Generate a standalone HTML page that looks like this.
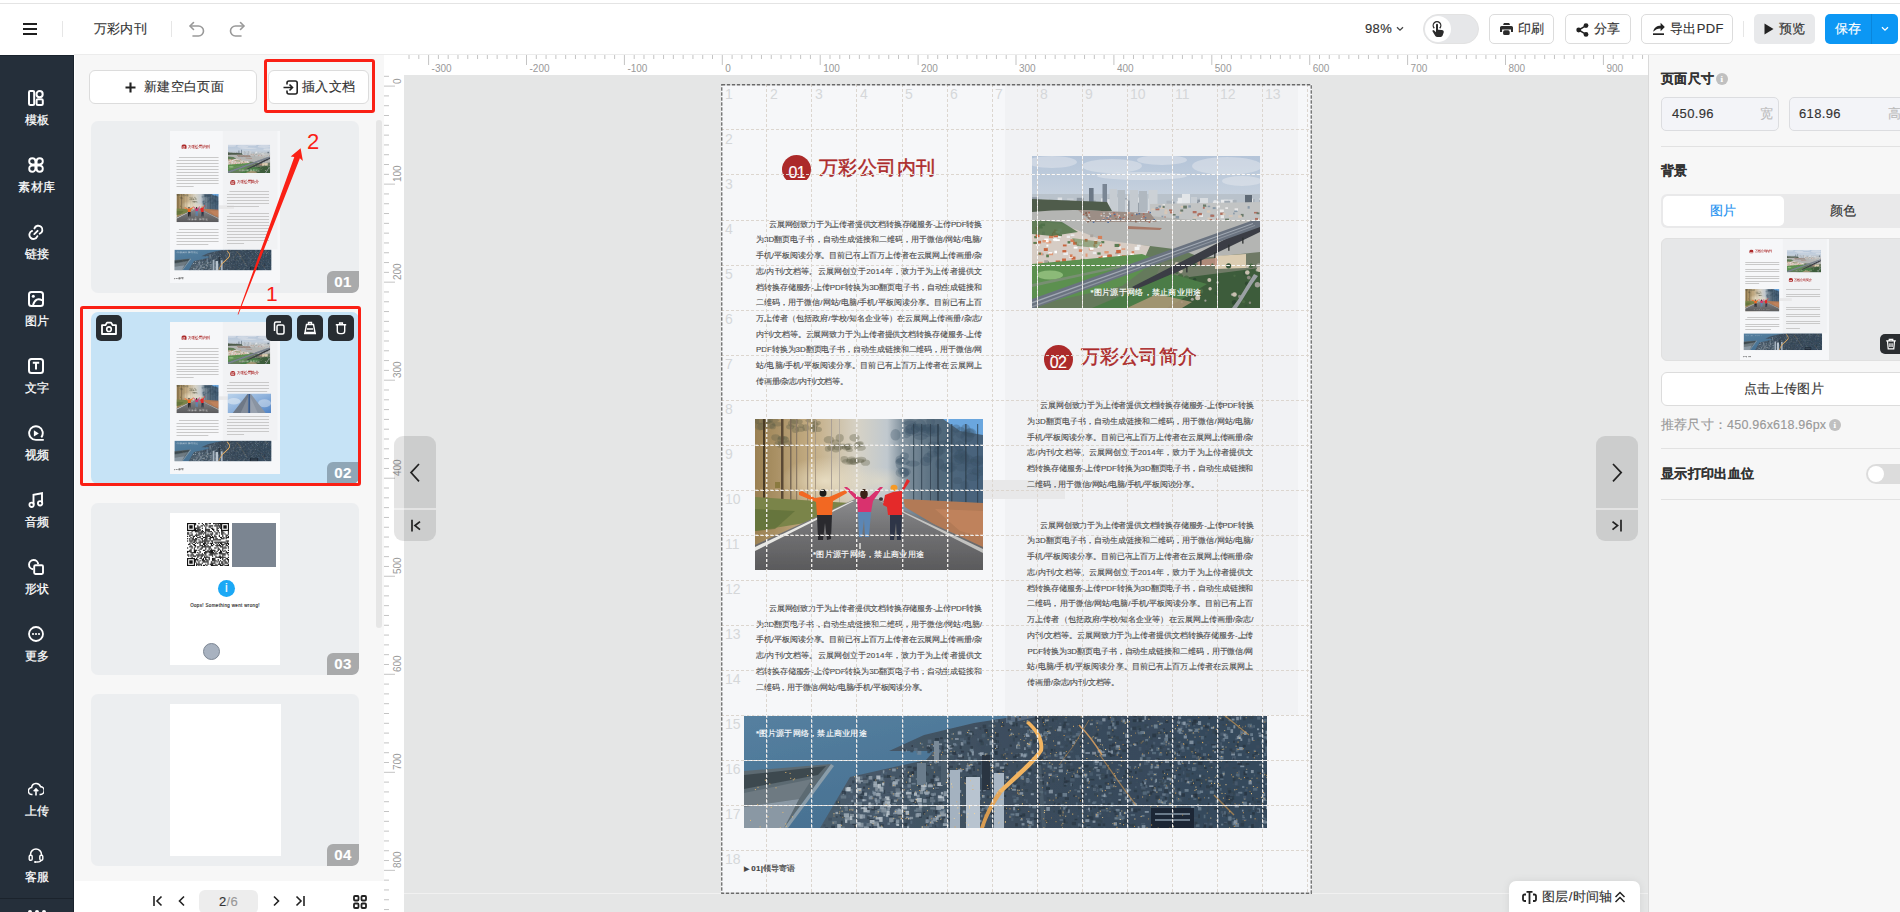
<!DOCTYPE html>
<html><head><meta charset="utf-8">
<style>
*{box-sizing:border-box;margin:0;padding:0}
html,body{width:1900px;height:912px;overflow:hidden;background:#fff;font-family:"Liberation Sans",sans-serif;color:#333;-webkit-text-stroke:0.15px currentColor;letter-spacing:0.35px}
.a{position:absolute}
/* header */
#topline{left:0;top:3px;width:1900px;height:1px;background:#e4e4e4}
.sep{width:1px;background:#e6e6e6}
.hbtn{height:30px;top:14px;border:1px solid #dcdcdc;border-radius:5px;background:#fff;font-size:13px;color:#333;line-height:28px;white-space:nowrap}
/* sidebar */
#side{left:0;top:55px;width:74px;height:857px;background:#252f3a}
.si{left:0;width:74px;text-align:center;color:#fff;font-size:12px}
.si svg{position:absolute;left:28px;top:0}
.si span{position:absolute;left:0;width:74px;top:23px;line-height:14px;-webkit-text-stroke:0.25px #fff}
/* left panel */
#lp{left:74px;top:55px;width:310px;height:826px;background:#f7f7f7;border-left:1px solid #fff}
.card{left:91px;width:268px;height:172px;background:#eceef0;border-radius:7px;overflow:hidden}
.badge{right:0;bottom:0;width:32px;height:22px;background:#a8a9aa;color:#fff;font-size:15px;font-weight:bold;text-align:center;line-height:22px;border-radius:6px 0 6px 0}
.thumb{left:79px;top:10px;width:110px;height:152px;background:#f4f5f7}
/* rulers */
.rul{background:#fff}
.rnum{font-size:10px;color:#999;position:absolute;white-space:nowrap;letter-spacing:0;-webkit-text-stroke:0}
#canvas{left:404px;top:75px;width:1244px;height:837px;background:#e5e6e6;overflow:hidden}
/* right panel */
#rp{left:1648px;top:55px;width:252px;height:857px;background:#f7f7f7;border-left:1px solid #dadada}

.tl{position:absolute;font-size:8px;line-height:12px;color:#4a4a4a;white-space:nowrap;-webkit-text-stroke:0.12px #4a4a4a}
.cap{position:absolute;font-size:8px;letter-spacing:0.28px;line-height:12px;color:#fff;white-space:nowrap}
.gn{position:absolute;font-size:14px;line-height:14px;color:#d5d7d9;-webkit-text-stroke:0}
.pg{position:absolute;width:591px;height:810px;background:#f6f7f9;letter-spacing:0}
.thumbp .tl{color:transparent;-webkit-text-stroke:0;background:linear-gradient(180deg,transparent 30%,#c9c9c9 30%,#c9c9c9 72%,transparent 72%)}
.thumbp .cap{color:rgba(255,255,255,.55);-webkit-text-stroke:0}
</style></head><body>
<!-- HEADER -->
<div class="a" id="topline"></div>
<div class="a" style="left:23px;top:23px;width:14px;height:2px;background:#1f1f1f"></div>
<div class="a" style="left:23px;top:28px;width:14px;height:2px;background:#1f1f1f"></div>
<div class="a" style="left:23px;top:33px;width:14px;height:2px;background:#1f1f1f"></div>
<div class="a sep" style="left:62px;top:21px;height:16px"></div>
<div class="a" style="left:93.5px;top:20px;font-size:13px;line-height:18px;color:#333">万彩内刊</div>
<div class="a sep" style="left:171px;top:21px;height:16px"></div>

<div class="a" style="left:1365px;top:20px;font-size:13px;line-height:18px;color:#333">98%</div>
<svg class="a" style="left:1395px;top:26px" width="10" height="6" viewBox="0 0 10 6"><path d="M2 1.2 L5 4.2 L8 1.2" fill="none" stroke="#444" stroke-width="1.3"/></svg>
<div class="a" style="left:1423px;top:14px;width:56px;height:30px;border-radius:15px;background:#e6e7e9;border:1px solid #e2e2e2"></div>
<div class="a" style="left:1425px;top:16px;width:26px;height:26px;border-radius:13px;background:#fff"></div>
<svg class="a" style="left:1428px;top:18px" width="20" height="22"><g transform="translate(-1428,-18)"><path d="M1434.3 28.2 A3.8 3.8 0 1 1 1439.7 28.2" fill="none" stroke="#2b2b2b" stroke-width="1.3"/><rect x="1436" y="23.8" width="2" height="8" rx="1" fill="#2b2b2b"/><path d="M1432.2 30.8 L1433.7 30.1 L1436 32.2 L1436 29.4 L1441.6 29.9 C1443.4 30.2 1444 31 1443.7 32.5 L1442.6 35.6 C1442.3 36.5 1441.6 37 1440.6 37 L1437.4 37 C1436.5 37 1435.8 36.6 1435.3 35.9z" fill="#2b2b2b"/></g></svg>
<div class="a hbtn" style="left:1489px;width:65px"></div>
<svg class="a" style="left:1499px;top:22px" width="15" height="14"><g transform="translate(-1499,-22)" fill="#2b2b2b"><path d="M1503.1 25 L1503.6 23.4 Q1503.8 23 1504.3 23 L1508.8 23 Q1509.3 23 1509.5 23.4 L1510 25z"/><path d="M1500 31.9 L1500 27.5 Q1500 25.9 1501.6 25.9 L1511.4 25.9 Q1513 25.9 1513 27.5 L1513 31.9 L1511 31.9 L1511 29.4 L1502.1 29.4 L1502.1 31.9z"/><rect x="1503.1" y="30.3" width="6.6" height="4.7" rx="1.6"/></g></svg>
<div class="a" style="left:1518px;top:20px;font-size:13px;line-height:18px">印刷</div>
<div class="a hbtn" style="left:1565px;width:66px"></div>
<svg class="a" style="left:1576px;top:22.5px" width="13" height="14" viewBox="0 0 13 14"><circle cx="10" cy="2.6" r="2.4" fill="#222"/><circle cx="2.7" cy="7" r="2.4" fill="#222"/><circle cx="10" cy="11.4" r="2.4" fill="#222"/><path d="M10 2.6 L2.7 7 L10 11.4" fill="none" stroke="#222" stroke-width="1.5"/></svg>
<div class="a" style="left:1594px;top:20px;font-size:13px;line-height:18px">分享</div>
<div class="a hbtn" style="left:1641px;width:92px"></div>
<svg class="a" style="left:1652px;top:21px" width="14" height="14" viewBox="0 0 14 14"><path d="M1 13.2 H12" stroke="#222" stroke-width="1.8"/><path d="M1.2 10.8 C2 6.5 4.8 4.8 8.6 4.8 V1.8 L12.8 6 L8.6 10.2 V7.4 C5.6 7.4 3.4 8.6 1.2 10.8z" fill="#222"/></svg>
<div class="a" style="left:1670px;top:20px;font-size:13px;line-height:18px">导出PDF</div>
<div class="a sep" style="left:1743px;top:21px;height:16px"></div>
<div class="a" style="left:1754px;top:14px;width:61px;height:30px;border-radius:5px;background:#e8e9eb"></div>
<svg class="a" style="left:1764px;top:23px" width="10" height="12" viewBox="0 0 10 12"><path d="M0.5 0.5 L9.5 6 L0.5 11.5z" fill="#222"/></svg>
<div class="a" style="left:1779px;top:20px;font-size:13px;line-height:18px">预览</div>
<div class="a" style="left:1825px;top:14px;width:73px;height:30px;border-radius:5px;background:#0c97f4"></div>
<div class="a" style="left:1871px;top:14px;width:1px;height:30px;background:#0a86dc"></div>
<div class="a" style="left:1835px;top:20px;font-size:13px;line-height:18px;color:#fff">保存</div>
<svg class="a" style="left:1880px;top:26px" width="10" height="6" viewBox="0 0 10 6"><path d="M2 1.2 L5 4.2 L8 1.2" fill="none" stroke="#fff" stroke-width="1.3"/></svg>
<svg class="a" style="left:188px;top:20px" width="18" height="18" viewBox="0 0 18 18"><path d="M5.5 2.5 L2 6 L5.5 9.5" fill="none" stroke="#999" stroke-width="1.6" stroke-linecap="round" stroke-linejoin="round"/><path d="M2.3 6 H10.5 a5 5 0 0 1 0 10 H5" fill="none" stroke="#999" stroke-width="1.6" stroke-linecap="round"/></svg>
<svg class="a" style="left:228px;top:20px" width="18" height="18" viewBox="0 0 18 18"><path d="M12.5 2.5 L16 6 L12.5 9.5" fill="none" stroke="#999" stroke-width="1.6" stroke-linecap="round" stroke-linejoin="round"/><path d="M15.7 6 H7.5 a5 5 0 0 0 0 10 H13" fill="none" stroke="#999" stroke-width="1.6" stroke-linecap="round"/></svg>

<!-- SIDEBAR -->
<div class="a" id="side"></div>
<div class="a" style="left:73px;top:55px;width:1px;height:857px;background:#1a232d"></div>
<div class="a" style="left:0;top:55px;width:74px;height:1px;background:#1a232d"></div>
<div class="a si" style="top:89.5px"><svg width="16" height="16" viewBox="0 0 16 16"><rect x="1" y="1" width="5.2" height="14" rx="1.3" fill="none" stroke="#fff" stroke-width="2"/><circle cx="11.6" cy="4.2" r="3.1" fill="none" stroke="#fff" stroke-width="2"/><rect x="8.6" y="9.2" width="6.2" height="5.8" rx="1.3" fill="none" stroke="#fff" stroke-width="2"/></svg><span>模板</span></div>
<div class="a si" style="top:156.5px"><svg width="16" height="16" viewBox="0 0 16 16"><path d="M4.3 1.2a3.1 3.1 0 0 1 3.1 3.1v3.1H4.3a3.1 3.1 0 0 1 0-6.2z" fill="none" stroke="#fff" stroke-width="1.9"/><path d="M11.7 1.2a3.1 3.1 0 0 1 0 6.2H8.6V4.3a3.1 3.1 0 0 1 3.1-3.1z" fill="none" stroke="#fff" stroke-width="1.9"/><path d="M4.3 14.8a3.1 3.1 0 0 1 0-6.2h3.1v3.1a3.1 3.1 0 0 1-3.1 3.1z" fill="none" stroke="#fff" stroke-width="1.9"/><path d="M11.7 14.8a3.1 3.1 0 0 1-3.1-3.1V8.6h3.1a3.1 3.1 0 0 1 0 6.2z" fill="none" stroke="#fff" stroke-width="1.9"/></svg><span>素材库</span></div>
<div class="a si" style="top:223.5px"><svg width="16" height="16" viewBox="0 0 16 16"><g fill="none" stroke="#fff" stroke-width="1.9" stroke-linecap="round"><path d="M6.45 4.4 A4.1 4.1 0 1 1 11.7 9.65"/><path d="M4.1 6.95 A4.1 4.1 0 1 0 9.35 12.2"/><path d="M6.3 10.1 L9.6 6.8"/></g></svg><span>链接</span></div>
<div class="a si" style="top:290.5px"><svg width="16" height="16" viewBox="0 0 16 16"><rect x="1" y="1" width="14" height="14" rx="2.5" fill="none" stroke="#fff" stroke-width="2"/><circle cx="5.3" cy="5.3" r="1.5" fill="#fff"/><path d="M5 14 C7 8 10 7 14.5 9.5" fill="none" stroke="#fff" stroke-width="1.9"/></svg><span>图片</span></div>
<div class="a si" style="top:357.5px"><svg width="16" height="16" viewBox="0 0 16 16"><rect x="1" y="1" width="14" height="14" rx="2.5" fill="none" stroke="#fff" stroke-width="2"/><path d="M4.8 4.8 H11.2 M8 4.8 V11.5" stroke="#fff" stroke-width="2"/></svg><span>文字</span></div>
<div class="a si" style="top:424.5px"><svg width="16" height="16" viewBox="0 0 16 16"><path d="M15.8 14.9 H7.9 A6.8 6.8 0 1 1 13.3 12.3" fill="none" stroke="#fff" stroke-width="1.9"/><path d="M5.9 5.3 L10.8 8.4 L5.9 11.5z" fill="#fff"/></svg><span>视频</span></div>
<div class="a si" style="top:491.5px"><svg width="16" height="16" viewBox="0 0 16 16"><path d="M5.5 12.5 V2.8 L14 1.2 V11" fill="none" stroke="#fff" stroke-width="1.9"/><circle cx="3.6" cy="12.8" r="2.2" fill="none" stroke="#fff" stroke-width="1.8"/><circle cx="12.1" cy="11.3" r="2.2" fill="none" stroke="#fff" stroke-width="1.8"/></svg><span>音频</span></div>
<div class="a si" style="top:558.5px"><svg width="16" height="16" viewBox="0 0 16 16"><path d="M5.2 10.2 A4.6 4.6 0 1 1 10.2 5.2" fill="none" stroke="#fff" stroke-width="1.9"/><rect x="6.2" y="6.2" width="8.8" height="8.8" rx="1.2" fill="none" stroke="#fff" stroke-width="1.9"/></svg><span>形状</span></div>
<div class="a si" style="top:625.5px"><svg width="16" height="16" viewBox="0 0 16 16"><circle cx="8" cy="8" r="7" fill="none" stroke="#fff" stroke-width="1.8"/><circle cx="5" cy="8" r="1.1" fill="#fff"/><circle cx="8" cy="8" r="1.1" fill="#fff"/><circle cx="11" cy="8" r="1.1" fill="#fff"/></svg><span>更多</span></div>
<div class="a si" style="top:780.5px"><svg width="16" height="16" viewBox="0 0 16 16"><path d="M4.5 13.5 H4 A3.5 3.5 0 0 1 3.6 6.5 A4.6 4.6 0 0 1 12.5 5.6 A3.9 3.9 0 0 1 12 13.5 H11.5" fill="none" stroke="#fff" stroke-width="1.6"/><path d="M8 14.5 V8.2 M5.7 10.2 L8 7.9 L10.3 10.2" fill="none" stroke="#fff" stroke-width="1.6"/></svg><span>上传</span></div>
<div class="a si" style="top:847px"><svg width="16" height="16" viewBox="0 0 16 16"><path d="M2.5 9 V7.5 a5.5 5.5 0 0 1 11 0 V9" fill="none" stroke="#fff" stroke-width="1.5"/><rect x="1.2" y="8.3" width="3" height="5" rx="1.3" fill="none" stroke="#fff" stroke-width="1.4"/><rect x="11.8" y="8.3" width="3" height="5" rx="1.3" fill="none" stroke="#fff" stroke-width="1.4"/><path d="M13.3 13 C13 14.8 11 15 9 15" fill="none" stroke="#fff" stroke-width="1.4"/><ellipse cx="7.5" cy="15" rx="1.6" ry="0.9" fill="#fff"/></svg><span>客服</span></div>
<div class="a" style="left:0;top:898px;width:74px;height:1px;background:#1b232c"></div>
<div class="a" style="left:28px;top:910px;width:4px;height:4px;border-radius:2px;background:#fff"></div><div class="a" style="left:35px;top:910px;width:4px;height:4px;border-radius:2px;background:#fff"></div><div class="a" style="left:42px;top:910px;width:4px;height:4px;border-radius:2px;background:#fff"></div>
<svg width="0" height="0" style="position:absolute;left:0;top:0"><defs><symbol id="ph1"><defs><linearGradient id="p1sky" x1="0" y1="0" x2="0" y2="1"><stop offset="0" stop-color="#b4c4d8"/><stop offset="0.35" stop-color="#cdd6e0"/><stop offset="1" stop-color="#d3d9e0"/></linearGradient></defs><rect width="228" height="152" fill="url(#p1sky)"/><filter id="p1b" x="0" y="0" width="1" height="1"><feGaussianBlur stdDeviation="0.6"/></filter><g filter="url(#p1b)"><ellipse cx="20" cy="6" rx="25" ry="6" fill="#e8ecf0" opacity=".45"/><ellipse cx="80" cy="10" rx="30" ry="7" fill="#e8ecf0" opacity=".45"/><ellipse cx="130" cy="4" rx="25" ry="5" fill="#e8ecf0" opacity=".45"/><ellipse cx="195" cy="10" rx="35" ry="9" fill="#e8ecf0" opacity=".45"/><ellipse cx="110" cy="20" rx="45" ry="4" fill="#e8ecf0" opacity=".45"/><ellipse cx="210" cy="25" rx="20" ry="5" fill="#e8ecf0" opacity=".45"/><rect x="0" y="38" width="228" height="16" fill="#b9c2cb"/><rect x="103.1" y="41.5" width="4.8" height="14.5" fill="#dde0e4"/><rect x="103.0" y="46.7" width="6.3" height="9.3" fill="#8d96a0"/><rect x="108.5" y="46.7" width="5.1" height="9.3" fill="#dde0e4"/><rect x="69.2" y="42.3" width="2.5" height="13.7" fill="#e8eaec"/><rect x="144.7" y="45.2" width="5.0" height="10.8" fill="#dde0e4"/><rect x="149.1" y="46.9" width="5.1" height="9.1" fill="#9ea8b2"/><rect x="189.6" y="47.8" width="2.3" height="8.2" fill="#c8ced4"/><rect x="136.7" y="45.7" width="5.9" height="10.3" fill="#8d96a0"/><rect x="192.1" y="43.5" width="4.6" height="12.5" fill="#dde0e4"/><rect x="1.0" y="43.4" width="2.4" height="12.6" fill="#dde0e4"/><rect x="227.5" y="42.1" width="7.0" height="13.9" fill="#e8eaec"/><rect x="57.9" y="44.4" width="5.8" height="11.6" fill="#9ea8b2"/><rect x="16.0" y="45.2" width="5.8" height="10.8" fill="#aab2ba"/><rect x="88.1" y="42.1" width="6.8" height="13.9" fill="#9ea8b2"/><rect x="48.7" y="47.6" width="6.6" height="8.4" fill="#dde0e4"/><rect x="223.5" y="47.5" width="4.0" height="8.5" fill="#e8eaec"/><rect x="45.3" y="45.6" width="5.4" height="10.4" fill="#aab2ba"/><rect x="75.8" y="42.7" width="6.8" height="13.3" fill="#9ea8b2"/><rect x="30.7" y="47.9" width="5.5" height="8.1" fill="#dde0e4"/><rect x="181.7" y="44.1" width="2.9" height="11.9" fill="#dde0e4"/><rect x="116.0" y="42.6" width="6.9" height="13.4" fill="#dde0e4"/><rect x="146.8" y="45.1" width="2.6" height="10.9" fill="#c8ced4"/><rect x="0.1" y="41.2" width="6.3" height="14.8" fill="#8d96a0"/><rect x="69.3" y="46.5" width="6.4" height="9.5" fill="#dde0e4"/><rect x="227.1" y="44.0" width="5.0" height="12.0" fill="#9ea8b2"/><rect x="225.6" y="46.2" width="3.1" height="9.8" fill="#8d96a0"/><rect x="75.0" y="47.5" width="3.5" height="8.5" fill="#9ea8b2"/><rect x="47.6" y="47.9" width="5.2" height="8.1" fill="#aab2ba"/><rect x="84.7" y="41.3" width="4.3" height="14.7" fill="#dde0e4"/><rect x="189.8" y="45.3" width="2.7" height="10.7" fill="#e8eaec"/><rect x="35.1" y="42.3" width="6.5" height="13.7" fill="#c8ced4"/><rect x="165.4" y="43.6" width="2.8" height="12.4" fill="#8d96a0"/><rect x="44.8" y="41.8" width="6.8" height="14.2" fill="#8d96a0"/><rect x="17.9" y="47.2" width="2.2" height="8.8" fill="#8d96a0"/><rect x="219.5" y="43.1" width="3.2" height="12.9" fill="#aab2ba"/><rect x="95.9" y="44.6" width="6.5" height="11.4" fill="#8d96a0"/><rect x="40.0" y="47.5" width="5.6" height="8.5" fill="#c8ced4"/><rect x="109.3" y="43.7" width="5.3" height="12.3" fill="#9ea8b2"/><rect x="63.9" y="46.6" width="6.6" height="9.4" fill="#9ea8b2"/><rect x="15.8" y="46.3" width="4.1" height="9.7" fill="#9ea8b2"/><rect x="40.2" y="44.0" width="3.8" height="12.0" fill="#c8ced4"/><rect x="21.0" y="44.8" width="2.7" height="11.2" fill="#aab2ba"/><rect x="149.8" y="43.9" width="5.5" height="12.1" fill="#c8ced4"/><rect x="134.5" y="44.7" width="6.6" height="11.3" fill="#aab2ba"/><rect x="159.8" y="47.9" width="6.8" height="8.1" fill="#e8eaec"/><rect x="17.1" y="45.8" width="2.3" height="10.2" fill="#c8ced4"/><rect x="227.9" y="44.2" width="2.4" height="11.8" fill="#e8eaec"/><rect x="10.1" y="42.8" width="6.7" height="13.2" fill="#c8ced4"/><rect x="180.9" y="45.5" width="6.6" height="10.5" fill="#e8eaec"/><rect x="107.9" y="42.0" width="2.4" height="14.0" fill="#9ea8b2"/><rect x="196.9" y="43.6" width="4.9" height="12.4" fill="#dde0e4"/><rect x="86.5" y="47.5" width="2.1" height="8.5" fill="#9ea8b2"/><rect x="145.8" y="41.8" width="7.0" height="14.2" fill="#e8eaec"/><rect x="75.3" y="43.1" width="6.7" height="12.9" fill="#dde0e4"/><rect x="100.4" y="47.4" width="6.2" height="8.6" fill="#8d96a0"/><rect x="6.8" y="44.6" width="5.0" height="11.4" fill="#c8ced4"/><rect x="218.3" y="42.5" width="2.6" height="13.5" fill="#e8eaec"/><rect x="209.9" y="47.9" width="3.3" height="8.1" fill="#aab2ba"/><rect x="32.7" y="44.4" width="5.1" height="11.6" fill="#aab2ba"/><rect x="150.5" y="41.8" width="4.2" height="14.2" fill="#aab2ba"/><rect x="92.3" y="43.6" width="3.3" height="12.4" fill="#c8ced4"/><rect x="200.7" y="43.9" width="3.9" height="12.1" fill="#aab2ba"/><rect x="47.9" y="45.5" width="2.7" height="10.5" fill="#9ea8b2"/><rect x="162.2" y="46.1" width="6.8" height="9.9" fill="#c8ced4"/><rect x="25.7" y="41.5" width="4.4" height="14.5" fill="#dde0e4"/><rect x="87.2" y="43.3" width="4.6" height="12.7" fill="#e8eaec"/><rect x="191.3" y="44.8" width="6.9" height="11.2" fill="#9ea8b2"/><rect x="188.9" y="43.7" width="3.4" height="12.3" fill="#e8eaec"/><rect x="161.6" y="45.8" width="4.9" height="10.2" fill="#8d96a0"/><rect x="4.4" y="44.8" width="2.7" height="11.2" fill="#9ea8b2"/><rect x="57" y="32" width="4.6" height="24" fill="#6c7886"/><rect x="70.5" y="28" width="4.5" height="28" fill="#7a8694"/><rect x="77.5" y="33" width="7.5" height="23" fill="#c6ccd2"/><rect x="85.5" y="34" width="7.5" height="22" fill="#b4bcc4"/><rect x="97.7" y="34" width="8.5" height="22" fill="#c4cad0"/><rect x="107" y="35" width="8" height="21" fill="#b0b8c0"/><rect x="116.5" y="34" width="9" height="22" fill="#ccd1d6"/><rect x="150" y="38" width="8" height="18" fill="#e2e5e8"/><rect x="159" y="41" width="6" height="15" fill="#c8ced4"/><rect x="168" y="42" width="8" height="14" fill="#d8dce0"/><rect x="213" y="39" width="7" height="17" fill="#5e6a76"/><rect x="0" y="88" width="228" height="64" fill="#657a5c"/><polygon points="0,43 75,46 80,55 50,58 0,60" fill="#4f5c4c"/><polygon points="118,48 228,46 228,64 160,66 118,62" fill="#c2c4c4"/><rect x="202.6" y="52.3" width="3.4" height="2.7" fill="#e8e8e8"/><rect x="167.1" y="58.1" width="3.1" height="2.7" fill="#e8e8e8"/><rect x="193.3" y="51.2" width="2.7" height="1.8" fill="#e8e8e8"/><rect x="201.1" y="56.6" width="1.6" height="1.8" fill="#8a9aa8"/><rect x="177.4" y="63.1" width="2.8" height="3.0" fill="#b07060"/><rect x="161.3" y="60.7" width="3.8" height="1.6" fill="#d8c8b8"/><rect x="132.3" y="55.3" width="3.1" height="2.9" fill="#d8c8b8"/><rect x="178.5" y="58.4" width="2.8" height="2.7" fill="#8a9aa8"/><rect x="169.0" y="58.4" width="2.0" height="2.6" fill="#e8e8e8"/><rect x="141.5" y="62.4" width="4.0" height="3.0" fill="#6a7a6a"/><rect x="225.4" y="62.9" width="2.2" height="2.6" fill="#e8e8e8"/><rect x="156.3" y="49.3" width="2.6" height="2.3" fill="#8a9aa8"/><rect x="171.6" y="48.5" width="3.5" height="1.6" fill="#e8e8e8"/><rect x="137.0" y="53.4" width="3.5" height="1.7" fill="#b07060"/><rect x="228.0" y="62.4" width="2.8" height="2.5" fill="#d8c8b8"/><rect x="222.0" y="55.9" width="3.9" height="1.6" fill="#b07060"/><rect x="166.3" y="56.9" width="3.6" height="2.3" fill="#b07060"/><rect x="175.5" y="61.5" width="2.9" height="2.0" fill="#d8c8b8"/><rect x="223.0" y="61.9" width="3.0" height="2.0" fill="#b07060"/><rect x="224.5" y="56.4" width="2.9" height="1.8" fill="#6a7a6a"/><rect x="130.6" y="48.1" width="2.4" height="2.3" fill="#e8e8e8"/><rect x="174.8" y="54.4" width="3.5" height="2.3" fill="#d8c8b8"/><rect x="128.3" y="50.7" width="3.8" height="2.2" fill="#d8c8b8"/><rect x="147.6" y="55.6" width="1.8" height="2.2" fill="#d8c8b8"/><rect x="175.7" y="49.7" width="2.5" height="1.5" fill="#8a9aa8"/><rect x="132.2" y="60.5" width="1.6" height="1.8" fill="#b07060"/><rect x="119.3" y="52.5" width="3.3" height="1.9" fill="#d8c8b8"/><rect x="129.5" y="59.7" width="1.8" height="2.3" fill="#8a9aa8"/><rect x="196.9" y="59.2" width="3.7" height="1.5" fill="#d8c8b8"/><rect x="208.8" y="57.9" width="2.8" height="2.8" fill="#6a7a6a"/><rect x="188.2" y="56.5" width="3.6" height="2.4" fill="#b07060"/><rect x="143.6" y="59.9" width="3.5" height="2.9" fill="#8a9aa8"/><rect x="184.3" y="62.3" width="2.0" height="2.7" fill="#b07060"/><rect x="215.6" y="50.1" width="2.1" height="2.6" fill="#8a9aa8"/><rect x="160.7" y="55.0" width="3.9" height="2.3" fill="#b07060"/><rect x="140.1" y="58.0" width="3.5" height="1.6" fill="#6a7a6a"/><rect x="193.1" y="62.6" width="3.9" height="1.7" fill="#6a7a6a"/><rect x="187.8" y="53.5" width="4.0" height="2.7" fill="#e8e8e8"/><rect x="171.0" y="48.4" width="3.4" height="2.4" fill="#6a7a6a"/><rect x="170.9" y="51.0" width="1.8" height="1.8" fill="#b07060"/><rect x="226.9" y="62.8" width="1.7" height="1.6" fill="#d8c8b8"/><rect x="126.5" y="49.5" width="2.5" height="2.1" fill="#8a9aa8"/><rect x="165.3" y="57.6" width="1.5" height="2.6" fill="#b07060"/><rect x="137.9" y="55.3" width="3.3" height="2.1" fill="#b07060"/><rect x="184.5" y="49.5" width="3.5" height="2.0" fill="#e8e8e8"/><rect x="206.2" y="59.3" width="3.7" height="2.4" fill="#d8c8b8"/><rect x="180.7" y="51.1" width="3.0" height="2.0" fill="#8a9aa8"/><rect x="148.7" y="49.9" width="3.4" height="1.7" fill="#d8c8b8"/><rect x="132.7" y="53.3" width="2.8" height="2.1" fill="#d8c8b8"/><rect x="202.2" y="54.5" width="3.3" height="1.6" fill="#8a9aa8"/><rect x="151.2" y="49.6" width="3.7" height="3.0" fill="#6a7a6a"/><rect x="123.5" y="52.4" width="3.9" height="1.9" fill="#b07060"/><rect x="190.6" y="57.1" width="2.8" height="2.1" fill="#d8c8b8"/><rect x="188.6" y="59.2" width="3.4" height="3.0" fill="#e8e8e8"/><rect x="130.6" y="49.7" width="2.1" height="2.2" fill="#6a7a6a"/><rect x="123.6" y="51.1" width="2.4" height="1.6" fill="#8a9aa8"/><rect x="148.3" y="53.5" width="2.9" height="2.1" fill="#6a7a6a"/><rect x="180.5" y="63.9" width="3.1" height="2.7" fill="#e8e8e8"/><rect x="178.4" y="58.7" width="3.9" height="2.1" fill="#b07060"/><rect x="160.4" y="63.5" width="3.6" height="2.3" fill="#6a7a6a"/><path d="M0 56 C20 54 45 53 70 55 L118 60 L160 64 L228 64 L228 102 L175 104 L150 94 L118 90 L70 86 L35 80 L0 72z" fill="#b4b5b3"/><polygon points="46,54 118,57 125,66 60,66" fill="#9c8e86"/><rect x="54.4" y="65.4" width="1.6" height="1.3" fill="#806050"/><rect x="71.3" y="59.4" width="1.6" height="1.3" fill="#d0d0d0"/><rect x="77.4" y="58.1" width="1.6" height="1.3" fill="#d0d0d0"/><rect x="92.0" y="58.1" width="1.6" height="1.3" fill="#d0d0d0"/><rect x="52.0" y="63.5" width="1.6" height="1.3" fill="#d0a090"/><rect x="53.2" y="56.7" width="1.6" height="1.3" fill="#806050"/><rect x="54.0" y="58.5" width="1.6" height="1.3" fill="#806050"/><rect x="53.8" y="65.9" width="1.6" height="1.3" fill="#d0d0d0"/><rect x="55.5" y="65.0" width="1.6" height="1.3" fill="#806050"/><rect x="103.9" y="57.8" width="1.6" height="1.3" fill="#5070a0"/><rect x="53.4" y="56.1" width="1.6" height="1.3" fill="#806050"/><rect x="60.8" y="65.6" width="1.6" height="1.3" fill="#5070a0"/><rect x="95.3" y="56.3" width="1.6" height="1.3" fill="#d0a090"/><rect x="81.3" y="56.3" width="1.6" height="1.3" fill="#b06050"/><rect x="76.8" y="56.7" width="1.6" height="1.3" fill="#d0d0d0"/><rect x="83.2" y="62.3" width="1.6" height="1.3" fill="#806050"/><rect x="95.1" y="62.0" width="1.6" height="1.3" fill="#806050"/><rect x="77.3" y="63.2" width="1.6" height="1.3" fill="#5070a0"/><rect x="121.4" y="63.1" width="1.6" height="1.3" fill="#5070a0"/><rect x="86.1" y="60.5" width="1.6" height="1.3" fill="#d0d0d0"/><rect x="108.8" y="61.9" width="1.6" height="1.3" fill="#d0d0d0"/><rect x="70.6" y="61.7" width="1.6" height="1.3" fill="#d0a090"/><rect x="102.4" y="57.1" width="1.6" height="1.3" fill="#d0d0d0"/><rect x="106.5" y="57.1" width="1.6" height="1.3" fill="#5070a0"/><rect x="87.7" y="62.2" width="1.6" height="1.3" fill="#5070a0"/><rect x="115.9" y="55.4" width="1.6" height="1.3" fill="#b06050"/><rect x="50.7" y="57.9" width="1.6" height="1.3" fill="#b06050"/><rect x="96.8" y="56.1" width="1.6" height="1.3" fill="#d0a090"/><rect x="70.9" y="63.3" width="1.6" height="1.3" fill="#5070a0"/><rect x="91.3" y="61.9" width="1.6" height="1.3" fill="#d0d0d0"/><rect x="86.3" y="58.9" width="1.6" height="1.3" fill="#d0d0d0"/><rect x="75.8" y="63.2" width="1.6" height="1.3" fill="#b06050"/><rect x="110.2" y="59.9" width="1.6" height="1.3" fill="#d0a090"/><rect x="112.8" y="63.5" width="1.6" height="1.3" fill="#806050"/><rect x="81.8" y="57.8" width="1.6" height="1.3" fill="#5070a0"/><rect x="77.7" y="62.2" width="1.6" height="1.3" fill="#d0a090"/><rect x="74.4" y="61.0" width="1.6" height="1.3" fill="#5070a0"/><rect x="82.1" y="59.1" width="1.6" height="1.3" fill="#b06050"/><rect x="84.7" y="58.6" width="1.6" height="1.3" fill="#d0a090"/><rect x="56.2" y="61.2" width="1.6" height="1.3" fill="#806050"/><rect x="111.1" y="60.1" width="1.6" height="1.3" fill="#b06050"/><rect x="55.7" y="57.3" width="1.6" height="1.3" fill="#d0a090"/><rect x="56.1" y="58.3" width="1.6" height="1.3" fill="#d0d0d0"/><rect x="71.2" y="56.6" width="1.6" height="1.3" fill="#d0d0d0"/><rect x="99.3" y="58.6" width="1.6" height="1.3" fill="#b06050"/><rect x="74.2" y="59.9" width="1.6" height="1.3" fill="#d0a090"/><rect x="118.9" y="65.3" width="1.6" height="1.3" fill="#d0d0d0"/><rect x="82.8" y="63.8" width="1.6" height="1.3" fill="#d0d0d0"/><rect x="84.4" y="57.4" width="1.6" height="1.3" fill="#d0a090"/><rect x="68.6" y="59.0" width="1.6" height="1.3" fill="#d0d0d0"/><rect x="51.8" y="62.4" width="1.6" height="1.3" fill="#d0a090"/><rect x="79.1" y="57.1" width="1.6" height="1.3" fill="#d0a090"/><rect x="77.6" y="59.3" width="1.6" height="1.3" fill="#5070a0"/><rect x="112.7" y="61.2" width="1.6" height="1.3" fill="#5070a0"/><rect x="56.7" y="60.0" width="1.6" height="1.3" fill="#d0d0d0"/><rect x="110.9" y="57.4" width="1.6" height="1.3" fill="#b06050"/><rect x="90.8" y="61.2" width="1.6" height="1.3" fill="#b06050"/><rect x="98.8" y="63.8" width="1.6" height="1.3" fill="#b06050"/><rect x="93.6" y="58.4" width="1.6" height="1.3" fill="#d0a090"/><rect x="56.3" y="55.9" width="1.6" height="1.3" fill="#b06050"/><rect x="117.4" y="55.9" width="1.6" height="1.3" fill="#5070a0"/><rect x="57.3" y="64.0" width="1.6" height="1.3" fill="#806050"/><rect x="68.4" y="57.4" width="1.6" height="1.3" fill="#d0a090"/><rect x="75.4" y="60.0" width="1.6" height="1.3" fill="#d0d0d0"/><rect x="75.3" y="65.7" width="1.6" height="1.3" fill="#5070a0"/><rect x="87.0" y="60.9" width="1.6" height="1.3" fill="#b06050"/><rect x="103.1" y="65.1" width="1.6" height="1.3" fill="#806050"/><rect x="106.8" y="65.8" width="1.6" height="1.3" fill="#d0d0d0"/><rect x="114.0" y="63.9" width="1.6" height="1.3" fill="#b06050"/><rect x="116.6" y="65.5" width="1.6" height="1.3" fill="#b06050"/><polygon points="95,70 130,72 128,74 96,73" fill="#a06048" opacity=".7"/><path d="M0 65 L30 68 L70 84 L118 90 L110 108 L0 110z" fill="#d6ccc4"/><rect x="60.8" y="95.8" width="3.3" height="2.3" fill="#ececec"/><rect x="17.0" y="97.1" width="4.1" height="2.1" fill="#e09a78"/><rect x="45.2" y="88.2" width="4.9" height="1.6" fill="#aaa49e"/><rect x="75.2" y="98.6" width="4.7" height="3.0" fill="#c8663f"/><rect x="2.0" y="86.2" width="2.9" height="1.9" fill="#d4805a"/><rect x="41.7" y="90.7" width="3.8" height="1.9" fill="#ffffff"/><rect x="21.5" y="77.8" width="4.7" height="3.4" fill="#c8663f"/><rect x="72.7" y="105.6" width="4.6" height="2.5" fill="#ffffff"/><rect x="46.7" y="106.1" width="3.4" height="1.9" fill="#ececec"/><rect x="5.8" y="105.8" width="4.9" height="3.1" fill="#e09a78"/><rect x="89.8" y="99.1" width="4.0" height="2.0" fill="#d4805a"/><rect x="1.3" y="85.9" width="3.4" height="2.0" fill="#5c7c52"/><rect x="48.9" y="102.7" width="2.5" height="2.1" fill="#e09a78"/><rect x="30.1" y="102.5" width="3.9" height="3.5" fill="#c8663f"/><rect x="30.9" y="88.5" width="3.7" height="1.9" fill="#c8663f"/><rect x="23.7" y="104.5" width="4.5" height="1.7" fill="#c8663f"/><rect x="31.3" y="96.1" width="4.7" height="2.9" fill="#ececec"/><rect x="9.6" y="97.4" width="2.1" height="1.9" fill="#aaa49e"/><rect x="22.4" y="94.7" width="2.6" height="2.6" fill="#ffffff"/><rect x="35.5" y="85.6" width="3.1" height="2.9" fill="#ececec"/><rect x="12.3" y="82.6" width="4.2" height="3.1" fill="#ffffff"/><rect x="14.1" y="84.7" width="4.1" height="2.5" fill="#e09a78"/><rect x="89.5" y="102.0" width="4.7" height="1.8" fill="#f4f4f4"/><rect x="72.8" y="105.4" width="4.9" height="3.0" fill="#aaa49e"/><rect x="21.9" y="81.8" width="3.0" height="3.4" fill="#ececec"/><rect x="65.3" y="96.4" width="3.3" height="2.3" fill="#5c7c52"/><rect x="11.8" y="92.1" width="4.0" height="2.9" fill="#c8663f"/><rect x="20.9" y="82.9" width="3.8" height="1.7" fill="#ffffff"/><rect x="26.3" y="72.6" width="3.3" height="3.0" fill="#ececec"/><rect x="39.6" y="100.6" width="3.9" height="3.0" fill="#c8663f"/><rect x="38.4" y="83.3" width="4.2" height="2.7" fill="#d4805a"/><rect x="36.9" y="99.1" width="4.0" height="2.7" fill="#f4f4f4"/><rect x="2.2" y="79.9" width="2.9" height="2.4" fill="#5c7c52"/><rect x="38.6" y="78.3" width="3.8" height="1.8" fill="#ececec"/><rect x="88.9" y="103.9" width="3.1" height="2.5" fill="#f4f4f4"/><rect x="16.4" y="96.0" width="3.7" height="1.6" fill="#f4f4f4"/><rect x="76.5" y="98.6" width="2.7" height="2.7" fill="#c8663f"/><rect x="104.9" y="88.8" width="3.7" height="2.0" fill="#ececec"/><rect x="105.5" y="107.7" width="3.8" height="1.7" fill="#5c7c52"/><rect x="66.5" y="100.9" width="3.8" height="3.1" fill="#c8663f"/><rect x="52.7" y="82.9" width="2.9" height="2.8" fill="#c8663f"/><rect x="68.7" y="99.8" width="2.5" height="2.3" fill="#d4805a"/><rect x="3.8" y="88.2" width="3.7" height="1.8" fill="#ececec"/><rect x="65.9" y="79.9" width="4.2" height="3.1" fill="#d4805a"/><rect x="46.8" y="86.9" width="3.4" height="2.3" fill="#ececec"/><rect x="72.4" y="95.0" width="4.3" height="2.5" fill="#e09a78"/><rect x="115.4" y="101.2" width="4.5" height="1.7" fill="#e09a78"/><rect x="13.3" y="105.4" width="3.6" height="2.4" fill="#5c7c52"/><rect x="6.3" y="96.5" width="4.2" height="2.7" fill="#e09a78"/><rect x="14.4" y="84.8" width="4.9" height="2.5" fill="#e09a78"/><rect x="12.2" y="104.2" width="4.0" height="3.4" fill="#aaa49e"/><rect x="102.1" y="108.0" width="4.6" height="2.3" fill="#5c7c52"/><rect x="86.6" y="89.8" width="2.3" height="3.1" fill="#ececec"/><rect x="14.4" y="88.6" width="2.0" height="2.0" fill="#ffffff"/><rect x="34.7" y="79.6" width="3.3" height="2.4" fill="#ececec"/><rect x="35.5" y="85.1" width="2.9" height="2.5" fill="#5c7c52"/><rect x="108.3" y="107.0" width="4.6" height="1.9" fill="#ffffff"/><rect x="99.6" y="95.1" width="2.6" height="3.2" fill="#d4805a"/><rect x="41.1" y="85.8" width="3.9" height="2.9" fill="#c8663f"/><rect x="64.9" y="88.4" width="2.6" height="3.3" fill="#f4f4f4"/><rect x="5.8" y="70.5" width="4.9" height="2.0" fill="#5c7c52"/><rect x="48.8" y="102.9" width="4.1" height="3.4" fill="#5c7c52"/><rect x="25.9" y="78.9" width="2.8" height="2.9" fill="#f4f4f4"/><rect x="58.2" y="78.4" width="3.1" height="2.8" fill="#aaa49e"/><rect x="102.6" y="90.8" width="4.9" height="3.3" fill="#f4f4f4"/><rect x="20.9" y="75.5" width="3.9" height="1.7" fill="#c8663f"/><rect x="61.3" y="88.3" width="2.0" height="2.7" fill="#d4805a"/><rect x="62.3" y="83.8" width="2.5" height="3.5" fill="#ececec"/><rect x="22.0" y="73.5" width="2.6" height="3.3" fill="#d4805a"/><rect x="53.5" y="97.5" width="2.0" height="3.3" fill="#e09a78"/><rect x="7.0" y="68.7" width="3.0" height="2.5" fill="#5c7c52"/><rect x="3.7" y="78.2" width="3.8" height="3.0" fill="#c8663f"/><rect x="13.0" y="84.3" width="3.6" height="2.0" fill="#ffffff"/><rect x="83.1" y="96.3" width="3.5" height="1.9" fill="#aaa49e"/><rect x="67.3" y="87.0" width="2.6" height="3.4" fill="#d4805a"/><rect x="6.1" y="84.8" width="3.0" height="2.7" fill="#c8663f"/><rect x="70.6" y="99.9" width="4.2" height="3.2" fill="#ffffff"/><rect x="3.6" y="70.8" width="3.7" height="2.6" fill="#c8663f"/><rect x="17.0" y="79.1" width="4.1" height="3.1" fill="#d4805a"/><rect x="85.7" y="98.8" width="2.3" height="3.1" fill="#ffffff"/><rect x="19.9" y="76.7" width="3.5" height="2.8" fill="#c8663f"/><rect x="69.1" y="85.1" width="3.2" height="2.2" fill="#5c7c52"/><rect x="25.1" y="106.8" width="2.4" height="3.0" fill="#d4805a"/><rect x="86.4" y="87.9" width="2.0" height="2.3" fill="#d4805a"/><rect x="64.5" y="85.8" width="4.9" height="2.9" fill="#ececec"/><rect x="83.2" y="107.0" width="2.9" height="1.7" fill="#f4f4f4"/><rect x="10.0" y="75.5" width="3.0" height="3.5" fill="#aaa49e"/><rect x="46.8" y="93.3" width="4.2" height="2.6" fill="#d4805a"/><rect x="105.8" y="103.1" width="3.4" height="2.3" fill="#c8663f"/><rect x="23.6" y="75.0" width="4.3" height="2.4" fill="#ffffff"/><rect x="56.9" y="92.3" width="4.6" height="1.9" fill="#c8663f"/><rect x="21.1" y="77.0" width="3.7" height="2.8" fill="#e09a78"/><rect x="6.6" y="96.6" width="2.4" height="2.0" fill="#5c7c52"/><rect x="115.8" y="101.2" width="2.2" height="3.3" fill="#ffffff"/><rect x="37.7" y="98.4" width="2.9" height="2.7" fill="#d4805a"/><rect x="24.2" y="83.2" width="3.6" height="1.8" fill="#ffffff"/><rect x="84.2" y="94.0" width="4.6" height="3.2" fill="#c8663f"/><rect x="62.1" y="84.9" width="3.2" height="3.2" fill="#c8663f"/><rect x="26.2" y="78.3" width="3.8" height="1.8" fill="#5c7c52"/><rect x="98.4" y="97.4" width="3.7" height="3.1" fill="#ffffff"/><rect x="77.8" y="104.6" width="3.7" height="2.2" fill="#f4f4f4"/><rect x="14.2" y="98.5" width="2.7" height="2.8" fill="#5c7c52"/><rect x="10.4" y="84.0" width="3.5" height="2.5" fill="#e09a78"/><rect x="82.6" y="87.9" width="4.7" height="3.1" fill="#5c7c52"/><rect x="106.1" y="103.9" width="3.1" height="1.6" fill="#ececec"/><rect x="57.5" y="90.6" width="4.2" height="3.3" fill="#ffffff"/><rect x="8.4" y="67.5" width="4.7" height="2.6" fill="#5c7c52"/><rect x="30.4" y="94.1" width="3.9" height="2.3" fill="#c8663f"/><rect x="39.6" y="103.7" width="3.7" height="3.4" fill="#d4805a"/><rect x="89.5" y="92.3" width="3.8" height="1.6" fill="#e09a78"/><polygon points="0,64 30,66 46,76 20,80 0,78" fill="#4e7046" opacity=".85"/><polygon points="40,82 70,86 65,92 45,90" fill="#6a8a58" opacity=".6"/><polygon points="0,108 110,98 125,104 90,130 0,150" fill="#5c9050"/><ellipse cx="18" cy="119" rx="13" ry="4.5" fill="#8cba78"/><polygon points="0,128 95,108 96,110 0,131" fill="#8a9088" opacity=".6"/><polygon points="130,106 228,96 228,152 110,152" fill="#6f7a66"/><polygon points="183,100 214,98 214,112 183,113" fill="#dccdb2"/><polygon points="165,104 185,102 185,110 166,110" fill="#c09080" opacity=".8"/><polygon points="150,122 228,112 228,152 135,152" fill="#3c5c3a"/><circle cx="136.7" cy="128.4" r="1.7" fill="#8a8a80"/><circle cx="219.1" cy="109.7" r="2.2" fill="#4a6a44"/><circle cx="156.7" cy="129.8" r="2.8" fill="#8a8a80"/><circle cx="144.7" cy="116.5" r="1.5" fill="#4a6a44"/><circle cx="151.6" cy="130.9" r="2.8" fill="#37553a"/><circle cx="130.3" cy="132.1" r="2.4" fill="#a0a098"/><circle cx="137.7" cy="144.2" r="2.7" fill="#a0a098"/><circle cx="162.7" cy="123.3" r="1.6" fill="#2e4a30"/><circle cx="200.2" cy="138.6" r="1.3" fill="#a0a098"/><circle cx="148.8" cy="115.1" r="2.1" fill="#c8c0b0"/><circle cx="178.1" cy="132.8" r="1.7" fill="#c8c0b0"/><circle cx="166.0" cy="137.4" r="1.4" fill="#8a8a80"/><circle cx="154.4" cy="122.3" r="2.7" fill="#4a6a44"/><circle cx="202.3" cy="146.6" r="2.5" fill="#2e4a30"/><circle cx="216.8" cy="121.6" r="1.9" fill="#8a8a80"/><circle cx="196.6" cy="109.8" r="2.6" fill="#37553a"/><circle cx="215.2" cy="110.4" r="1.7" fill="#c8c0b0"/><circle cx="202.5" cy="138.5" r="2.3" fill="#c8c0b0"/><circle cx="154.7" cy="139.5" r="1.3" fill="#c8c0b0"/><circle cx="213.9" cy="117.0" r="2.5" fill="#37553a"/><circle cx="185.6" cy="126.5" r="1.2" fill="#a0a098"/><circle cx="202.5" cy="119.8" r="1.2" fill="#4a6a44"/><circle cx="166.9" cy="137.5" r="2.2" fill="#4a6a44"/><circle cx="225.4" cy="128.8" r="2.7" fill="#a0a098"/><circle cx="225.1" cy="113.9" r="1.5" fill="#a0a098"/><circle cx="154.7" cy="137.3" r="2.7" fill="#8a8a80"/><circle cx="226.9" cy="110.1" r="2.8" fill="#a0a098"/><circle cx="215.3" cy="116.5" r="2.3" fill="#c8c0b0"/><circle cx="227.4" cy="113.3" r="2.6" fill="#c8c0b0"/><circle cx="211.6" cy="145.6" r="1.7" fill="#4a6a44"/><circle cx="160.3" cy="143.2" r="1.5" fill="#a0a098"/><circle cx="168.4" cy="135.2" r="2.8" fill="#4a6a44"/><circle cx="168.2" cy="138.5" r="1.5" fill="#37553a"/><circle cx="214.9" cy="127.5" r="2.0" fill="#2e4a30"/><circle cx="217.9" cy="146.7" r="1.2" fill="#8a8a80"/><circle cx="161.7" cy="108.8" r="2.0" fill="#37553a"/><circle cx="156.8" cy="125.6" r="1.4" fill="#c8c0b0"/><circle cx="177.3" cy="124.1" r="2.0" fill="#c8c0b0"/><circle cx="144.9" cy="108.3" r="2.2" fill="#c8c0b0"/><circle cx="130.4" cy="122.8" r="2.8" fill="#4a6a44"/><circle cx="149.8" cy="146.2" r="1.1" fill="#8a8a80"/><circle cx="164.4" cy="132.6" r="1.1" fill="#37553a"/><circle cx="184.0" cy="136.9" r="1.5" fill="#37553a"/><circle cx="148.5" cy="120.8" r="2.8" fill="#4a6a44"/><circle cx="173.4" cy="144.7" r="1.1" fill="#a0a098"/><circle cx="214.0" cy="149.6" r="1.2" fill="#37553a"/><circle cx="137.3" cy="123.8" r="1.6" fill="#37553a"/><circle cx="180.4" cy="108.5" r="1.1" fill="#4a6a44"/><circle cx="165.7" cy="141.7" r="2.5" fill="#c8c0b0"/><circle cx="207.6" cy="140.4" r="1.6" fill="#8a8a80"/><path d="M222 118 C214 130 208 142 200 152 L205 152 C212 142 218 130 226 120z" fill="#9aa0a4"/><polygon points="100,131 219,70 228,70 228,76 106,135" fill="#3a3e44"/><rect x="112" y="132.0" width="1.6" height="6" fill="#2a2d30" opacity=".8"/><rect x="126" y="124.8" width="1.6" height="6" fill="#2a2d30" opacity=".8"/><rect x="140" y="117.6" width="1.6" height="6" fill="#2a2d30" opacity=".8"/><rect x="154" y="110.4" width="1.6" height="6" fill="#2a2d30" opacity=".8"/><rect x="168" y="103.2" width="1.6" height="6" fill="#2a2d30" opacity=".8"/><rect x="182" y="96.0" width="1.6" height="6" fill="#2a2d30" opacity=".8"/><rect x="196" y="88.8" width="1.6" height="6" fill="#2a2d30" opacity=".8"/><rect x="210" y="81.6" width="1.6" height="6" fill="#2a2d30" opacity=".8"/><polygon points="0,143 219,65 228,65 228,71 0,153" fill="#6b7380"/><polygon points="0,146 221,67 221,68 0,147.5" fill="#a2aab4"/><polygon points="0,150 223,69 223,70 0,151.5" fill="#8e96a0"/><polygon points="60,152 140,118 175,128 135,152" fill="#4c7c46"/><polygon points="95,152 125,138 160,146 150,152" fill="#b49a7c" opacity=".8"/></g></symbol><symbol id="ph2"><defs><linearGradient id="p2a" x1="0" y1="0" x2="1" y2="0"><stop offset="0" stop-color="#9a8052"/><stop offset="0.25" stop-color="#c4ad84"/><stop offset="0.45" stop-color="#d6d2c6"/><stop offset="0.58" stop-color="#c0c8ce"/><stop offset="0.64" stop-color="#8696a2"/><stop offset="0.8" stop-color="#52687a"/><stop offset="1" stop-color="#46627c"/></linearGradient><linearGradient id="p2r" x1="0" y1="0" x2="0" y2="1"><stop offset="0" stop-color="#8c8c8e"/><stop offset="0.4" stop-color="#747476"/><stop offset="1" stop-color="#5a5a5c"/></linearGradient><radialGradient id="p2f" cx="0.5" cy="0.5" r="0.5"><stop offset="0" stop-color="#ece2c8" stop-opacity=".85"/><stop offset="1" stop-color="#ece2c8" stop-opacity="0"/></radialGradient></defs><filter id="p2b" x="0" y="0" width="1" height="1"><feGaussianBlur stdDeviation="0.4"/></filter><g filter="url(#p2b)"><rect width="228" height="151" fill="url(#p2a)"/><path d="M188 0 L228 0 L228 16 L205 12z" fill="#6aa6de"/><ellipse cx="14.9" cy="5.9" rx="5.4" ry="3.9" fill="#5e5e48" opacity=".35"/><ellipse cx="17.8" cy="7.4" rx="3.1" ry="2.9" fill="#5e5e48" opacity=".35"/><ellipse cx="22.6" cy="5.2" rx="5.7" ry="2.2" fill="#5e5e48" opacity=".35"/><ellipse cx="11.3" cy="2.0" rx="4.6" ry="3.1" fill="#5e5e48" opacity=".35"/><ellipse cx="0.3" cy="1.7" rx="3.8" ry="3.8" fill="#5e5e48" opacity=".35"/><ellipse cx="18.4" cy="1.3" rx="5.4" ry="2.3" fill="#5e5e48" opacity=".35"/><ellipse cx="14.8" cy="1.0" rx="3.0" ry="3.7" fill="#5e5e48" opacity=".35"/><ellipse cx="5.0" cy="1.7" rx="5.9" ry="3.7" fill="#5e5e48" opacity=".35"/><ellipse cx="6.9" cy="7.7" rx="4.6" ry="3.4" fill="#5e5e48" opacity=".35"/><ellipse cx="4.9" cy="7.5" rx="5.1" ry="3.9" fill="#5e5e48" opacity=".35"/><ellipse cx="61.8" cy="4.0" rx="4.1" ry="2.3" fill="#5e5e48" opacity=".35"/><ellipse cx="39.4" cy="1.7" rx="3.9" ry="3.2" fill="#5e5e48" opacity=".35"/><ellipse cx="35.1" cy="7.8" rx="4.0" ry="2.6" fill="#5e5e48" opacity=".35"/><ellipse cx="59.6" cy="5.8" rx="3.9" ry="3.0" fill="#5e5e48" opacity=".35"/><ellipse cx="56.1" cy="1.6" rx="5.9" ry="2.0" fill="#5e5e48" opacity=".35"/><ellipse cx="57.5" cy="9.4" rx="3.1" ry="3.6" fill="#5e5e48" opacity=".35"/><ellipse cx="46.0" cy="6.8" rx="3.0" ry="2.1" fill="#5e5e48" opacity=".35"/><ellipse cx="40.4" cy="10.6" rx="3.6" ry="3.5" fill="#5e5e48" opacity=".35"/><ellipse cx="62.9" cy="10.4" rx="4.0" ry="2.7" fill="#5e5e48" opacity=".35"/><ellipse cx="50.7" cy="8.8" rx="3.3" ry="3.5" fill="#5e5e48" opacity=".35"/><ellipse cx="58.9" cy="9.6" rx="3.1" ry="3.9" fill="#5e5e48" opacity=".35"/><ellipse cx="37.7" cy="4.4" rx="4.8" ry="3.8" fill="#5e5e48" opacity=".35"/><ellipse cx="45.2" cy="10.2" rx="4.6" ry="2.6" fill="#5e5e48" opacity=".35"/><ellipse cx="44.5" cy="2.8" rx="3.2" ry="2.3" fill="#5e5e48" opacity=".35"/><ellipse cx="94.4" cy="31.0" rx="3.5" ry="2.1" fill="#5e5e48" opacity=".35"/><ellipse cx="104.5" cy="24.5" rx="4.2" ry="2.5" fill="#5e5e48" opacity=".35"/><ellipse cx="91.2" cy="28.6" rx="4.4" ry="2.8" fill="#5e5e48" opacity=".35"/><ellipse cx="72.9" cy="29.8" rx="3.1" ry="3.0" fill="#5e5e48" opacity=".35"/><ellipse cx="99.5" cy="18.8" rx="5.2" ry="3.9" fill="#5e5e48" opacity=".35"/><ellipse cx="92.4" cy="28.0" rx="3.3" ry="2.9" fill="#5e5e48" opacity=".35"/><ellipse cx="76.1" cy="28.8" rx="3.9" ry="2.9" fill="#5e5e48" opacity=".35"/><ellipse cx="105.0" cy="28.9" rx="5.9" ry="2.9" fill="#5e5e48" opacity=".35"/><ellipse cx="87.6" cy="27.2" rx="4.4" ry="2.6" fill="#5e5e48" opacity=".35"/><ellipse cx="84.7" cy="19.1" rx="4.1" ry="4.0" fill="#5e5e48" opacity=".35"/><ellipse cx="103.6" cy="25.8" rx="4.5" ry="2.7" fill="#5e5e48" opacity=".35"/><ellipse cx="74.0" cy="20.8" rx="5.3" ry="3.7" fill="#5e5e48" opacity=".35"/><ellipse cx="83.3" cy="28.0" rx="5.3" ry="3.4" fill="#5e5e48" opacity=".35"/><ellipse cx="93.6" cy="27.6" rx="4.1" ry="3.4" fill="#5e5e48" opacity=".35"/><ellipse cx="80.5" cy="23.8" rx="5.3" ry="3.4" fill="#5e5e48" opacity=".35"/><ellipse cx="81.0" cy="30.2" rx="4.9" ry="3.2" fill="#5e5e48" opacity=".35"/><ellipse cx="89.3" cy="40.4" rx="3.8" ry="3.3" fill="#5e5e48" opacity=".35"/><ellipse cx="99.2" cy="42.5" rx="4.9" ry="3.6" fill="#5e5e48" opacity=".35"/><ellipse cx="96.7" cy="41.2" rx="5.2" ry="3.7" fill="#5e5e48" opacity=".35"/><ellipse cx="96.7" cy="42.7" rx="5.6" ry="3.4" fill="#5e5e48" opacity=".35"/><ellipse cx="110.5" cy="43.7" rx="4.6" ry="3.1" fill="#5e5e48" opacity=".35"/><ellipse cx="92.7" cy="42.7" rx="5.8" ry="3.0" fill="#5e5e48" opacity=".35"/><ellipse cx="104.2" cy="41.8" rx="5.2" ry="2.3" fill="#5e5e48" opacity=".35"/><ellipse cx="106.2" cy="40.6" rx="5.0" ry="2.8" fill="#5e5e48" opacity=".35"/><ellipse cx="32.5" cy="24.7" rx="4.9" ry="3.4" fill="#5e5e48" opacity=".35"/><ellipse cx="20.6" cy="18.6" rx="4.3" ry="3.3" fill="#5e5e48" opacity=".35"/><ellipse cx="24.4" cy="23.9" rx="4.9" ry="2.1" fill="#5e5e48" opacity=".35"/><ellipse cx="29.4" cy="19.3" rx="3.2" ry="2.3" fill="#5e5e48" opacity=".35"/><ellipse cx="26.3" cy="18.8" rx="3.6" ry="2.1" fill="#5e5e48" opacity=".35"/><ellipse cx="29.3" cy="20.8" rx="4.8" ry="3.2" fill="#5e5e48" opacity=".35"/><ellipse cx="24.8" cy="26.0" rx="3.0" ry="2.8" fill="#5e5e48" opacity=".35"/><ellipse cx="25.6" cy="21.1" rx="3.3" ry="3.7" fill="#5e5e48" opacity=".35"/><ellipse cx="155.0" cy="3.4" rx="6.5" ry="3.3" fill="#384e62" opacity=".3"/><ellipse cx="161.8" cy="11.0" rx="6.3" ry="5.9" fill="#384e62" opacity=".3"/><ellipse cx="172.7" cy="13.0" rx="7.3" ry="4.9" fill="#384e62" opacity=".3"/><ellipse cx="154.8" cy="6.1" rx="6.4" ry="4.7" fill="#384e62" opacity=".3"/><ellipse cx="178.3" cy="26.7" rx="6.4" ry="4.1" fill="#384e62" opacity=".3"/><ellipse cx="175.7" cy="2.5" rx="4.4" ry="4.7" fill="#384e62" opacity=".3"/><ellipse cx="164.6" cy="6.0" rx="6.5" ry="5.7" fill="#384e62" opacity=".3"/><ellipse cx="155.0" cy="13.3" rx="4.9" ry="3.9" fill="#384e62" opacity=".3"/><ellipse cx="178.9" cy="12.0" rx="7.8" ry="5.7" fill="#384e62" opacity=".3"/><ellipse cx="163.8" cy="9.0" rx="7.9" ry="4.5" fill="#384e62" opacity=".3"/><ellipse cx="156.6" cy="10.5" rx="7.9" ry="4.5" fill="#384e62" opacity=".3"/><ellipse cx="151.5" cy="14.4" rx="4.5" ry="4.9" fill="#384e62" opacity=".3"/><ellipse cx="157.7" cy="9.8" rx="7.1" ry="5.5" fill="#384e62" opacity=".3"/><ellipse cx="140.5" cy="15.8" rx="5.1" ry="5.8" fill="#384e62" opacity=".3"/><ellipse cx="171.3" cy="8.6" rx="5.1" ry="3.5" fill="#384e62" opacity=".3"/><ellipse cx="179.6" cy="9.8" rx="6.4" ry="4.4" fill="#384e62" opacity=".3"/><ellipse cx="165.8" cy="17.6" rx="7.0" ry="3.4" fill="#384e62" opacity=".3"/><ellipse cx="170.4" cy="10.0" rx="6.1" ry="4.0" fill="#384e62" opacity=".3"/><ellipse cx="184.8" cy="31.3" rx="5.9" ry="4.1" fill="#384e62" opacity=".3"/><ellipse cx="207.3" cy="34.1" rx="4.1" ry="3.8" fill="#384e62" opacity=".3"/><ellipse cx="192.8" cy="48.7" rx="7.6" ry="4.6" fill="#384e62" opacity=".3"/><ellipse cx="170.7" cy="42.5" rx="5.7" ry="4.7" fill="#384e62" opacity=".3"/><ellipse cx="205.4" cy="36.0" rx="5.9" ry="5.7" fill="#384e62" opacity=".3"/><ellipse cx="189.3" cy="25.1" rx="7.4" ry="3.6" fill="#384e62" opacity=".3"/><ellipse cx="184.8" cy="44.9" rx="4.3" ry="5.5" fill="#384e62" opacity=".3"/><ellipse cx="204.7" cy="27.0" rx="5.1" ry="5.3" fill="#384e62" opacity=".3"/><ellipse cx="215.5" cy="13.9" rx="5.9" ry="4.6" fill="#384e62" opacity=".3"/><ellipse cx="194.9" cy="22.4" rx="4.6" ry="4.8" fill="#384e62" opacity=".3"/><ellipse cx="210.6" cy="10.6" rx="4.9" ry="5.5" fill="#384e62" opacity=".3"/><ellipse cx="209.6" cy="37.4" rx="4.1" ry="5.2" fill="#384e62" opacity=".3"/><ellipse cx="218.9" cy="52.4" rx="6.8" ry="3.1" fill="#384e62" opacity=".3"/><ellipse cx="212.1" cy="17.4" rx="6.6" ry="5.9" fill="#384e62" opacity=".3"/><ellipse cx="205.6" cy="13.6" rx="5.2" ry="5.8" fill="#384e62" opacity=".3"/><ellipse cx="177.5" cy="35.0" rx="5.7" ry="3.5" fill="#384e62" opacity=".3"/><ellipse cx="201.1" cy="9.5" rx="4.4" ry="4.1" fill="#384e62" opacity=".3"/><ellipse cx="173.6" cy="10.1" rx="6.3" ry="5.2" fill="#384e62" opacity=".3"/><ellipse cx="213.9" cy="13.5" rx="5.7" ry="3.9" fill="#384e62" opacity=".3"/><ellipse cx="200.0" cy="29.5" rx="7.8" ry="4.1" fill="#384e62" opacity=".3"/><ellipse cx="172.8" cy="38.9" rx="4.6" ry="4.9" fill="#384e62" opacity=".3"/><ellipse cx="195.3" cy="48.5" rx="6.2" ry="4.9" fill="#384e62" opacity=".3"/><ellipse cx="183.2" cy="32.3" rx="5.0" ry="5.3" fill="#384e62" opacity=".3"/><ellipse cx="195.8" cy="13.5" rx="4.9" ry="4.1" fill="#384e62" opacity=".3"/><ellipse cx="222.1" cy="42.2" rx="6.9" ry="5.0" fill="#384e62" opacity=".3"/><ellipse cx="202.6" cy="61.7" rx="4.4" ry="3.4" fill="#384e62" opacity=".3"/><ellipse cx="217.8" cy="44.5" rx="7.5" ry="4.4" fill="#384e62" opacity=".3"/><ellipse cx="209.7" cy="66.9" rx="4.1" ry="5.2" fill="#384e62" opacity=".3"/><ellipse cx="201.6" cy="41.0" rx="7.8" ry="5.0" fill="#384e62" opacity=".3"/><ellipse cx="206.7" cy="39.6" rx="7.9" ry="5.0" fill="#384e62" opacity=".3"/><ellipse cx="224.6" cy="40.6" rx="6.5" ry="4.1" fill="#384e62" opacity=".3"/><ellipse cx="207.1" cy="48.3" rx="6.5" ry="4.0" fill="#384e62" opacity=".3"/><ellipse cx="211.6" cy="40.5" rx="7.3" ry="4.9" fill="#384e62" opacity=".3"/><ellipse cx="224.1" cy="52.3" rx="7.4" ry="4.6" fill="#384e62" opacity=".3"/><ellipse cx="217.8" cy="57.9" rx="7.0" ry="4.2" fill="#384e62" opacity=".3"/><ellipse cx="202.9" cy="36.3" rx="4.8" ry="3.1" fill="#384e62" opacity=".3"/><ellipse cx="157.8" cy="44.6" rx="7.0" ry="3.0" fill="#384e62" opacity=".3"/><ellipse cx="149.4" cy="52.8" rx="6.5" ry="4.3" fill="#384e62" opacity=".3"/><ellipse cx="149.3" cy="37.0" rx="4.6" ry="3.5" fill="#384e62" opacity=".3"/><ellipse cx="147.5" cy="42.7" rx="7.5" ry="3.5" fill="#384e62" opacity=".3"/><ellipse cx="145.1" cy="40.5" rx="4.6" ry="3.9" fill="#384e62" opacity=".3"/><ellipse cx="144.7" cy="44.6" rx="4.1" ry="5.8" fill="#384e62" opacity=".3"/><ellipse cx="147.4" cy="53.8" rx="6.8" ry="5.0" fill="#384e62" opacity=".3"/><ellipse cx="149.4" cy="53.9" rx="4.5" ry="5.0" fill="#384e62" opacity=".3"/><ellipse cx="70" cy="62" rx="45" ry="24" fill="url(#p2f)"/><ellipse cx="125" cy="62" rx="30" ry="14" fill="url(#p2f)" opacity=".6"/><rect x="8" y="0" width="2" height="84" fill="#4a3a26"/><rect x="26" y="0" width="2.5" height="84" fill="#5a4a36"/><rect x="35" y="0" width="1.5" height="84" fill="#7a6a56"/><rect x="41" y="0" width="1.2" height="84" fill="#8a7a66"/><rect x="52" y="0" width="1.2" height="84" fill="#9a8a76"/><rect x="60" y="0" width="1" height="84" fill="#a89a86"/><rect x="76" y="0" width="1" height="84" fill="#aaa096"/><rect x="84" y="0" width="0.8" height="84" fill="#b0a89e"/><rect x="20" y="63" width="5" height="6" fill="#8a7a40"/><rect x="158" y="5" width="1.2" height="80" fill="#2c3c4a" opacity=".7"/><rect x="166" y="5" width="1.2" height="80" fill="#2c3c4a" opacity=".7"/><rect x="182" y="5" width="2" height="80" fill="#2c3c4a" opacity=".7"/><rect x="196" y="5" width="1.4" height="80" fill="#2c3c4a" opacity=".7"/><rect x="210" y="5" width="1.6" height="80" fill="#2c3c4a" opacity=".7"/><rect x="222" y="5" width="1.2" height="80" fill="#2c3c4a" opacity=".7"/><rect x="175" y="5" width="1" height="80" fill="#2c3c4a" opacity=".7"/><path d="M0 78 L30 80 L95 84 L50 104 L0 112z" fill="#7a8448"/><path d="M0 90 L40 92 L20 110 L0 112z" fill="#5e6e38" opacity=".7"/><path d="M148 80 L228 84 L228 130 L200 118 L150 88z" fill="#b27a56"/><path d="M180 90 L228 92 L228 118 L205 112z" fill="#c48660" opacity=".7"/><path d="M100 80 L125 80 L228 128 L228 151 L0 151 L0 126z" fill="url(#p2r)"/><path d="M0 128 L97 82 L99 82 L0 132z" fill="#e8e8e4"/><path d="M126 82 L228 130 L228 134 L125 82z" fill="#d8d8d4" opacity=".8"/><rect x="104" y="124" width="2" height="6" fill="#d8d8d4" opacity=".8"/><path d="M44 73 L47 72 L60 79 L66 78 L74 78 L88 72 L91 71 L92 74 L78 82 L77 96 L62 96 L61 83 L44 76z" fill="#f26722"/><path d="M62 96 L77 96 L76 120 L72 121 L70 104 L68 121 L63 121z" fill="#2a2a2e"/><ellipse cx="68" cy="74" rx="3.5" ry="3.8" fill="#1a1a1a"/><path d="M89 68 L92 68 L104 78 L114 78 L125 68 L128 68 L118 82 L116 93 L103 93 L102 82z" fill="#d9306e"/><path d="M103 93 L116 93 L114 118 L110 118 L109 100 L107 118 L104 118z" fill="#5b86b4"/><ellipse cx="109" cy="75" rx="3.8" ry="5" fill="#3a2218"/><path d="M152 60 L155 62 L147 74 L147 96 L133 96 L132 88 L128 86 L130 76 L138 73 L146 72z" fill="#e42a2a"/><path d="M135 96 L147 96 L146 121 L142 121 L141 104 L139 121 L135 121z" fill="#2e3646"/><ellipse cx="139" cy="69" rx="3.5" ry="3.2" fill="#f59a28"/><ellipse cx="126" cy="80" rx="2" ry="1.8" fill="#3a3030"/></g></symbol><symbol id="ph3"><defs><linearGradient id="p3w" x1="0" y1="0" x2="1" y2="1"><stop offset="0" stop-color="#5580a0"/><stop offset="0.5" stop-color="#4a7394"/><stop offset="1" stop-color="#3d6686"/></linearGradient><linearGradient id="p3c" x1="0" y1="0" x2="1" y2="0"><stop offset="0" stop-color="#4a5c6c"/><stop offset="0.5" stop-color="#3a4b5b"/><stop offset="1" stop-color="#34495c"/></linearGradient></defs><filter id="p3b" x="0" y="0" width="1" height="1"><feGaussianBlur stdDeviation="0.3"/></filter><g filter="url(#p3b)"><rect width="523" height="113" fill="url(#p3w)"/><polygon points="76,113 106,62 150,52 182,45 190,36 145,36 180,20 230,8 262,3 290,0 523,0 523,113" fill="url(#p3c)"/><path d="M262 0 L300 0 L275 6 L262 8z" fill="#6a8098" opacity=".6"/><polygon points="0,56 87,49 40,113 0,113" fill="#5c6a72"/><polygon points="0,60 82,51 74,60 0,74" fill="#3e4a50"/><polygon points="0,78 68,64 55,84 0,92" fill="#6e7a82"/><polygon points="0,92 55,84 40,113 0,113" fill="#8a98a4"/><polygon points="87,49 40,113 44,113 90,51" fill="#9aa6ae" opacity=".8"/><rect x="216.7" y="17.0" width="3.5" height="1.7" fill="#3c4d5d" opacity=".75"/><rect x="299.9" y="4.2" width="2.8" height="1.7" fill="#3c4d5d" opacity=".75"/><rect x="319.6" y="6.7" width="3.2" height="3.9" fill="#2c3a47" opacity=".75"/><rect x="331.4" y="44.8" width="4.4" height="1.6" fill="#4c5f71" opacity=".75"/><rect x="439.7" y="20.4" width="3.2" height="3.1" fill="#95a4b2" opacity=".75"/><rect x="114.1" y="80.5" width="3.2" height="3.0" fill="#34434f" opacity=".75"/><rect x="378.2" y="48.3" width="2.4" height="3.0" fill="#34434f" opacity=".75"/><rect x="233.8" y="28.1" width="2.0" height="3.4" fill="#3c4d5d" opacity=".75"/><rect x="330.2" y="59.3" width="4.1" height="3.3" fill="#77899a" opacity=".75"/><rect x="345.9" y="8.3" width="3.0" height="1.9" fill="#95a4b2" opacity=".75"/><rect x="138.8" y="55.3" width="1.6" height="3.2" fill="#95a4b2" opacity=".75"/><rect x="224.1" y="39.6" width="3.0" height="3.5" fill="#3c4d5d" opacity=".75"/><rect x="450.5" y="106.7" width="2.9" height="3.2" fill="#2c3a47" opacity=".75"/><rect x="401.2" y="35.0" width="3.2" height="3.2" fill="#34434f" opacity=".75"/><rect x="198.9" y="43.6" width="3.5" height="1.6" fill="#34434f" opacity=".75"/><rect x="231.0" y="69.0" width="3.0" height="2.0" fill="#77899a" opacity=".75"/><rect x="247.1" y="98.5" width="1.7" height="2.6" fill="#77899a" opacity=".75"/><rect x="470.2" y="92.6" width="4.1" height="2.2" fill="#283440" opacity=".75"/><rect x="516.9" y="77.1" width="2.6" height="2.1" fill="#3c4d5d" opacity=".75"/><rect x="175.7" y="54.8" width="3.3" height="2.2" fill="#2c3a47" opacity=".75"/><rect x="136.0" y="60.4" width="3.3" height="2.3" fill="#4c5f71" opacity=".75"/><rect x="382.8" y="58.3" width="3.4" height="3.2" fill="#2c3a47" opacity=".75"/><rect x="276.9" y="98.4" width="4.4" height="3.2" fill="#283440" opacity=".75"/><rect x="250.3" y="44.5" width="2.9" height="2.5" fill="#5e7183" opacity=".75"/><rect x="466.1" y="69.4" width="1.9" height="2.1" fill="#95a4b2" opacity=".75"/><rect x="342.8" y="53.6" width="1.8" height="2.7" fill="#34434f" opacity=".75"/><rect x="287.6" y="35.2" width="1.9" height="3.4" fill="#77899a" opacity=".75"/><rect x="286.8" y="78.2" width="3.0" height="2.0" fill="#95a4b2" opacity=".75"/><rect x="136.4" y="61.4" width="1.6" height="2.8" fill="#3c4d5d" opacity=".75"/><rect x="385.4" y="29.5" width="2.6" height="1.9" fill="#5e7183" opacity=".75"/><rect x="311.3" y="88.0" width="2.5" height="2.1" fill="#5e7183" opacity=".75"/><rect x="435.2" y="92.5" width="3.7" height="2.1" fill="#34434f" opacity=".75"/><rect x="187.4" y="78.3" width="4.4" height="2.6" fill="#95a4b2" opacity=".75"/><rect x="502.6" y="41.2" width="2.2" height="2.1" fill="#5e7183" opacity=".75"/><rect x="223.0" y="54.5" width="4.5" height="3.0" fill="#2c3a47" opacity=".75"/><rect x="287.2" y="73.8" width="3.9" height="1.7" fill="#3c4d5d" opacity=".75"/><rect x="482.1" y="88.4" width="3.8" height="2.7" fill="#4c5f71" opacity=".75"/><rect x="266.6" y="71.9" width="1.8" height="3.9" fill="#283440" opacity=".75"/><rect x="279.8" y="84.0" width="1.8" height="1.9" fill="#4c5f71" opacity=".75"/><rect x="280.8" y="74.1" width="3.3" height="3.0" fill="#34434f" opacity=".75"/><rect x="367.7" y="39.6" width="3.1" height="1.8" fill="#2c3a47" opacity=".75"/><rect x="432.1" y="82.1" width="1.8" height="3.4" fill="#4c5f71" opacity=".75"/><rect x="266.5" y="98.5" width="4.0" height="2.0" fill="#77899a" opacity=".75"/><rect x="166.4" y="56.6" width="3.8" height="2.3" fill="#283440" opacity=".75"/><rect x="447.9" y="6.9" width="3.7" height="3.7" fill="#283440" opacity=".75"/><rect x="444.7" y="99.2" width="1.9" height="1.9" fill="#2c3a47" opacity=".75"/><rect x="465.4" y="87.7" width="3.3" height="3.4" fill="#4c5f71" opacity=".75"/><rect x="148.1" y="53.5" width="3.7" height="2.9" fill="#95a4b2" opacity=".75"/><rect x="379.1" y="60.0" width="2.9" height="3.4" fill="#2c3a47" opacity=".75"/><rect x="182.6" y="31.3" width="3.8" height="2.8" fill="#2c3a47" opacity=".75"/><rect x="414.3" y="103.1" width="2.8" height="3.0" fill="#5e7183" opacity=".75"/><rect x="383.8" y="51.1" width="3.1" height="2.7" fill="#5e7183" opacity=".75"/><rect x="386.7" y="99.0" width="4.3" height="2.1" fill="#5e7183" opacity=".75"/><rect x="450.5" y="15.5" width="1.9" height="2.6" fill="#3c4d5d" opacity=".75"/><rect x="374.0" y="48.4" width="2.1" height="2.3" fill="#3c4d5d" opacity=".75"/><rect x="476.4" y="17.5" width="3.6" height="3.2" fill="#4c5f71" opacity=".75"/><rect x="281.9" y="84.4" width="1.8" height="3.7" fill="#4c5f71" opacity=".75"/><rect x="518.4" y="94.1" width="2.0" height="2.6" fill="#283440" opacity=".75"/><rect x="223.6" y="22.1" width="2.5" height="3.3" fill="#2c3a47" opacity=".75"/><rect x="223.1" y="51.8" width="3.6" height="2.5" fill="#77899a" opacity=".75"/><rect x="302.1" y="7.3" width="4.5" height="3.5" fill="#3c4d5d" opacity=".75"/><rect x="480.4" y="20.5" width="3.8" height="3.5" fill="#77899a" opacity=".75"/><rect x="253.9" y="60.6" width="3.0" height="2.7" fill="#95a4b2" opacity=".75"/><rect x="381.8" y="48.1" width="1.7" height="3.8" fill="#3c4d5d" opacity=".75"/><rect x="433.1" y="9.5" width="4.1" height="1.7" fill="#3c4d5d" opacity=".75"/><rect x="275.6" y="38.3" width="3.2" height="3.8" fill="#77899a" opacity=".75"/><rect x="351.6" y="4.9" width="3.6" height="3.8" fill="#4c5f71" opacity=".75"/><rect x="492.3" y="71.0" width="3.1" height="2.0" fill="#34434f" opacity=".75"/><rect x="296.5" y="20.1" width="2.5" height="1.5" fill="#77899a" opacity=".75"/><rect x="299.1" y="110.5" width="3.0" height="2.1" fill="#34434f" opacity=".75"/><rect x="118.1" y="92.5" width="2.8" height="2.7" fill="#283440" opacity=".75"/><rect x="509.6" y="34.8" width="2.1" height="2.1" fill="#5e7183" opacity=".75"/><rect x="447.0" y="79.9" width="3.4" height="2.5" fill="#95a4b2" opacity=".75"/><rect x="514.8" y="94.6" width="1.5" height="3.1" fill="#77899a" opacity=".75"/><rect x="265.1" y="6.3" width="3.5" height="2.5" fill="#77899a" opacity=".75"/><rect x="341.2" y="78.3" width="1.6" height="2.0" fill="#77899a" opacity=".75"/><rect x="272.0" y="29.7" width="4.4" height="3.9" fill="#95a4b2" opacity=".75"/><rect x="180.7" y="109.1" width="2.4" height="2.4" fill="#2c3a47" opacity=".75"/><rect x="196.4" y="74.1" width="2.2" height="3.4" fill="#3c4d5d" opacity=".75"/><rect x="251.0" y="4.7" width="1.6" height="2.3" fill="#5e7183" opacity=".75"/><rect x="108.3" y="108.2" width="4.1" height="1.9" fill="#283440" opacity=".75"/><rect x="416.2" y="81.4" width="3.0" height="2.2" fill="#4c5f71" opacity=".75"/><rect x="89.8" y="94.4" width="4.2" height="3.1" fill="#4c5f71" opacity=".75"/><rect x="482.2" y="85.1" width="3.2" height="3.5" fill="#2c3a47" opacity=".75"/><rect x="444.4" y="66.0" width="4.2" height="3.2" fill="#5e7183" opacity=".75"/><rect x="358.6" y="108.4" width="2.6" height="2.6" fill="#2c3a47" opacity=".75"/><rect x="354.4" y="70.8" width="3.5" height="2.7" fill="#2c3a47" opacity=".75"/><rect x="277.0" y="7.9" width="4.3" height="3.7" fill="#3c4d5d" opacity=".75"/><rect x="368.7" y="7.5" width="3.7" height="2.1" fill="#3c4d5d" opacity=".75"/><rect x="453.3" y="26.5" width="3.8" height="2.1" fill="#34434f" opacity=".75"/><rect x="293.8" y="43.2" width="2.9" height="3.2" fill="#2c3a47" opacity=".75"/><rect x="349.5" y="72.6" width="1.7" height="1.9" fill="#77899a" opacity=".75"/><rect x="365.1" y="78.3" width="3.4" height="1.8" fill="#34434f" opacity=".75"/><rect x="374.4" y="78.2" width="3.5" height="2.2" fill="#77899a" opacity=".75"/><rect x="280.5" y="52.7" width="1.9" height="3.7" fill="#5e7183" opacity=".75"/><rect x="284.2" y="32.7" width="1.7" height="2.8" fill="#34434f" opacity=".75"/><rect x="520.3" y="43.7" width="4.2" height="3.8" fill="#3c4d5d" opacity=".75"/><rect x="333.4" y="16.0" width="3.1" height="3.9" fill="#4c5f71" opacity=".75"/><rect x="343.3" y="71.4" width="2.3" height="1.8" fill="#95a4b2" opacity=".75"/><rect x="174.8" y="101.4" width="3.0" height="1.6" fill="#2c3a47" opacity=".75"/><rect x="500.3" y="77.0" width="2.7" height="3.3" fill="#283440" opacity=".75"/><rect x="225.8" y="35.7" width="4.0" height="1.5" fill="#95a4b2" opacity=".75"/><rect x="450.1" y="13.6" width="4.3" height="3.3" fill="#77899a" opacity=".75"/><rect x="246.7" y="98.3" width="1.7" height="3.8" fill="#77899a" opacity=".75"/><rect x="457.0" y="31.7" width="1.7" height="3.2" fill="#4c5f71" opacity=".75"/><rect x="182.9" y="30.0" width="3.0" height="2.0" fill="#95a4b2" opacity=".75"/><rect x="425.7" y="48.3" width="1.6" height="3.4" fill="#283440" opacity=".75"/><rect x="483.8" y="106.3" width="3.1" height="3.3" fill="#2c3a47" opacity=".75"/><rect x="492.9" y="46.4" width="3.3" height="1.8" fill="#77899a" opacity=".75"/><rect x="290.0" y="103.0" width="3.2" height="1.9" fill="#283440" opacity=".75"/><rect x="225.7" y="33.6" width="3.7" height="3.9" fill="#77899a" opacity=".75"/><rect x="254.0" y="27.0" width="2.9" height="3.2" fill="#3c4d5d" opacity=".75"/><rect x="164.2" y="102.4" width="3.0" height="2.1" fill="#95a4b2" opacity=".75"/><rect x="521.4" y="50.8" width="1.9" height="2.0" fill="#3c4d5d" opacity=".75"/><rect x="149.1" y="62.8" width="2.5" height="2.4" fill="#5e7183" opacity=".75"/><rect x="471.9" y="84.7" width="2.7" height="2.5" fill="#5e7183" opacity=".75"/><rect x="240.7" y="38.2" width="1.7" height="2.2" fill="#95a4b2" opacity=".75"/><rect x="355.2" y="97.5" width="2.1" height="2.2" fill="#5e7183" opacity=".75"/><rect x="244.2" y="73.0" width="2.8" height="2.3" fill="#2c3a47" opacity=".75"/><rect x="416.0" y="90.9" width="4.4" height="2.7" fill="#3c4d5d" opacity=".75"/><rect x="247.4" y="104.7" width="4.0" height="3.6" fill="#34434f" opacity=".75"/><rect x="139.9" y="59.0" width="3.5" height="3.9" fill="#34434f" opacity=".75"/><rect x="108.5" y="87.8" width="1.5" height="1.8" fill="#2c3a47" opacity=".75"/><rect x="362.4" y="34.3" width="1.9" height="2.1" fill="#283440" opacity=".75"/><rect x="386.5" y="12.7" width="1.7" height="2.8" fill="#5e7183" opacity=".75"/><rect x="245.8" y="25.3" width="3.3" height="1.5" fill="#77899a" opacity=".75"/><rect x="521.4" y="31.5" width="2.4" height="3.6" fill="#5e7183" opacity=".75"/><rect x="285.3" y="26.5" width="2.2" height="3.9" fill="#77899a" opacity=".75"/><rect x="470.8" y="73.1" width="1.7" height="2.1" fill="#283440" opacity=".75"/><rect x="489.1" y="25.6" width="1.6" height="2.3" fill="#283440" opacity=".75"/><rect x="234.1" y="44.8" width="1.5" height="2.2" fill="#3c4d5d" opacity=".75"/><rect x="163.0" y="109.6" width="2.4" height="3.6" fill="#5e7183" opacity=".75"/><rect x="280.7" y="29.9" width="4.2" height="1.8" fill="#34434f" opacity=".75"/><rect x="346.4" y="101.3" width="3.0" height="3.8" fill="#2c3a47" opacity=".75"/><rect x="499.8" y="16.5" width="2.7" height="2.0" fill="#4c5f71" opacity=".75"/><rect x="258.2" y="80.2" width="2.1" height="2.6" fill="#95a4b2" opacity=".75"/><rect x="401.9" y="112.7" width="4.3" height="2.3" fill="#4c5f71" opacity=".75"/><rect x="365.6" y="59.3" width="2.9" height="2.3" fill="#283440" opacity=".75"/><rect x="450.1" y="111.3" width="2.8" height="1.8" fill="#3c4d5d" opacity=".75"/><rect x="196.8" y="39.7" width="4.4" height="1.8" fill="#5e7183" opacity=".75"/><rect x="242.2" y="86.9" width="2.4" height="3.5" fill="#3c4d5d" opacity=".75"/><rect x="238.8" y="103.9" width="2.1" height="2.4" fill="#34434f" opacity=".75"/><rect x="437.8" y="86.6" width="1.6" height="1.6" fill="#3c4d5d" opacity=".75"/><rect x="433.9" y="7.0" width="2.1" height="1.7" fill="#95a4b2" opacity=".75"/><rect x="234.4" y="37.9" width="4.4" height="1.6" fill="#95a4b2" opacity=".75"/><rect x="488.7" y="33.6" width="3.7" height="3.0" fill="#3c4d5d" opacity=".75"/><rect x="285.3" y="108.1" width="4.4" height="2.5" fill="#77899a" opacity=".75"/><rect x="483.8" y="92.1" width="1.9" height="2.7" fill="#2c3a47" opacity=".75"/><rect x="433.6" y="83.4" width="4.0" height="3.4" fill="#5e7183" opacity=".75"/><rect x="218.5" y="36.1" width="2.6" height="3.5" fill="#3c4d5d" opacity=".75"/><rect x="301.9" y="44.3" width="2.0" height="2.5" fill="#2c3a47" opacity=".75"/><rect x="288.2" y="61.5" width="2.0" height="2.6" fill="#3c4d5d" opacity=".75"/><rect x="517.5" y="29.9" width="1.8" height="1.7" fill="#34434f" opacity=".75"/><rect x="517.8" y="109.8" width="2.0" height="1.8" fill="#34434f" opacity=".75"/><rect x="351.0" y="76.2" width="3.7" height="3.6" fill="#3c4d5d" opacity=".75"/><rect x="423.2" y="33.2" width="2.3" height="2.2" fill="#77899a" opacity=".75"/><rect x="404.3" y="22.5" width="2.2" height="2.1" fill="#4c5f71" opacity=".75"/><rect x="197.5" y="102.6" width="2.1" height="1.7" fill="#77899a" opacity=".75"/><rect x="519.6" y="57.3" width="2.2" height="3.5" fill="#34434f" opacity=".75"/><rect x="518.9" y="11.6" width="2.9" height="3.5" fill="#34434f" opacity=".75"/><rect x="484.2" y="4.6" width="2.4" height="1.8" fill="#5e7183" opacity=".75"/><rect x="342.0" y="93.6" width="2.1" height="1.7" fill="#4c5f71" opacity=".75"/><rect x="273.4" y="29.4" width="3.8" height="3.9" fill="#3c4d5d" opacity=".75"/><rect x="358.8" y="80.2" width="2.5" height="1.6" fill="#95a4b2" opacity=".75"/><rect x="185.5" y="67.7" width="3.5" height="2.0" fill="#2c3a47" opacity=".75"/><rect x="440.9" y="46.2" width="2.6" height="3.1" fill="#3c4d5d" opacity=".75"/><rect x="162.1" y="89.9" width="3.1" height="1.7" fill="#3c4d5d" opacity=".75"/><rect x="430.5" y="75.0" width="2.0" height="2.8" fill="#4c5f71" opacity=".75"/><rect x="250.2" y="30.6" width="4.5" height="3.2" fill="#283440" opacity=".75"/><rect x="501.8" y="35.3" width="3.2" height="2.4" fill="#283440" opacity=".75"/><rect x="433.4" y="72.8" width="2.7" height="2.5" fill="#2c3a47" opacity=".75"/><rect x="266.7" y="17.7" width="1.8" height="1.7" fill="#95a4b2" opacity=".75"/><rect x="278.8" y="18.4" width="1.5" height="2.9" fill="#283440" opacity=".75"/><rect x="110.3" y="70.3" width="2.6" height="2.8" fill="#4c5f71" opacity=".75"/><rect x="227.6" y="18.3" width="2.0" height="1.7" fill="#283440" opacity=".75"/><rect x="292.2" y="90.9" width="4.4" height="2.0" fill="#4c5f71" opacity=".75"/><rect x="449.3" y="4.9" width="4.2" height="2.3" fill="#283440" opacity=".75"/><rect x="109.1" y="80.5" width="3.6" height="3.7" fill="#5e7183" opacity=".75"/><rect x="351.3" y="69.5" width="2.1" height="2.7" fill="#5e7183" opacity=".75"/><rect x="88.9" y="106.1" width="2.0" height="2.4" fill="#4c5f71" opacity=".75"/><rect x="181.9" y="81.9" width="4.2" height="1.6" fill="#2c3a47" opacity=".75"/><rect x="372.6" y="36.6" width="2.7" height="2.6" fill="#77899a" opacity=".75"/><rect x="364.0" y="34.8" width="2.2" height="2.5" fill="#95a4b2" opacity=".75"/><rect x="272.4" y="49.5" width="1.6" height="3.0" fill="#34434f" opacity=".75"/><rect x="280.8" y="50.5" width="3.4" height="3.5" fill="#4c5f71" opacity=".75"/><rect x="437.2" y="45.2" width="1.7" height="2.4" fill="#95a4b2" opacity=".75"/><rect x="301.1" y="4.6" width="3.4" height="1.7" fill="#95a4b2" opacity=".75"/><rect x="422.3" y="57.8" width="1.7" height="2.8" fill="#283440" opacity=".75"/><rect x="365.7" y="88.6" width="1.6" height="1.7" fill="#3c4d5d" opacity=".75"/><rect x="157.7" y="110.9" width="3.0" height="3.9" fill="#4c5f71" opacity=".75"/><rect x="380.8" y="81.5" width="2.2" height="3.6" fill="#77899a" opacity=".75"/><rect x="141.9" y="101.3" width="2.3" height="3.5" fill="#4c5f71" opacity=".75"/><rect x="185.1" y="109.0" width="2.9" height="3.0" fill="#5e7183" opacity=".75"/><rect x="494.2" y="76.8" width="4.2" height="1.9" fill="#77899a" opacity=".75"/><rect x="122.1" y="60.0" width="3.4" height="2.4" fill="#34434f" opacity=".75"/><rect x="321.5" y="65.5" width="4.1" height="1.8" fill="#283440" opacity=".75"/><rect x="404.3" y="42.0" width="2.6" height="2.4" fill="#4c5f71" opacity=".75"/><rect x="233.2" y="86.4" width="2.8" height="1.9" fill="#2c3a47" opacity=".75"/><rect x="204.3" y="58.3" width="2.4" height="3.9" fill="#95a4b2" opacity=".75"/><rect x="402.1" y="84.4" width="2.2" height="2.2" fill="#283440" opacity=".75"/><rect x="259.2" y="41.1" width="1.6" height="2.7" fill="#2c3a47" opacity=".75"/><rect x="230.8" y="12.0" width="2.6" height="2.1" fill="#77899a" opacity=".75"/><rect x="336.9" y="23.1" width="3.4" height="2.7" fill="#4c5f71" opacity=".75"/><rect x="390.5" y="50.9" width="1.7" height="1.9" fill="#77899a" opacity=".75"/><rect x="252.1" y="29.9" width="1.5" height="3.1" fill="#95a4b2" opacity=".75"/><rect x="339.4" y="65.4" width="3.3" height="2.8" fill="#34434f" opacity=".75"/><rect x="182.6" y="102.1" width="1.6" height="2.8" fill="#283440" opacity=".75"/><rect x="483.0" y="11.9" width="3.3" height="3.1" fill="#5e7183" opacity=".75"/><rect x="345.5" y="57.3" width="3.4" height="3.5" fill="#4c5f71" opacity=".75"/><rect x="300.4" y="7.2" width="3.4" height="4.0" fill="#34434f" opacity=".75"/><rect x="394.1" y="0.7" width="4.0" height="3.4" fill="#34434f" opacity=".75"/><rect x="106.5" y="74.1" width="2.0" height="4.0" fill="#77899a" opacity=".75"/><rect x="222.0" y="84.7" width="3.6" height="3.6" fill="#2c3a47" opacity=".75"/><rect x="190.5" y="62.6" width="2.8" height="3.5" fill="#77899a" opacity=".75"/><rect x="203.9" y="104.9" width="4.2" height="1.7" fill="#2c3a47" opacity=".75"/><rect x="146.9" y="102.2" width="4.0" height="2.0" fill="#4c5f71" opacity=".75"/><rect x="408.0" y="36.9" width="4.1" height="2.3" fill="#5e7183" opacity=".75"/><rect x="241.9" y="96.3" width="4.3" height="4.0" fill="#34434f" opacity=".75"/><rect x="283.9" y="60.0" width="1.5" height="1.6" fill="#5e7183" opacity=".75"/><rect x="328.4" y="34.8" width="2.1" height="3.1" fill="#3c4d5d" opacity=".75"/><rect x="326.0" y="19.4" width="1.6" height="1.8" fill="#4c5f71" opacity=".75"/><rect x="226.2" y="16.0" width="1.6" height="1.6" fill="#2c3a47" opacity=".75"/><rect x="385.7" y="83.3" width="1.7" height="3.0" fill="#95a4b2" opacity=".75"/><rect x="160.3" y="107.9" width="3.1" height="3.2" fill="#283440" opacity=".75"/><rect x="454.0" y="91.8" width="3.4" height="3.6" fill="#77899a" opacity=".75"/><rect x="286.1" y="15.0" width="3.9" height="3.1" fill="#77899a" opacity=".75"/><rect x="214.6" y="47.9" width="1.6" height="2.1" fill="#77899a" opacity=".75"/><rect x="91.9" y="85.9" width="4.2" height="3.4" fill="#34434f" opacity=".75"/><rect x="455.7" y="69.9" width="1.6" height="2.5" fill="#283440" opacity=".75"/><rect x="304.9" y="11.1" width="2.9" height="1.6" fill="#5e7183" opacity=".75"/><rect x="393.6" y="93.5" width="3.2" height="2.2" fill="#283440" opacity=".75"/><rect x="415.3" y="110.5" width="1.5" height="2.7" fill="#34434f" opacity=".75"/><rect x="384.9" y="93.3" width="4.4" height="3.0" fill="#77899a" opacity=".75"/><rect x="331.8" y="18.0" width="3.9" height="3.8" fill="#5e7183" opacity=".75"/><rect x="295.7" y="12.4" width="3.4" height="1.7" fill="#3c4d5d" opacity=".75"/><rect x="354.5" y="40.2" width="2.7" height="2.5" fill="#3c4d5d" opacity=".75"/><rect x="261.2" y="73.0" width="2.6" height="2.3" fill="#283440" opacity=".75"/><rect x="478.3" y="56.6" width="2.6" height="3.7" fill="#5e7183" opacity=".75"/><rect x="497.6" y="14.3" width="3.3" height="3.2" fill="#2c3a47" opacity=".75"/><rect x="227.9" y="36.9" width="2.0" height="3.6" fill="#95a4b2" opacity=".75"/><rect x="420.4" y="65.4" width="1.9" height="2.7" fill="#5e7183" opacity=".75"/><rect x="300.0" y="30.2" width="3.8" height="3.6" fill="#4c5f71" opacity=".75"/><rect x="397.7" y="110.1" width="3.7" height="3.0" fill="#95a4b2" opacity=".75"/><rect x="155.7" y="110.2" width="3.7" height="1.8" fill="#3c4d5d" opacity=".75"/><rect x="204.7" y="30.9" width="1.8" height="3.8" fill="#77899a" opacity=".75"/><rect x="428.3" y="78.4" width="3.0" height="3.1" fill="#34434f" opacity=".75"/><rect x="404.4" y="0.6" width="2.2" height="3.6" fill="#283440" opacity=".75"/><rect x="453.2" y="75.5" width="3.5" height="3.7" fill="#5e7183" opacity=".75"/><rect x="377.9" y="72.5" width="2.9" height="2.3" fill="#3c4d5d" opacity=".75"/><rect x="475.3" y="27.4" width="2.7" height="3.3" fill="#4c5f71" opacity=".75"/><rect x="183.3" y="47.9" width="2.9" height="3.1" fill="#283440" opacity=".75"/><rect x="304.8" y="74.7" width="4.1" height="3.7" fill="#95a4b2" opacity=".75"/><rect x="422.5" y="43.9" width="3.0" height="3.9" fill="#2c3a47" opacity=".75"/><rect x="183.8" y="24.6" width="3.6" height="3.9" fill="#5e7183" opacity=".75"/><rect x="305.2" y="11.4" width="3.2" height="2.9" fill="#34434f" opacity=".75"/><rect x="302.0" y="72.2" width="4.0" height="2.8" fill="#283440" opacity=".75"/><rect x="406.2" y="51.6" width="4.5" height="2.0" fill="#3c4d5d" opacity=".75"/><rect x="400.3" y="69.4" width="3.4" height="2.1" fill="#283440" opacity=".75"/><rect x="259.6" y="47.5" width="3.6" height="2.4" fill="#77899a" opacity=".75"/><rect x="251.4" y="107.8" width="4.4" height="4.0" fill="#283440" opacity=".75"/><rect x="279.3" y="18.6" width="4.3" height="1.7" fill="#5e7183" opacity=".75"/><rect x="282.5" y="63.5" width="2.2" height="3.9" fill="#95a4b2" opacity=".75"/><rect x="371.7" y="93.9" width="3.9" height="2.5" fill="#77899a" opacity=".75"/><rect x="414.2" y="73.4" width="3.8" height="2.7" fill="#5e7183" opacity=".75"/><rect x="191.1" y="42.5" width="2.3" height="2.6" fill="#4c5f71" opacity=".75"/><rect x="288.2" y="91.0" width="3.9" height="2.4" fill="#77899a" opacity=".75"/><rect x="215.1" y="54.8" width="3.4" height="1.7" fill="#95a4b2" opacity=".75"/><rect x="244.5" y="9.6" width="3.2" height="2.3" fill="#4c5f71" opacity=".75"/><rect x="310.4" y="39.0" width="3.2" height="3.1" fill="#5e7183" opacity=".75"/><rect x="501.2" y="74.1" width="2.3" height="1.8" fill="#4c5f71" opacity=".75"/><rect x="456.9" y="21.0" width="2.9" height="3.5" fill="#5e7183" opacity=".75"/><rect x="479.6" y="89.5" width="2.0" height="3.7" fill="#3c4d5d" opacity=".75"/><rect x="372.8" y="101.0" width="3.9" height="3.6" fill="#5e7183" opacity=".75"/><rect x="294.0" y="24.1" width="1.7" height="3.6" fill="#3c4d5d" opacity=".75"/><rect x="321.4" y="29.9" width="2.2" height="1.8" fill="#34434f" opacity=".75"/><rect x="322.4" y="54.7" width="4.2" height="3.3" fill="#5e7183" opacity=".75"/><rect x="295.7" y="61.0" width="4.1" height="1.5" fill="#95a4b2" opacity=".75"/><rect x="282.0" y="63.6" width="3.5" height="3.6" fill="#95a4b2" opacity=".75"/><rect x="262.9" y="113.0" width="3.5" height="2.0" fill="#95a4b2" opacity=".75"/><rect x="358.2" y="3.2" width="3.3" height="3.2" fill="#95a4b2" opacity=".75"/><rect x="436.3" y="10.6" width="3.0" height="3.4" fill="#4c5f71" opacity=".75"/><rect x="353.3" y="38.3" width="4.1" height="2.4" fill="#34434f" opacity=".75"/><rect x="422.7" y="62.6" width="4.2" height="2.2" fill="#95a4b2" opacity=".75"/><rect x="261.3" y="62.6" width="4.0" height="2.2" fill="#34434f" opacity=".75"/><rect x="252.9" y="56.9" width="2.3" height="2.8" fill="#5e7183" opacity=".75"/><rect x="366.5" y="89.5" width="2.5" height="2.3" fill="#77899a" opacity=".75"/><rect x="127.8" y="109.9" width="1.8" height="4.0" fill="#283440" opacity=".75"/><rect x="397.4" y="100.1" width="3.1" height="1.6" fill="#77899a" opacity=".75"/><rect x="442.3" y="53.7" width="3.8" height="1.7" fill="#283440" opacity=".75"/><rect x="349.4" y="70.8" width="3.6" height="3.0" fill="#3c4d5d" opacity=".75"/><rect x="166.3" y="75.4" width="2.9" height="3.4" fill="#3c4d5d" opacity=".75"/><rect x="370.6" y="98.2" width="2.8" height="1.8" fill="#2c3a47" opacity=".75"/><rect x="237.1" y="93.0" width="3.9" height="2.9" fill="#77899a" opacity=".75"/><rect x="460.7" y="20.9" width="1.6" height="1.6" fill="#2c3a47" opacity=".75"/><rect x="295.5" y="59.0" width="4.0" height="3.4" fill="#283440" opacity=".75"/><rect x="330.6" y="103.8" width="2.8" height="1.5" fill="#283440" opacity=".75"/><rect x="339.0" y="112.2" width="3.5" height="1.9" fill="#283440" opacity=".75"/><rect x="318.6" y="9.4" width="2.9" height="3.7" fill="#2c3a47" opacity=".75"/><rect x="263.4" y="1.1" width="3.5" height="4.0" fill="#3c4d5d" opacity=".75"/><rect x="284.0" y="31.1" width="3.2" height="2.6" fill="#4c5f71" opacity=".75"/><rect x="488.0" y="41.3" width="3.7" height="3.2" fill="#4c5f71" opacity=".75"/><rect x="400.6" y="9.5" width="3.4" height="3.3" fill="#34434f" opacity=".75"/><rect x="373.3" y="100.6" width="4.2" height="1.6" fill="#2c3a47" opacity=".75"/><rect x="364.8" y="92.4" width="1.7" height="2.3" fill="#4c5f71" opacity=".75"/><rect x="503.8" y="94.3" width="3.3" height="2.3" fill="#34434f" opacity=".75"/><rect x="282.8" y="18.8" width="4.4" height="1.8" fill="#4c5f71" opacity=".75"/><rect x="355.3" y="47.2" width="2.7" height="3.5" fill="#77899a" opacity=".75"/><rect x="425.4" y="64.1" width="2.4" height="1.7" fill="#95a4b2" opacity=".75"/><rect x="463.9" y="82.0" width="1.5" height="1.9" fill="#77899a" opacity=".75"/><rect x="334.9" y="110.3" width="2.2" height="2.5" fill="#283440" opacity=".75"/><rect x="342.6" y="101.3" width="3.9" height="2.2" fill="#2c3a47" opacity=".75"/><rect x="215.7" y="30.3" width="2.0" height="3.8" fill="#2c3a47" opacity=".75"/><rect x="473.4" y="112.2" width="1.9" height="3.9" fill="#34434f" opacity=".75"/><rect x="320.8" y="90.1" width="2.1" height="3.4" fill="#5e7183" opacity=".75"/><rect x="249.2" y="80.0" width="4.3" height="3.0" fill="#2c3a47" opacity=".75"/><rect x="428.6" y="51.9" width="1.8" height="3.5" fill="#3c4d5d" opacity=".75"/><rect x="175.5" y="65.5" width="4.2" height="3.7" fill="#95a4b2" opacity=".75"/><rect x="285.9" y="66.6" width="2.1" height="2.0" fill="#4c5f71" opacity=".75"/><rect x="435.1" y="32.7" width="3.2" height="2.4" fill="#4c5f71" opacity=".75"/><rect x="181.6" y="104.3" width="3.0" height="3.7" fill="#95a4b2" opacity=".75"/><rect x="356.6" y="89.0" width="2.0" height="3.0" fill="#95a4b2" opacity=".75"/><rect x="197.1" y="68.6" width="1.8" height="2.0" fill="#34434f" opacity=".75"/><rect x="335.8" y="24.1" width="4.3" height="2.2" fill="#3c4d5d" opacity=".75"/><rect x="498.8" y="86.7" width="4.0" height="3.9" fill="#77899a" opacity=".75"/><rect x="452.2" y="38.3" width="4.5" height="2.4" fill="#2c3a47" opacity=".75"/><rect x="464.4" y="51.8" width="4.3" height="3.8" fill="#3c4d5d" opacity=".75"/><rect x="460.9" y="72.3" width="4.3" height="3.3" fill="#3c4d5d" opacity=".75"/><rect x="186.5" y="63.8" width="3.4" height="3.9" fill="#283440" opacity=".75"/><rect x="152.7" y="96.0" width="2.6" height="2.1" fill="#5e7183" opacity=".75"/><rect x="148.0" y="106.4" width="4.3" height="1.6" fill="#2c3a47" opacity=".75"/><rect x="449.3" y="5.3" width="3.9" height="3.3" fill="#34434f" opacity=".75"/><rect x="412.0" y="106.2" width="3.5" height="2.2" fill="#34434f" opacity=".75"/><rect x="413.3" y="11.9" width="2.5" height="2.1" fill="#3c4d5d" opacity=".75"/><rect x="239.9" y="42.9" width="2.8" height="3.5" fill="#2c3a47" opacity=".75"/><rect x="282.0" y="103.1" width="3.9" height="1.9" fill="#5e7183" opacity=".75"/><rect x="105.2" y="69.9" width="2.6" height="3.4" fill="#34434f" opacity=".75"/><rect x="504.0" y="104.6" width="2.7" height="1.6" fill="#3c4d5d" opacity=".75"/><rect x="274.9" y="38.4" width="4.0" height="2.7" fill="#95a4b2" opacity=".75"/><rect x="95.7" y="80.7" width="3.2" height="1.9" fill="#4c5f71" opacity=".75"/><rect x="190.7" y="46.5" width="2.0" height="2.2" fill="#77899a" opacity=".75"/><rect x="221.5" y="19.0" width="3.0" height="2.3" fill="#34434f" opacity=".75"/><rect x="121.7" y="110.6" width="1.7" height="3.7" fill="#5e7183" opacity=".75"/><rect x="323.7" y="94.4" width="1.9" height="3.4" fill="#95a4b2" opacity=".75"/><rect x="265.7" y="29.6" width="2.2" height="2.1" fill="#283440" opacity=".75"/><rect x="201.1" y="101.3" width="1.7" height="3.3" fill="#77899a" opacity=".75"/><rect x="135.4" y="72.3" width="2.8" height="2.8" fill="#4c5f71" opacity=".75"/><rect x="270.7" y="89.2" width="4.3" height="2.2" fill="#95a4b2" opacity=".75"/><rect x="267.2" y="103.1" width="2.2" height="2.9" fill="#4c5f71" opacity=".75"/><rect x="452.0" y="58.9" width="2.2" height="1.9" fill="#3c4d5d" opacity=".75"/><rect x="445.5" y="100.5" width="3.7" height="3.4" fill="#4c5f71" opacity=".75"/><rect x="163.3" y="69.2" width="3.6" height="3.5" fill="#77899a" opacity=".75"/><rect x="401.9" y="46.1" width="3.7" height="1.6" fill="#95a4b2" opacity=".75"/><rect x="221.9" y="95.1" width="4.1" height="2.7" fill="#2c3a47" opacity=".75"/><rect x="255.5" y="86.2" width="1.9" height="3.2" fill="#5e7183" opacity=".75"/><rect x="154.3" y="94.0" width="2.6" height="1.9" fill="#95a4b2" opacity=".75"/><rect x="330.4" y="97.0" width="2.6" height="3.8" fill="#3c4d5d" opacity=".75"/><rect x="124.7" y="80.7" width="3.9" height="3.7" fill="#95a4b2" opacity=".75"/><rect x="422.9" y="98.1" width="3.2" height="3.7" fill="#77899a" opacity=".75"/><rect x="465.4" y="107.8" width="3.0" height="2.8" fill="#4c5f71" opacity=".75"/><rect x="79.4" y="109.3" width="2.2" height="2.0" fill="#3c4d5d" opacity=".75"/><rect x="211.3" y="62.8" width="4.4" height="1.5" fill="#5e7183" opacity=".75"/><rect x="188.4" y="94.6" width="3.4" height="2.7" fill="#5e7183" opacity=".75"/><rect x="388.3" y="11.6" width="4.1" height="3.3" fill="#2c3a47" opacity=".75"/><rect x="193.7" y="52.5" width="3.3" height="3.4" fill="#3c4d5d" opacity=".75"/><rect x="132.0" y="66.9" width="4.1" height="1.9" fill="#34434f" opacity=".75"/><rect x="408.2" y="18.6" width="4.0" height="3.8" fill="#283440" opacity=".75"/><rect x="384.3" y="67.5" width="3.3" height="1.6" fill="#2c3a47" opacity=".75"/><rect x="421.9" y="38.3" width="2.2" height="2.3" fill="#283440" opacity=".75"/><rect x="451.9" y="63.8" width="4.5" height="2.3" fill="#283440" opacity=".75"/><rect x="454.0" y="6.1" width="3.1" height="3.9" fill="#95a4b2" opacity=".75"/><rect x="182.9" y="47.7" width="3.4" height="2.4" fill="#4c5f71" opacity=".75"/><rect x="298.7" y="2.4" width="1.9" height="3.9" fill="#34434f" opacity=".75"/><rect x="356.8" y="91.4" width="4.2" height="3.7" fill="#2c3a47" opacity=".75"/><rect x="462.1" y="70.2" width="4.3" height="3.1" fill="#2c3a47" opacity=".75"/><rect x="351.4" y="28.3" width="3.1" height="2.6" fill="#2c3a47" opacity=".75"/><rect x="200.2" y="34.5" width="3.4" height="1.8" fill="#77899a" opacity=".75"/><rect x="108.3" y="66.7" width="4.3" height="2.6" fill="#4c5f71" opacity=".75"/><rect x="471.0" y="103.5" width="3.2" height="2.2" fill="#3c4d5d" opacity=".75"/><rect x="405.4" y="32.4" width="2.9" height="3.2" fill="#5e7183" opacity=".75"/><rect x="364.6" y="22.7" width="3.6" height="2.7" fill="#77899a" opacity=".75"/><rect x="347.6" y="53.0" width="2.4" height="2.1" fill="#5e7183" opacity=".75"/><rect x="155.5" y="61.7" width="4.4" height="2.5" fill="#95a4b2" opacity=".75"/><rect x="143.5" y="107.6" width="2.5" height="2.3" fill="#77899a" opacity=".75"/><rect x="199.0" y="111.6" width="2.4" height="3.4" fill="#4c5f71" opacity=".75"/><rect x="319.7" y="68.5" width="2.5" height="3.1" fill="#283440" opacity=".75"/><rect x="448.0" y="40.0" width="3.8" height="2.8" fill="#4c5f71" opacity=".75"/><rect x="258.8" y="75.5" width="1.9" height="2.0" fill="#77899a" opacity=".75"/><rect x="442.0" y="58.5" width="3.7" height="3.4" fill="#34434f" opacity=".75"/><rect x="191.7" y="71.3" width="3.4" height="3.3" fill="#283440" opacity=".75"/><rect x="464.5" y="0.5" width="3.8" height="3.0" fill="#34434f" opacity=".75"/><rect x="250.1" y="112.2" width="1.9" height="3.6" fill="#77899a" opacity=".75"/><rect x="465.4" y="68.6" width="2.6" height="2.6" fill="#34434f" opacity=".75"/><rect x="200.5" y="39.8" width="2.6" height="2.8" fill="#283440" opacity=".75"/><rect x="363.6" y="0.8" width="3.7" height="4.0" fill="#283440" opacity=".75"/><rect x="271.1" y="20.8" width="2.4" height="1.9" fill="#283440" opacity=".75"/><rect x="333.5" y="9.9" width="4.3" height="2.3" fill="#5e7183" opacity=".75"/><rect x="504.3" y="23.1" width="2.8" height="3.8" fill="#2c3a47" opacity=".75"/><rect x="475.8" y="33.9" width="3.1" height="2.3" fill="#283440" opacity=".75"/><rect x="304.4" y="58.5" width="3.6" height="2.5" fill="#95a4b2" opacity=".75"/><rect x="275.2" y="1.2" width="1.7" height="2.1" fill="#283440" opacity=".75"/><rect x="239.6" y="45.3" width="3.2" height="2.9" fill="#5e7183" opacity=".75"/><rect x="506.9" y="55.0" width="2.8" height="3.1" fill="#95a4b2" opacity=".75"/><rect x="383.3" y="84.4" width="1.8" height="2.4" fill="#95a4b2" opacity=".75"/><rect x="513.2" y="93.3" width="3.0" height="1.8" fill="#77899a" opacity=".75"/><rect x="382.5" y="92.7" width="4.5" height="3.7" fill="#283440" opacity=".75"/><rect x="355.9" y="59.2" width="3.9" height="2.0" fill="#5e7183" opacity=".75"/><rect x="256.8" y="6.8" width="3.2" height="1.8" fill="#2c3a47" opacity=".75"/><rect x="383.4" y="1.2" width="1.5" height="3.3" fill="#2c3a47" opacity=".75"/><rect x="485.4" y="44.9" width="1.8" height="1.5" fill="#2c3a47" opacity=".75"/><rect x="159.1" y="56.3" width="3.2" height="2.2" fill="#4c5f71" opacity=".75"/><rect x="330.2" y="46.5" width="1.9" height="1.9" fill="#3c4d5d" opacity=".75"/><rect x="499.4" y="55.4" width="2.9" height="2.6" fill="#2c3a47" opacity=".75"/><rect x="364.5" y="77.4" width="3.2" height="1.9" fill="#5e7183" opacity=".75"/><rect x="230.3" y="19.1" width="2.3" height="1.7" fill="#3c4d5d" opacity=".75"/><rect x="228.0" y="50.8" width="2.7" height="1.6" fill="#283440" opacity=".75"/><rect x="333.9" y="108.4" width="2.8" height="3.1" fill="#5e7183" opacity=".75"/><rect x="335.9" y="19.6" width="1.5" height="3.7" fill="#34434f" opacity=".75"/><rect x="207.6" y="68.1" width="4.4" height="2.7" fill="#3c4d5d" opacity=".75"/><rect x="395.5" y="25.0" width="2.4" height="3.7" fill="#34434f" opacity=".75"/><rect x="469.7" y="44.8" width="2.6" height="2.3" fill="#283440" opacity=".75"/><rect x="222.2" y="73.6" width="4.4" height="2.6" fill="#95a4b2" opacity=".75"/><rect x="320.9" y="43.8" width="2.9" height="2.4" fill="#283440" opacity=".75"/><rect x="224.7" y="17.6" width="3.6" height="1.7" fill="#77899a" opacity=".75"/><rect x="316.8" y="89.0" width="3.2" height="2.7" fill="#5e7183" opacity=".75"/><rect x="397.3" y="42.6" width="4.4" height="2.0" fill="#34434f" opacity=".75"/><rect x="298.7" y="25.7" width="2.9" height="1.8" fill="#77899a" opacity=".75"/><rect x="340.0" y="49.8" width="4.5" height="2.8" fill="#283440" opacity=".75"/><rect x="345.5" y="24.0" width="4.1" height="1.8" fill="#3c4d5d" opacity=".75"/><rect x="315.8" y="30.6" width="3.8" height="2.5" fill="#4c5f71" opacity=".75"/><rect x="210.8" y="44.1" width="1.8" height="1.9" fill="#5e7183" opacity=".75"/><rect x="215.4" y="74.9" width="1.8" height="2.9" fill="#95a4b2" opacity=".75"/><rect x="434.7" y="85.7" width="2.1" height="3.3" fill="#3c4d5d" opacity=".75"/><rect x="394.7" y="31.9" width="2.7" height="3.8" fill="#4c5f71" opacity=".75"/><rect x="494.3" y="19.9" width="2.6" height="3.5" fill="#95a4b2" opacity=".75"/><rect x="476.3" y="2.9" width="3.6" height="2.7" fill="#283440" opacity=".75"/><rect x="229.5" y="71.1" width="2.0" height="1.8" fill="#5e7183" opacity=".75"/><rect x="392.8" y="4.6" width="1.6" height="1.9" fill="#5e7183" opacity=".75"/><rect x="412.9" y="17.6" width="3.7" height="2.9" fill="#4c5f71" opacity=".75"/><rect x="325.7" y="25.7" width="3.0" height="2.8" fill="#283440" opacity=".75"/><rect x="373.6" y="65.0" width="4.3" height="1.8" fill="#77899a" opacity=".75"/><rect x="478.2" y="98.9" width="3.3" height="3.2" fill="#5e7183" opacity=".75"/><rect x="378.5" y="4.2" width="2.5" height="3.4" fill="#95a4b2" opacity=".75"/><rect x="409.5" y="9.7" width="3.6" height="2.5" fill="#5e7183" opacity=".75"/><rect x="498.7" y="47.9" width="4.3" height="3.2" fill="#34434f" opacity=".75"/><rect x="300.4" y="76.5" width="2.1" height="3.2" fill="#4c5f71" opacity=".75"/><rect x="291.7" y="21.4" width="4.4" height="3.6" fill="#77899a" opacity=".75"/><rect x="423.7" y="26.7" width="2.3" height="3.9" fill="#4c5f71" opacity=".75"/><rect x="232.1" y="46.5" width="2.1" height="2.3" fill="#4c5f71" opacity=".75"/><rect x="380.9" y="55.0" width="2.9" height="3.3" fill="#2c3a47" opacity=".75"/><rect x="303.5" y="50.3" width="4.3" height="2.4" fill="#77899a" opacity=".75"/><rect x="130.4" y="80.0" width="3.3" height="2.1" fill="#3c4d5d" opacity=".75"/><rect x="318.4" y="85.9" width="2.0" height="3.2" fill="#34434f" opacity=".75"/><rect x="450.3" y="45.9" width="2.1" height="3.2" fill="#2c3a47" opacity=".75"/><rect x="233.3" y="23.3" width="1.7" height="2.2" fill="#5e7183" opacity=".75"/><rect x="506.2" y="18.2" width="2.8" height="2.9" fill="#77899a" opacity=".75"/><rect x="410.0" y="9.5" width="3.7" height="4.0" fill="#77899a" opacity=".75"/><rect x="266.7" y="21.4" width="3.1" height="1.5" fill="#3c4d5d" opacity=".75"/><rect x="362.0" y="70.9" width="4.3" height="3.1" fill="#77899a" opacity=".75"/><rect x="365.8" y="8.8" width="3.7" height="1.6" fill="#283440" opacity=".75"/><rect x="450.3" y="33.5" width="2.1" height="3.1" fill="#4c5f71" opacity=".75"/><rect x="116.3" y="81.2" width="2.4" height="3.0" fill="#283440" opacity=".75"/><rect x="153.6" y="93.3" width="2.5" height="2.4" fill="#95a4b2" opacity=".75"/><rect x="449.5" y="28.7" width="1.7" height="1.8" fill="#283440" opacity=".75"/><rect x="480.1" y="106.8" width="3.0" height="2.7" fill="#4c5f71" opacity=".75"/><rect x="521.0" y="68.1" width="3.4" height="1.9" fill="#5e7183" opacity=".75"/><rect x="509.3" y="10.1" width="1.6" height="2.6" fill="#5e7183" opacity=".75"/><rect x="447.6" y="57.8" width="1.9" height="1.7" fill="#2c3a47" opacity=".75"/><rect x="303.1" y="47.6" width="2.5" height="2.6" fill="#4c5f71" opacity=".75"/><rect x="479.5" y="18.6" width="2.4" height="2.6" fill="#95a4b2" opacity=".75"/><rect x="327.1" y="53.0" width="3.1" height="2.8" fill="#283440" opacity=".75"/><rect x="510.0" y="102.7" width="4.1" height="3.9" fill="#3c4d5d" opacity=".75"/><rect x="437.5" y="6.8" width="3.5" height="3.0" fill="#77899a" opacity=".75"/><rect x="326.0" y="47.6" width="2.6" height="3.1" fill="#4c5f71" opacity=".75"/><rect x="205.6" y="38.8" width="4.2" height="1.6" fill="#5e7183" opacity=".75"/><rect x="170.8" y="83.6" width="3.6" height="1.9" fill="#95a4b2" opacity=".75"/><rect x="321.4" y="106.6" width="2.6" height="2.1" fill="#34434f" opacity=".75"/><rect x="249.5" y="12.9" width="2.0" height="3.7" fill="#3c4d5d" opacity=".75"/><rect x="170.2" y="94.6" width="3.4" height="2.0" fill="#77899a" opacity=".75"/><rect x="391.2" y="25.6" width="2.9" height="2.9" fill="#3c4d5d" opacity=".75"/><rect x="403.2" y="102.7" width="3.2" height="3.6" fill="#3c4d5d" opacity=".75"/><rect x="432.6" y="15.2" width="3.0" height="2.8" fill="#3c4d5d" opacity=".75"/><rect x="353.8" y="108.5" width="3.0" height="2.6" fill="#283440" opacity=".75"/><rect x="316.6" y="109.4" width="2.1" height="2.7" fill="#3c4d5d" opacity=".75"/><rect x="132.0" y="87.7" width="1.7" height="2.1" fill="#95a4b2" opacity=".75"/><rect x="502.9" y="51.9" width="1.9" height="1.8" fill="#3c4d5d" opacity=".75"/><rect x="351.4" y="98.6" width="3.2" height="3.8" fill="#95a4b2" opacity=".75"/><rect x="146.1" y="84.2" width="2.5" height="3.4" fill="#2c3a47" opacity=".75"/><rect x="444.0" y="13.9" width="2.6" height="3.3" fill="#95a4b2" opacity=".75"/><rect x="397.0" y="4.9" width="3.3" height="1.7" fill="#95a4b2" opacity=".75"/><rect x="433.8" y="12.8" width="4.3" height="3.2" fill="#77899a" opacity=".75"/><rect x="230.5" y="78.4" width="1.6" height="4.0" fill="#34434f" opacity=".75"/><rect x="120.0" y="90.5" width="2.1" height="2.9" fill="#77899a" opacity=".75"/><rect x="465.8" y="75.7" width="4.0" height="3.0" fill="#77899a" opacity=".75"/><rect x="313.9" y="77.9" width="3.9" height="3.9" fill="#2c3a47" opacity=".75"/><rect x="81.2" y="112.4" width="3.0" height="2.7" fill="#2c3a47" opacity=".75"/><rect x="432.6" y="4.0" width="2.0" height="3.5" fill="#283440" opacity=".75"/><rect x="451.9" y="109.3" width="3.6" height="2.6" fill="#5e7183" opacity=".75"/><rect x="465.5" y="69.0" width="1.7" height="2.3" fill="#5e7183" opacity=".75"/><rect x="353.0" y="23.9" width="4.0" height="3.3" fill="#95a4b2" opacity=".75"/><rect x="331.4" y="43.8" width="2.6" height="1.5" fill="#34434f" opacity=".75"/><rect x="278.1" y="111.5" width="1.6" height="1.9" fill="#4c5f71" opacity=".75"/><rect x="193.5" y="30.9" width="3.0" height="2.2" fill="#4c5f71" opacity=".75"/><rect x="519.5" y="3.9" width="3.2" height="3.4" fill="#5e7183" opacity=".75"/><rect x="420.8" y="71.5" width="3.4" height="2.4" fill="#77899a" opacity=".75"/><rect x="429.2" y="26.9" width="3.9" height="1.9" fill="#3c4d5d" opacity=".75"/><rect x="207.7" y="86.3" width="3.7" height="2.8" fill="#5e7183" opacity=".75"/><rect x="228.7" y="62.2" width="2.7" height="1.7" fill="#95a4b2" opacity=".75"/><rect x="374.3" y="99.9" width="3.8" height="2.8" fill="#5e7183" opacity=".75"/><rect x="436.6" y="112.6" width="2.0" height="2.0" fill="#34434f" opacity=".75"/><rect x="253.5" y="44.8" width="3.8" height="3.8" fill="#3c4d5d" opacity=".75"/><rect x="135.1" y="81.3" width="2.3" height="2.9" fill="#95a4b2" opacity=".75"/><rect x="488.9" y="66.1" width="2.4" height="2.4" fill="#34434f" opacity=".75"/><rect x="231.7" y="87.5" width="2.8" height="3.7" fill="#3c4d5d" opacity=".75"/><rect x="449.9" y="36.1" width="2.0" height="3.7" fill="#2c3a47" opacity=".75"/><rect x="413.6" y="70.8" width="2.2" height="1.6" fill="#2c3a47" opacity=".75"/><rect x="251.0" y="22.6" width="3.3" height="3.7" fill="#3c4d5d" opacity=".75"/><rect x="159.1" y="82.9" width="4.4" height="3.0" fill="#3c4d5d" opacity=".75"/><rect x="103.3" y="92.2" width="3.2" height="3.3" fill="#2c3a47" opacity=".75"/><rect x="155.2" y="60.7" width="4.1" height="3.1" fill="#2c3a47" opacity=".75"/><rect x="409.4" y="73.3" width="2.7" height="3.2" fill="#95a4b2" opacity=".75"/><rect x="149.1" y="97.6" width="3.9" height="1.7" fill="#95a4b2" opacity=".75"/><rect x="421.5" y="111.6" width="2.7" height="3.9" fill="#2c3a47" opacity=".75"/><rect x="366.3" y="35.4" width="2.7" height="3.3" fill="#95a4b2" opacity=".75"/><rect x="165.3" y="59.8" width="4.0" height="2.4" fill="#95a4b2" opacity=".75"/><rect x="261.7" y="60.9" width="3.3" height="2.9" fill="#95a4b2" opacity=".75"/><rect x="174.2" y="69.9" width="3.9" height="2.7" fill="#2c3a47" opacity=".75"/><rect x="421.5" y="34.9" width="3.8" height="3.9" fill="#34434f" opacity=".75"/><rect x="323.4" y="40.8" width="3.1" height="2.2" fill="#77899a" opacity=".75"/><rect x="366.9" y="87.5" width="2.6" height="4.0" fill="#5e7183" opacity=".75"/><rect x="251.6" y="110.6" width="4.3" height="3.1" fill="#3c4d5d" opacity=".75"/><rect x="321.5" y="20.5" width="4.3" height="2.4" fill="#4c5f71" opacity=".75"/><rect x="479.0" y="98.4" width="4.1" height="3.4" fill="#2c3a47" opacity=".75"/><rect x="228.9" y="80.2" width="2.8" height="3.6" fill="#5e7183" opacity=".75"/><rect x="358.2" y="38.9" width="3.9" height="2.7" fill="#95a4b2" opacity=".75"/><rect x="427.8" y="3.0" width="3.5" height="1.5" fill="#283440" opacity=".75"/><rect x="375.4" y="39.6" width="2.2" height="2.4" fill="#283440" opacity=".75"/><rect x="498.1" y="70.9" width="2.2" height="2.1" fill="#77899a" opacity=".75"/><rect x="391.3" y="27.3" width="2.6" height="2.3" fill="#283440" opacity=".75"/><rect x="361.1" y="33.7" width="4.5" height="2.0" fill="#4c5f71" opacity=".75"/><rect x="286.2" y="105.5" width="3.8" height="3.9" fill="#4c5f71" opacity=".75"/><rect x="442.7" y="31.9" width="2.5" height="2.7" fill="#5e7183" opacity=".75"/><rect x="143.2" y="77.2" width="3.3" height="2.6" fill="#2c3a47" opacity=".75"/><rect x="469.9" y="23.7" width="4.2" height="2.4" fill="#34434f" opacity=".75"/><rect x="152.6" y="97.6" width="4.5" height="2.2" fill="#2c3a47" opacity=".75"/><rect x="434.7" y="17.2" width="4.2" height="1.8" fill="#77899a" opacity=".75"/><rect x="138.3" y="83.2" width="1.8" height="1.9" fill="#283440" opacity=".75"/><rect x="486.1" y="80.9" width="4.1" height="3.9" fill="#2c3a47" opacity=".75"/><rect x="335.1" y="22.8" width="3.4" height="1.5" fill="#4c5f71" opacity=".75"/><rect x="298.7" y="26.2" width="2.8" height="1.8" fill="#2c3a47" opacity=".75"/><rect x="91.9" y="101.0" width="1.7" height="1.8" fill="#34434f" opacity=".75"/><rect x="509.7" y="59.4" width="1.5" height="2.1" fill="#4c5f71" opacity=".75"/><rect x="356.8" y="61.6" width="4.5" height="2.8" fill="#34434f" opacity=".75"/><rect x="503.6" y="8.7" width="4.4" height="3.6" fill="#5e7183" opacity=".75"/><rect x="401.3" y="30.8" width="2.0" height="2.2" fill="#3c4d5d" opacity=".75"/><rect x="507.7" y="22.2" width="1.6" height="3.5" fill="#95a4b2" opacity=".75"/><rect x="191.0" y="36.8" width="1.6" height="2.6" fill="#77899a" opacity=".75"/><rect x="318.6" y="78.0" width="4.4" height="3.7" fill="#77899a" opacity=".75"/><rect x="250.9" y="36.0" width="2.8" height="3.9" fill="#283440" opacity=".75"/><rect x="414.7" y="99.6" width="3.9" height="3.7" fill="#2c3a47" opacity=".75"/><rect x="178.3" y="56.6" width="4.5" height="3.2" fill="#283440" opacity=".75"/><rect x="518.9" y="93.3" width="3.5" height="1.7" fill="#2c3a47" opacity=".75"/><rect x="481.6" y="5.6" width="3.6" height="2.3" fill="#34434f" opacity=".75"/><rect x="318.7" y="35.7" width="4.4" height="1.5" fill="#34434f" opacity=".75"/><rect x="301.1" y="66.9" width="4.5" height="2.1" fill="#283440" opacity=".75"/><rect x="512.1" y="30.1" width="3.5" height="3.6" fill="#3c4d5d" opacity=".75"/><rect x="354.9" y="61.4" width="2.2" height="3.0" fill="#77899a" opacity=".75"/><rect x="188.8" y="95.0" width="4.1" height="2.4" fill="#34434f" opacity=".75"/><rect x="328.5" y="112.9" width="1.7" height="3.4" fill="#95a4b2" opacity=".75"/><rect x="307.3" y="59.6" width="3.9" height="2.1" fill="#4c5f71" opacity=".75"/><rect x="139.1" y="74.8" width="2.0" height="3.9" fill="#2c3a47" opacity=".75"/><rect x="215.8" y="40.9" width="4.1" height="2.6" fill="#283440" opacity=".75"/><rect x="433.9" y="58.9" width="2.9" height="1.7" fill="#283440" opacity=".75"/><rect x="201.6" y="50.4" width="1.8" height="3.1" fill="#4c5f71" opacity=".75"/><rect x="413.7" y="16.9" width="3.5" height="2.4" fill="#5e7183" opacity=".75"/><rect x="352.1" y="59.1" width="3.9" height="2.1" fill="#5e7183" opacity=".75"/><rect x="337.5" y="34.6" width="3.1" height="3.8" fill="#77899a" opacity=".75"/><rect x="179.5" y="94.3" width="1.8" height="3.1" fill="#3c4d5d" opacity=".75"/><rect x="428.9" y="69.8" width="2.6" height="1.6" fill="#34434f" opacity=".75"/><rect x="411.2" y="109.6" width="2.8" height="3.0" fill="#77899a" opacity=".75"/><rect x="229.6" y="43.5" width="3.2" height="3.8" fill="#5e7183" opacity=".75"/><rect x="512.9" y="96.2" width="3.2" height="1.7" fill="#5e7183" opacity=".75"/><rect x="412.5" y="42.9" width="3.1" height="2.7" fill="#2c3a47" opacity=".75"/><rect x="118.8" y="63.7" width="4.3" height="3.3" fill="#283440" opacity=".75"/><rect x="257.9" y="53.5" width="4.2" height="2.6" fill="#34434f" opacity=".75"/><rect x="131.3" y="85.1" width="1.5" height="2.1" fill="#5e7183" opacity=".75"/><rect x="252.0" y="4.6" width="3.5" height="2.9" fill="#283440" opacity=".75"/><rect x="418.8" y="13.3" width="2.2" height="1.7" fill="#2c3a47" opacity=".75"/><rect x="411.3" y="63.8" width="1.7" height="3.2" fill="#95a4b2" opacity=".75"/><rect x="288.7" y="6.2" width="3.6" height="2.5" fill="#4c5f71" opacity=".75"/><rect x="522.1" y="92.3" width="4.1" height="1.9" fill="#95a4b2" opacity=".75"/><rect x="156.2" y="111.0" width="2.1" height="2.8" fill="#77899a" opacity=".75"/><rect x="370.8" y="33.8" width="2.7" height="3.7" fill="#2c3a47" opacity=".75"/><rect x="209.0" y="28.1" width="2.6" height="2.6" fill="#77899a" opacity=".75"/><rect x="164.0" y="73.7" width="4.3" height="3.1" fill="#4c5f71" opacity=".75"/><rect x="235.7" y="90.6" width="2.1" height="3.8" fill="#2c3a47" opacity=".75"/><rect x="400.4" y="1.0" width="1.7" height="3.9" fill="#95a4b2" opacity=".75"/><rect x="268.9" y="22.7" width="2.1" height="3.9" fill="#34434f" opacity=".75"/><rect x="253.9" y="82.2" width="2.1" height="2.0" fill="#4c5f71" opacity=".75"/><rect x="266.5" y="72.2" width="1.6" height="3.7" fill="#3c4d5d" opacity=".75"/><rect x="438.9" y="56.2" width="1.5" height="3.3" fill="#4c5f71" opacity=".75"/><rect x="295.7" y="76.1" width="3.5" height="2.2" fill="#5e7183" opacity=".75"/><rect x="312.1" y="18.0" width="3.8" height="3.3" fill="#3c4d5d" opacity=".75"/><rect x="280.9" y="22.8" width="1.8" height="1.6" fill="#5e7183" opacity=".75"/><rect x="368.5" y="29.1" width="4.2" height="3.2" fill="#4c5f71" opacity=".75"/><rect x="463.3" y="104.4" width="1.9" height="1.9" fill="#34434f" opacity=".75"/><rect x="203.0" y="26.3" width="3.2" height="2.3" fill="#4c5f71" opacity=".75"/><rect x="210.2" y="29.2" width="3.1" height="2.0" fill="#5e7183" opacity=".75"/><rect x="242.1" y="72.4" width="2.2" height="2.9" fill="#3c4d5d" opacity=".75"/><rect x="251.8" y="4.4" width="2.6" height="3.1" fill="#5e7183" opacity=".75"/><rect x="521.2" y="106.2" width="3.1" height="2.2" fill="#95a4b2" opacity=".75"/><rect x="472.9" y="103.2" width="2.1" height="2.2" fill="#77899a" opacity=".75"/><rect x="340.8" y="61.1" width="1.8" height="1.8" fill="#77899a" opacity=".75"/><rect x="417.8" y="86.5" width="4.2" height="2.9" fill="#77899a" opacity=".75"/><rect x="508.2" y="38.9" width="4.3" height="3.1" fill="#2c3a47" opacity=".75"/><rect x="287.9" y="37.2" width="2.6" height="1.8" fill="#77899a" opacity=".75"/><rect x="436.5" y="81.8" width="2.9" height="3.4" fill="#3c4d5d" opacity=".75"/><rect x="427.0" y="67.3" width="2.9" height="1.6" fill="#3c4d5d" opacity=".75"/><rect x="257.1" y="78.7" width="2.7" height="3.6" fill="#3c4d5d" opacity=".75"/><rect x="239.7" y="74.9" width="2.0" height="1.9" fill="#3c4d5d" opacity=".75"/><rect x="220.2" y="95.2" width="4.1" height="2.7" fill="#4c5f71" opacity=".75"/><rect x="192.5" y="61.1" width="2.5" height="2.1" fill="#2c3a47" opacity=".75"/><rect x="299.6" y="41.5" width="2.1" height="2.5" fill="#5e7183" opacity=".75"/><rect x="517.6" y="102.6" width="3.7" height="2.8" fill="#5e7183" opacity=".75"/><rect x="473.4" y="1.7" width="4.3" height="2.7" fill="#5e7183" opacity=".75"/><rect x="382.1" y="25.9" width="3.8" height="1.9" fill="#77899a" opacity=".75"/><rect x="522.2" y="47.9" width="3.4" height="1.8" fill="#3c4d5d" opacity=".75"/><rect x="108.2" y="65.4" width="2.2" height="3.0" fill="#2c3a47" opacity=".75"/><rect x="442.1" y="8.3" width="2.5" height="1.7" fill="#5e7183" opacity=".75"/><rect x="350.1" y="78.2" width="3.9" height="2.4" fill="#34434f" opacity=".75"/><rect x="338.1" y="20.7" width="2.5" height="3.8" fill="#283440" opacity=".75"/><rect x="137.1" y="57.8" width="2.0" height="3.5" fill="#4c5f71" opacity=".75"/><rect x="162.3" y="104.5" width="3.6" height="3.3" fill="#3c4d5d" opacity=".75"/><rect x="521.8" y="89.4" width="2.9" height="2.7" fill="#95a4b2" opacity=".75"/><rect x="481.4" y="84.9" width="3.4" height="2.0" fill="#2c3a47" opacity=".75"/><rect x="453.1" y="88.9" width="1.8" height="3.3" fill="#95a4b2" opacity=".75"/><rect x="334.0" y="90.8" width="3.0" height="3.4" fill="#34434f" opacity=".75"/><rect x="131.1" y="93.6" width="4.3" height="3.8" fill="#34434f" opacity=".75"/><rect x="447.1" y="90.6" width="3.3" height="2.6" fill="#77899a" opacity=".75"/><rect x="408.9" y="67.1" width="3.5" height="3.1" fill="#3c4d5d" opacity=".75"/><rect x="508.7" y="89.0" width="2.3" height="3.6" fill="#5e7183" opacity=".75"/><rect x="178.8" y="66.4" width="3.2" height="3.7" fill="#2c3a47" opacity=".75"/><rect x="247.6" y="88.6" width="3.9" height="3.2" fill="#95a4b2" opacity=".75"/><rect x="444.1" y="45.9" width="1.8" height="3.1" fill="#95a4b2" opacity=".75"/><rect x="370.5" y="102.2" width="2.8" height="2.3" fill="#77899a" opacity=".75"/><rect x="291.5" y="1.8" width="1.8" height="3.5" fill="#283440" opacity=".75"/><rect x="256.1" y="33.8" width="1.9" height="2.9" fill="#3c4d5d" opacity=".75"/><rect x="230.2" y="95.4" width="3.4" height="2.2" fill="#3c4d5d" opacity=".75"/><rect x="519.6" y="21.2" width="4.2" height="2.5" fill="#5e7183" opacity=".75"/><rect x="124.7" y="77.2" width="1.6" height="3.6" fill="#4c5f71" opacity=".75"/><rect x="246.5" y="37.6" width="2.0" height="1.9" fill="#95a4b2" opacity=".75"/><rect x="473.1" y="69.0" width="4.2" height="2.5" fill="#34434f" opacity=".75"/><rect x="214.3" y="99.0" width="3.9" height="3.0" fill="#4c5f71" opacity=".75"/><rect x="456.6" y="11.7" width="2.2" height="2.9" fill="#77899a" opacity=".75"/><rect x="403.7" y="76.4" width="4.5" height="3.3" fill="#283440" opacity=".75"/><rect x="131.2" y="85.1" width="2.3" height="2.5" fill="#95a4b2" opacity=".75"/><rect x="271.2" y="108.2" width="2.6" height="3.2" fill="#283440" opacity=".75"/><rect x="494.8" y="91.4" width="1.7" height="3.1" fill="#34434f" opacity=".75"/><rect x="234.8" y="110.3" width="1.7" height="3.6" fill="#3c4d5d" opacity=".75"/><rect x="322.5" y="50.6" width="3.8" height="3.7" fill="#34434f" opacity=".75"/><rect x="132.1" y="107.7" width="4.2" height="1.9" fill="#2c3a47" opacity=".75"/><rect x="522.0" y="19.6" width="3.3" height="4.0" fill="#5e7183" opacity=".75"/><rect x="201.9" y="61.5" width="2.8" height="3.9" fill="#3c4d5d" opacity=".75"/><rect x="434.6" y="76.4" width="2.6" height="3.9" fill="#95a4b2" opacity=".75"/><rect x="383.0" y="31.4" width="2.0" height="2.9" fill="#2c3a47" opacity=".75"/><rect x="429.5" y="39.2" width="1.9" height="2.8" fill="#2c3a47" opacity=".75"/><rect x="143.5" y="83.4" width="2.0" height="2.3" fill="#2c3a47" opacity=".75"/><rect x="336.0" y="109.8" width="3.8" height="2.4" fill="#4c5f71" opacity=".75"/><rect x="193.4" y="100.7" width="2.9" height="3.1" fill="#34434f" opacity=".75"/><rect x="252.6" y="77.0" width="2.6" height="2.3" fill="#34434f" opacity=".75"/><rect x="190.9" y="23.0" width="4.2" height="2.6" fill="#283440" opacity=".75"/><rect x="358.6" y="88.0" width="2.4" height="1.9" fill="#34434f" opacity=".75"/><rect x="369.6" y="95.8" width="2.7" height="1.7" fill="#283440" opacity=".75"/><rect x="234.3" y="103.7" width="3.1" height="2.2" fill="#3c4d5d" opacity=".75"/><rect x="187.7" y="87.2" width="1.6" height="3.6" fill="#77899a" opacity=".75"/><rect x="230.2" y="106.2" width="2.3" height="2.1" fill="#3c4d5d" opacity=".75"/><rect x="466.6" y="10.9" width="3.3" height="3.6" fill="#3c4d5d" opacity=".75"/><rect x="491.3" y="18.7" width="2.0" height="3.3" fill="#3c4d5d" opacity=".75"/><rect x="420.9" y="44.6" width="4.3" height="3.4" fill="#95a4b2" opacity=".75"/><rect x="251.2" y="56.5" width="2.5" height="3.7" fill="#4c5f71" opacity=".75"/><rect x="310.9" y="58.9" width="3.5" height="3.8" fill="#4c5f71" opacity=".75"/><rect x="166.5" y="77.1" width="4.3" height="1.7" fill="#2c3a47" opacity=".75"/><rect x="455.9" y="75.5" width="3.2" height="2.5" fill="#77899a" opacity=".75"/><rect x="425.7" y="76.8" width="4.1" height="1.8" fill="#5e7183" opacity=".75"/><rect x="374.2" y="85.2" width="3.0" height="3.7" fill="#2c3a47" opacity=".75"/><rect x="406.6" y="92.8" width="3.4" height="3.7" fill="#4c5f71" opacity=".75"/><rect x="363.3" y="98.9" width="2.7" height="3.7" fill="#3c4d5d" opacity=".75"/><rect x="419.5" y="68.3" width="3.0" height="3.0" fill="#5e7183" opacity=".75"/><rect x="210.1" y="40.7" width="3.2" height="3.7" fill="#3c4d5d" opacity=".75"/><rect x="233.0" y="79.0" width="1.7" height="3.6" fill="#95a4b2" opacity=".75"/><rect x="168.9" y="51.7" width="3.8" height="2.6" fill="#2c3a47" opacity=".75"/><rect x="512.7" y="66.7" width="3.3" height="1.6" fill="#34434f" opacity=".75"/><rect x="355.1" y="38.4" width="2.5" height="2.9" fill="#5e7183" opacity=".75"/><rect x="322.1" y="92.7" width="2.3" height="3.9" fill="#2c3a47" opacity=".75"/><rect x="437.3" y="30.3" width="2.6" height="3.9" fill="#77899a" opacity=".75"/><rect x="398.2" y="66.1" width="2.7" height="2.8" fill="#283440" opacity=".75"/><rect x="172.5" y="98.0" width="4.5" height="3.5" fill="#95a4b2" opacity=".75"/><rect x="368.0" y="28.4" width="3.4" height="2.9" fill="#283440" opacity=".75"/><rect x="275.6" y="77.1" width="3.6" height="2.6" fill="#95a4b2" opacity=".75"/><rect x="348.9" y="12.6" width="2.0" height="3.4" fill="#3c4d5d" opacity=".75"/><rect x="403.4" y="58.3" width="2.8" height="2.0" fill="#5e7183" opacity=".75"/><rect x="420.3" y="22.7" width="3.8" height="3.6" fill="#77899a" opacity=".75"/><rect x="408.7" y="107.2" width="4.3" height="3.3" fill="#2c3a47" opacity=".75"/><rect x="397.1" y="71.2" width="2.3" height="2.4" fill="#4c5f71" opacity=".75"/><rect x="326.1" y="35.7" width="2.6" height="1.8" fill="#4c5f71" opacity=".75"/><rect x="383.2" y="47.6" width="1.6" height="3.3" fill="#3c4d5d" opacity=".75"/><rect x="225.4" y="97.0" width="2.6" height="3.7" fill="#34434f" opacity=".75"/><rect x="518.7" y="103.0" width="3.9" height="2.7" fill="#4c5f71" opacity=".75"/><rect x="455.0" y="59.7" width="2.3" height="2.5" fill="#95a4b2" opacity=".75"/><rect x="481.7" y="80.3" width="4.3" height="4.0" fill="#283440" opacity=".75"/><rect x="420.8" y="82.0" width="2.0" height="3.7" fill="#283440" opacity=".75"/><rect x="167.0" y="66.1" width="2.6" height="1.5" fill="#3c4d5d" opacity=".75"/><rect x="280.1" y="4.9" width="4.2" height="2.8" fill="#3c4d5d" opacity=".75"/><rect x="458.9" y="38.2" width="3.2" height="2.7" fill="#5e7183" opacity=".75"/><rect x="230.6" y="99.5" width="1.8" height="3.7" fill="#5e7183" opacity=".75"/><rect x="269.3" y="64.6" width="4.3" height="3.2" fill="#34434f" opacity=".75"/><rect x="415.0" y="64.4" width="3.7" height="3.7" fill="#4c5f71" opacity=".75"/><rect x="251.3" y="76.0" width="3.6" height="2.1" fill="#34434f" opacity=".75"/><rect x="383.5" y="53.3" width="1.9" height="3.8" fill="#283440" opacity=".75"/><rect x="517.0" y="25.8" width="2.7" height="3.5" fill="#5e7183" opacity=".75"/><rect x="357.2" y="83.8" width="1.6" height="1.7" fill="#5e7183" opacity=".75"/><rect x="433.6" y="4.3" width="1.6" height="2.1" fill="#5e7183" opacity=".75"/><rect x="421.2" y="5.0" width="3.2" height="2.9" fill="#283440" opacity=".75"/><rect x="117.0" y="110.0" width="3.6" height="2.0" fill="#4c5f71" opacity=".75"/><rect x="349.0" y="36.5" width="3.0" height="3.9" fill="#283440" opacity=".75"/><rect x="485.1" y="0.3" width="4.1" height="2.9" fill="#3c4d5d" opacity=".75"/><rect x="297.6" y="70.0" width="3.3" height="3.5" fill="#3c4d5d" opacity=".75"/><rect x="389.8" y="74.7" width="3.3" height="2.6" fill="#2c3a47" opacity=".75"/><rect x="323.6" y="23.6" width="2.1" height="2.8" fill="#34434f" opacity=".75"/><rect x="164.6" y="80.0" width="3.7" height="3.2" fill="#3c4d5d" opacity=".75"/><rect x="347.5" y="9.8" width="3.1" height="3.2" fill="#3c4d5d" opacity=".75"/><rect x="400.8" y="96.0" width="4.0" height="1.8" fill="#95a4b2" opacity=".75"/><rect x="194.1" y="34.9" width="2.4" height="2.7" fill="#95a4b2" opacity=".75"/><rect x="418.3" y="0.8" width="1.7" height="1.8" fill="#5e7183" opacity=".75"/><rect x="305.6" y="51.5" width="2.7" height="3.0" fill="#5e7183" opacity=".75"/><rect x="485.1" y="82.8" width="3.9" height="3.8" fill="#2c3a47" opacity=".75"/><rect x="394.7" y="3.5" width="3.5" height="3.6" fill="#283440" opacity=".75"/><rect x="432.9" y="6.2" width="3.4" height="2.2" fill="#77899a" opacity=".75"/><rect x="390.0" y="28.5" width="2.4" height="2.4" fill="#95a4b2" opacity=".75"/><rect x="243.2" y="18.3" width="2.0" height="3.9" fill="#34434f" opacity=".75"/><rect x="415.3" y="94.6" width="4.5" height="3.4" fill="#77899a" opacity=".75"/><rect x="434.0" y="1.5" width="3.1" height="2.4" fill="#95a4b2" opacity=".75"/><rect x="487.2" y="37.1" width="3.8" height="3.4" fill="#95a4b2" opacity=".75"/><rect x="430.0" y="60.1" width="1.8" height="3.6" fill="#95a4b2" opacity=".75"/><rect x="262.5" y="38.1" width="1.7" height="1.8" fill="#34434f" opacity=".75"/><rect x="143.0" y="60.0" width="3.4" height="2.8" fill="#283440" opacity=".75"/><rect x="491.9" y="58.6" width="3.8" height="3.1" fill="#5e7183" opacity=".75"/><rect x="168.8" y="85.3" width="4.2" height="3.3" fill="#283440" opacity=".75"/><rect x="394.3" y="111.8" width="2.0" height="2.6" fill="#4c5f71" opacity=".75"/><rect x="382.9" y="84.3" width="3.8" height="2.1" fill="#77899a" opacity=".75"/><rect x="505.1" y="10.4" width="4.1" height="3.1" fill="#4c5f71" opacity=".75"/><rect x="367.2" y="67.6" width="3.6" height="2.3" fill="#3c4d5d" opacity=".75"/><rect x="400.5" y="60.5" width="1.7" height="1.7" fill="#3c4d5d" opacity=".75"/><rect x="397.3" y="73.3" width="3.0" height="3.7" fill="#34434f" opacity=".75"/><rect x="207.3" y="46.2" width="3.6" height="2.6" fill="#3c4d5d" opacity=".75"/><rect x="460.2" y="52.1" width="2.5" height="2.0" fill="#283440" opacity=".75"/><rect x="445.4" y="25.6" width="4.1" height="3.5" fill="#95a4b2" opacity=".75"/><rect x="156.0" y="102.3" width="2.0" height="3.1" fill="#77899a" opacity=".75"/><rect x="369.5" y="20.4" width="1.9" height="1.7" fill="#2c3a47" opacity=".75"/><rect x="243.5" y="73.7" width="3.2" height="2.1" fill="#3c4d5d" opacity=".75"/><rect x="204.0" y="30.3" width="4.3" height="3.8" fill="#95a4b2" opacity=".75"/><rect x="234.7" y="81.7" width="1.9" height="3.5" fill="#77899a" opacity=".75"/><rect x="237.8" y="18.8" width="3.5" height="3.7" fill="#4c5f71" opacity=".75"/><rect x="199.2" y="43.0" width="3.8" height="2.1" fill="#5e7183" opacity=".75"/><rect x="471.6" y="86.2" width="4.1" height="2.1" fill="#34434f" opacity=".75"/><rect x="237.3" y="31.8" width="2.9" height="2.7" fill="#3c4d5d" opacity=".75"/><rect x="278.4" y="80.4" width="1.8" height="1.8" fill="#34434f" opacity=".75"/><rect x="488.2" y="102.8" width="2.8" height="1.7" fill="#5e7183" opacity=".75"/><rect x="282.5" y="105.8" width="3.2" height="1.7" fill="#5e7183" opacity=".75"/><rect x="289.2" y="24.4" width="3.3" height="4.0" fill="#283440" opacity=".75"/><rect x="119.9" y="106.6" width="3.1" height="2.1" fill="#4c5f71" opacity=".75"/><rect x="301.2" y="35.7" width="1.8" height="2.7" fill="#34434f" opacity=".75"/><rect x="488.6" y="52.1" width="3.7" height="1.7" fill="#34434f" opacity=".75"/><rect x="355.8" y="11.1" width="2.3" height="3.5" fill="#3c4d5d" opacity=".75"/><rect x="124.2" y="111.2" width="2.9" height="1.9" fill="#2c3a47" opacity=".75"/><rect x="354.3" y="91.7" width="4.2" height="3.1" fill="#2c3a47" opacity=".75"/><rect x="313.3" y="26.5" width="3.0" height="3.0" fill="#95a4b2" opacity=".75"/><rect x="135.7" y="90.8" width="4.3" height="3.4" fill="#95a4b2" opacity=".75"/><rect x="367.4" y="73.5" width="3.6" height="1.5" fill="#34434f" opacity=".75"/><rect x="478.4" y="9.3" width="2.2" height="1.6" fill="#34434f" opacity=".75"/><rect x="511.9" y="94.8" width="2.4" height="2.3" fill="#5e7183" opacity=".75"/><rect x="495.6" y="45.4" width="3.5" height="1.5" fill="#34434f" opacity=".75"/><rect x="175.6" y="53.9" width="3.0" height="3.9" fill="#34434f" opacity=".75"/><rect x="374.7" y="24.0" width="4.2" height="2.0" fill="#34434f" opacity=".75"/><rect x="161.5" y="113.0" width="2.9" height="2.1" fill="#95a4b2" opacity=".75"/><rect x="257.1" y="80.1" width="3.2" height="3.4" fill="#5e7183" opacity=".75"/><rect x="445.1" y="0.0" width="3.3" height="2.1" fill="#34434f" opacity=".75"/><rect x="285.2" y="61.9" width="2.7" height="2.2" fill="#3c4d5d" opacity=".75"/><rect x="194.1" y="47.0" width="4.2" height="4.0" fill="#4c5f71" opacity=".75"/><rect x="333.4" y="100.2" width="1.7" height="2.1" fill="#4c5f71" opacity=".75"/><rect x="106.3" y="92.6" width="3.9" height="2.1" fill="#5e7183" opacity=".75"/><rect x="459.7" y="108.1" width="2.3" height="3.9" fill="#283440" opacity=".75"/><rect x="441.3" y="109.3" width="4.2" height="1.7" fill="#4c5f71" opacity=".75"/><rect x="464.3" y="47.5" width="3.1" height="3.6" fill="#3c4d5d" opacity=".75"/><rect x="272.2" y="56.5" width="3.1" height="3.2" fill="#95a4b2" opacity=".75"/><rect x="477.1" y="108.7" width="2.1" height="1.7" fill="#77899a" opacity=".75"/><rect x="328.4" y="20.5" width="3.6" height="2.1" fill="#5e7183" opacity=".75"/><rect x="256.7" y="108.1" width="2.3" height="3.6" fill="#2c3a47" opacity=".75"/><rect x="352.8" y="53.3" width="3.5" height="3.5" fill="#2c3a47" opacity=".75"/><rect x="271.5" y="38.4" width="3.8" height="3.9" fill="#4c5f71" opacity=".75"/><rect x="280.9" y="36.6" width="4.4" height="3.9" fill="#3c4d5d" opacity=".75"/><rect x="503.9" y="23.4" width="2.7" height="3.9" fill="#5e7183" opacity=".75"/><rect x="238.0" y="80.0" width="2.6" height="2.7" fill="#95a4b2" opacity=".75"/><rect x="167.4" y="30.1" width="1.6" height="1.8" fill="#283440" opacity=".75"/><rect x="349.0" y="73.0" width="2.9" height="2.6" fill="#95a4b2" opacity=".75"/><rect x="331.4" y="40.2" width="3.6" height="2.6" fill="#4c5f71" opacity=".75"/><rect x="437.5" y="78.3" width="3.5" height="3.5" fill="#283440" opacity=".75"/><rect x="237.5" y="108.8" width="3.8" height="3.6" fill="#5e7183" opacity=".75"/><rect x="357.5" y="79.7" width="4.4" height="2.0" fill="#77899a" opacity=".75"/><rect x="363.9" y="18.5" width="1.7" height="2.6" fill="#2c3a47" opacity=".75"/><rect x="312.3" y="82.0" width="2.3" height="1.7" fill="#2c3a47" opacity=".75"/><rect x="449.2" y="9.7" width="2.2" height="1.9" fill="#4c5f71" opacity=".75"/><rect x="190.1" y="80.4" width="4.5" height="1.5" fill="#3c4d5d" opacity=".75"/><rect x="159.8" y="53.1" width="1.7" height="2.4" fill="#77899a" opacity=".75"/><rect x="259.1" y="54.1" width="2.3" height="1.6" fill="#3c4d5d" opacity=".75"/><rect x="189.6" y="30.0" width="1.7" height="1.6" fill="#77899a" opacity=".75"/><rect x="129.7" y="98.1" width="2.5" height="2.8" fill="#4c5f71" opacity=".75"/><rect x="155.3" y="105.0" width="3.2" height="1.6" fill="#4c5f71" opacity=".75"/><rect x="450.0" y="47.8" width="2.4" height="1.5" fill="#77899a" opacity=".75"/><rect x="431.1" y="90.6" width="1.8" height="3.0" fill="#5e7183" opacity=".75"/><rect x="429.6" y="51.1" width="2.9" height="3.5" fill="#3c4d5d" opacity=".75"/><rect x="443.7" y="53.3" width="2.8" height="1.5" fill="#5e7183" opacity=".75"/><rect x="118.9" y="71.6" width="2.2" height="2.1" fill="#283440" opacity=".75"/><rect x="306.4" y="37.5" width="1.7" height="2.1" fill="#2c3a47" opacity=".75"/><rect x="170.1" y="32.9" width="3.4" height="3.2" fill="#5e7183" opacity=".75"/><rect x="478.5" y="23.1" width="2.4" height="3.2" fill="#77899a" opacity=".75"/><rect x="279.7" y="38.3" width="3.6" height="3.2" fill="#77899a" opacity=".75"/><rect x="249.6" y="59.1" width="2.4" height="3.4" fill="#95a4b2" opacity=".75"/><rect x="302.7" y="17.1" width="4.3" height="3.7" fill="#34434f" opacity=".75"/><rect x="425.6" y="81.2" width="4.1" height="3.2" fill="#34434f" opacity=".75"/><rect x="309.8" y="87.6" width="1.8" height="1.7" fill="#283440" opacity=".75"/><rect x="268.1" y="7.5" width="3.9" height="2.8" fill="#34434f" opacity=".75"/><rect x="214.2" y="53.9" width="3.6" height="3.4" fill="#95a4b2" opacity=".75"/><rect x="312.3" y="88.1" width="3.7" height="2.3" fill="#2c3a47" opacity=".75"/><rect x="358.5" y="31.5" width="1.6" height="4.0" fill="#4c5f71" opacity=".75"/><rect x="98.6" y="77.3" width="1.6" height="3.1" fill="#95a4b2" opacity=".75"/><rect x="268.1" y="9.7" width="2.7" height="1.7" fill="#2c3a47" opacity=".75"/><rect x="84.4" y="102.8" width="3.5" height="2.8" fill="#3c4d5d" opacity=".75"/><rect x="213.2" y="92.5" width="3.3" height="2.5" fill="#5e7183" opacity=".75"/><rect x="148.7" y="86.4" width="2.8" height="2.3" fill="#3c4d5d" opacity=".75"/><rect x="473.7" y="51.8" width="3.2" height="1.7" fill="#283440" opacity=".75"/><rect x="284.2" y="108.1" width="3.3" height="2.2" fill="#34434f" opacity=".75"/><rect x="248.1" y="22.8" width="3.9" height="3.4" fill="#34434f" opacity=".75"/><rect x="118.5" y="91.9" width="2.5" height="2.1" fill="#77899a" opacity=".75"/><rect x="302.3" y="92.0" width="3.6" height="3.9" fill="#95a4b2" opacity=".75"/><rect x="212.0" y="82.4" width="4.0" height="3.2" fill="#283440" opacity=".75"/><rect x="426.7" y="28.7" width="1.6" height="1.6" fill="#95a4b2" opacity=".75"/><rect x="173.2" y="35.9" width="4.1" height="3.9" fill="#77899a" opacity=".75"/><rect x="239.7" y="39.9" width="2.6" height="1.8" fill="#5e7183" opacity=".75"/><rect x="412.6" y="87.0" width="3.2" height="3.8" fill="#2c3a47" opacity=".75"/><rect x="518.8" y="82.3" width="3.8" height="3.5" fill="#77899a" opacity=".75"/><rect x="298.6" y="36.8" width="2.8" height="2.3" fill="#5e7183" opacity=".75"/><rect x="314.2" y="38.0" width="4.0" height="2.4" fill="#4c5f71" opacity=".75"/><rect x="454.1" y="99.3" width="1.9" height="3.8" fill="#2c3a47" opacity=".75"/><rect x="429.5" y="95.2" width="4.4" height="3.9" fill="#34434f" opacity=".75"/><rect x="424.7" y="88.4" width="4.1" height="2.0" fill="#95a4b2" opacity=".75"/><rect x="123.6" y="100.2" width="4.2" height="1.6" fill="#95a4b2" opacity=".75"/><rect x="405.7" y="22.4" width="2.9" height="2.5" fill="#34434f" opacity=".75"/><rect x="502.2" y="35.0" width="3.4" height="3.7" fill="#34434f" opacity=".75"/><rect x="214.3" y="39.0" width="4.0" height="3.3" fill="#95a4b2" opacity=".75"/><rect x="329.7" y="12.0" width="3.3" height="3.6" fill="#3c4d5d" opacity=".75"/><rect x="289.3" y="47.1" width="4.1" height="3.2" fill="#5e7183" opacity=".75"/><rect x="164.4" y="61.3" width="4.3" height="3.1" fill="#3c4d5d" opacity=".75"/><rect x="366.6" y="64.2" width="2.9" height="2.9" fill="#2c3a47" opacity=".75"/><rect x="395.0" y="48.5" width="1.8" height="2.8" fill="#95a4b2" opacity=".75"/><rect x="116.0" y="89.7" width="3.3" height="1.6" fill="#95a4b2" opacity=".75"/><rect x="470.0" y="112.1" width="2.8" height="2.5" fill="#3c4d5d" opacity=".75"/><rect x="491.2" y="22.8" width="2.4" height="2.3" fill="#4c5f71" opacity=".75"/><rect x="292.5" y="85.0" width="1.5" height="3.7" fill="#283440" opacity=".75"/><rect x="523.0" y="63.4" width="3.9" height="2.0" fill="#3c4d5d" opacity=".75"/><rect x="463.4" y="40.9" width="4.3" height="2.0" fill="#2c3a47" opacity=".75"/><rect x="478.3" y="96.2" width="3.6" height="3.3" fill="#5e7183" opacity=".75"/><rect x="301.4" y="105.4" width="3.2" height="1.9" fill="#34434f" opacity=".75"/><rect x="433.9" y="47.9" width="3.3" height="2.1" fill="#77899a" opacity=".75"/><rect x="354.7" y="6.1" width="3.8" height="3.5" fill="#4c5f71" opacity=".75"/><rect x="409.0" y="26.8" width="2.3" height="2.8" fill="#4c5f71" opacity=".75"/><rect x="465.2" y="110.3" width="3.7" height="1.8" fill="#34434f" opacity=".75"/><rect x="392.6" y="80.3" width="2.3" height="3.6" fill="#2c3a47" opacity=".75"/><rect x="291.2" y="0.2" width="4.1" height="3.7" fill="#283440" opacity=".75"/><rect x="359.3" y="112.7" width="2.5" height="3.4" fill="#5e7183" opacity=".75"/><rect x="521.4" y="25.7" width="4.1" height="2.4" fill="#283440" opacity=".75"/><rect x="207.3" y="18.3" width="2.2" height="1.7" fill="#5e7183" opacity=".75"/><rect x="337.1" y="14.1" width="2.4" height="2.5" fill="#34434f" opacity=".75"/><rect x="418.2" y="66.9" width="2.9" height="2.2" fill="#5e7183" opacity=".75"/><rect x="283.7" y="57.5" width="3.0" height="2.1" fill="#95a4b2" opacity=".75"/><rect x="387.7" y="109.3" width="2.7" height="2.4" fill="#283440" opacity=".75"/><rect x="222.0" y="79.7" width="4.0" height="3.1" fill="#34434f" opacity=".75"/><rect x="461.5" y="64.7" width="1.5" height="3.6" fill="#34434f" opacity=".75"/><rect x="230.6" y="71.2" width="4.3" height="2.5" fill="#283440" opacity=".75"/><rect x="350.7" y="17.7" width="3.5" height="3.4" fill="#2c3a47" opacity=".75"/><rect x="500.0" y="16.4" width="2.6" height="3.6" fill="#95a4b2" opacity=".75"/><rect x="337.3" y="76.5" width="2.5" height="3.9" fill="#283440" opacity=".75"/><rect x="364.9" y="32.3" width="1.9" height="3.8" fill="#2c3a47" opacity=".75"/><rect x="349.2" y="91.1" width="2.8" height="2.2" fill="#2c3a47" opacity=".75"/><rect x="228.5" y="60.1" width="4.3" height="3.1" fill="#34434f" opacity=".75"/><rect x="346.2" y="63.9" width="4.1" height="1.5" fill="#283440" opacity=".75"/><rect x="100.4" y="91.6" width="3.4" height="1.5" fill="#95a4b2" opacity=".75"/><rect x="200.4" y="55.9" width="4.3" height="2.4" fill="#3c4d5d" opacity=".75"/><rect x="434.9" y="16.6" width="2.2" height="1.6" fill="#77899a" opacity=".75"/><rect x="125.3" y="109.7" width="4.2" height="1.8" fill="#4c5f71" opacity=".75"/><rect x="319.6" y="104.2" width="1.8" height="3.8" fill="#283440" opacity=".75"/><rect x="449.4" y="4.5" width="3.0" height="3.3" fill="#283440" opacity=".75"/><rect x="112.2" y="98.6" width="3.8" height="3.0" fill="#77899a" opacity=".75"/><rect x="390.9" y="71.2" width="1.8" height="1.9" fill="#4c5f71" opacity=".75"/><rect x="496.4" y="22.4" width="1.9" height="3.6" fill="#95a4b2" opacity=".75"/><rect x="247.1" y="28.6" width="2.2" height="3.9" fill="#4c5f71" opacity=".75"/><rect x="145.0" y="100.9" width="3.9" height="3.1" fill="#2c3a47" opacity=".75"/><rect x="271.8" y="70.3" width="4.2" height="3.5" fill="#2c3a47" opacity=".75"/><rect x="274.6" y="99.6" width="3.3" height="2.3" fill="#283440" opacity=".75"/><rect x="301.6" y="16.7" width="1.6" height="3.5" fill="#4c5f71" opacity=".75"/><rect x="295.0" y="77.8" width="2.0" height="3.1" fill="#2c3a47" opacity=".75"/><rect x="452.5" y="40.9" width="3.6" height="2.0" fill="#283440" opacity=".75"/><rect x="400.0" y="46.2" width="4.4" height="3.9" fill="#4c5f71" opacity=".75"/><rect x="213.3" y="42.6" width="2.3" height="3.8" fill="#2c3a47" opacity=".75"/><rect x="518.8" y="77.7" width="2.5" height="3.4" fill="#77899a" opacity=".75"/><rect x="432.9" y="38.1" width="3.2" height="2.9" fill="#77899a" opacity=".75"/><rect x="458.9" y="111.7" width="3.0" height="3.6" fill="#2c3a47" opacity=".75"/><rect x="137.5" y="86.0" width="3.2" height="3.8" fill="#283440" opacity=".75"/><rect x="389.4" y="0.5" width="3.3" height="1.8" fill="#283440" opacity=".75"/><rect x="464.7" y="49.9" width="3.7" height="2.1" fill="#34434f" opacity=".75"/><rect x="363.9" y="11.0" width="3.0" height="3.3" fill="#5e7183" opacity=".75"/><rect x="424.3" y="23.2" width="3.0" height="2.8" fill="#283440" opacity=".75"/><rect x="418.3" y="78.3" width="3.4" height="2.2" fill="#95a4b2" opacity=".75"/><rect x="251.8" y="107.4" width="2.9" height="1.8" fill="#4c5f71" opacity=".75"/><rect x="437.5" y="33.4" width="3.3" height="3.7" fill="#4c5f71" opacity=".75"/><rect x="229.3" y="96.2" width="4.1" height="2.1" fill="#2c3a47" opacity=".75"/><rect x="271.5" y="2.9" width="1.7" height="3.5" fill="#2c3a47" opacity=".75"/><rect x="167.6" y="67.9" width="4.1" height="1.7" fill="#77899a" opacity=".75"/><rect x="225.5" y="105.4" width="2.1" height="1.8" fill="#3c4d5d" opacity=".75"/><rect x="362.2" y="94.7" width="2.3" height="1.9" fill="#5e7183" opacity=".75"/><rect x="284.7" y="88.8" width="2.3" height="3.8" fill="#5e7183" opacity=".75"/><rect x="143.0" y="112.6" width="2.4" height="4.0" fill="#3c4d5d" opacity=".75"/><rect x="355.8" y="60.2" width="4.1" height="2.6" fill="#3c4d5d" opacity=".75"/><rect x="258.6" y="53.1" width="2.4" height="1.7" fill="#283440" opacity=".75"/><rect x="175.1" y="52.4" width="4.0" height="3.9" fill="#77899a" opacity=".75"/><rect x="142.7" y="77.3" width="3.2" height="2.5" fill="#4c5f71" opacity=".75"/><rect x="484.5" y="101.6" width="2.9" height="3.8" fill="#95a4b2" opacity=".75"/><rect x="511.3" y="37.1" width="2.5" height="1.7" fill="#283440" opacity=".75"/><rect x="504.8" y="110.9" width="1.9" height="3.0" fill="#95a4b2" opacity=".75"/><rect x="244.4" y="61.9" width="2.4" height="1.6" fill="#5e7183" opacity=".75"/><rect x="277.6" y="108.1" width="2.9" height="2.4" fill="#95a4b2" opacity=".75"/><rect x="287.8" y="105.0" width="2.1" height="3.9" fill="#4c5f71" opacity=".75"/><rect x="233.2" y="68.3" width="2.4" height="3.9" fill="#5e7183" opacity=".75"/><rect x="391.3" y="66.3" width="2.8" height="2.0" fill="#3c4d5d" opacity=".75"/><rect x="163.2" y="57.3" width="1.9" height="3.6" fill="#3c4d5d" opacity=".75"/><rect x="380.0" y="104.7" width="4.5" height="3.2" fill="#2c3a47" opacity=".75"/><rect x="190.8" y="110.2" width="1.8" height="2.2" fill="#2c3a47" opacity=".75"/><rect x="303.4" y="39.6" width="3.6" height="2.8" fill="#4c5f71" opacity=".75"/><rect x="151.2" y="94.0" width="1.8" height="3.8" fill="#77899a" opacity=".75"/><rect x="335.2" y="83.6" width="4.4" height="3.2" fill="#283440" opacity=".75"/><rect x="253.5" y="78.8" width="1.7" height="3.6" fill="#283440" opacity=".75"/><rect x="120.1" y="84.3" width="2.3" height="1.9" fill="#95a4b2" opacity=".75"/><rect x="464.5" y="2.5" width="1.6" height="1.6" fill="#283440" opacity=".75"/><rect x="352.4" y="73.8" width="2.0" height="3.3" fill="#4c5f71" opacity=".75"/><rect x="232.6" y="101.7" width="2.3" height="1.9" fill="#4c5f71" opacity=".75"/><rect x="431.0" y="14.1" width="2.4" height="2.9" fill="#3c4d5d" opacity=".75"/><rect x="323.9" y="46.6" width="3.1" height="1.5" fill="#2c3a47" opacity=".75"/><rect x="489.4" y="0.6" width="4.2" height="2.4" fill="#3c4d5d" opacity=".75"/><rect x="448.2" y="66.6" width="2.8" height="2.7" fill="#2c3a47" opacity=".75"/><rect x="170.7" y="75.7" width="4.0" height="2.6" fill="#5e7183" opacity=".75"/><rect x="488.4" y="68.3" width="2.0" height="1.7" fill="#3c4d5d" opacity=".75"/><rect x="420.6" y="85.3" width="2.5" height="1.7" fill="#77899a" opacity=".75"/><rect x="103.6" y="88.0" width="2.8" height="3.2" fill="#4c5f71" opacity=".75"/><rect x="208.3" y="36.6" width="4.2" height="3.3" fill="#283440" opacity=".75"/><rect x="490.6" y="66.3" width="3.0" height="4.0" fill="#4c5f71" opacity=".75"/><rect x="440.9" y="89.3" width="2.4" height="1.6" fill="#2c3a47" opacity=".75"/><rect x="116.4" y="83.9" width="3.7" height="2.8" fill="#4c5f71" opacity=".75"/><rect x="187.3" y="51.3" width="2.2" height="2.7" fill="#5e7183" opacity=".75"/><rect x="369.8" y="11.4" width="2.7" height="2.8" fill="#77899a" opacity=".75"/><rect x="520.2" y="37.9" width="2.3" height="3.2" fill="#5e7183" opacity=".75"/><rect x="452.6" y="7.8" width="1.8" height="1.6" fill="#5e7183" opacity=".75"/><rect x="518.7" y="104.0" width="1.8" height="2.8" fill="#34434f" opacity=".75"/><rect x="489.0" y="63.6" width="2.8" height="1.7" fill="#34434f" opacity=".75"/><rect x="268.1" y="74.6" width="1.6" height="2.0" fill="#2c3a47" opacity=".75"/><rect x="427.6" y="89.3" width="1.7" height="3.5" fill="#5e7183" opacity=".75"/><rect x="397.5" y="39.3" width="3.6" height="2.4" fill="#77899a" opacity=".75"/><rect x="316.4" y="48.7" width="2.2" height="3.8" fill="#77899a" opacity=".75"/><rect x="394.7" y="13.0" width="2.6" height="3.2" fill="#2c3a47" opacity=".75"/><rect x="139.3" y="98.8" width="1.8" height="2.3" fill="#95a4b2" opacity=".75"/><rect x="453.6" y="84.6" width="3.2" height="3.8" fill="#34434f" opacity=".75"/><rect x="509.1" y="72.8" width="4.3" height="2.9" fill="#5e7183" opacity=".75"/><rect x="211.0" y="23.1" width="3.7" height="1.8" fill="#95a4b2" opacity=".75"/><rect x="301.3" y="66.4" width="2.2" height="2.2" fill="#4c5f71" opacity=".75"/><rect x="298.3" y="47.3" width="3.5" height="2.0" fill="#77899a" opacity=".75"/><rect x="194.9" y="87.0" width="3.6" height="3.5" fill="#34434f" opacity=".75"/><rect x="182.8" y="104.6" width="3.0" height="2.4" fill="#77899a" opacity=".75"/><rect x="202.8" y="93.8" width="1.6" height="2.1" fill="#95a4b2" opacity=".75"/><rect x="401.2" y="24.1" width="2.9" height="2.4" fill="#77899a" opacity=".75"/><rect x="276.1" y="9.7" width="2.6" height="3.1" fill="#5e7183" opacity=".75"/><rect x="515.4" y="48.8" width="3.7" height="2.1" fill="#95a4b2" opacity=".75"/><rect x="384.2" y="30.8" width="1.7" height="2.4" fill="#2c3a47" opacity=".75"/><rect x="268.2" y="68.7" width="4.2" height="3.7" fill="#77899a" opacity=".75"/><rect x="434.4" y="25.9" width="2.5" height="1.8" fill="#4c5f71" opacity=".75"/><rect x="290.9" y="41.7" width="2.3" height="2.7" fill="#4c5f71" opacity=".75"/><rect x="475.6" y="95.9" width="4.1" height="2.6" fill="#283440" opacity=".75"/><rect x="360.5" y="80.5" width="2.6" height="1.7" fill="#5e7183" opacity=".75"/><rect x="220.2" y="96.2" width="4.2" height="2.6" fill="#5e7183" opacity=".75"/><rect x="139.0" y="88.6" width="3.0" height="1.8" fill="#77899a" opacity=".75"/><rect x="269.1" y="44.9" width="3.3" height="2.1" fill="#2c3a47" opacity=".75"/><rect x="247.6" y="21.0" width="3.8" height="3.3" fill="#3c4d5d" opacity=".75"/><rect x="414.8" y="37.6" width="3.5" height="3.1" fill="#5e7183" opacity=".75"/><rect x="163.7" y="65.5" width="3.2" height="2.1" fill="#3c4d5d" opacity=".75"/><rect x="160.7" y="96.7" width="4.2" height="2.1" fill="#95a4b2" opacity=".75"/><rect x="124.9" y="64.6" width="3.0" height="3.6" fill="#3c4d5d" opacity=".75"/><rect x="301.0" y="13.8" width="2.1" height="2.3" fill="#283440" opacity=".75"/><rect x="484.6" y="1.7" width="2.2" height="2.3" fill="#283440" opacity=".75"/><rect x="178.9" y="96.8" width="2.2" height="3.0" fill="#283440" opacity=".75"/><rect x="357.1" y="58.7" width="3.2" height="2.3" fill="#34434f" opacity=".75"/><rect x="421.6" y="54.1" width="4.5" height="1.6" fill="#283440" opacity=".75"/><rect x="279.3" y="67.7" width="2.0" height="3.0" fill="#34434f" opacity=".75"/><rect x="318.4" y="43.8" width="3.9" height="1.8" fill="#77899a" opacity=".75"/><rect x="413.7" y="84.5" width="4.3" height="3.7" fill="#77899a" opacity=".75"/><rect x="279.2" y="24.0" width="1.5" height="1.7" fill="#3c4d5d" opacity=".75"/><rect x="255.9" y="51.5" width="4.3" height="2.4" fill="#95a4b2" opacity=".75"/><rect x="514.8" y="19.1" width="3.0" height="2.7" fill="#95a4b2" opacity=".75"/><rect x="201.5" y="61.1" width="2.2" height="2.5" fill="#95a4b2" opacity=".75"/><rect x="342.7" y="63.2" width="2.3" height="3.4" fill="#95a4b2" opacity=".75"/><rect x="452.0" y="41.4" width="4.5" height="3.1" fill="#4c5f71" opacity=".75"/><rect x="218.8" y="95.5" width="2.5" height="2.5" fill="#95a4b2" opacity=".75"/><rect x="522.3" y="22.3" width="3.1" height="2.4" fill="#77899a" opacity=".75"/><rect x="175.4" y="89.3" width="2.9" height="3.6" fill="#95a4b2" opacity=".75"/><rect x="439.2" y="6.6" width="2.6" height="3.7" fill="#95a4b2" opacity=".75"/><rect x="379.1" y="76.4" width="3.0" height="2.7" fill="#5e7183" opacity=".75"/><rect x="315.3" y="7.6" width="2.0" height="2.0" fill="#4c5f71" opacity=".75"/><rect x="388.1" y="87.1" width="3.5" height="3.7" fill="#77899a" opacity=".75"/><rect x="319.4" y="15.1" width="3.0" height="3.0" fill="#4c5f71" opacity=".75"/><rect x="194.0" y="34.0" width="2.1" height="3.9" fill="#5e7183" opacity=".75"/><rect x="374.4" y="84.0" width="2.5" height="1.8" fill="#95a4b2" opacity=".75"/><rect x="293.6" y="62.1" width="2.0" height="1.6" fill="#3c4d5d" opacity=".75"/><rect x="106.6" y="70.6" width="3.3" height="3.2" fill="#4c5f71" opacity=".75"/><rect x="191.2" y="95.6" width="2.0" height="3.6" fill="#2c3a47" opacity=".75"/><rect x="269.3" y="93.8" width="3.6" height="2.8" fill="#4c5f71" opacity=".75"/><rect x="162.0" y="101.5" width="2.5" height="1.6" fill="#95a4b2" opacity=".75"/><rect x="238.8" y="102.8" width="1.6" height="3.3" fill="#2c3a47" opacity=".75"/><rect x="196.3" y="104.0" width="4.2" height="3.7" fill="#34434f" opacity=".75"/><rect x="343.1" y="109.7" width="3.2" height="1.5" fill="#2c3a47" opacity=".75"/><rect x="401.7" y="25.7" width="1.8" height="3.8" fill="#34434f" opacity=".75"/><rect x="347.4" y="97.4" width="1.9" height="3.2" fill="#34434f" opacity=".75"/><rect x="240.6" y="91.1" width="4.0" height="3.8" fill="#5e7183" opacity=".75"/><rect x="197.4" y="84.2" width="4.0" height="2.1" fill="#77899a" opacity=".75"/><rect x="249.4" y="25.3" width="2.2" height="3.9" fill="#95a4b2" opacity=".75"/><rect x="279.1" y="39.3" width="3.0" height="3.1" fill="#95a4b2" opacity=".75"/><rect x="251.7" y="18.1" width="3.0" height="3.8" fill="#283440" opacity=".75"/><rect x="140.8" y="86.4" width="2.8" height="2.0" fill="#5e7183" opacity=".75"/><rect x="426.5" y="22.4" width="3.7" height="2.4" fill="#3c4d5d" opacity=".75"/><rect x="189.4" y="39.4" width="1.9" height="2.2" fill="#5e7183" opacity=".75"/><rect x="213.0" y="91.2" width="4.1" height="2.3" fill="#4c5f71" opacity=".75"/><rect x="320.1" y="68.0" width="3.4" height="1.8" fill="#4c5f71" opacity=".75"/><rect x="202.3" y="97.5" width="3.9" height="3.2" fill="#34434f" opacity=".75"/><rect x="267.8" y="76.1" width="4.4" height="2.0" fill="#3c4d5d" opacity=".75"/><rect x="476.3" y="35.9" width="3.4" height="2.6" fill="#77899a" opacity=".75"/><rect x="331.6" y="21.5" width="2.9" height="2.8" fill="#34434f" opacity=".75"/><rect x="362.5" y="54.9" width="1.8" height="4.0" fill="#5e7183" opacity=".75"/><rect x="271.3" y="100.5" width="3.4" height="1.8" fill="#283440" opacity=".75"/><rect x="168.6" y="88.3" width="2.4" height="3.3" fill="#5e7183" opacity=".75"/><rect x="495.6" y="19.4" width="2.5" height="1.8" fill="#3c4d5d" opacity=".75"/><rect x="514.4" y="17.8" width="2.4" height="2.1" fill="#3c4d5d" opacity=".75"/><rect x="476.6" y="22.3" width="2.1" height="2.1" fill="#3c4d5d" opacity=".75"/><rect x="467.9" y="46.7" width="3.8" height="3.7" fill="#3c4d5d" opacity=".75"/><rect x="385.8" y="88.2" width="4.5" height="2.0" fill="#2c3a47" opacity=".75"/><rect x="212.0" y="43.9" width="3.5" height="2.8" fill="#5e7183" opacity=".75"/><rect x="499.4" y="57.9" width="2.8" height="2.6" fill="#34434f" opacity=".75"/><rect x="194.4" y="93.6" width="4.2" height="3.6" fill="#5e7183" opacity=".75"/><rect x="369.4" y="63.2" width="2.9" height="2.9" fill="#5e7183" opacity=".75"/><rect x="520.9" y="57.5" width="1.9" height="3.2" fill="#283440" opacity=".75"/><rect x="513.1" y="1.5" width="3.4" height="3.1" fill="#5e7183" opacity=".75"/><rect x="282.9" y="14.8" width="2.4" height="3.3" fill="#5e7183" opacity=".75"/><rect x="243.0" y="81.4" width="3.1" height="2.1" fill="#3c4d5d" opacity=".75"/><rect x="128.1" y="75.7" width="2.4" height="3.5" fill="#77899a" opacity=".75"/><rect x="430.4" y="77.8" width="2.0" height="1.7" fill="#3c4d5d" opacity=".75"/><rect x="521.0" y="33.8" width="3.8" height="3.8" fill="#4c5f71" opacity=".75"/><rect x="349.1" y="71.9" width="3.7" height="3.7" fill="#3c4d5d" opacity=".75"/><rect x="306.8" y="33.9" width="4.4" height="2.5" fill="#283440" opacity=".75"/><rect x="489.3" y="42.9" width="2.1" height="2.7" fill="#283440" opacity=".75"/><rect x="248.1" y="85.4" width="2.3" height="1.8" fill="#2c3a47" opacity=".75"/><rect x="365.2" y="29.7" width="4.3" height="1.9" fill="#283440" opacity=".75"/><rect x="415.6" y="31.2" width="2.0" height="2.8" fill="#283440" opacity=".75"/><rect x="449.6" y="13.9" width="1.5" height="1.7" fill="#34434f" opacity=".75"/><rect x="370.5" y="89.2" width="4.2" height="2.6" fill="#3c4d5d" opacity=".75"/><rect x="116.4" y="90.4" width="2.7" height="2.8" fill="#2c3a47" opacity=".75"/><rect x="437.2" y="41.1" width="3.9" height="1.7" fill="#2c3a47" opacity=".75"/><rect x="158.1" y="58.5" width="1.9" height="3.6" fill="#283440" opacity=".75"/><rect x="269.8" y="66.2" width="2.4" height="3.9" fill="#3c4d5d" opacity=".75"/><rect x="316.0" y="74.2" width="2.4" height="1.6" fill="#3c4d5d" opacity=".75"/><rect x="384.2" y="66.4" width="3.7" height="2.2" fill="#34434f" opacity=".75"/><rect x="201.1" y="64.9" width="1.6" height="2.6" fill="#95a4b2" opacity=".75"/><rect x="205.5" y="31.1" width="3.4" height="1.7" fill="#34434f" opacity=".75"/><rect x="224.2" y="41.7" width="2.4" height="3.6" fill="#77899a" opacity=".75"/><rect x="395.9" y="42.2" width="2.7" height="3.7" fill="#77899a" opacity=".75"/><rect x="339.6" y="67.6" width="2.2" height="2.6" fill="#34434f" opacity=".75"/><rect x="186.5" y="92.0" width="3.3" height="2.0" fill="#4c5f71" opacity=".75"/><rect x="436.8" y="63.1" width="1.7" height="3.7" fill="#4c5f71" opacity=".75"/><rect x="233.2" y="78.0" width="4.3" height="2.5" fill="#4c5f71" opacity=".75"/><rect x="393.3" y="10.8" width="3.5" height="1.8" fill="#34434f" opacity=".75"/><rect x="360.8" y="59.7" width="2.8" height="3.7" fill="#283440" opacity=".75"/><rect x="247.1" y="48.0" width="2.6" height="3.2" fill="#77899a" opacity=".75"/><rect x="252.3" y="64.4" width="3.0" height="2.0" fill="#4c5f71" opacity=".75"/><rect x="507.1" y="87.8" width="4.5" height="2.7" fill="#3c4d5d" opacity=".75"/><rect x="179.0" y="83.9" width="3.6" height="3.8" fill="#95a4b2" opacity=".75"/><rect x="468.3" y="30.2" width="3.9" height="2.7" fill="#77899a" opacity=".75"/><rect x="342.4" y="111.2" width="4.2" height="2.0" fill="#4c5f71" opacity=".75"/><rect x="327.3" y="24.0" width="2.5" height="1.8" fill="#4c5f71" opacity=".75"/><rect x="135.0" y="62.3" width="4.4" height="3.5" fill="#77899a" opacity=".75"/><rect x="207.1" y="30.2" width="2.7" height="1.5" fill="#283440" opacity=".75"/><rect x="169.6" y="52.7" width="2.8" height="3.1" fill="#2c3a47" opacity=".75"/><rect x="112.5" y="106.8" width="2.7" height="2.1" fill="#3c4d5d" opacity=".75"/><rect x="279.3" y="47.4" width="3.5" height="1.7" fill="#34434f" opacity=".75"/><rect x="199.9" y="109.6" width="2.6" height="4.0" fill="#3c4d5d" opacity=".75"/><rect x="416.4" y="66.8" width="3.4" height="3.0" fill="#34434f" opacity=".75"/><rect x="319.1" y="91.9" width="2.0" height="2.8" fill="#77899a" opacity=".75"/><rect x="226.6" y="18.2" width="1.8" height="4.0" fill="#95a4b2" opacity=".75"/><rect x="341.4" y="104.2" width="3.9" height="2.9" fill="#95a4b2" opacity=".75"/><rect x="299.6" y="4.3" width="2.3" height="3.4" fill="#77899a" opacity=".75"/><rect x="370.1" y="105.9" width="3.8" height="2.6" fill="#34434f" opacity=".75"/><rect x="281.6" y="64.0" width="4.3" height="3.2" fill="#4c5f71" opacity=".75"/><rect x="436.5" y="28.0" width="3.6" height="3.7" fill="#4c5f71" opacity=".75"/><rect x="372.4" y="21.3" width="2.5" height="3.3" fill="#34434f" opacity=".75"/><rect x="429.3" y="71.4" width="2.0" height="3.9" fill="#4c5f71" opacity=".75"/><rect x="272.0" y="7.6" width="1.6" height="3.7" fill="#283440" opacity=".75"/><rect x="298.4" y="9.7" width="2.2" height="1.8" fill="#2c3a47" opacity=".75"/><rect x="335.6" y="26.9" width="2.4" height="2.7" fill="#283440" opacity=".75"/><rect x="95.9" y="99.7" width="1.5" height="1.6" fill="#283440" opacity=".75"/><rect x="448.9" y="78.8" width="4.4" height="3.6" fill="#283440" opacity=".75"/><rect x="332.9" y="1.4" width="2.7" height="2.2" fill="#3c4d5d" opacity=".75"/><rect x="296.4" y="59.6" width="1.8" height="1.7" fill="#3c4d5d" opacity=".75"/><rect x="295.6" y="48.8" width="3.0" height="1.6" fill="#34434f" opacity=".75"/><rect x="464.6" y="111.5" width="3.8" height="1.6" fill="#283440" opacity=".75"/><rect x="371.3" y="31.3" width="4.3" height="3.6" fill="#5e7183" opacity=".75"/><rect x="229.2" y="52.9" width="1.8" height="3.1" fill="#2c3a47" opacity=".75"/><rect x="220.3" y="61.4" width="4.3" height="2.9" fill="#2c3a47" opacity=".75"/><rect x="265.0" y="99.8" width="3.4" height="3.0" fill="#4c5f71" opacity=".75"/><rect x="352.4" y="54.0" width="3.4" height="2.8" fill="#77899a" opacity=".75"/><rect x="499.0" y="1.6" width="2.5" height="3.7" fill="#2c3a47" opacity=".75"/><rect x="416.6" y="27.6" width="4.2" height="1.9" fill="#77899a" opacity=".75"/><rect x="172.6" y="79.6" width="3.1" height="3.0" fill="#95a4b2" opacity=".75"/><rect x="348.4" y="16.0" width="3.9" height="3.5" fill="#3c4d5d" opacity=".75"/><rect x="182.0" y="58.3" width="2.7" height="2.4" fill="#34434f" opacity=".75"/><rect x="149.3" y="63.1" width="3.8" height="3.8" fill="#2c3a47" opacity=".75"/><rect x="309.1" y="90.0" width="1.7" height="1.8" fill="#2c3a47" opacity=".75"/><rect x="249.9" y="61.9" width="4.3" height="1.7" fill="#95a4b2" opacity=".75"/><rect x="491.6" y="61.2" width="1.6" height="3.7" fill="#34434f" opacity=".75"/><rect x="299.8" y="16.2" width="4.0" height="3.6" fill="#5e7183" opacity=".75"/><rect x="471.9" y="17.4" width="2.4" height="3.8" fill="#2c3a47" opacity=".75"/><rect x="462.9" y="93.3" width="1.8" height="3.4" fill="#34434f" opacity=".75"/><rect x="357.1" y="94.1" width="4.5" height="2.3" fill="#4c5f71" opacity=".75"/><rect x="487.2" y="35.4" width="3.6" height="3.2" fill="#34434f" opacity=".75"/><rect x="194.9" y="28.4" width="3.1" height="1.8" fill="#95a4b2" opacity=".75"/><rect x="472.8" y="27.4" width="3.6" height="3.2" fill="#3c4d5d" opacity=".75"/><rect x="161.4" y="34.6" width="1.5" height="2.3" fill="#77899a" opacity=".75"/><rect x="486.8" y="76.7" width="3.9" height="2.9" fill="#34434f" opacity=".75"/><rect x="468.6" y="18.3" width="1.7" height="3.4" fill="#3c4d5d" opacity=".75"/><rect x="481.7" y="45.3" width="1.9" height="2.6" fill="#2c3a47" opacity=".75"/><rect x="465.7" y="46.2" width="2.8" height="1.6" fill="#95a4b2" opacity=".75"/><rect x="161.1" y="66.4" width="2.8" height="2.4" fill="#34434f" opacity=".75"/><rect x="310.9" y="79.0" width="1.9" height="2.5" fill="#77899a" opacity=".75"/><rect x="259.6" y="33.0" width="1.9" height="2.6" fill="#34434f" opacity=".75"/><rect x="197.9" y="97.6" width="3.4" height="2.7" fill="#283440" opacity=".75"/><rect x="352.0" y="10.1" width="1.9" height="1.7" fill="#34434f" opacity=".75"/><rect x="460.7" y="29.0" width="2.3" height="1.8" fill="#4c5f71" opacity=".75"/><rect x="301.6" y="21.6" width="1.5" height="3.7" fill="#95a4b2" opacity=".75"/><rect x="240.4" y="14.0" width="3.4" height="3.4" fill="#283440" opacity=".75"/><rect x="369.0" y="34.8" width="3.0" height="2.2" fill="#34434f" opacity=".75"/><rect x="446.2" y="32.5" width="4.1" height="3.4" fill="#34434f" opacity=".75"/><rect x="347.3" y="70.2" width="2.0" height="2.1" fill="#2c3a47" opacity=".75"/><rect x="257.2" y="112.0" width="1.6" height="3.6" fill="#34434f" opacity=".75"/><rect x="239.5" y="93.6" width="2.1" height="3.4" fill="#34434f" opacity=".75"/><rect x="521.0" y="82.3" width="3.6" height="3.2" fill="#3c4d5d" opacity=".75"/><rect x="110.3" y="110.5" width="2.2" height="2.4" fill="#283440" opacity=".75"/><rect x="238.3" y="74.8" width="3.6" height="2.6" fill="#283440" opacity=".75"/><rect x="235.6" y="12.1" width="1.7" height="2.8" fill="#34434f" opacity=".75"/><rect x="414.3" y="105.8" width="3.5" height="2.9" fill="#4c5f71" opacity=".75"/><rect x="178.7" y="70.8" width="3.0" height="4.0" fill="#95a4b2" opacity=".75"/><rect x="183.3" y="35.6" width="3.0" height="2.6" fill="#34434f" opacity=".75"/><rect x="325.1" y="23.4" width="1.7" height="1.9" fill="#95a4b2" opacity=".75"/><rect x="167.6" y="56.3" width="2.4" height="3.8" fill="#283440" opacity=".75"/><rect x="311.4" y="4.8" width="1.7" height="3.2" fill="#3c4d5d" opacity=".75"/><rect x="242.3" y="103.9" width="4.0" height="2.3" fill="#3c4d5d" opacity=".75"/><rect x="263.9" y="14.0" width="1.7" height="2.3" fill="#283440" opacity=".75"/><rect x="353.4" y="31.5" width="2.8" height="2.1" fill="#4c5f71" opacity=".75"/><rect x="281.9" y="18.0" width="3.8" height="3.9" fill="#95a4b2" opacity=".75"/><rect x="413.9" y="15.2" width="3.6" height="3.5" fill="#3c4d5d" opacity=".75"/><rect x="156.4" y="110.0" width="3.5" height="2.8" fill="#3c4d5d" opacity=".75"/><rect x="321.4" y="43.4" width="3.4" height="2.3" fill="#2c3a47" opacity=".75"/><rect x="271.4" y="98.1" width="3.8" height="3.3" fill="#77899a" opacity=".75"/><rect x="296.1" y="64.7" width="2.2" height="2.0" fill="#95a4b2" opacity=".75"/><rect x="324.2" y="54.0" width="2.6" height="3.2" fill="#283440" opacity=".75"/><rect x="107.6" y="97.8" width="3.2" height="3.4" fill="#283440" opacity=".75"/><rect x="355.6" y="73.2" width="3.0" height="2.6" fill="#5e7183" opacity=".75"/><rect x="291.7" y="4.1" width="3.8" height="2.0" fill="#34434f" opacity=".75"/><rect x="422.2" y="78.6" width="2.4" height="3.2" fill="#4c5f71" opacity=".75"/><rect x="358.3" y="50.1" width="3.7" height="3.2" fill="#5e7183" opacity=".75"/><rect x="199.1" y="55.6" width="2.1" height="3.8" fill="#77899a" opacity=".75"/><rect x="204.4" y="103.4" width="2.1" height="1.9" fill="#283440" opacity=".75"/><rect x="401.4" y="13.2" width="3.8" height="1.9" fill="#3c4d5d" opacity=".75"/><rect x="207.4" y="85.9" width="2.7" height="3.1" fill="#34434f" opacity=".75"/><rect x="495.1" y="32.0" width="3.7" height="3.2" fill="#95a4b2" opacity=".75"/><rect x="185.5" y="107.3" width="4.4" height="1.5" fill="#95a4b2" opacity=".75"/><rect x="173.9" y="88.1" width="3.9" height="2.2" fill="#95a4b2" opacity=".75"/><rect x="477.6" y="30.8" width="2.1" height="1.8" fill="#95a4b2" opacity=".75"/><rect x="225.1" y="57.4" width="2.8" height="1.7" fill="#34434f" opacity=".75"/><rect x="296.0" y="41.4" width="3.1" height="3.6" fill="#2c3a47" opacity=".75"/><rect x="225.6" y="103.7" width="3.9" height="2.9" fill="#34434f" opacity=".75"/><rect x="296.0" y="103.1" width="2.2" height="2.1" fill="#3c4d5d" opacity=".75"/><rect x="176.7" y="28.0" width="2.2" height="2.0" fill="#5e7183" opacity=".75"/><rect x="129.2" y="76.9" width="3.0" height="3.7" fill="#95a4b2" opacity=".75"/><rect x="371.4" y="21.7" width="3.4" height="2.6" fill="#34434f" opacity=".75"/><rect x="155.0" y="80.3" width="1.6" height="2.2" fill="#3c4d5d" opacity=".75"/><rect x="289.9" y="58.0" width="4.2" height="3.9" fill="#3c4d5d" opacity=".75"/><rect x="304.2" y="16.8" width="2.6" height="2.3" fill="#95a4b2" opacity=".75"/><rect x="283.0" y="105.3" width="2.5" height="2.5" fill="#95a4b2" opacity=".75"/><rect x="291.2" y="22.5" width="3.0" height="3.9" fill="#34434f" opacity=".75"/><rect x="420.7" y="84.7" width="3.3" height="1.7" fill="#4c5f71" opacity=".75"/><rect x="116.4" y="88.5" width="3.7" height="2.3" fill="#3c4d5d" opacity=".75"/><rect x="256.0" y="84.8" width="1.6" height="3.8" fill="#283440" opacity=".75"/><rect x="434.9" y="52.3" width="2.3" height="2.4" fill="#2c3a47" opacity=".75"/><rect x="333.5" y="21.3" width="3.7" height="1.7" fill="#3c4d5d" opacity=".75"/><rect x="309.4" y="95.6" width="1.6" height="1.8" fill="#34434f" opacity=".75"/><rect x="268.7" y="67.2" width="3.9" height="2.2" fill="#2c3a47" opacity=".75"/><rect x="256.0" y="63.9" width="3.1" height="2.2" fill="#34434f" opacity=".75"/><rect x="520.7" y="83.6" width="2.1" height="1.9" fill="#77899a" opacity=".75"/><rect x="498.8" y="0.4" width="2.8" height="1.6" fill="#3c4d5d" opacity=".75"/><rect x="295.8" y="66.0" width="4.0" height="3.7" fill="#283440" opacity=".75"/><rect x="385.0" y="55.7" width="3.0" height="1.9" fill="#283440" opacity=".75"/><rect x="433.3" y="14.9" width="4.1" height="2.5" fill="#77899a" opacity=".75"/><rect x="490.1" y="41.1" width="1.8" height="3.6" fill="#4c5f71" opacity=".75"/><rect x="518.0" y="24.3" width="1.5" height="2.3" fill="#95a4b2" opacity=".75"/><rect x="286.3" y="98.3" width="3.5" height="3.7" fill="#5e7183" opacity=".75"/><rect x="413.6" y="34.1" width="3.7" height="2.0" fill="#34434f" opacity=".75"/><rect x="421.3" y="19.0" width="2.5" height="3.6" fill="#95a4b2" opacity=".75"/><rect x="513.0" y="13.4" width="2.1" height="1.8" fill="#95a4b2" opacity=".75"/><rect x="363.6" y="88.1" width="3.0" height="2.9" fill="#2c3a47" opacity=".75"/><rect x="367.2" y="66.5" width="3.0" height="3.4" fill="#2c3a47" opacity=".75"/><rect x="260.9" y="48.8" width="3.2" height="2.4" fill="#283440" opacity=".75"/><rect x="204.8" y="68.8" width="2.8" height="2.3" fill="#3c4d5d" opacity=".75"/><rect x="249.0" y="50.7" width="3.3" height="2.4" fill="#5e7183" opacity=".75"/><rect x="326.1" y="17.1" width="1.7" height="3.3" fill="#34434f" opacity=".75"/><rect x="375.1" y="102.8" width="4.2" height="2.1" fill="#5e7183" opacity=".75"/><rect x="273.1" y="93.3" width="4.1" height="3.8" fill="#34434f" opacity=".75"/><rect x="245.5" y="26.4" width="3.9" height="3.7" fill="#95a4b2" opacity=".75"/><rect x="121.8" y="67.1" width="4.5" height="3.3" fill="#34434f" opacity=".75"/><rect x="484.5" y="109.4" width="2.8" height="2.0" fill="#34434f" opacity=".75"/><rect x="371.5" y="53.5" width="4.2" height="3.8" fill="#4c5f71" opacity=".75"/><rect x="115.2" y="66.5" width="2.8" height="2.1" fill="#3c4d5d" opacity=".75"/><rect x="336.2" y="49.7" width="2.2" height="3.7" fill="#3c4d5d" opacity=".75"/><rect x="269.1" y="91.9" width="2.0" height="3.3" fill="#95a4b2" opacity=".75"/><rect x="508.0" y="82.1" width="1.7" height="3.7" fill="#2c3a47" opacity=".75"/><rect x="352.4" y="72.1" width="2.5" height="1.6" fill="#3c4d5d" opacity=".75"/><rect x="215.9" y="23.2" width="4.1" height="2.8" fill="#4c5f71" opacity=".75"/><rect x="478.0" y="58.2" width="2.3" height="3.0" fill="#77899a" opacity=".75"/><rect x="272.3" y="82.0" width="2.4" height="3.3" fill="#5e7183" opacity=".75"/><rect x="481.4" y="18.7" width="2.1" height="1.8" fill="#5e7183" opacity=".75"/><rect x="398.5" y="19.6" width="4.0" height="2.3" fill="#34434f" opacity=".75"/><rect x="514.3" y="17.5" width="2.6" height="1.6" fill="#77899a" opacity=".75"/><rect x="149.9" y="103.5" width="2.5" height="2.0" fill="#77899a" opacity=".75"/><rect x="444.1" y="14.5" width="4.2" height="4.0" fill="#34434f" opacity=".75"/><rect x="302.3" y="67.5" width="1.9" height="3.1" fill="#77899a" opacity=".75"/><rect x="266.2" y="7.8" width="2.3" height="2.0" fill="#77899a" opacity=".75"/><rect x="319.2" y="36.9" width="2.2" height="2.2" fill="#77899a" opacity=".75"/><rect x="426.6" y="76.5" width="3.6" height="1.6" fill="#3c4d5d" opacity=".75"/><rect x="329.4" y="2.6" width="3.2" height="3.7" fill="#3c4d5d" opacity=".75"/><rect x="442.4" y="66.2" width="2.8" height="2.1" fill="#95a4b2" opacity=".75"/><rect x="275.8" y="95.9" width="2.4" height="4.0" fill="#3c4d5d" opacity=".75"/><rect x="250.1" y="88.1" width="3.8" height="2.9" fill="#3c4d5d" opacity=".75"/><rect x="408.1" y="107.6" width="4.1" height="3.0" fill="#95a4b2" opacity=".75"/><rect x="197.8" y="30.8" width="1.8" height="4.0" fill="#2c3a47" opacity=".75"/><rect x="330.2" y="73.9" width="2.5" height="2.2" fill="#4c5f71" opacity=".75"/><rect x="462.1" y="108.6" width="3.0" height="2.2" fill="#3c4d5d" opacity=".75"/><rect x="320.4" y="3.5" width="2.6" height="2.8" fill="#4c5f71" opacity=".75"/><rect x="320.8" y="82.2" width="4.2" height="2.7" fill="#2c3a47" opacity=".75"/><rect x="238.7" y="9.7" width="3.5" height="3.6" fill="#2c3a47" opacity=".75"/><rect x="342.8" y="88.4" width="1.9" height="2.2" fill="#3c4d5d" opacity=".75"/><rect x="299.4" y="17.8" width="4.2" height="3.1" fill="#77899a" opacity=".75"/><rect x="214.6" y="15.1" width="2.0" height="2.5" fill="#4c5f71" opacity=".75"/><rect x="216.8" y="27.1" width="2.6" height="3.5" fill="#95a4b2" opacity=".75"/><rect x="344.6" y="51.6" width="3.7" height="1.7" fill="#3c4d5d" opacity=".75"/><rect x="327.0" y="68.9" width="2.0" height="2.3" fill="#283440" opacity=".75"/><rect x="151.6" y="105.9" width="2.8" height="3.9" fill="#77899a" opacity=".75"/><rect x="213.7" y="16.4" width="3.8" height="3.2" fill="#95a4b2" opacity=".75"/><rect x="227.4" y="73.6" width="4.3" height="2.6" fill="#2c3a47" opacity=".75"/><rect x="223.9" y="36.3" width="3.0" height="3.4" fill="#2c3a47" opacity=".75"/><rect x="230.0" y="78.4" width="2.7" height="3.7" fill="#95a4b2" opacity=".75"/><rect x="273.6" y="15.6" width="1.7" height="3.7" fill="#3c4d5d" opacity=".75"/><rect x="384.3" y="74.2" width="2.8" height="1.6" fill="#77899a" opacity=".75"/><rect x="321.0" y="61.0" width="2.7" height="2.9" fill="#3c4d5d" opacity=".75"/><rect x="378.0" y="107.8" width="2.8" height="3.1" fill="#2c3a47" opacity=".75"/><rect x="491.6" y="5.8" width="1.5" height="2.1" fill="#4c5f71" opacity=".75"/><rect x="241.0" y="99.5" width="1.9" height="3.6" fill="#283440" opacity=".75"/><rect x="508.7" y="91.4" width="1.5" height="3.6" fill="#5e7183" opacity=".75"/><rect x="378.2" y="34.4" width="3.7" height="2.7" fill="#2c3a47" opacity=".75"/><rect x="234.8" y="99.6" width="3.6" height="2.6" fill="#95a4b2" opacity=".75"/><rect x="505.0" y="0.8" width="4.2" height="3.3" fill="#34434f" opacity=".75"/><rect x="320.0" y="62.2" width="1.5" height="2.7" fill="#283440" opacity=".75"/><rect x="238.9" y="112.3" width="3.4" height="1.6" fill="#3c4d5d" opacity=".75"/><rect x="282.5" y="10.0" width="2.7" height="2.1" fill="#34434f" opacity=".75"/><rect x="363.3" y="50.3" width="3.1" height="3.6" fill="#34434f" opacity=".75"/><rect x="332.8" y="59.9" width="3.1" height="2.7" fill="#5e7183" opacity=".75"/><rect x="444.2" y="8.5" width="1.9" height="2.4" fill="#4c5f71" opacity=".75"/><rect x="315.6" y="103.9" width="3.5" height="2.0" fill="#5e7183" opacity=".75"/><rect x="206.2" y="76.1" width="3.2" height="3.0" fill="#77899a" opacity=".75"/><rect x="414.5" y="64.9" width="3.4" height="1.9" fill="#34434f" opacity=".75"/><rect x="280.1" y="32.3" width="1.6" height="2.7" fill="#95a4b2" opacity=".75"/><rect x="154.3" y="97.2" width="4.1" height="3.6" fill="#34434f" opacity=".75"/><rect x="463.1" y="26.1" width="2.6" height="3.0" fill="#3c4d5d" opacity=".75"/><rect x="218.9" y="65.8" width="4.2" height="2.5" fill="#3c4d5d" opacity=".75"/><rect x="498.5" y="99.9" width="2.5" height="3.3" fill="#77899a" opacity=".75"/><rect x="134.4" y="89.4" width="1.6" height="3.6" fill="#3c4d5d" opacity=".75"/><rect x="279.2" y="111.1" width="2.4" height="2.0" fill="#3c4d5d" opacity=".75"/><rect x="255.3" y="29.2" width="2.5" height="2.8" fill="#3c4d5d" opacity=".75"/><rect x="498.6" y="29.8" width="3.2" height="2.4" fill="#283440" opacity=".75"/><rect x="467.3" y="29.0" width="4.0" height="1.5" fill="#283440" opacity=".75"/><rect x="309.7" y="51.8" width="3.3" height="2.3" fill="#77899a" opacity=".75"/><rect x="227.8" y="16.2" width="1.7" height="4.0" fill="#34434f" opacity=".75"/><rect x="273.6" y="26.7" width="2.0" height="3.3" fill="#77899a" opacity=".75"/><rect x="493.8" y="38.4" width="4.0" height="2.7" fill="#77899a" opacity=".75"/><rect x="255.2" y="63.2" width="4.0" height="2.0" fill="#2c3a47" opacity=".75"/><rect x="315.8" y="96.8" width="1.7" height="3.5" fill="#34434f" opacity=".75"/><rect x="225.6" y="46.1" width="4.0" height="2.2" fill="#5e7183" opacity=".75"/><rect x="393.1" y="14.9" width="2.3" height="3.5" fill="#4c5f71" opacity=".75"/><rect x="393.7" y="111.2" width="1.6" height="3.6" fill="#95a4b2" opacity=".75"/><rect x="177.4" y="66.4" width="4.4" height="2.0" fill="#3c4d5d" opacity=".75"/><rect x="359.7" y="25.9" width="2.2" height="1.7" fill="#3c4d5d" opacity=".75"/><rect x="216.9" y="35.7" width="2.9" height="1.9" fill="#283440" opacity=".75"/><rect x="283.4" y="17.8" width="2.6" height="2.6" fill="#3c4d5d" opacity=".75"/><rect x="377.8" y="10.9" width="3.2" height="2.7" fill="#3c4d5d" opacity=".75"/><rect x="408.0" y="75.7" width="2.6" height="1.8" fill="#283440" opacity=".75"/><rect x="284.1" y="53.4" width="3.6" height="3.0" fill="#283440" opacity=".75"/><rect x="294.7" y="105.1" width="2.4" height="1.7" fill="#4c5f71" opacity=".75"/><rect x="218.8" y="25.2" width="3.4" height="3.3" fill="#5e7183" opacity=".75"/><rect x="271.9" y="92.4" width="4.1" height="2.8" fill="#34434f" opacity=".75"/><rect x="267.8" y="73.7" width="4.1" height="2.0" fill="#95a4b2" opacity=".75"/><rect x="447.9" y="37.4" width="1.7" height="1.8" fill="#4c5f71" opacity=".75"/><rect x="407.4" y="71.3" width="4.3" height="3.2" fill="#2c3a47" opacity=".75"/><rect x="252.6" y="65.5" width="3.1" height="2.0" fill="#4c5f71" opacity=".75"/><rect x="161.6" y="96.7" width="2.7" height="3.9" fill="#95a4b2" opacity=".75"/><rect x="364.2" y="21.8" width="4.3" height="2.0" fill="#2c3a47" opacity=".75"/><rect x="496.5" y="108.0" width="3.7" height="3.6" fill="#2c3a47" opacity=".75"/><rect x="346.1" y="91.4" width="1.8" height="3.4" fill="#283440" opacity=".75"/><rect x="511.2" y="94.4" width="3.7" height="2.4" fill="#2c3a47" opacity=".75"/><rect x="485.8" y="83.1" width="3.6" height="1.9" fill="#2c3a47" opacity=".75"/><rect x="141.4" y="94.2" width="3.6" height="2.7" fill="#77899a" opacity=".75"/><rect x="417.1" y="97.6" width="2.9" height="2.2" fill="#95a4b2" opacity=".75"/><rect x="425.9" y="59.2" width="4.1" height="3.5" fill="#34434f" opacity=".75"/><rect x="436.7" y="89.2" width="3.9" height="1.8" fill="#2c3a47" opacity=".75"/><rect x="246.4" y="99.2" width="3.1" height="3.1" fill="#5e7183" opacity=".75"/><rect x="249.3" y="25.0" width="3.6" height="3.0" fill="#283440" opacity=".75"/><rect x="384.4" y="109.3" width="3.2" height="1.9" fill="#2c3a47" opacity=".75"/><rect x="107.2" y="84.8" width="2.2" height="2.3" fill="#95a4b2" opacity=".75"/><rect x="247.3" y="97.2" width="2.5" height="3.2" fill="#34434f" opacity=".75"/><rect x="160.2" y="34.4" width="1.5" height="2.0" fill="#283440" opacity=".75"/><rect x="163.3" y="50.9" width="4.3" height="2.1" fill="#2c3a47" opacity=".75"/><rect x="454.3" y="83.3" width="3.2" height="2.5" fill="#283440" opacity=".75"/><rect x="401.3" y="69.6" width="2.1" height="3.3" fill="#5e7183" opacity=".75"/><rect x="351.2" y="47.6" width="2.2" height="2.4" fill="#95a4b2" opacity=".75"/><rect x="356.4" y="105.4" width="2.0" height="2.2" fill="#34434f" opacity=".75"/><rect x="314.7" y="54.4" width="4.2" height="2.9" fill="#95a4b2" opacity=".75"/><rect x="364.3" y="82.9" width="3.1" height="3.3" fill="#3c4d5d" opacity=".75"/><rect x="368.1" y="14.8" width="1.6" height="2.7" fill="#2c3a47" opacity=".75"/><rect x="315.6" y="41.3" width="4.0" height="2.7" fill="#77899a" opacity=".75"/><rect x="380.6" y="96.8" width="1.9" height="2.2" fill="#95a4b2" opacity=".75"/><rect x="449.3" y="83.4" width="3.0" height="1.5" fill="#5e7183" opacity=".75"/><rect x="367.6" y="94.1" width="3.0" height="1.8" fill="#34434f" opacity=".75"/><rect x="324.2" y="13.3" width="2.5" height="3.0" fill="#5e7183" opacity=".75"/><rect x="354.7" y="70.1" width="2.6" height="1.7" fill="#2c3a47" opacity=".75"/><rect x="158.7" y="64.9" width="4.0" height="2.2" fill="#3c4d5d" opacity=".75"/><rect x="160.7" y="97.2" width="4.0" height="3.6" fill="#283440" opacity=".75"/><rect x="196.1" y="22.3" width="2.7" height="1.8" fill="#283440" opacity=".75"/><rect x="115.4" y="90.0" width="2.1" height="1.8" fill="#77899a" opacity=".75"/><rect x="138.0" y="74.8" width="1.9" height="3.4" fill="#5e7183" opacity=".75"/><rect x="293.6" y="107.7" width="2.1" height="2.0" fill="#283440" opacity=".75"/><rect x="471.6" y="74.1" width="1.8" height="2.0" fill="#2c3a47" opacity=".75"/><rect x="326.4" y="67.9" width="1.7" height="3.4" fill="#5e7183" opacity=".75"/><rect x="493.6" y="47.6" width="4.4" height="2.4" fill="#283440" opacity=".75"/><rect x="326.1" y="63.3" width="4.5" height="3.2" fill="#4c5f71" opacity=".75"/><rect x="418.6" y="60.9" width="3.7" height="3.1" fill="#2c3a47" opacity=".75"/><rect x="509.7" y="85.9" width="2.1" height="2.9" fill="#34434f" opacity=".75"/><rect x="481.5" y="48.7" width="2.9" height="3.3" fill="#3c4d5d" opacity=".75"/><rect x="291.7" y="48.2" width="3.6" height="3.3" fill="#283440" opacity=".75"/><rect x="432.4" y="29.8" width="3.5" height="2.7" fill="#2c3a47" opacity=".75"/><rect x="272.5" y="40.4" width="1.6" height="2.7" fill="#77899a" opacity=".75"/><rect x="205.3" y="55.3" width="1.7" height="3.7" fill="#34434f" opacity=".75"/><rect x="271.1" y="39.3" width="3.0" height="2.8" fill="#283440" opacity=".75"/><rect x="350.3" y="51.8" width="3.4" height="1.7" fill="#95a4b2" opacity=".75"/><rect x="197.4" y="39.7" width="2.5" height="3.4" fill="#34434f" opacity=".75"/><rect x="344.0" y="92.7" width="1.9" height="3.9" fill="#95a4b2" opacity=".75"/><rect x="129.2" y="63.8" width="3.3" height="2.8" fill="#2c3a47" opacity=".75"/><rect x="360.8" y="67.2" width="4.0" height="2.3" fill="#2c3a47" opacity=".75"/><rect x="396.3" y="16.1" width="4.5" height="2.9" fill="#77899a" opacity=".75"/><rect x="239.3" y="72.7" width="2.4" height="3.8" fill="#95a4b2" opacity=".75"/><rect x="161.5" y="58.4" width="2.2" height="2.7" fill="#4c5f71" opacity=".75"/><rect x="290.6" y="110.8" width="1.8" height="2.0" fill="#3c4d5d" opacity=".75"/><rect x="518.7" y="57.1" width="3.6" height="2.1" fill="#3c4d5d" opacity=".75"/><rect x="123.1" y="100.6" width="2.6" height="3.5" fill="#34434f" opacity=".75"/><rect x="105.5" y="99.1" width="2.6" height="3.6" fill="#34434f" opacity=".75"/><rect x="127.3" y="93.8" width="3.6" height="2.0" fill="#34434f" opacity=".75"/><rect x="461.0" y="17.0" width="2.9" height="2.7" fill="#3c4d5d" opacity=".75"/><rect x="250.1" y="81.7" width="3.7" height="2.1" fill="#77899a" opacity=".75"/><rect x="460.0" y="107.8" width="3.3" height="1.6" fill="#4c5f71" opacity=".75"/><rect x="483.2" y="72.8" width="3.3" height="3.8" fill="#34434f" opacity=".75"/><rect x="164.9" y="88.9" width="2.5" height="2.2" fill="#2c3a47" opacity=".75"/><rect x="487.8" y="111.3" width="1.7" height="2.5" fill="#34434f" opacity=".75"/><rect x="140.7" y="88.1" width="4.1" height="1.8" fill="#5e7183" opacity=".75"/><rect x="299.3" y="109.3" width="4.2" height="2.6" fill="#3c4d5d" opacity=".75"/><rect x="212.2" y="36.6" width="2.6" height="2.0" fill="#4c5f71" opacity=".75"/><rect x="196.6" y="111.3" width="1.5" height="3.0" fill="#3c4d5d" opacity=".75"/><rect x="520.9" y="18.1" width="3.7" height="1.8" fill="#5e7183" opacity=".75"/><rect x="510.3" y="40.1" width="3.7" height="1.6" fill="#4c5f71" opacity=".75"/><rect x="314.3" y="11.1" width="3.2" height="2.6" fill="#95a4b2" opacity=".75"/><rect x="222.9" y="26.6" width="3.3" height="2.9" fill="#2c3a47" opacity=".75"/><rect x="508.8" y="97.7" width="1.9" height="3.5" fill="#34434f" opacity=".75"/><rect x="503.3" y="27.5" width="3.0" height="2.0" fill="#4c5f71" opacity=".75"/><rect x="418.0" y="78.0" width="4.4" height="1.7" fill="#4c5f71" opacity=".75"/><rect x="188.8" y="29.9" width="4.1" height="1.8" fill="#95a4b2" opacity=".75"/><rect x="476.2" y="63.5" width="3.3" height="1.5" fill="#5e7183" opacity=".75"/><rect x="348.0" y="87.1" width="3.1" height="1.8" fill="#5e7183" opacity=".75"/><rect x="405.4" y="32.6" width="3.7" height="2.4" fill="#283440" opacity=".75"/><rect x="231.7" y="108.9" width="3.2" height="2.1" fill="#34434f" opacity=".75"/><rect x="457.5" y="41.6" width="2.8" height="2.9" fill="#283440" opacity=".75"/><rect x="152.1" y="65.8" width="2.5" height="2.7" fill="#4c5f71" opacity=".75"/><rect x="212.3" y="67.7" width="4.0" height="2.7" fill="#3c4d5d" opacity=".75"/><rect x="200.8" y="28.9" width="3.0" height="2.8" fill="#5e7183" opacity=".75"/><rect x="244.4" y="91.9" width="2.2" height="2.3" fill="#4c5f71" opacity=".75"/><rect x="449.1" y="101.9" width="4.3" height="2.1" fill="#3c4d5d" opacity=".75"/><rect x="335.7" y="70.3" width="1.6" height="3.7" fill="#77899a" opacity=".75"/><rect x="222.6" y="49.9" width="3.5" height="1.9" fill="#95a4b2" opacity=".75"/><rect x="278.4" y="88.8" width="1.9" height="2.8" fill="#2c3a47" opacity=".75"/><rect x="207.1" y="73.0" width="3.0" height="2.7" fill="#283440" opacity=".75"/><rect x="282.4" y="58.5" width="2.3" height="2.7" fill="#34434f" opacity=".75"/><rect x="248.1" y="36.4" width="4.4" height="1.7" fill="#2c3a47" opacity=".75"/><rect x="300.7" y="53.8" width="4.3" height="3.4" fill="#3c4d5d" opacity=".75"/><rect x="247.3" y="42.2" width="2.6" height="1.8" fill="#2c3a47" opacity=".75"/><rect x="448.5" y="68.0" width="1.6" height="1.8" fill="#3c4d5d" opacity=".75"/><rect x="316.9" y="18.6" width="3.6" height="3.8" fill="#3c4d5d" opacity=".75"/><rect x="191.7" y="108.5" width="2.7" height="3.2" fill="#4c5f71" opacity=".75"/><rect x="462.1" y="79.6" width="1.5" height="1.7" fill="#34434f" opacity=".75"/><rect x="466.9" y="11.9" width="3.2" height="2.0" fill="#95a4b2" opacity=".75"/><rect x="483.8" y="101.6" width="3.6" height="3.7" fill="#5e7183" opacity=".75"/><rect x="479.8" y="86.8" width="1.7" height="3.7" fill="#283440" opacity=".75"/><rect x="494.1" y="55.6" width="1.7" height="3.3" fill="#4c5f71" opacity=".75"/><rect x="426.9" y="94.2" width="3.7" height="1.9" fill="#95a4b2" opacity=".75"/><rect x="185.8" y="33.8" width="2.2" height="2.9" fill="#283440" opacity=".75"/><rect x="209.1" y="60.9" width="2.0" height="2.2" fill="#95a4b2" opacity=".75"/><rect x="368.1" y="7.5" width="2.3" height="3.9" fill="#77899a" opacity=".75"/><rect x="466.4" y="71.9" width="1.8" height="1.7" fill="#4c5f71" opacity=".75"/><rect x="463.9" y="87.8" width="1.6" height="3.3" fill="#283440" opacity=".75"/><rect x="288.5" y="75.1" width="3.1" height="2.0" fill="#34434f" opacity=".75"/><rect x="455.8" y="64.2" width="3.0" height="3.3" fill="#34434f" opacity=".75"/><rect x="128.2" y="107.1" width="3.5" height="3.2" fill="#283440" opacity=".75"/><rect x="87.9" y="112.5" width="4.2" height="3.1" fill="#4c5f71" opacity=".75"/><rect x="291.5" y="27.4" width="2.8" height="1.8" fill="#4c5f71" opacity=".75"/><rect x="344.0" y="83.8" width="2.3" height="3.6" fill="#5e7183" opacity=".75"/><rect x="185.3" y="46.4" width="2.6" height="1.7" fill="#77899a" opacity=".75"/><rect x="291.9" y="61.6" width="4.1" height="1.7" fill="#95a4b2" opacity=".75"/><rect x="97.9" y="75.8" width="4.0" height="3.5" fill="#2c3a47" opacity=".75"/><rect x="224.5" y="105.9" width="4.2" height="3.9" fill="#77899a" opacity=".75"/><rect x="343.5" y="22.9" width="1.8" height="2.2" fill="#3c4d5d" opacity=".75"/><rect x="503.5" y="86.2" width="2.6" height="2.2" fill="#2c3a47" opacity=".75"/><rect x="396.2" y="67.9" width="2.2" height="3.2" fill="#5e7183" opacity=".75"/><rect x="246.2" y="48.1" width="3.3" height="2.8" fill="#95a4b2" opacity=".75"/><rect x="475.5" y="36.9" width="1.5" height="3.4" fill="#3c4d5d" opacity=".75"/><rect x="293.0" y="21.3" width="3.7" height="2.8" fill="#2c3a47" opacity=".75"/><rect x="158.4" y="71.8" width="1.7" height="2.9" fill="#4c5f71" opacity=".75"/><rect x="129.2" y="97.9" width="2.6" height="3.8" fill="#4c5f71" opacity=".75"/><rect x="499.1" y="81.0" width="3.1" height="3.6" fill="#4c5f71" opacity=".75"/><rect x="463.0" y="7.8" width="2.9" height="3.4" fill="#5e7183" opacity=".75"/><rect x="201.7" y="112.3" width="1.7" height="1.7" fill="#95a4b2" opacity=".75"/><rect x="400.1" y="65.4" width="2.0" height="4.0" fill="#95a4b2" opacity=".75"/><rect x="457.3" y="60.2" width="3.4" height="2.6" fill="#34434f" opacity=".75"/><rect x="441.0" y="62.5" width="3.5" height="3.2" fill="#4c5f71" opacity=".75"/><rect x="163.2" y="59.8" width="1.8" height="2.5" fill="#2c3a47" opacity=".75"/><rect x="96.8" y="105.7" width="1.9" height="3.7" fill="#2c3a47" opacity=".75"/><rect x="512.7" y="62.1" width="4.1" height="2.8" fill="#3c4d5d" opacity=".75"/><rect x="412.2" y="49.2" width="2.8" height="2.5" fill="#77899a" opacity=".75"/><rect x="388.8" y="88.3" width="4.3" height="2.0" fill="#95a4b2" opacity=".75"/><rect x="235.0" y="104.8" width="2.4" height="2.6" fill="#95a4b2" opacity=".75"/><rect x="313.1" y="13.6" width="4.2" height="2.7" fill="#95a4b2" opacity=".75"/><rect x="202.1" y="51.6" width="3.2" height="3.3" fill="#283440" opacity=".75"/><rect x="261.1" y="33.4" width="2.9" height="2.4" fill="#4c5f71" opacity=".75"/><rect x="471.5" y="85.2" width="2.2" height="3.6" fill="#5e7183" opacity=".75"/><rect x="448.0" y="52.3" width="3.6" height="3.4" fill="#77899a" opacity=".75"/><rect x="293.4" y="97.9" width="3.8" height="2.9" fill="#3c4d5d" opacity=".75"/><rect x="454.5" y="53.7" width="4.3" height="1.8" fill="#3c4d5d" opacity=".75"/><rect x="110.0" y="87.5" width="4.1" height="2.4" fill="#95a4b2" opacity=".75"/><rect x="519.8" y="112.0" width="1.6" height="3.7" fill="#3c4d5d" opacity=".75"/><rect x="381.2" y="57.6" width="4.4" height="3.9" fill="#34434f" opacity=".75"/><rect x="497.9" y="94.7" width="1.6" height="1.8" fill="#95a4b2" opacity=".75"/><rect x="465.8" y="69.6" width="3.4" height="2.6" fill="#283440" opacity=".75"/><rect x="333.2" y="75.4" width="3.0" height="2.0" fill="#77899a" opacity=".75"/><rect x="464.3" y="64.9" width="4.1" height="2.2" fill="#77899a" opacity=".75"/><rect x="447.6" y="17.6" width="3.8" height="1.6" fill="#4c5f71" opacity=".75"/><rect x="290.5" y="59.1" width="4.0" height="2.0" fill="#4c5f71" opacity=".75"/><rect x="302.2" y="21.9" width="1.6" height="2.0" fill="#4c5f71" opacity=".75"/><rect x="390.9" y="56.1" width="1.8" height="2.7" fill="#283440" opacity=".75"/><rect x="388.8" y="4.2" width="3.6" height="2.9" fill="#283440" opacity=".75"/><rect x="470.0" y="65.5" width="2.5" height="2.2" fill="#4c5f71" opacity=".75"/><rect x="420.1" y="74.3" width="3.8" height="3.8" fill="#2c3a47" opacity=".75"/><rect x="320.3" y="22.6" width="1.6" height="3.3" fill="#4c5f71" opacity=".75"/><rect x="518.1" y="57.1" width="2.7" height="3.6" fill="#5e7183" opacity=".75"/><rect x="366.1" y="69.2" width="4.5" height="3.2" fill="#4c5f71" opacity=".75"/><rect x="291.4" y="96.9" width="1.6" height="3.6" fill="#34434f" opacity=".75"/><rect x="429.3" y="66.3" width="2.9" height="1.6" fill="#34434f" opacity=".75"/><rect x="148.7" y="78.0" width="3.4" height="3.3" fill="#77899a" opacity=".75"/><rect x="282.3" y="4.9" width="2.6" height="2.8" fill="#5e7183" opacity=".75"/><rect x="188.5" y="102.6" width="4.4" height="3.9" fill="#95a4b2" opacity=".75"/><rect x="310.5" y="1.8" width="3.0" height="3.1" fill="#34434f" opacity=".75"/><rect x="491.9" y="33.0" width="2.8" height="3.6" fill="#5e7183" opacity=".75"/><rect x="280.5" y="11.0" width="4.0" height="1.7" fill="#5e7183" opacity=".75"/><rect x="415.1" y="104.6" width="3.9" height="1.6" fill="#95a4b2" opacity=".75"/><rect x="499.7" y="57.4" width="3.1" height="2.7" fill="#283440" opacity=".75"/><rect x="153.3" y="80.4" width="3.8" height="2.6" fill="#3c4d5d" opacity=".75"/><rect x="316.0" y="39.9" width="1.8" height="1.7" fill="#4c5f71" opacity=".75"/><rect x="234.2" y="52.8" width="2.1" height="1.9" fill="#34434f" opacity=".75"/><rect x="302.9" y="82.1" width="2.8" height="2.3" fill="#34434f" opacity=".75"/><rect x="247.5" y="47.4" width="2.2" height="2.7" fill="#34434f" opacity=".75"/><rect x="233.9" y="74.8" width="3.0" height="1.5" fill="#95a4b2" opacity=".75"/><rect x="200.5" y="61.7" width="4.4" height="2.0" fill="#3c4d5d" opacity=".75"/><rect x="489.4" y="10.2" width="1.9" height="3.2" fill="#95a4b2" opacity=".75"/><rect x="479.8" y="50.2" width="2.2" height="3.0" fill="#3c4d5d" opacity=".75"/><rect x="369.4" y="1.2" width="3.3" height="3.5" fill="#34434f" opacity=".75"/><rect x="210.2" y="84.2" width="3.3" height="3.8" fill="#4c5f71" opacity=".75"/><rect x="256.6" y="9.6" width="3.7" height="1.9" fill="#283440" opacity=".75"/><rect x="87.2" y="110.6" width="3.8" height="2.8" fill="#2c3a47" opacity=".75"/><rect x="416.5" y="31.4" width="3.4" height="2.4" fill="#34434f" opacity=".75"/><rect x="104.1" y="80.0" width="2.0" height="2.7" fill="#4c5f71" opacity=".75"/><rect x="397.3" y="71.7" width="4.2" height="2.9" fill="#4c5f71" opacity=".75"/><rect x="415.2" y="18.2" width="3.8" height="1.5" fill="#3c4d5d" opacity=".75"/><rect x="166.3" y="35.5" width="3.0" height="1.8" fill="#34434f" opacity=".75"/><rect x="404.6" y="55.7" width="4.4" height="3.6" fill="#4c5f71" opacity=".75"/><rect x="294.0" y="7.3" width="2.2" height="3.2" fill="#4c5f71" opacity=".75"/><rect x="348.2" y="36.7" width="3.8" height="2.9" fill="#95a4b2" opacity=".75"/><rect x="109.6" y="95.7" width="3.0" height="3.1" fill="#5e7183" opacity=".75"/><rect x="488.5" y="106.3" width="3.3" height="3.9" fill="#77899a" opacity=".75"/><rect x="410.7" y="1.8" width="3.4" height="2.9" fill="#3c4d5d" opacity=".75"/><rect x="219.0" y="53.9" width="2.9" height="3.4" fill="#3c4d5d" opacity=".75"/><rect x="520.7" y="17.6" width="4.2" height="3.2" fill="#34434f" opacity=".75"/><rect x="475.4" y="41.1" width="4.1" height="3.3" fill="#77899a" opacity=".75"/><rect x="190.8" y="85.1" width="4.4" height="3.3" fill="#3c4d5d" opacity=".75"/><rect x="388.5" y="108.6" width="2.9" height="3.4" fill="#34434f" opacity=".75"/><rect x="102.9" y="92.5" width="4.2" height="2.3" fill="#3c4d5d" opacity=".75"/><rect x="459.7" y="99.7" width="1.7" height="3.6" fill="#5e7183" opacity=".75"/><rect x="498.2" y="103.7" width="4.4" height="2.3" fill="#4c5f71" opacity=".75"/><rect x="402.9" y="75.8" width="2.7" height="2.7" fill="#5e7183" opacity=".75"/><rect x="501.4" y="56.0" width="2.0" height="2.3" fill="#77899a" opacity=".75"/><rect x="381.9" y="57.6" width="3.2" height="3.2" fill="#2c3a47" opacity=".75"/><rect x="485.4" y="33.5" width="2.8" height="2.4" fill="#2c3a47" opacity=".75"/><rect x="443.3" y="3.7" width="3.9" height="3.5" fill="#4c5f71" opacity=".75"/><rect x="186.5" y="105.3" width="2.6" height="2.6" fill="#95a4b2" opacity=".75"/><rect x="378.4" y="12.5" width="1.5" height="2.2" fill="#3c4d5d" opacity=".75"/><rect x="105.4" y="91.3" width="3.2" height="3.1" fill="#5e7183" opacity=".75"/><rect x="411.4" y="80.4" width="4.0" height="3.8" fill="#2c3a47" opacity=".75"/><rect x="426.6" y="65.6" width="3.6" height="2.3" fill="#4c5f71" opacity=".75"/><rect x="461.4" y="91.0" width="2.8" height="1.9" fill="#3c4d5d" opacity=".75"/><rect x="179.1" y="53.7" width="1.5" height="1.6" fill="#34434f" opacity=".75"/><rect x="372.2" y="30.1" width="3.7" height="2.4" fill="#95a4b2" opacity=".75"/><rect x="410.7" y="65.1" width="1.7" height="2.8" fill="#77899a" opacity=".75"/><rect x="202.6" y="112.9" width="3.5" height="3.6" fill="#3c4d5d" opacity=".75"/><rect x="152.4" y="111.9" width="3.7" height="2.8" fill="#3c4d5d" opacity=".75"/><rect x="200.6" y="41.7" width="3.7" height="2.4" fill="#3c4d5d" opacity=".75"/><rect x="118.0" y="99.5" width="3.2" height="3.9" fill="#95a4b2" opacity=".75"/><rect x="276.5" y="60.8" width="3.3" height="3.7" fill="#77899a" opacity=".75"/><rect x="198.0" y="101.6" width="3.4" height="2.8" fill="#2c3a47" opacity=".75"/><rect x="486.5" y="14.2" width="2.6" height="3.8" fill="#95a4b2" opacity=".75"/><rect x="519.6" y="34.3" width="1.7" height="2.1" fill="#2c3a47" opacity=".75"/><rect x="342.1" y="95.0" width="3.2" height="3.4" fill="#3c4d5d" opacity=".75"/><rect x="300.4" y="104.3" width="1.9" height="3.2" fill="#2c3a47" opacity=".75"/><rect x="340.7" y="55.7" width="2.2" height="3.0" fill="#3c4d5d" opacity=".75"/><rect x="441.5" y="9.2" width="1.6" height="3.9" fill="#5e7183" opacity=".75"/><rect x="127.3" y="91.6" width="3.6" height="3.0" fill="#283440" opacity=".75"/><rect x="362.8" y="16.5" width="3.5" height="3.2" fill="#5e7183" opacity=".75"/><rect x="251.1" y="109.1" width="2.7" height="4.0" fill="#4c5f71" opacity=".75"/><rect x="97.6" y="100.1" width="3.8" height="2.8" fill="#34434f" opacity=".75"/><rect x="406.3" y="62.3" width="2.3" height="2.0" fill="#5e7183" opacity=".75"/><rect x="277.4" y="44.2" width="3.5" height="3.5" fill="#4c5f71" opacity=".75"/><rect x="164.7" y="57.4" width="3.3" height="2.9" fill="#34434f" opacity=".75"/><rect x="479.9" y="108.1" width="2.9" height="1.5" fill="#2c3a47" opacity=".75"/><rect x="425.2" y="76.8" width="1.9" height="2.1" fill="#95a4b2" opacity=".75"/><rect x="199.7" y="24.3" width="4.4" height="2.7" fill="#5e7183" opacity=".75"/><rect x="402.5" y="41.9" width="3.6" height="3.8" fill="#4c5f71" opacity=".75"/><rect x="418.9" y="33.0" width="4.0" height="2.8" fill="#3c4d5d" opacity=".75"/><rect x="434.1" y="36.2" width="1.9" height="3.5" fill="#283440" opacity=".75"/><rect x="268.7" y="40.9" width="3.8" height="2.5" fill="#283440" opacity=".75"/><rect x="485.2" y="86.6" width="2.0" height="2.4" fill="#2c3a47" opacity=".75"/><rect x="484.2" y="75.2" width="3.0" height="3.3" fill="#283440" opacity=".75"/><rect x="172.2" y="36.0" width="1.5" height="2.2" fill="#5e7183" opacity=".75"/><rect x="411.6" y="99.2" width="2.4" height="2.2" fill="#283440" opacity=".75"/><rect x="136.3" y="109.2" width="3.5" height="2.9" fill="#2c3a47" opacity=".75"/><rect x="106.8" y="97.8" width="3.4" height="3.3" fill="#3c4d5d" opacity=".75"/><rect x="419.1" y="25.8" width="3.9" height="4.0" fill="#4c5f71" opacity=".75"/><rect x="148.9" y="104.0" width="3.9" height="2.2" fill="#3c4d5d" opacity=".75"/><rect x="242.7" y="91.0" width="1.8" height="3.5" fill="#77899a" opacity=".75"/><rect x="431.7" y="38.0" width="1.6" height="1.7" fill="#4c5f71" opacity=".75"/><rect x="299.7" y="86.3" width="2.1" height="2.2" fill="#5e7183" opacity=".75"/><rect x="433.6" y="79.4" width="1.8" height="1.8" fill="#2c3a47" opacity=".75"/><rect x="338.0" y="82.5" width="2.0" height="2.8" fill="#2c3a47" opacity=".75"/><rect x="359.9" y="78.5" width="1.5" height="3.6" fill="#95a4b2" opacity=".75"/><rect x="468.5" y="14.6" width="2.8" height="4.0" fill="#34434f" opacity=".75"/><rect x="418.3" y="55.4" width="1.6" height="2.9" fill="#283440" opacity=".75"/><rect x="164.1" y="91.2" width="1.6" height="3.6" fill="#5e7183" opacity=".75"/><rect x="471.1" y="51.6" width="4.0" height="1.8" fill="#5e7183" opacity=".75"/><rect x="407.2" y="88.3" width="2.7" height="1.9" fill="#34434f" opacity=".75"/><rect x="365.9" y="39.1" width="1.8" height="2.9" fill="#283440" opacity=".75"/><rect x="453.2" y="34.4" width="1.9" height="2.9" fill="#4c5f71" opacity=".75"/><rect x="437.5" y="16.4" width="3.2" height="1.8" fill="#3c4d5d" opacity=".75"/><rect x="190.2" y="87.8" width="3.8" height="3.0" fill="#34434f" opacity=".75"/><rect x="522.8" y="34.4" width="2.7" height="3.9" fill="#77899a" opacity=".75"/><rect x="421.0" y="1.5" width="3.4" height="2.8" fill="#3c4d5d" opacity=".75"/><rect x="197.7" y="81.7" width="1.7" height="3.5" fill="#3c4d5d" opacity=".75"/><rect x="358.0" y="85.3" width="3.1" height="2.8" fill="#4c5f71" opacity=".75"/><rect x="150.2" y="98.7" width="1.9" height="2.4" fill="#4c5f71" opacity=".75"/><rect x="501.8" y="48.2" width="3.5" height="1.5" fill="#283440" opacity=".75"/><rect x="492.8" y="21.1" width="4.5" height="2.9" fill="#95a4b2" opacity=".75"/><rect x="308.0" y="3.4" width="1.8" height="3.2" fill="#283440" opacity=".75"/><rect x="393.4" y="90.1" width="3.9" height="3.0" fill="#3c4d5d" opacity=".75"/><rect x="505.1" y="87.9" width="1.8" height="2.8" fill="#95a4b2" opacity=".75"/><rect x="492.8" y="28.5" width="1.6" height="2.7" fill="#283440" opacity=".75"/><rect x="205.6" y="62.4" width="1.7" height="2.5" fill="#283440" opacity=".75"/><rect x="440.7" y="65.0" width="2.3" height="2.5" fill="#2c3a47" opacity=".75"/><rect x="242.7" y="80.4" width="2.1" height="3.0" fill="#2c3a47" opacity=".75"/><rect x="326.9" y="108.7" width="2.4" height="3.8" fill="#3c4d5d" opacity=".75"/><rect x="111.5" y="107.4" width="4.3" height="3.0" fill="#3c4d5d" opacity=".75"/><rect x="496.2" y="50.6" width="4.1" height="1.6" fill="#95a4b2" opacity=".75"/><rect x="421.8" y="16.9" width="1.7" height="2.8" fill="#283440" opacity=".75"/><rect x="151.1" y="64.2" width="4.4" height="2.1" fill="#95a4b2" opacity=".75"/><rect x="505.2" y="76.0" width="2.8" height="2.5" fill="#34434f" opacity=".75"/><rect x="352.3" y="26.5" width="3.2" height="3.5" fill="#34434f" opacity=".75"/><rect x="234.1" y="98.9" width="3.2" height="3.7" fill="#34434f" opacity=".75"/><rect x="293.2" y="0.6" width="4.2" height="2.0" fill="#2c3a47" opacity=".75"/><rect x="251.7" y="107.5" width="2.3" height="3.3" fill="#4c5f71" opacity=".75"/><rect x="515.0" y="112.3" width="2.6" height="3.9" fill="#4c5f71" opacity=".75"/><rect x="308.3" y="63.7" width="2.1" height="3.5" fill="#34434f" opacity=".75"/><rect x="221.6" y="85.3" width="2.7" height="2.3" fill="#2c3a47" opacity=".75"/><rect x="318.6" y="14.8" width="2.9" height="1.7" fill="#4c5f71" opacity=".75"/><rect x="489.9" y="105.1" width="3.6" height="3.6" fill="#95a4b2" opacity=".75"/><rect x="358.5" y="104.6" width="1.5" height="3.3" fill="#3c4d5d" opacity=".75"/><rect x="290.6" y="47.6" width="1.5" height="2.4" fill="#34434f" opacity=".75"/><rect x="222.0" y="112.3" width="2.5" height="3.6" fill="#5e7183" opacity=".75"/><rect x="429.9" y="55.6" width="3.0" height="3.6" fill="#3c4d5d" opacity=".75"/><rect x="259.6" y="92.8" width="3.5" height="1.8" fill="#283440" opacity=".75"/><rect x="321.9" y="8.1" width="3.6" height="2.4" fill="#4c5f71" opacity=".75"/><rect x="348.6" y="105.6" width="2.8" height="2.2" fill="#95a4b2" opacity=".75"/><rect x="521.6" y="15.7" width="2.3" height="3.5" fill="#95a4b2" opacity=".75"/><rect x="341.4" y="37.2" width="4.5" height="1.7" fill="#95a4b2" opacity=".75"/><rect x="116.3" y="76.2" width="4.2" height="3.9" fill="#2c3a47" opacity=".75"/><rect x="414.7" y="47.6" width="2.0" height="2.6" fill="#283440" opacity=".75"/><rect x="403.0" y="65.0" width="1.9" height="2.2" fill="#3c4d5d" opacity=".75"/><rect x="397.1" y="107.9" width="3.9" height="1.6" fill="#4c5f71" opacity=".75"/><rect x="513.1" y="23.4" width="2.3" height="2.0" fill="#34434f" opacity=".75"/><rect x="339.5" y="58.6" width="3.8" height="2.8" fill="#95a4b2" opacity=".75"/><rect x="494.2" y="107.0" width="1.5" height="3.7" fill="#3c4d5d" opacity=".75"/><rect x="133.2" y="84.4" width="2.8" height="3.6" fill="#77899a" opacity=".75"/><rect x="504.5" y="65.5" width="3.3" height="3.9" fill="#95a4b2" opacity=".75"/><rect x="226.5" y="31.0" width="2.5" height="2.8" fill="#2c3a47" opacity=".75"/><rect x="369.7" y="107.2" width="3.3" height="3.4" fill="#95a4b2" opacity=".75"/><rect x="406.6" y="51.0" width="1.9" height="2.9" fill="#77899a" opacity=".75"/><rect x="274.1" y="38.5" width="2.6" height="3.2" fill="#283440" opacity=".75"/><rect x="185.3" y="80.3" width="2.2" height="2.3" fill="#2c3a47" opacity=".75"/><rect x="470.6" y="33.7" width="3.6" height="2.0" fill="#2c3a47" opacity=".75"/><rect x="98.3" y="80.0" width="3.4" height="3.3" fill="#4c5f71" opacity=".75"/><rect x="291.8" y="14.7" width="4.4" height="3.1" fill="#4c5f71" opacity=".75"/><rect x="308.8" y="33.3" width="1.7" height="3.1" fill="#3c4d5d" opacity=".75"/><rect x="249.6" y="96.9" width="1.6" height="1.8" fill="#2c3a47" opacity=".75"/><rect x="183.2" y="30.6" width="2.0" height="3.9" fill="#34434f" opacity=".75"/><rect x="506.0" y="100.1" width="1.7" height="3.1" fill="#95a4b2" opacity=".75"/><rect x="313.9" y="95.0" width="3.4" height="3.9" fill="#283440" opacity=".75"/><rect x="122.7" y="92.9" width="2.5" height="3.8" fill="#283440" opacity=".75"/><rect x="356.9" y="36.3" width="3.7" height="1.6" fill="#95a4b2" opacity=".75"/><rect x="329.1" y="79.7" width="2.5" height="2.3" fill="#2c3a47" opacity=".75"/><rect x="237.3" y="59.5" width="3.0" height="3.6" fill="#77899a" opacity=".75"/><rect x="410.8" y="44.6" width="3.4" height="2.7" fill="#95a4b2" opacity=".75"/><rect x="513.3" y="56.8" width="3.7" height="2.5" fill="#2c3a47" opacity=".75"/><rect x="191.0" y="71.9" width="4.0" height="2.2" fill="#5e7183" opacity=".75"/><rect x="335.9" y="51.9" width="1.6" height="2.1" fill="#95a4b2" opacity=".75"/><rect x="496.8" y="16.7" width="2.2" height="1.8" fill="#95a4b2" opacity=".75"/><rect x="381.7" y="58.5" width="3.8" height="3.1" fill="#3c4d5d" opacity=".75"/><rect x="259.1" y="79.9" width="3.1" height="2.3" fill="#283440" opacity=".75"/><rect x="229.3" y="96.1" width="2.2" height="3.1" fill="#2c3a47" opacity=".75"/><rect x="294.7" y="18.6" width="3.3" height="3.3" fill="#95a4b2" opacity=".75"/><rect x="203.0" y="44.2" width="3.4" height="2.7" fill="#3c4d5d" opacity=".75"/><rect x="331.9" y="42.1" width="4.3" height="4.0" fill="#4c5f71" opacity=".75"/><rect x="235.6" y="42.8" width="3.0" height="3.6" fill="#3c4d5d" opacity=".75"/><rect x="377.0" y="2.2" width="2.8" height="2.7" fill="#4c5f71" opacity=".75"/><rect x="265.6" y="41.1" width="3.7" height="3.9" fill="#3c4d5d" opacity=".75"/><rect x="260.5" y="72.7" width="1.9" height="3.0" fill="#2c3a47" opacity=".75"/><rect x="470.9" y="15.8" width="2.0" height="3.8" fill="#2c3a47" opacity=".75"/><rect x="415.4" y="7.6" width="3.4" height="1.6" fill="#77899a" opacity=".75"/><rect x="430.0" y="36.4" width="1.5" height="3.3" fill="#77899a" opacity=".75"/><rect x="235.8" y="37.2" width="3.9" height="3.9" fill="#95a4b2" opacity=".75"/><rect x="428.5" y="22.5" width="3.6" height="3.0" fill="#34434f" opacity=".75"/><rect x="210.8" y="81.9" width="4.4" height="2.7" fill="#3c4d5d" opacity=".75"/><rect x="251.4" y="47.7" width="3.9" height="3.9" fill="#95a4b2" opacity=".75"/><rect x="389.2" y="93.5" width="4.3" height="3.9" fill="#283440" opacity=".75"/><rect x="210.5" y="87.8" width="2.0" height="1.6" fill="#34434f" opacity=".75"/><rect x="492.2" y="1.8" width="2.6" height="3.5" fill="#95a4b2" opacity=".75"/><rect x="291.1" y="10.3" width="4.0" height="3.4" fill="#34434f" opacity=".75"/><rect x="411.8" y="18.1" width="2.8" height="2.3" fill="#34434f" opacity=".75"/><rect x="377.7" y="101.1" width="2.9" height="3.0" fill="#5e7183" opacity=".75"/><rect x="240.1" y="76.1" width="2.6" height="3.7" fill="#3c4d5d" opacity=".75"/><rect x="242.7" y="39.7" width="2.8" height="3.0" fill="#2c3a47" opacity=".75"/><rect x="412.3" y="32.1" width="3.1" height="3.8" fill="#5e7183" opacity=".75"/><rect x="521.9" y="81.7" width="3.7" height="3.4" fill="#283440" opacity=".75"/><rect x="350.3" y="22.0" width="3.1" height="1.9" fill="#5e7183" opacity=".75"/><rect x="345.0" y="52.3" width="4.4" height="3.5" fill="#34434f" opacity=".75"/><rect x="264.3" y="55.0" width="2.2" height="3.3" fill="#4c5f71" opacity=".75"/><rect x="348.9" y="86.3" width="3.5" height="2.3" fill="#5e7183" opacity=".75"/><rect x="237.4" y="88.4" width="3.0" height="3.1" fill="#3c4d5d" opacity=".75"/><rect x="475.7" y="59.3" width="3.4" height="3.6" fill="#283440" opacity=".75"/><rect x="290.9" y="44.1" width="2.8" height="3.8" fill="#5e7183" opacity=".75"/><rect x="234.3" y="47.4" width="2.6" height="2.4" fill="#283440" opacity=".75"/><rect x="162.7" y="75.3" width="2.0" height="1.7" fill="#77899a" opacity=".75"/><rect x="496.0" y="15.2" width="3.9" height="3.8" fill="#5e7183" opacity=".75"/><rect x="416.1" y="14.1" width="3.1" height="2.8" fill="#4c5f71" opacity=".75"/><rect x="512.9" y="85.6" width="3.6" height="2.2" fill="#2c3a47" opacity=".75"/><rect x="315.4" y="36.7" width="2.3" height="3.4" fill="#95a4b2" opacity=".75"/><rect x="497.0" y="21.5" width="3.4" height="2.0" fill="#3c4d5d" opacity=".75"/><rect x="319.8" y="65.5" width="3.6" height="2.9" fill="#283440" opacity=".75"/><rect x="349.2" y="46.0" width="4.2" height="3.7" fill="#4c5f71" opacity=".75"/><rect x="256.7" y="64.8" width="4.0" height="1.8" fill="#5e7183" opacity=".75"/><rect x="210.7" y="28.4" width="1.6" height="1.8" fill="#77899a" opacity=".75"/><rect x="213.6" y="97.8" width="3.6" height="2.6" fill="#3c4d5d" opacity=".75"/><rect x="239.0" y="72.3" width="2.6" height="3.2" fill="#4c5f71" opacity=".75"/><rect x="201.9" y="47.9" width="3.0" height="1.8" fill="#2c3a47" opacity=".75"/><rect x="215.0" y="37.9" width="2.3" height="1.9" fill="#3c4d5d" opacity=".75"/><rect x="229.4" y="99.2" width="4.2" height="3.4" fill="#34434f" opacity=".75"/><rect x="334.6" y="57.7" width="3.5" height="2.7" fill="#283440" opacity=".75"/><rect x="490.7" y="89.6" width="4.2" height="2.9" fill="#95a4b2" opacity=".75"/><rect x="226.1" y="48.9" width="2.7" height="2.0" fill="#95a4b2" opacity=".75"/><rect x="484.7" y="81.9" width="3.4" height="2.1" fill="#3c4d5d" opacity=".75"/><rect x="331.9" y="87.4" width="1.8" height="2.7" fill="#5e7183" opacity=".75"/><rect x="178.5" y="71.6" width="4.0" height="2.7" fill="#77899a" opacity=".75"/><rect x="491.0" y="108.1" width="4.0" height="3.9" fill="#77899a" opacity=".75"/><rect x="248.4" y="51.7" width="2.1" height="2.7" fill="#34434f" opacity=".75"/><rect x="158.5" y="95.5" width="2.4" height="2.7" fill="#2c3a47" opacity=".75"/><rect x="155.5" y="71.7" width="2.7" height="3.9" fill="#34434f" opacity=".75"/><rect x="407.1" y="29.7" width="2.3" height="3.0" fill="#2c3a47" opacity=".75"/><rect x="509.5" y="107.4" width="2.2" height="3.7" fill="#3c4d5d" opacity=".75"/><rect x="499.5" y="99.3" width="1.7" height="3.0" fill="#34434f" opacity=".75"/><rect x="410.5" y="51.5" width="4.4" height="1.8" fill="#95a4b2" opacity=".75"/><rect x="163.2" y="97.2" width="1.8" height="3.7" fill="#3c4d5d" opacity=".75"/><rect x="440.8" y="28.6" width="3.0" height="2.9" fill="#2c3a47" opacity=".75"/><rect x="438.8" y="10.2" width="1.9" height="3.0" fill="#3c4d5d" opacity=".75"/><rect x="405.2" y="70.4" width="4.2" height="1.6" fill="#95a4b2" opacity=".75"/><rect x="486.4" y="77.6" width="2.6" height="3.4" fill="#3c4d5d" opacity=".75"/><rect x="314.7" y="51.5" width="2.9" height="1.5" fill="#77899a" opacity=".75"/><rect x="235.5" y="92.9" width="1.5" height="3.6" fill="#4c5f71" opacity=".75"/><rect x="522.5" y="91.2" width="1.8" height="2.8" fill="#95a4b2" opacity=".75"/><rect x="352.2" y="104.5" width="4.4" height="1.9" fill="#34434f" opacity=".75"/><rect x="504.9" y="111.1" width="3.3" height="2.9" fill="#3c4d5d" opacity=".75"/><rect x="476.4" y="95.9" width="2.8" height="2.8" fill="#4c5f71" opacity=".75"/><rect x="242.0" y="28.8" width="1.6" height="2.0" fill="#4c5f71" opacity=".75"/><rect x="495.2" y="19.1" width="2.1" height="3.1" fill="#5e7183" opacity=".75"/><rect x="383.0" y="49.0" width="1.8" height="2.4" fill="#77899a" opacity=".75"/><rect x="413.3" y="16.2" width="4.3" height="2.8" fill="#2c3a47" opacity=".75"/><rect x="355.2" y="33.5" width="3.6" height="1.8" fill="#2c3a47" opacity=".75"/><rect x="198.6" y="94.3" width="2.8" height="4.0" fill="#77899a" opacity=".75"/><rect x="497.5" y="105.2" width="2.6" height="3.2" fill="#34434f" opacity=".75"/><rect x="366.8" y="2.6" width="3.6" height="3.4" fill="#5e7183" opacity=".75"/><rect x="433.5" y="45.0" width="2.4" height="3.6" fill="#95a4b2" opacity=".75"/><rect x="454.1" y="46.9" width="4.5" height="3.3" fill="#283440" opacity=".75"/><rect x="488.8" y="62.9" width="2.5" height="3.0" fill="#2c3a47" opacity=".75"/><rect x="381.4" y="73.2" width="3.9" height="3.5" fill="#77899a" opacity=".75"/><rect x="126.7" y="106.9" width="3.5" height="1.7" fill="#4c5f71" opacity=".75"/><rect x="460.6" y="10.3" width="4.2" height="3.0" fill="#283440" opacity=".75"/><rect x="290.1" y="56.9" width="4.3" height="2.3" fill="#34434f" opacity=".75"/><rect x="327.8" y="106.9" width="4.2" height="3.4" fill="#2c3a47" opacity=".75"/><rect x="487.7" y="3.6" width="2.8" height="1.9" fill="#95a4b2" opacity=".75"/><rect x="250.6" y="93.9" width="1.7" height="2.8" fill="#3c4d5d" opacity=".75"/><rect x="516.5" y="104.6" width="3.3" height="1.7" fill="#2c3a47" opacity=".75"/><rect x="402.7" y="81.1" width="2.6" height="3.4" fill="#34434f" opacity=".75"/><rect x="381.0" y="18.7" width="4.2" height="4.0" fill="#77899a" opacity=".75"/><rect x="284.3" y="93.2" width="4.3" height="3.2" fill="#3c4d5d" opacity=".75"/><rect x="299.4" y="46.2" width="1.9" height="1.7" fill="#34434f" opacity=".75"/><rect x="501.6" y="62.1" width="3.1" height="2.3" fill="#2c3a47" opacity=".75"/><rect x="166.5" y="105.7" width="1.8" height="3.1" fill="#5e7183" opacity=".75"/><rect x="160.1" y="70.9" width="3.1" height="3.0" fill="#4c5f71" opacity=".75"/><rect x="350.7" y="44.8" width="4.1" height="3.2" fill="#95a4b2" opacity=".75"/><rect x="246.4" y="97.3" width="3.3" height="2.8" fill="#283440" opacity=".75"/><rect x="518.1" y="105.1" width="3.4" height="3.5" fill="#77899a" opacity=".75"/><rect x="252.5" y="55.7" width="2.8" height="3.7" fill="#283440" opacity=".75"/><rect x="414.1" y="22.3" width="2.5" height="1.7" fill="#95a4b2" opacity=".75"/><rect x="227.4" y="113.0" width="3.1" height="2.0" fill="#95a4b2" opacity=".75"/><rect x="522.2" y="64.1" width="1.6" height="1.8" fill="#34434f" opacity=".75"/><rect x="129.0" y="101.6" width="1.7" height="1.6" fill="#77899a" opacity=".75"/><rect x="254.2" y="62.7" width="3.3" height="1.8" fill="#95a4b2" opacity=".75"/><rect x="223.3" y="37.5" width="1.8" height="3.8" fill="#77899a" opacity=".75"/><rect x="349.0" y="112.5" width="1.6" height="3.2" fill="#34434f" opacity=".75"/><rect x="125.0" y="104.1" width="4.5" height="3.7" fill="#283440" opacity=".75"/><rect x="213.6" y="85.4" width="3.6" height="2.5" fill="#4c5f71" opacity=".75"/><rect x="415.5" y="102.8" width="3.5" height="1.9" fill="#2c3a47" opacity=".75"/><rect x="180.8" y="77.9" width="3.9" height="2.2" fill="#95a4b2" opacity=".75"/><rect x="375.4" y="97.0" width="1.8" height="3.3" fill="#95a4b2" opacity=".75"/><rect x="187.4" y="37.3" width="2.3" height="3.8" fill="#4c5f71" opacity=".75"/><rect x="477.2" y="24.5" width="3.1" height="1.9" fill="#4c5f71" opacity=".75"/><rect x="434.0" y="94.6" width="3.0" height="3.1" fill="#3c4d5d" opacity=".75"/><rect x="284.5" y="106.3" width="3.8" height="2.9" fill="#95a4b2" opacity=".75"/><rect x="131.4" y="67.4" width="2.6" height="3.2" fill="#3c4d5d" opacity=".75"/><rect x="507.1" y="109.1" width="2.7" height="4.0" fill="#283440" opacity=".75"/><rect x="195.9" y="37.1" width="3.1" height="3.6" fill="#3c4d5d" opacity=".75"/><rect x="184.5" y="67.4" width="1.8" height="1.5" fill="#283440" opacity=".75"/><rect x="349.4" y="108.8" width="2.8" height="1.7" fill="#3c4d5d" opacity=".75"/><rect x="500.6" y="38.1" width="2.4" height="1.9" fill="#3c4d5d" opacity=".75"/><rect x="253.4" y="25.4" width="1.5" height="2.6" fill="#2c3a47" opacity=".75"/><rect x="138.2" y="65.0" width="2.1" height="3.7" fill="#77899a" opacity=".75"/><rect x="281.7" y="19.5" width="3.3" height="2.0" fill="#95a4b2" opacity=".75"/><rect x="268.2" y="80.5" width="3.8" height="2.2" fill="#4c5f71" opacity=".75"/><rect x="328.3" y="26.2" width="2.7" height="2.9" fill="#95a4b2" opacity=".75"/><rect x="124.1" y="79.7" width="2.0" height="2.2" fill="#5e7183" opacity=".75"/><rect x="113.0" y="62.6" width="3.1" height="2.5" fill="#5e7183" opacity=".75"/><rect x="470.2" y="36.1" width="1.7" height="2.0" fill="#95a4b2" opacity=".75"/><rect x="246.4" y="36.6" width="3.6" height="2.9" fill="#77899a" opacity=".75"/><rect x="383.1" y="102.5" width="2.9" height="3.5" fill="#3c4d5d" opacity=".75"/><rect x="444.0" y="83.1" width="2.9" height="1.7" fill="#34434f" opacity=".75"/><rect x="397.8" y="80.5" width="4.2" height="2.5" fill="#3c4d5d" opacity=".75"/><rect x="225.4" y="19.9" width="3.5" height="2.6" fill="#34434f" opacity=".75"/><rect x="271.2" y="3.5" width="2.2" height="3.4" fill="#34434f" opacity=".75"/><rect x="210.3" y="112.8" width="4.1" height="2.8" fill="#2c3a47" opacity=".75"/><rect x="208.8" y="64.1" width="2.8" height="1.6" fill="#4c5f71" opacity=".75"/><rect x="137.8" y="65.6" width="2.3" height="2.5" fill="#34434f" opacity=".75"/><rect x="453.8" y="49.8" width="2.8" height="3.6" fill="#3c4d5d" opacity=".75"/><rect x="495.8" y="1.2" width="1.5" height="3.4" fill="#95a4b2" opacity=".75"/><rect x="115.8" y="64.9" width="3.4" height="2.1" fill="#95a4b2" opacity=".75"/><rect x="402.7" y="11.2" width="2.3" height="2.0" fill="#5e7183" opacity=".75"/><rect x="440.0" y="49.1" width="2.7" height="3.1" fill="#2c3a47" opacity=".75"/><rect x="444.9" y="14.4" width="3.6" height="2.0" fill="#95a4b2" opacity=".75"/><rect x="188.8" y="59.9" width="2.5" height="2.9" fill="#283440" opacity=".75"/><rect x="236.5" y="26.5" width="3.4" height="3.7" fill="#34434f" opacity=".75"/><rect x="221.6" y="52.7" width="2.6" height="3.7" fill="#95a4b2" opacity=".75"/><rect x="375.3" y="74.3" width="2.8" height="2.6" fill="#95a4b2" opacity=".75"/><rect x="300.5" y="18.6" width="2.6" height="2.0" fill="#3c4d5d" opacity=".75"/><rect x="491.7" y="78.4" width="4.0" height="2.9" fill="#4c5f71" opacity=".75"/><rect x="133.4" y="94.0" width="3.4" height="3.1" fill="#77899a" opacity=".75"/><rect x="266.7" y="26.3" width="3.6" height="2.4" fill="#3c4d5d" opacity=".75"/><rect x="450.5" y="78.7" width="2.7" height="3.9" fill="#283440" opacity=".75"/><rect x="374.1" y="49.1" width="3.0" height="1.6" fill="#5e7183" opacity=".75"/><rect x="446.4" y="67.2" width="2.9" height="3.5" fill="#2c3a47" opacity=".75"/><rect x="284.4" y="110.2" width="2.8" height="3.0" fill="#77899a" opacity=".75"/><rect x="345.0" y="101.4" width="2.7" height="1.8" fill="#2c3a47" opacity=".75"/><rect x="271.6" y="53.9" width="3.4" height="2.2" fill="#3c4d5d" opacity=".75"/><rect x="394.6" y="54.2" width="3.8" height="2.7" fill="#34434f" opacity=".75"/><rect x="406.9" y="33.7" width="2.2" height="2.6" fill="#77899a" opacity=".75"/><rect x="406.9" y="49.2" width="2.2" height="3.6" fill="#77899a" opacity=".75"/><rect x="194.7" y="84.2" width="3.9" height="3.5" fill="#2c3a47" opacity=".75"/><rect x="372.0" y="6.1" width="2.9" height="3.8" fill="#283440" opacity=".75"/><rect x="420.2" y="67.5" width="4.2" height="1.7" fill="#34434f" opacity=".75"/><rect x="366.1" y="1.2" width="2.7" height="3.4" fill="#4c5f71" opacity=".75"/><rect x="448.6" y="52.2" width="4.0" height="2.6" fill="#4c5f71" opacity=".75"/><rect x="145.4" y="67.9" width="3.1" height="3.3" fill="#3c4d5d" opacity=".75"/><rect x="298.3" y="4.0" width="2.5" height="3.9" fill="#283440" opacity=".75"/><rect x="173.5" y="93.3" width="3.9" height="1.8" fill="#3c4d5d" opacity=".75"/><rect x="393.9" y="17.1" width="4.2" height="2.3" fill="#5e7183" opacity=".75"/><rect x="337.5" y="27.2" width="2.8" height="2.0" fill="#3c4d5d" opacity=".75"/><rect x="334.0" y="9.2" width="3.6" height="2.9" fill="#2c3a47" opacity=".75"/><rect x="440.6" y="74.0" width="4.0" height="2.8" fill="#77899a" opacity=".75"/><rect x="326.0" y="51.2" width="3.8" height="3.4" fill="#3c4d5d" opacity=".75"/><rect x="276.2" y="103.9" width="2.6" height="1.8" fill="#77899a" opacity=".75"/><rect x="516.5" y="49.3" width="2.0" height="2.7" fill="#34434f" opacity=".75"/><rect x="430.3" y="106.4" width="2.4" height="2.6" fill="#5e7183" opacity=".75"/><rect x="353.6" y="34.9" width="4.3" height="2.8" fill="#95a4b2" opacity=".75"/><rect x="282.7" y="27.9" width="4.0" height="3.9" fill="#77899a" opacity=".75"/><rect x="269.4" y="83.7" width="3.1" height="3.9" fill="#5e7183" opacity=".75"/><rect x="379.3" y="29.5" width="2.7" height="1.7" fill="#283440" opacity=".75"/><rect x="256.8" y="39.2" width="4.3" height="4.0" fill="#34434f" opacity=".75"/><rect x="475.9" y="73.0" width="1.8" height="2.6" fill="#5e7183" opacity=".75"/><rect x="140.2" y="57.0" width="3.1" height="3.4" fill="#4c5f71" opacity=".75"/><rect x="204.5" y="50.7" width="4.4" height="2.3" fill="#2c3a47" opacity=".75"/><rect x="363.7" y="37.8" width="3.4" height="2.6" fill="#283440" opacity=".75"/><rect x="399.2" y="64.8" width="3.6" height="2.5" fill="#4c5f71" opacity=".75"/><rect x="213.0" y="50.5" width="3.6" height="2.6" fill="#34434f" opacity=".75"/><rect x="307.7" y="54.3" width="3.6" height="1.7" fill="#4c5f71" opacity=".75"/><rect x="326.8" y="60.4" width="3.7" height="2.6" fill="#283440" opacity=".75"/><rect x="508.0" y="97.1" width="2.7" height="2.4" fill="#283440" opacity=".75"/><rect x="235.1" y="24.5" width="3.4" height="2.8" fill="#2c3a47" opacity=".75"/><rect x="409.2" y="58.0" width="3.7" height="2.7" fill="#5e7183" opacity=".75"/><rect x="260.4" y="105.7" width="4.5" height="2.9" fill="#3c4d5d" opacity=".75"/><rect x="398.7" y="76.4" width="4.1" height="3.4" fill="#5e7183" opacity=".75"/><rect x="185.4" y="80.7" width="2.3" height="3.0" fill="#2c3a47" opacity=".75"/><rect x="151.9" y="76.4" width="5.3" height="2.6" fill="#8e9ca8" opacity=".8"/><rect x="129.3" y="69.3" width="5.4" height="3.0" fill="#a8b4be" opacity=".8"/><rect x="171.5" y="98.5" width="3.5" height="3.8" fill="#8e9ca8" opacity=".8"/><rect x="131.2" y="72.2" width="3.2" height="4.3" fill="#8e9ca8" opacity=".8"/><rect x="96.6" y="111.5" width="4.2" height="4.8" fill="#6a7a88" opacity=".8"/><rect x="105.8" y="98.8" width="4.5" height="3.1" fill="#8e9ca8" opacity=".8"/><rect x="165.8" y="101.8" width="3.3" height="2.3" fill="#8e9ca8" opacity=".8"/><rect x="199.2" y="78.3" width="2.8" height="2.7" fill="#6a7a88" opacity=".8"/><rect x="133.1" y="75.2" width="2.1" height="4.1" fill="#6a7a88" opacity=".8"/><rect x="153.4" y="81.6" width="4.8" height="2.8" fill="#6a7a88" opacity=".8"/><rect x="137.9" y="67.6" width="2.4" height="3.0" fill="#c0cad2" opacity=".8"/><rect x="195.7" y="82.7" width="3.6" height="2.7" fill="#a8b4be" opacity=".8"/><rect x="129.4" y="106.4" width="5.3" height="4.5" fill="#8e9ca8" opacity=".8"/><rect x="103.1" y="72.0" width="3.6" height="4.2" fill="#c0cad2" opacity=".8"/><rect x="144.4" y="83.9" width="2.2" height="3.9" fill="#8e9ca8" opacity=".8"/><rect x="102.1" y="102.4" width="5.0" height="3.3" fill="#6a7a88" opacity=".8"/><rect x="118.4" y="84.2" width="2.1" height="2.1" fill="#c0cad2" opacity=".8"/><rect x="129.4" y="66.3" width="3.7" height="3.9" fill="#a8b4be" opacity=".8"/><rect x="184.8" y="68.2" width="2.9" height="2.5" fill="#6a7a88" opacity=".8"/><rect x="173.3" y="61.6" width="5.7" height="4.1" fill="#6a7a88" opacity=".8"/><rect x="130.6" y="83.2" width="2.4" height="2.8" fill="#8e9ca8" opacity=".8"/><rect x="114.2" y="107.7" width="5.3" height="4.8" fill="#8e9ca8" opacity=".8"/><rect x="183.8" y="69.5" width="5.0" height="2.8" fill="#a8b4be" opacity=".8"/><rect x="141.8" y="98.6" width="2.4" height="3.2" fill="#c0cad2" opacity=".8"/><rect x="100.7" y="101.7" width="5.5" height="3.3" fill="#8e9ca8" opacity=".8"/><rect x="138.7" y="97.3" width="4.8" height="2.3" fill="#6a7a88" opacity=".8"/><rect x="112.6" y="73.1" width="4.9" height="4.8" fill="#c0cad2" opacity=".8"/><rect x="153.2" y="94.7" width="5.8" height="4.9" fill="#a8b4be" opacity=".8"/><rect x="116.6" y="92.1" width="4.2" height="2.1" fill="#a8b4be" opacity=".8"/><rect x="125.6" y="105.0" width="4.9" height="3.5" fill="#c0cad2" opacity=".8"/><rect x="186.2" y="92.2" width="5.1" height="2.3" fill="#6a7a88" opacity=".8"/><rect x="179.3" y="89.2" width="3.7" height="2.5" fill="#6a7a88" opacity=".8"/><rect x="93.2" y="109.1" width="3.7" height="3.8" fill="#c0cad2" opacity=".8"/><rect x="124.6" y="61.0" width="3.7" height="3.6" fill="#8e9ca8" opacity=".8"/><rect x="140.5" y="82.9" width="4.5" height="4.0" fill="#8e9ca8" opacity=".8"/><rect x="147.9" y="67.2" width="4.1" height="4.3" fill="#8e9ca8" opacity=".8"/><rect x="186.0" y="81.9" width="3.7" height="2.7" fill="#6a7a88" opacity=".8"/><rect x="152.3" y="108.9" width="2.8" height="2.1" fill="#c0cad2" opacity=".8"/><rect x="157.4" y="91.3" width="5.8" height="3.1" fill="#c0cad2" opacity=".8"/><rect x="114.1" y="108.3" width="3.0" height="2.9" fill="#8e9ca8" opacity=".8"/><rect x="133.1" y="108.3" width="2.1" height="3.9" fill="#a8b4be" opacity=".8"/><rect x="151.5" y="77.9" width="4.2" height="4.0" fill="#a8b4be" opacity=".8"/><rect x="113.2" y="86.8" width="4.8" height="3.9" fill="#6a7a88" opacity=".8"/><rect x="179.9" y="76.4" width="5.8" height="2.3" fill="#a8b4be" opacity=".8"/><rect x="196.6" y="98.3" width="5.7" height="3.1" fill="#a8b4be" opacity=".8"/><rect x="112.9" y="100.9" width="5.7" height="2.6" fill="#6a7a88" opacity=".8"/><rect x="135.2" y="101.9" width="3.4" height="5.0" fill="#c0cad2" opacity=".8"/><rect x="133.8" y="68.9" width="3.1" height="4.6" fill="#c0cad2" opacity=".8"/><rect x="101.0" y="104.6" width="2.3" height="3.3" fill="#c0cad2" opacity=".8"/><rect x="179.4" y="110.8" width="5.8" height="2.8" fill="#6a7a88" opacity=".8"/><rect x="142.5" y="95.8" width="3.2" height="4.3" fill="#c0cad2" opacity=".8"/><rect x="114.3" y="65.7" width="2.7" height="2.8" fill="#8e9ca8" opacity=".8"/><rect x="194.5" y="81.3" width="5.7" height="4.7" fill="#c0cad2" opacity=".8"/><rect x="145.1" y="102.6" width="4.5" height="4.7" fill="#8e9ca8" opacity=".8"/><rect x="146.9" y="61.4" width="3.9" height="3.9" fill="#6a7a88" opacity=".8"/><rect x="105.9" y="104.4" width="5.9" height="4.4" fill="#6a7a88" opacity=".8"/><rect x="124.1" y="88.8" width="3.7" height="4.4" fill="#8e9ca8" opacity=".8"/><rect x="161.9" y="76.9" width="5.7" height="2.6" fill="#c0cad2" opacity=".8"/><rect x="119.9" y="111.4" width="5.2" height="4.1" fill="#8e9ca8" opacity=".8"/><rect x="152.0" y="104.5" width="3.3" height="3.8" fill="#8e9ca8" opacity=".8"/><rect x="196.7" y="89.9" width="3.4" height="4.0" fill="#c0cad2" opacity=".8"/><rect x="161.6" y="95.8" width="3.5" height="4.1" fill="#c0cad2" opacity=".8"/><rect x="124.5" y="87.4" width="2.3" height="2.1" fill="#c0cad2" opacity=".8"/><rect x="113.9" y="75.8" width="3.5" height="3.2" fill="#6a7a88" opacity=".8"/><rect x="143.2" y="89.1" width="3.6" height="3.6" fill="#c0cad2" opacity=".8"/><rect x="91.5" y="96.9" width="2.5" height="2.2" fill="#a8b4be" opacity=".8"/><rect x="148.8" y="66.1" width="5.0" height="3.4" fill="#a8b4be" opacity=".8"/><rect x="131.6" y="102.1" width="4.7" height="2.4" fill="#c0cad2" opacity=".8"/><rect x="96.7" y="80.5" width="5.6" height="3.1" fill="#6a7a88" opacity=".8"/><rect x="191.7" y="62.7" width="3.6" height="3.3" fill="#8e9ca8" opacity=".8"/><rect x="196.9" y="76.9" width="2.3" height="2.6" fill="#a8b4be" opacity=".8"/><rect x="143.4" y="93.0" width="2.6" height="2.5" fill="#8e9ca8" opacity=".8"/><rect x="112.2" y="107.1" width="4.3" height="3.2" fill="#a8b4be" opacity=".8"/><rect x="99.8" y="98.3" width="5.3" height="3.8" fill="#a8b4be" opacity=".8"/><rect x="114.2" y="61.3" width="4.3" height="3.0" fill="#6a7a88" opacity=".8"/><rect x="132.1" y="77.9" width="4.5" height="3.4" fill="#a8b4be" opacity=".8"/><rect x="150.3" y="95.3" width="3.9" height="3.5" fill="#8e9ca8" opacity=".8"/><rect x="199.8" y="76.2" width="4.0" height="4.9" fill="#8e9ca8" opacity=".8"/><rect x="146.5" y="76.1" width="2.7" height="3.2" fill="#6a7a88" opacity=".8"/><rect x="174.9" y="89.8" width="2.4" height="5.0" fill="#8e9ca8" opacity=".8"/><rect x="171.8" y="63.0" width="2.7" height="2.1" fill="#6a7a88" opacity=".8"/><rect x="193.3" y="67.3" width="5.2" height="3.7" fill="#c0cad2" opacity=".8"/><rect x="164.7" y="83.6" width="3.0" height="2.4" fill="#6a7a88" opacity=".8"/><rect x="120.2" y="77.6" width="2.9" height="3.3" fill="#a8b4be" opacity=".8"/><rect x="128.0" y="107.0" width="3.6" height="2.1" fill="#8e9ca8" opacity=".8"/><rect x="126.7" y="88.2" width="2.9" height="3.2" fill="#6a7a88" opacity=".8"/><rect x="186.9" y="78.2" width="2.2" height="2.5" fill="#6a7a88" opacity=".8"/><rect x="111.7" y="61.7" width="4.3" height="4.8" fill="#a8b4be" opacity=".8"/><rect x="101.5" y="72.4" width="4.8" height="3.9" fill="#c0cad2" opacity=".8"/><rect x="88.1" y="105.9" width="4.7" height="2.9" fill="#6a7a88" opacity=".8"/><rect x="163.0" y="111.3" width="2.0" height="2.4" fill="#a8b4be" opacity=".8"/><rect x="193.8" y="80.3" width="4.0" height="3.0" fill="#c0cad2" opacity=".8"/><rect x="193.7" y="83.2" width="5.6" height="3.5" fill="#6a7a88" opacity=".8"/><rect x="140.8" y="86.5" width="5.2" height="2.4" fill="#c0cad2" opacity=".8"/><rect x="175.7" y="75.1" width="3.4" height="4.1" fill="#8e9ca8" opacity=".8"/><rect x="106.0" y="101.1" width="2.3" height="3.9" fill="#c0cad2" opacity=".8"/><rect x="199.7" y="103.5" width="4.0" height="4.2" fill="#6a7a88" opacity=".8"/><rect x="139.4" y="87.2" width="3.5" height="4.9" fill="#8e9ca8" opacity=".8"/><rect x="122.8" y="94.9" width="3.0" height="2.7" fill="#a8b4be" opacity=".8"/><rect x="191.9" y="101.3" width="2.8" height="3.5" fill="#a8b4be" opacity=".8"/><rect x="176.8" y="72.1" width="3.9" height="3.8" fill="#a8b4be" opacity=".8"/><rect x="141.0" y="81.4" width="4.5" height="3.6" fill="#c0cad2" opacity=".8"/><rect x="148.5" y="88.0" width="3.4" height="2.3" fill="#6a7a88" opacity=".8"/><rect x="172.7" y="83.0" width="5.1" height="4.5" fill="#c0cad2" opacity=".8"/><rect x="177.0" y="111.2" width="2.2" height="4.8" fill="#6a7a88" opacity=".8"/><rect x="192.2" y="90.3" width="4.8" height="4.6" fill="#a8b4be" opacity=".8"/><rect x="170.0" y="77.5" width="3.0" height="3.3" fill="#c0cad2" opacity=".8"/><rect x="115.8" y="99.3" width="2.7" height="4.4" fill="#a8b4be" opacity=".8"/><rect x="171.9" y="92.7" width="5.9" height="4.1" fill="#6a7a88" opacity=".8"/><rect x="133.0" y="112.3" width="5.4" height="2.4" fill="#a8b4be" opacity=".8"/><rect x="195.8" y="96.4" width="4.0" height="3.2" fill="#8e9ca8" opacity=".8"/><rect x="193.2" y="99.6" width="3.5" height="2.8" fill="#a8b4be" opacity=".8"/><rect x="189.7" y="77.6" width="2.1" height="2.5" fill="#6a7a88" opacity=".8"/><rect x="192.2" y="61.0" width="2.4" height="2.9" fill="#6a7a88" opacity=".8"/><rect x="151.5" y="73.2" width="4.7" height="3.8" fill="#6a7a88" opacity=".8"/><rect x="122.5" y="108.0" width="4.5" height="3.0" fill="#6a7a88" opacity=".8"/><rect x="186.1" y="84.6" width="5.2" height="2.6" fill="#6a7a88" opacity=".8"/><rect x="184.9" y="100.5" width="3.7" height="4.6" fill="#6a7a88" opacity=".8"/><rect x="150.0" y="84.6" width="3.1" height="2.5" fill="#8e9ca8" opacity=".8"/><rect x="134.3" y="112.4" width="3.5" height="3.2" fill="#6a7a88" opacity=".8"/><rect x="166.5" y="84.3" width="3.6" height="2.7" fill="#8e9ca8" opacity=".8"/><rect x="135.4" y="71.6" width="4.0" height="5.0" fill="#a8b4be" opacity=".8"/><rect x="100.8" y="91.9" width="3.4" height="4.0" fill="#6a7a88" opacity=".8"/><rect x="119.4" y="92.5" width="3.8" height="4.8" fill="#c0cad2" opacity=".8"/><rect x="176.8" y="67.3" width="5.9" height="4.7" fill="#c0cad2" opacity=".8"/><rect x="130.9" y="95.1" width="4.2" height="4.0" fill="#6a7a88" opacity=".8"/><rect x="138.1" y="83.2" width="4.3" height="2.3" fill="#6a7a88" opacity=".8"/><rect x="127.5" y="90.0" width="2.3" height="4.0" fill="#6a7a88" opacity=".8"/><rect x="137.2" y="92.6" width="5.1" height="4.9" fill="#8e9ca8" opacity=".8"/><rect x="163.4" y="80.3" width="3.6" height="3.0" fill="#8e9ca8" opacity=".8"/><rect x="132.3" y="60.5" width="4.1" height="3.9" fill="#c0cad2" opacity=".8"/><rect x="198.9" y="108.2" width="5.6" height="2.8" fill="#a8b4be" opacity=".8"/><rect x="119.1" y="64.6" width="5.2" height="3.7" fill="#6a7a88" opacity=".8"/><rect x="164.6" y="62.9" width="2.4" height="4.6" fill="#8e9ca8" opacity=".8"/><rect x="134.1" y="111.5" width="5.1" height="2.7" fill="#a8b4be" opacity=".8"/><rect x="206" y="55" width="10" height="58" fill="#a4b2c0"/><rect x="222" y="62" width="14" height="51" fill="#b8c4d0"/><rect x="250" y="58" width="10" height="55" fill="#a8b6c4"/><rect x="197" y="40" width="7" height="30" fill="#4e5e6e"/><rect x="238" y="40" width="8" height="35" fill="#2a3642"/><rect x="173" y="48" width="9" height="22" fill="#6a7c8c"/><rect x="190" y="26" width="5" height="22" fill="#7a8a98"/><rect x="407" y="93" width="43" height="20" fill="#1c2834"/><rect x="411" y="98" width="35" height="2" fill="#6a7a8a"/><rect x="411" y="104" width="35" height="2" fill="#6a7a8a"/><path d="M285 6 C295 15 301 25 299 36 C290 50 275 62 258 78 L254 76 C270 60 287 46 295 35 C297 26 291 16 282 8z" fill="#f2b460"/><path d="M258 78 C250 90 244 100 240 113 L236 113 C240 100 246 88 254 76z" fill="#e8a450" opacity=".9"/><path d="M335 10 C345 20 352 30 358 40" stroke="#e8a860" stroke-width="1.6" fill="none" opacity=".8"/><path d="M356 40 C370 60 380 75 392 90" stroke="#d89a50" stroke-width="1.2" fill="none" opacity=".6"/><path d="M345 5 L330 30 L315 50" stroke="#c89050" stroke-width="1" fill="none" opacity=".5"/><path d="M470 80 L490 100" stroke="#e0a050" stroke-width="1.5" fill="none" opacity=".6"/><path d="M480 0 L505 20" stroke="#e0a050" stroke-width="1.2" fill="none" opacity=".6"/><path d="M295 50 L300 113" stroke="#5a6a78" stroke-width="4" fill="none" opacity=".5"/><rect x="248.3" y="52.4" width="1" height="1" fill="#e8a850" opacity="0.88"/><rect x="240.7" y="39.6" width="1" height="1" fill="#f0c070" opacity="0.65"/><rect x="207.8" y="71.5" width="1" height="1" fill="#f0c070" opacity="0.91"/><rect x="379.2" y="17.7" width="1" height="1" fill="#ffd890" opacity="0.97"/><rect x="451.2" y="37.2" width="1" height="1" fill="#f0c070" opacity="0.82"/><rect x="388.0" y="61.5" width="1" height="1" fill="#f0c070" opacity="0.92"/><rect x="514.2" y="38.8" width="1" height="1" fill="#ffd890" opacity="0.50"/><rect x="433.0" y="9.9" width="1" height="1" fill="#e8a850" opacity="0.99"/><rect x="372.5" y="111.8" width="1" height="1" fill="#e8a850" opacity="0.89"/><rect x="175.9" y="27.7" width="1" height="1" fill="#ffd890" opacity="0.70"/><rect x="397.8" y="26.4" width="1" height="1" fill="#e8a850" opacity="0.57"/><rect x="207.0" y="68.5" width="1" height="1" fill="#ffd890" opacity="0.90"/><rect x="248.1" y="75.3" width="1" height="1" fill="#f0c070" opacity="0.83"/><rect x="460.0" y="82.3" width="1" height="1" fill="#e8a850" opacity="0.57"/><rect x="95.2" y="96.4" width="1" height="1" fill="#f0c070" opacity="0.64"/><rect x="461.5" y="64.3" width="1" height="1" fill="#e8a850" opacity="0.83"/><rect x="203.8" y="58.2" width="1" height="1" fill="#e8a850" opacity="0.60"/><rect x="265.5" y="101.5" width="1" height="1" fill="#f0c070" opacity="0.90"/><rect x="463.5" y="43.5" width="1" height="1" fill="#e8a850" opacity="0.59"/><rect x="274.7" y="29.9" width="1" height="1" fill="#ffd890" opacity="0.62"/><rect x="131.2" y="64.5" width="1" height="1" fill="#f0c070" opacity="0.73"/><rect x="321.6" y="39.7" width="1" height="1" fill="#e8a850" opacity="0.94"/><rect x="260.9" y="106.2" width="1" height="1" fill="#ffd890" opacity="0.87"/><rect x="220.3" y="67.5" width="1" height="1" fill="#e8a850" opacity="0.86"/><rect x="111.5" y="110.4" width="1" height="1" fill="#f0c070" opacity="0.72"/><rect x="481.8" y="9.3" width="1" height="1" fill="#e8a850" opacity="0.96"/><rect x="398.1" y="38.5" width="1" height="1" fill="#e8a850" opacity="0.80"/><rect x="266.5" y="19.4" width="1" height="1" fill="#ffd890" opacity="0.99"/><rect x="217.9" y="79.7" width="1" height="1" fill="#ffd890" opacity="0.84"/><rect x="303.6" y="4.6" width="1" height="1" fill="#f0c070" opacity="0.55"/><rect x="328.2" y="30.2" width="1" height="1" fill="#f0c070" opacity="0.84"/><rect x="131.7" y="101.2" width="1" height="1" fill="#ffd890" opacity="0.80"/><rect x="328.2" y="98.6" width="1" height="1" fill="#f0c070" opacity="0.97"/><rect x="324.2" y="76.8" width="1" height="1" fill="#ffd890" opacity="0.62"/><rect x="196.3" y="103.7" width="1" height="1" fill="#ffd890" opacity="0.90"/><rect x="413.6" y="5.9" width="1" height="1" fill="#ffd890" opacity="0.57"/><rect x="398.7" y="25.6" width="1" height="1" fill="#e8a850" opacity="0.54"/><rect x="484.6" y="97.4" width="1" height="1" fill="#f0c070" opacity="0.57"/><rect x="228.4" y="74.0" width="1" height="1" fill="#e8a850" opacity="0.65"/><rect x="434.0" y="65.5" width="1" height="1" fill="#f0c070" opacity="0.61"/><rect x="493.6" y="26.6" width="1" height="1" fill="#e8a850" opacity="0.93"/><rect x="396.7" y="27.5" width="1" height="1" fill="#e8a850" opacity="0.59"/><rect x="243.6" y="24.2" width="1" height="1" fill="#ffd890" opacity="0.76"/><rect x="500.9" y="10.7" width="1" height="1" fill="#e8a850" opacity="0.65"/><rect x="158.9" y="81.7" width="1" height="1" fill="#f0c070" opacity="0.56"/><rect x="94.7" y="98.1" width="1" height="1" fill="#ffd890" opacity="0.57"/><rect x="299.4" y="112.3" width="1" height="1" fill="#f0c070" opacity="0.68"/><rect x="477.5" y="77.9" width="1" height="1" fill="#f0c070" opacity="0.98"/><rect x="111.7" y="89.0" width="1" height="1" fill="#f0c070" opacity="0.99"/><rect x="480.7" y="78.0" width="1" height="1" fill="#f0c070" opacity="0.65"/><rect x="317.4" y="109.5" width="1" height="1" fill="#e8a850" opacity="0.77"/><rect x="480.2" y="15.1" width="1" height="1" fill="#ffd890" opacity="0.73"/><rect x="454.5" y="13.6" width="1" height="1" fill="#ffd890" opacity="0.73"/><rect x="439.3" y="28.9" width="1" height="1" fill="#e8a850" opacity="0.77"/><rect x="434.6" y="26.8" width="1" height="1" fill="#ffd890" opacity="0.51"/><rect x="417.4" y="46.9" width="1" height="1" fill="#f0c070" opacity="0.70"/><rect x="186.2" y="49.2" width="1" height="1" fill="#ffd890" opacity="0.94"/><rect x="389.3" y="28.7" width="1" height="1" fill="#f0c070" opacity="1.00"/><rect x="352.9" y="41.0" width="1" height="1" fill="#e8a850" opacity="0.64"/><rect x="352.7" y="7.6" width="1" height="1" fill="#f0c070" opacity="0.72"/><rect x="310.6" y="39.5" width="1" height="1" fill="#ffd890" opacity="0.65"/><rect x="226.0" y="65.2" width="1" height="1" fill="#f0c070" opacity="0.54"/><rect x="300.2" y="95.0" width="1" height="1" fill="#ffd890" opacity="0.84"/><rect x="345.3" y="56.1" width="1" height="1" fill="#f0c070" opacity="0.57"/><rect x="129.9" y="101.1" width="1" height="1" fill="#f0c070" opacity="0.61"/><rect x="149.2" y="103.1" width="1" height="1" fill="#f0c070" opacity="0.79"/><rect x="225.0" y="92.5" width="1" height="1" fill="#ffd890" opacity="0.87"/><rect x="115.3" y="75.0" width="1" height="1" fill="#e8a850" opacity="0.66"/><rect x="410.5" y="59.0" width="1" height="1" fill="#ffd890" opacity="0.87"/><rect x="277.3" y="103.3" width="1" height="1" fill="#ffd890" opacity="0.98"/><rect x="251.1" y="17.3" width="1" height="1" fill="#f0c070" opacity="0.98"/><rect x="406.2" y="91.2" width="1" height="1" fill="#f0c070" opacity="0.60"/><rect x="375.6" y="108.1" width="1" height="1" fill="#ffd890" opacity="0.93"/><rect x="422.0" y="37.4" width="1" height="1" fill="#f0c070" opacity="0.50"/><rect x="312.8" y="61.0" width="1" height="1" fill="#ffd890" opacity="0.64"/><rect x="255.3" y="73.9" width="1" height="1" fill="#ffd890" opacity="0.56"/><rect x="149.3" y="69.9" width="1" height="1" fill="#f0c070" opacity="0.85"/><rect x="481.5" y="69.2" width="1" height="1" fill="#ffd890" opacity="0.97"/><rect x="91.5" y="90.1" width="1" height="1" fill="#f0c070" opacity="0.52"/><rect x="454.6" y="43.7" width="1" height="1" fill="#f0c070" opacity="0.98"/><rect x="363.8" y="50.0" width="1" height="1" fill="#e8a850" opacity="0.63"/><rect x="473.2" y="46.5" width="1" height="1" fill="#f0c070" opacity="0.79"/><rect x="268.7" y="46.7" width="1" height="1" fill="#ffd890" opacity="0.51"/><rect x="262.3" y="42.8" width="1" height="1" fill="#f0c070" opacity="0.95"/><rect x="334.3" y="82.5" width="1" height="1" fill="#e8a850" opacity="0.71"/><rect x="466.3" y="102.6" width="1" height="1" fill="#ffd890" opacity="0.86"/><rect x="329.5" y="57.8" width="1" height="1" fill="#ffd890" opacity="0.51"/><rect x="470.1" y="67.9" width="1" height="1" fill="#ffd890" opacity="0.95"/><rect x="413.5" y="50.0" width="1" height="1" fill="#e8a850" opacity="0.74"/><rect x="300.7" y="38.7" width="1" height="1" fill="#f0c070" opacity="0.58"/><rect x="247.7" y="61.6" width="1" height="1" fill="#f0c070" opacity="0.65"/><rect x="372.6" y="100.4" width="1" height="1" fill="#f0c070" opacity="0.85"/><rect x="451.4" y="71.6" width="1" height="1" fill="#ffd890" opacity="0.89"/><rect x="416.4" y="37.2" width="1" height="1" fill="#e8a850" opacity="0.97"/><rect x="183.0" y="95.2" width="1" height="1" fill="#f0c070" opacity="0.74"/><rect x="254.6" y="78.9" width="1" height="1" fill="#e8a850" opacity="0.56"/><rect x="336.0" y="31.1" width="1" height="1" fill="#e8a850" opacity="0.53"/><rect x="378.6" y="29.1" width="1" height="1" fill="#e8a850" opacity="0.78"/><rect x="421.7" y="26.5" width="1" height="1" fill="#ffd890" opacity="0.82"/><rect x="484.7" y="84.0" width="1" height="1" fill="#f0c070" opacity="0.76"/><rect x="274.4" y="78.6" width="1" height="1" fill="#f0c070" opacity="0.95"/><rect x="372.7" y="39.5" width="1" height="1" fill="#f0c070" opacity="0.95"/><rect x="261.9" y="97.6" width="1" height="1" fill="#e8a850" opacity="0.52"/><rect x="153.0" y="84.5" width="1" height="1" fill="#e8a850" opacity="0.58"/><rect x="188.6" y="39.8" width="1" height="1" fill="#ffd890" opacity="0.87"/><rect x="363.7" y="68.4" width="1" height="1" fill="#f0c070" opacity="0.93"/><rect x="314.1" y="64.3" width="1" height="1" fill="#ffd890" opacity="0.59"/><rect x="510.5" y="35.8" width="1" height="1" fill="#e8a850" opacity="0.96"/><rect x="516.9" y="81.8" width="1" height="1" fill="#ffd890" opacity="0.89"/><rect x="478.2" y="91.5" width="1" height="1" fill="#e8a850" opacity="0.61"/><rect x="502.5" y="72.4" width="1" height="1" fill="#f0c070" opacity="0.52"/><rect x="500.0" y="62.1" width="1" height="1" fill="#e8a850" opacity="0.95"/><rect x="342.9" y="71.9" width="1" height="1" fill="#f0c070" opacity="0.86"/><rect x="258.7" y="55.8" width="1" height="1" fill="#f0c070" opacity="0.83"/><rect x="133.7" y="96.3" width="1" height="1" fill="#ffd890" opacity="0.89"/><rect x="277.9" y="88.4" width="1" height="1" fill="#ffd890" opacity="0.99"/><rect x="430.9" y="37.6" width="1" height="1" fill="#f0c070" opacity="0.67"/><rect x="356.2" y="28.9" width="1" height="1" fill="#ffd890" opacity="0.57"/><rect x="425.9" y="68.3" width="1" height="1" fill="#f0c070" opacity="0.91"/><rect x="170.8" y="86.7" width="1" height="1" fill="#ffd890" opacity="0.79"/><rect x="459.5" y="10.4" width="1" height="1" fill="#e8a850" opacity="0.87"/><rect x="401.4" y="64.0" width="1" height="1" fill="#e8a850" opacity="0.84"/><rect x="224.9" y="49.7" width="1" height="1" fill="#e8a850" opacity="0.84"/><rect x="175.1" y="75.0" width="1" height="1" fill="#e8a850" opacity="0.90"/><rect x="425.9" y="15.9" width="1" height="1" fill="#f0c070" opacity="0.91"/><rect x="379.9" y="97.5" width="1" height="1" fill="#ffd890" opacity="0.99"/><rect x="201.9" y="67.0" width="1" height="1" fill="#ffd890" opacity="0.97"/><rect x="221.0" y="68.2" width="1" height="1" fill="#ffd890" opacity="0.56"/><rect x="251.1" y="33.0" width="1" height="1" fill="#ffd890" opacity="0.72"/><rect x="213.3" y="92.4" width="1" height="1" fill="#ffd890" opacity="0.92"/><rect x="161.9" y="66.6" width="1" height="1" fill="#f0c070" opacity="0.73"/><rect x="199.3" y="92.0" width="1" height="1" fill="#ffd890" opacity="0.50"/><rect x="462.7" y="97.6" width="1" height="1" fill="#f0c070" opacity="0.53"/><rect x="415.4" y="8.9" width="1" height="1" fill="#f0c070" opacity="0.77"/><rect x="223.2" y="17.0" width="1" height="1" fill="#f0c070" opacity="0.99"/><rect x="186.0" y="106.8" width="1" height="1" fill="#f0c070" opacity="0.61"/><rect x="310.6" y="30.1" width="1" height="1" fill="#e8a850" opacity="0.66"/><rect x="277.7" y="74.3" width="1" height="1" fill="#ffd890" opacity="0.71"/><rect x="438.5" y="15.6" width="1" height="1" fill="#ffd890" opacity="0.77"/><rect x="478.9" y="82.6" width="1" height="1" fill="#f0c070" opacity="0.96"/><rect x="425.3" y="112.7" width="1" height="1" fill="#e8a850" opacity="0.95"/><rect x="306.4" y="59.9" width="1" height="1" fill="#e8a850" opacity="0.81"/><rect x="322.0" y="58.2" width="1" height="1" fill="#ffd890" opacity="0.68"/><rect x="512.5" y="62.7" width="1" height="1" fill="#e8a850" opacity="0.73"/><rect x="309.0" y="25.5" width="1" height="1" fill="#f0c070" opacity="0.71"/><rect x="257.4" y="83.9" width="1" height="1" fill="#f0c070" opacity="0.74"/><rect x="265.5" y="93.3" width="1" height="1" fill="#e8a850" opacity="0.91"/><rect x="494.9" y="22.6" width="1" height="1" fill="#ffd890" opacity="0.67"/><rect x="355.5" y="34.2" width="1" height="1" fill="#f0c070" opacity="0.98"/><rect x="222.8" y="101.5" width="1" height="1" fill="#ffd890" opacity="0.82"/><rect x="454.2" y="2.1" width="1" height="1" fill="#e8a850" opacity="0.58"/><rect x="454.3" y="82.5" width="1" height="1" fill="#e8a850" opacity="0.93"/><rect x="491.6" y="30.7" width="1" height="1" fill="#f0c070" opacity="0.81"/><rect x="257.3" y="10.8" width="1" height="1" fill="#f0c070" opacity="0.98"/><rect x="333.0" y="55.5" width="1" height="1" fill="#f0c070" opacity="0.68"/><rect x="207.6" y="23.4" width="1" height="1" fill="#f0c070" opacity="0.86"/><rect x="198.0" y="36.8" width="1" height="1" fill="#e8a850" opacity="0.64"/><rect x="331.5" y="80.8" width="1" height="1" fill="#f0c070" opacity="0.73"/><rect x="157.1" y="102.9" width="1" height="1" fill="#e8a850" opacity="0.96"/><rect x="470.8" y="61.8" width="1" height="1" fill="#ffd890" opacity="0.51"/><rect x="451.7" y="74.1" width="1" height="1" fill="#ffd890" opacity="0.76"/><rect x="163.9" y="103.3" width="1" height="1" fill="#ffd890" opacity="0.96"/><rect x="268.8" y="18.8" width="1" height="1" fill="#ffd890" opacity="0.70"/><rect x="435.4" y="14.1" width="1" height="1" fill="#ffd890" opacity="0.50"/><rect x="250.3" y="10.5" width="1" height="1" fill="#f0c070" opacity="0.50"/><rect x="358.1" y="102.0" width="1" height="1" fill="#ffd890" opacity="0.70"/><rect x="191.0" y="101.1" width="1" height="1" fill="#ffd890" opacity="0.79"/><rect x="494.8" y="10.0" width="1" height="1" fill="#e8a850" opacity="0.98"/><rect x="407.1" y="109.5" width="1" height="1" fill="#e8a850" opacity="0.93"/><rect x="287.7" y="36.5" width="1" height="1" fill="#f0c070" opacity="0.72"/><rect x="260.9" y="107.0" width="1" height="1" fill="#f0c070" opacity="0.57"/><rect x="187.6" y="28.9" width="1" height="1" fill="#e8a850" opacity="0.71"/><rect x="247.2" y="52.0" width="1" height="1" fill="#f0c070" opacity="0.91"/><rect x="273.3" y="76.7" width="1" height="1" fill="#e8a850" opacity="0.83"/><rect x="498.9" y="97.2" width="1" height="1" fill="#e8a850" opacity="0.80"/><rect x="519.0" y="77.0" width="1" height="1" fill="#e8a850" opacity="0.92"/><rect x="224.3" y="14.9" width="1" height="1" fill="#ffd890" opacity="0.77"/><rect x="285.2" y="14.4" width="1" height="1" fill="#ffd890" opacity="0.58"/><rect x="367.4" y="6.3" width="1" height="1" fill="#ffd890" opacity="0.54"/><rect x="447.5" y="36.3" width="1" height="1" fill="#e8a850" opacity="0.90"/><rect x="472.6" y="30.7" width="1" height="1" fill="#e8a850" opacity="0.54"/><rect x="287.9" y="16.8" width="1" height="1" fill="#f0c070" opacity="0.76"/><rect x="329.0" y="10.8" width="1" height="1" fill="#f0c070" opacity="0.91"/><rect x="489.8" y="110.8" width="1" height="1" fill="#e8a850" opacity="0.99"/><rect x="318.4" y="107.8" width="1" height="1" fill="#ffd890" opacity="0.84"/><rect x="430.8" y="13.2" width="1" height="1" fill="#ffd890" opacity="0.83"/><rect x="208.9" y="18.4" width="1" height="1" fill="#ffd890" opacity="0.68"/><rect x="424.3" y="28.2" width="1" height="1" fill="#ffd890" opacity="0.61"/><rect x="507.0" y="78.2" width="1" height="1" fill="#ffd890" opacity="0.96"/><rect x="176.8" y="47.2" width="1" height="1" fill="#f0c070" opacity="0.72"/><rect x="145.4" y="54.1" width="1" height="1" fill="#e8a850" opacity="0.71"/><rect x="377.3" y="5.6" width="1" height="1" fill="#e8a850" opacity="0.60"/><rect x="414.8" y="83.8" width="1" height="1" fill="#e8a850" opacity="0.77"/><rect x="340.9" y="59.3" width="1" height="1" fill="#e8a850" opacity="0.58"/><rect x="351.2" y="22.6" width="1" height="1" fill="#ffd890" opacity="0.74"/><rect x="412.4" y="76.6" width="1" height="1" fill="#ffd890" opacity="0.89"/><rect x="276.1" y="24.0" width="1" height="1" fill="#f0c070" opacity="0.58"/><rect x="237.9" y="80.2" width="1" height="1" fill="#e8a850" opacity="0.54"/><rect x="156.5" y="100.8" width="1" height="1" fill="#e8a850" opacity="0.62"/><rect x="427.9" y="3.8" width="1" height="1" fill="#e8a850" opacity="0.64"/><rect x="492.2" y="73.9" width="1" height="1" fill="#e8a850" opacity="0.61"/><rect x="488.6" y="61.3" width="1" height="1" fill="#f0c070" opacity="0.98"/><rect x="182.1" y="109.6" width="1" height="1" fill="#e8a850" opacity="0.90"/><rect x="343.6" y="27.7" width="1" height="1" fill="#ffd890" opacity="0.97"/><rect x="233.5" y="54.5" width="1" height="1" fill="#f0c070" opacity="0.90"/><rect x="477.2" y="40.9" width="1" height="1" fill="#f0c070" opacity="0.87"/><rect x="319.6" y="20.0" width="1" height="1" fill="#e8a850" opacity="0.94"/><rect x="163.7" y="57.3" width="1" height="1" fill="#f0c070" opacity="0.79"/><rect x="430.8" y="91.3" width="1" height="1" fill="#e8a850" opacity="0.86"/><rect x="246.7" y="55.1" width="1" height="1" fill="#ffd890" opacity="0.76"/><rect x="438.1" y="99.6" width="1" height="1" fill="#e8a850" opacity="0.68"/><rect x="378.2" y="62.2" width="1" height="1" fill="#ffd890" opacity="0.62"/><rect x="284.7" y="28.9" width="1" height="1" fill="#e8a850" opacity="0.86"/><rect x="139.3" y="66.8" width="1" height="1" fill="#e8a850" opacity="0.61"/><rect x="244.9" y="45.6" width="1" height="1" fill="#f0c070" opacity="0.72"/><rect x="197.0" y="39.2" width="1" height="1" fill="#f0c070" opacity="0.86"/><rect x="380.2" y="45.2" width="1" height="1" fill="#ffd890" opacity="0.77"/><rect x="178.5" y="31.6" width="1" height="1" fill="#ffd890" opacity="0.50"/><rect x="278.5" y="63.8" width="1" height="1" fill="#e8a850" opacity="0.65"/><rect x="500.4" y="105.1" width="1" height="1" fill="#e8a850" opacity="0.80"/><rect x="332.8" y="56.7" width="1" height="1" fill="#f0c070" opacity="0.83"/><rect x="377.3" y="95.5" width="1" height="1" fill="#ffd890" opacity="0.69"/><rect x="498.2" y="11.6" width="1" height="1" fill="#e8a850" opacity="0.51"/><rect x="368.3" y="108.1" width="1" height="1" fill="#ffd890" opacity="0.61"/><rect x="389.6" y="82.9" width="1" height="1" fill="#f0c070" opacity="0.59"/><rect x="264.6" y="73.6" width="1" height="1" fill="#ffd890" opacity="0.64"/><rect x="477.0" y="45.4" width="1" height="1" fill="#ffd890" opacity="0.73"/><rect x="253.1" y="77.5" width="1" height="1" fill="#ffd890" opacity="0.84"/><rect x="490.5" y="88.3" width="1" height="1" fill="#e8a850" opacity="0.62"/><rect x="128.6" y="108.3" width="1" height="1" fill="#ffd890" opacity="0.67"/><rect x="498.8" y="33.3" width="1" height="1" fill="#e8a850" opacity="0.87"/><rect x="347.7" y="22.4" width="1" height="1" fill="#f0c070" opacity="0.76"/><rect x="212.3" y="86.3" width="1" height="1" fill="#e8a850" opacity="0.62"/><rect x="460.1" y="50.5" width="1" height="1" fill="#ffd890" opacity="0.74"/><rect x="242.4" y="38.4" width="1" height="1" fill="#f0c070" opacity="0.55"/><rect x="89.5" y="98.3" width="1" height="1" fill="#ffd890" opacity="0.97"/><rect x="448.8" y="17.4" width="1" height="1" fill="#f0c070" opacity="0.91"/><rect x="494.6" y="62.7" width="1" height="1" fill="#f0c070" opacity="0.86"/><rect x="517.8" y="5.7" width="1" height="1" fill="#ffd890" opacity="0.99"/><rect x="454.2" y="16.6" width="1" height="1" fill="#e8a850" opacity="0.53"/><rect x="159.6" y="74.4" width="1" height="1" fill="#f0c070" opacity="0.86"/><rect x="306.2" y="38.1" width="1" height="1" fill="#f0c070" opacity="0.74"/><rect x="318.5" y="95.7" width="1" height="1" fill="#f0c070" opacity="0.65"/><rect x="467.3" y="51.9" width="1" height="1" fill="#f0c070" opacity="0.58"/><rect x="224.0" y="109.5" width="1" height="1" fill="#ffd890" opacity="0.92"/><rect x="427.3" y="62.7" width="1" height="1" fill="#ffd890" opacity="0.67"/><rect x="519.5" y="83.3" width="1" height="1" fill="#f0c070" opacity="0.67"/><rect x="166.0" y="74.0" width="1" height="1" fill="#ffd890" opacity="0.58"/><rect x="164.1" y="56.6" width="1" height="1" fill="#f0c070" opacity="0.66"/><rect x="333.9" y="22.8" width="1" height="1" fill="#e8a850" opacity="0.58"/><rect x="339.2" y="107.1" width="1" height="1" fill="#e8a850" opacity="0.67"/><rect x="164.1" y="98.9" width="1" height="1" fill="#e8a850" opacity="0.60"/><rect x="299.9" y="96.9" width="1" height="1" fill="#ffd890" opacity="0.94"/><rect x="141.6" y="89.2" width="1" height="1" fill="#f0c070" opacity="0.90"/><rect x="218.6" y="54.0" width="1" height="1" fill="#f0c070" opacity="0.97"/><rect x="268.0" y="65.4" width="1" height="1" fill="#e8a850" opacity="0.93"/><rect x="439.1" y="28.0" width="1" height="1" fill="#e8a850" opacity="0.63"/><rect x="399.1" y="90.3" width="1" height="1" fill="#ffd890" opacity="0.54"/><rect x="392.5" y="62.8" width="1" height="1" fill="#ffd890" opacity="0.84"/><rect x="246.6" y="21.0" width="1" height="1" fill="#e8a850" opacity="0.65"/><rect x="262.8" y="48.6" width="1" height="1" fill="#e8a850" opacity="0.64"/><rect x="279.6" y="25.1" width="1" height="1" fill="#f0c070" opacity="0.75"/><rect x="327.7" y="60.6" width="1" height="1" fill="#ffd890" opacity="0.73"/><rect x="299.4" y="53.6" width="1" height="1" fill="#e8a850" opacity="0.52"/><rect x="444.5" y="10.4" width="1" height="1" fill="#f0c070" opacity="0.56"/><rect x="441.0" y="41.6" width="1" height="1" fill="#e8a850" opacity="0.85"/><rect x="450.4" y="74.9" width="1" height="1" fill="#f0c070" opacity="0.81"/><rect x="284.4" y="28.7" width="1" height="1" fill="#f0c070" opacity="0.90"/><rect x="171.1" y="76.6" width="1" height="1" fill="#ffd890" opacity="0.58"/><rect x="297.7" y="1.7" width="1" height="1" fill="#f0c070" opacity="0.55"/><rect x="337.7" y="50.9" width="1" height="1" fill="#ffd890" opacity="0.56"/><rect x="492.7" y="57.3" width="1" height="1" fill="#e8a850" opacity="0.64"/><rect x="283.1" y="27.9" width="1" height="1" fill="#ffd890" opacity="0.86"/><rect x="249.9" y="96.0" width="1" height="1" fill="#ffd890" opacity="0.66"/><rect x="501.7" y="2.2" width="1" height="1" fill="#f0c070" opacity="0.61"/><rect x="283.1" y="5.3" width="1" height="1" fill="#f0c070" opacity="0.66"/><rect x="337.6" y="90.4" width="1" height="1" fill="#f0c070" opacity="0.82"/><rect x="352.0" y="99.4" width="1" height="1" fill="#e8a850" opacity="0.89"/><rect x="259.2" y="39.5" width="1" height="1" fill="#e8a850" opacity="0.58"/><rect x="361.1" y="34.0" width="1" height="1" fill="#ffd890" opacity="1.00"/><rect x="303.2" y="67.4" width="1" height="1" fill="#f0c070" opacity="0.87"/><rect x="365.9" y="1.9" width="1" height="1" fill="#e8a850" opacity="0.68"/><rect x="266.1" y="14.2" width="1" height="1" fill="#f0c070" opacity="0.88"/><rect x="192.1" y="46.0" width="1" height="1" fill="#f0c070" opacity="0.63"/><rect x="297.7" y="44.1" width="1" height="1" fill="#e8a850" opacity="0.57"/><rect x="168.2" y="59.1" width="1" height="1" fill="#ffd890" opacity="0.90"/><rect x="189.4" y="37.3" width="1" height="1" fill="#e8a850" opacity="0.68"/><rect x="245.5" y="90.1" width="1" height="1" fill="#f0c070" opacity="0.97"/><rect x="374.9" y="32.1" width="1" height="1" fill="#e8a850" opacity="0.52"/><rect x="510.6" y="103.3" width="1" height="1" fill="#e8a850" opacity="0.95"/><rect x="335.1" y="52.6" width="1" height="1" fill="#ffd890" opacity="0.82"/><rect x="457.1" y="67.8" width="1" height="1" fill="#f0c070" opacity="0.66"/><rect x="321.2" y="100.7" width="1" height="1" fill="#ffd890" opacity="0.85"/><rect x="421.6" y="29.5" width="1" height="1" fill="#f0c070" opacity="0.50"/><rect x="497.2" y="19.2" width="1" height="1" fill="#e8a850" opacity="0.58"/><rect x="305.3" y="47.3" width="1" height="1" fill="#e8a850" opacity="0.95"/><rect x="152.7" y="52.7" width="1" height="1" fill="#e8a850" opacity="0.86"/><rect x="336.7" y="1.4" width="1" height="1" fill="#f0c070" opacity="0.77"/><rect x="311.5" y="106.2" width="1" height="1" fill="#e8a850" opacity="0.78"/><rect x="485.0" y="112.4" width="1" height="1" fill="#ffd890" opacity="0.67"/><rect x="351.4" y="39.7" width="1" height="1" fill="#ffd890" opacity="0.80"/><rect x="429.5" y="73.3" width="1" height="1" fill="#ffd890" opacity="0.72"/><rect x="223.2" y="48.5" width="1" height="1" fill="#ffd890" opacity="0.67"/><rect x="396.8" y="44.8" width="1" height="1" fill="#ffd890" opacity="0.71"/><rect x="309.5" y="55.9" width="1" height="1" fill="#e8a850" opacity="0.50"/><rect x="413.2" y="90.7" width="1" height="1" fill="#f0c070" opacity="0.97"/><rect x="389.9" y="52.7" width="1" height="1" fill="#e8a850" opacity="0.56"/><rect x="247.5" y="67.4" width="1" height="1" fill="#f0c070" opacity="0.86"/><rect x="419.9" y="17.2" width="1" height="1" fill="#f0c070" opacity="0.75"/><rect x="217.1" y="99.7" width="1" height="1" fill="#e8a850" opacity="0.96"/><rect x="358.0" y="29.5" width="1" height="1" fill="#ffd890" opacity="0.70"/><rect x="410.4" y="72.4" width="1" height="1" fill="#ffd890" opacity="0.77"/><rect x="473.8" y="68.1" width="1" height="1" fill="#ffd890" opacity="0.93"/><rect x="402.5" y="112.1" width="1" height="1" fill="#e8a850" opacity="0.61"/><rect x="509.4" y="25.0" width="1" height="1" fill="#e8a850" opacity="0.65"/><rect x="376.8" y="41.9" width="1" height="1" fill="#e8a850" opacity="1.00"/><rect x="352.1" y="11.4" width="1" height="1" fill="#e8a850" opacity="0.55"/><rect x="310.8" y="14.8" width="1" height="1" fill="#e8a850" opacity="0.66"/><rect x="376.7" y="50.3" width="1" height="1" fill="#ffd890" opacity="0.87"/><rect x="192.4" y="106.0" width="1" height="1" fill="#ffd890" opacity="0.62"/><rect x="88.7" y="107.5" width="1" height="1" fill="#ffd890" opacity="0.62"/><rect x="467.0" y="67.8" width="1" height="1" fill="#f0c070" opacity="0.95"/><rect x="430.5" y="43.5" width="1" height="1" fill="#e8a850" opacity="0.75"/><rect x="110.1" y="61.2" width="1" height="1" fill="#ffd890" opacity="0.62"/><rect x="274.4" y="18.4" width="1" height="1" fill="#e8a850" opacity="0.66"/><rect x="300.1" y="9.2" width="1" height="1" fill="#f0c070" opacity="0.61"/><rect x="492.3" y="103.8" width="1" height="1" fill="#f0c070" opacity="0.64"/><rect x="380.7" y="7.9" width="1" height="1" fill="#ffd890" opacity="0.85"/><rect x="494.9" y="89.2" width="1" height="1" fill="#e8a850" opacity="0.50"/><rect x="148.8" y="78.4" width="1" height="1" fill="#e8a850" opacity="0.76"/><rect x="95.9" y="92.4" width="1" height="1" fill="#ffd890" opacity="0.82"/><rect x="353.6" y="14.4" width="1" height="1" fill="#e8a850" opacity="0.87"/><rect x="178.2" y="90.2" width="1" height="1" fill="#ffd890" opacity="0.73"/><rect x="413.7" y="112.5" width="1" height="1" fill="#ffd890" opacity="0.56"/><rect x="304.5" y="15.6" width="1" height="1" fill="#ffd890" opacity="0.69"/><rect x="458.0" y="26.9" width="1" height="1" fill="#e8a850" opacity="0.96"/><rect x="520.3" y="59.2" width="1" height="1" fill="#f0c070" opacity="0.86"/><rect x="428.8" y="111.1" width="1" height="1" fill="#ffd890" opacity="0.80"/><rect x="117.4" y="90.0" width="1" height="1" fill="#ffd890" opacity="0.71"/><rect x="321.6" y="87.2" width="1" height="1" fill="#f0c070" opacity="0.74"/><rect x="275.5" y="3.3" width="1" height="1" fill="#e8a850" opacity="0.62"/><rect x="337.5" y="74.4" width="1" height="1" fill="#e8a850" opacity="0.56"/><rect x="195.6" y="99.9" width="1" height="1" fill="#ffd890" opacity="0.56"/><rect x="338.8" y="55.0" width="1" height="1" fill="#f0c070" opacity="0.67"/><rect x="414.5" y="17.4" width="1" height="1" fill="#ffd890" opacity="0.65"/><rect x="449.3" y="48.2" width="1" height="1" fill="#f0c070" opacity="0.73"/><rect x="438.4" y="47.9" width="1" height="1" fill="#f0c070" opacity="0.81"/><rect x="308.8" y="84.7" width="1" height="1" fill="#e8a850" opacity="0.56"/><rect x="386.7" y="20.2" width="1" height="1" fill="#ffd890" opacity="0.85"/><rect x="492.1" y="108.1" width="1" height="1" fill="#e8a850" opacity="0.57"/><rect x="481.5" y="31.6" width="1" height="1" fill="#ffd890" opacity="0.61"/><rect x="471.9" y="13.8" width="1" height="1" fill="#e8a850" opacity="0.77"/><rect x="360.8" y="75.0" width="1" height="1" fill="#e8a850" opacity="0.84"/><rect x="371.3" y="71.1" width="1" height="1" fill="#f0c070" opacity="0.81"/><rect x="490.3" y="74.3" width="1" height="1" fill="#ffd890" opacity="0.91"/><rect x="300.5" y="29.1" width="1" height="1" fill="#f0c070" opacity="0.73"/><rect x="385.4" y="61.3" width="1" height="1" fill="#f0c070" opacity="0.88"/><rect x="260.6" y="38.3" width="1" height="1" fill="#f0c070" opacity="0.61"/><rect x="522.2" y="59.8" width="1" height="1" fill="#e8a850" opacity="0.75"/><rect x="453.8" y="41.4" width="1" height="1" fill="#ffd890" opacity="0.57"/><rect x="512.5" y="83.0" width="1" height="1" fill="#e8a850" opacity="0.60"/><rect x="303.9" y="1.4" width="1" height="1" fill="#e8a850" opacity="0.55"/><rect x="464.5" y="62.3" width="1" height="1" fill="#e8a850" opacity="0.72"/><rect x="270.7" y="0.9" width="1" height="1" fill="#ffd890" opacity="0.87"/><rect x="318.6" y="97.3" width="1" height="1" fill="#f0c070" opacity="0.94"/><rect x="225.1" y="91.2" width="1" height="1" fill="#ffd890" opacity="0.87"/><rect x="391.1" y="17.6" width="1" height="1" fill="#e8a850" opacity="0.63"/><rect x="209.7" y="35.8" width="1" height="1" fill="#ffd890" opacity="0.50"/><rect x="300.4" y="57.4" width="1" height="1" fill="#f0c070" opacity="0.66"/><rect x="373.4" y="54.0" width="1" height="1" fill="#f0c070" opacity="0.58"/><rect x="468.7" y="35.3" width="1" height="1" fill="#f0c070" opacity="0.58"/><rect x="496.5" y="63.7" width="1" height="1" fill="#ffd890" opacity="0.66"/><rect x="509.9" y="42.3" width="1" height="1" fill="#e8a850" opacity="0.76"/><rect x="128.4" y="82.6" width="1" height="1" fill="#e8a850" opacity="0.59"/><rect x="158.1" y="84.0" width="1" height="1" fill="#ffd890" opacity="0.70"/><rect x="394.1" y="52.2" width="1" height="1" fill="#f0c070" opacity="0.79"/><rect x="214.7" y="97.8" width="1" height="1" fill="#ffd890" opacity="0.90"/><rect x="404.4" y="3.7" width="1" height="1" fill="#ffd890" opacity="0.81"/><rect x="367.6" y="21.7" width="1" height="1" fill="#f0c070" opacity="0.66"/><rect x="279.6" y="5.9" width="1" height="1" fill="#f0c070" opacity="0.57"/><rect x="371.2" y="27.3" width="1" height="1" fill="#ffd890" opacity="0.92"/><rect x="305.3" y="84.7" width="1" height="1" fill="#f0c070" opacity="0.78"/><rect x="221.6" y="107.3" width="1" height="1" fill="#f0c070" opacity="0.58"/><rect x="209.8" y="103.0" width="1" height="1" fill="#ffd890" opacity="0.67"/><rect x="315.6" y="100.3" width="1" height="1" fill="#ffd890" opacity="0.73"/><rect x="320.8" y="47.6" width="1" height="1" fill="#e8a850" opacity="0.63"/><rect x="434.1" y="83.3" width="1" height="1" fill="#e8a850" opacity="0.71"/><rect x="239.8" y="86.8" width="1" height="1" fill="#ffd890" opacity="0.88"/><rect x="404.1" y="103.4" width="1" height="1" fill="#e8a850" opacity="0.65"/><rect x="223.5" y="98.3" width="1" height="1" fill="#ffd890" opacity="0.78"/><rect x="422.2" y="70.4" width="1" height="1" fill="#e8a850" opacity="0.72"/><rect x="502.0" y="90.1" width="1" height="1" fill="#ffd890" opacity="0.52"/><rect x="97.6" y="95.7" width="1" height="1" fill="#ffd890" opacity="0.88"/><rect x="172.0" y="84.3" width="1" height="1" fill="#ffd890" opacity="0.93"/><rect x="154.6" y="101.5" width="1" height="1" fill="#f0c070" opacity="0.60"/><rect x="323.0" y="54.8" width="1" height="1" fill="#e8a850" opacity="0.58"/><rect x="520.3" y="6.6" width="1" height="1" fill="#e8a850" opacity="0.75"/><rect x="299.1" y="7.0" width="1" height="1" fill="#e8a850" opacity="0.75"/><rect x="226.6" y="48.9" width="1" height="1" fill="#f0c070" opacity="0.83"/><rect x="96.9" y="109.8" width="1" height="1" fill="#f0c070" opacity="0.97"/><rect x="400.0" y="17.5" width="1" height="1" fill="#f0c070" opacity="0.73"/><rect x="265.1" y="20.2" width="1" height="1" fill="#e8a850" opacity="0.67"/><rect x="321.8" y="36.0" width="1" height="1" fill="#e8a850" opacity="0.77"/><rect x="254.6" y="58.1" width="1" height="1" fill="#f0c070" opacity="0.90"/><rect x="505.5" y="75.9" width="1" height="1" fill="#e8a850" opacity="0.60"/><rect x="464.1" y="39.4" width="1" height="1" fill="#e8a850" opacity="0.94"/><rect x="105.0" y="94.4" width="1" height="1" fill="#f0c070" opacity="0.84"/><rect x="301.4" y="105.3" width="1" height="1" fill="#e8a850" opacity="0.58"/><rect x="395.9" y="48.6" width="1" height="1" fill="#f0c070" opacity="0.70"/><rect x="302.2" y="106.9" width="1" height="1" fill="#f0c070" opacity="0.85"/><rect x="318.4" y="99.7" width="1" height="1" fill="#e8a850" opacity="0.71"/><rect x="357.9" y="75.5" width="1" height="1" fill="#ffd890" opacity="0.84"/><rect x="151.0" y="96.1" width="1" height="1" fill="#f0c070" opacity="0.71"/><rect x="283.2" y="1.5" width="1" height="1" fill="#e8a850" opacity="0.53"/><rect x="370.7" y="60.4" width="1" height="1" fill="#ffd890" opacity="0.87"/><rect x="463.0" y="56.2" width="1" height="1" fill="#ffd890" opacity="0.63"/><rect x="282.7" y="6.2" width="1" height="1" fill="#e8a850" opacity="0.86"/><rect x="286.6" y="24.6" width="1" height="1" fill="#e8a850" opacity="0.78"/><rect x="518.3" y="99.9" width="1" height="1" fill="#ffd890" opacity="0.56"/><rect x="469.2" y="11.6" width="1" height="1" fill="#f0c070" opacity="0.86"/><rect x="417.6" y="86.7" width="1" height="1" fill="#ffd890" opacity="0.69"/><rect x="187.1" y="103.2" width="1" height="1" fill="#e8a850" opacity="0.61"/><rect x="273.1" y="29.5" width="1" height="1" fill="#ffd890" opacity="0.57"/><rect x="304.9" y="62.3" width="1" height="1" fill="#ffd890" opacity="0.79"/><rect x="216.8" y="62.0" width="1" height="1" fill="#ffd890" opacity="0.58"/><rect x="504.2" y="36.9" width="1" height="1" fill="#f0c070" opacity="0.91"/><rect x="464.8" y="44.4" width="1" height="1" fill="#ffd890" opacity="0.76"/><rect x="242.0" y="17.1" width="1" height="1" fill="#e8a850" opacity="0.69"/><rect x="425.7" y="36.5" width="1" height="1" fill="#ffd890" opacity="0.69"/><rect x="240.6" y="99.6" width="1" height="1" fill="#e8a850" opacity="0.93"/><rect x="365.5" y="96.2" width="1" height="1" fill="#ffd890" opacity="0.56"/><rect x="507.5" y="62.8" width="1" height="1" fill="#ffd890" opacity="0.60"/><rect x="414.2" y="33.2" width="1" height="1" fill="#ffd890" opacity="0.64"/><rect x="254.0" y="107.6" width="1" height="1" fill="#f0c070" opacity="0.66"/><rect x="189.0" y="72.9" width="1" height="1" fill="#ffd890" opacity="0.92"/><rect x="494.3" y="12.4" width="1" height="1" fill="#e8a850" opacity="0.53"/><rect x="472.7" y="104.9" width="1" height="1" fill="#ffd890" opacity="1.00"/><rect x="407.2" y="64.3" width="1" height="1" fill="#ffd890" opacity="0.58"/><rect x="216.2" y="53.0" width="1" height="1" fill="#e8a850" opacity="0.72"/><rect x="166.1" y="60.8" width="1" height="1" fill="#e8a850" opacity="0.82"/><rect x="455.3" y="21.1" width="1" height="1" fill="#e8a850" opacity="0.56"/><rect x="315.9" y="92.5" width="1" height="1" fill="#ffd890" opacity="0.64"/><rect x="345.0" y="66.2" width="1" height="1" fill="#e8a850" opacity="0.53"/><rect x="378.4" y="45.3" width="1" height="1" fill="#e8a850" opacity="0.79"/><rect x="353.1" y="80.4" width="1" height="1" fill="#f0c070" opacity="0.83"/><rect x="307.7" y="48.7" width="1" height="1" fill="#ffd890" opacity="0.75"/><rect x="325.7" y="75.3" width="1" height="1" fill="#ffd890" opacity="0.73"/><rect x="212.2" y="53.3" width="1" height="1" fill="#e8a850" opacity="0.79"/><rect x="355.8" y="95.7" width="1" height="1" fill="#ffd890" opacity="0.91"/><rect x="443.8" y="66.7" width="1" height="1" fill="#f0c070" opacity="0.55"/><rect x="517.8" y="88.5" width="1" height="1" fill="#e8a850" opacity="0.74"/><rect x="321.5" y="2.0" width="1" height="1" fill="#f0c070" opacity="0.54"/><rect x="179.9" y="69.4" width="1" height="1" fill="#f0c070" opacity="0.68"/><rect x="274.7" y="74.9" width="1" height="1" fill="#f0c070" opacity="0.90"/><rect x="338.1" y="98.5" width="1" height="1" fill="#ffd890" opacity="0.86"/><rect x="423.0" y="58.7" width="1" height="1" fill="#f0c070" opacity="0.86"/><rect x="342.5" y="112.6" width="1" height="1" fill="#ffd890" opacity="0.66"/><rect x="180.2" y="98.4" width="1" height="1" fill="#ffd890" opacity="0.55"/><rect x="300.7" y="21.4" width="1" height="1" fill="#e8a850" opacity="0.67"/><rect x="302.3" y="41.5" width="1" height="1" fill="#ffd890" opacity="0.64"/><rect x="508.9" y="71.0" width="1" height="1" fill="#f0c070" opacity="0.85"/><rect x="161.5" y="103.1" width="1" height="1" fill="#f0c070" opacity="0.83"/><rect x="379.1" y="109.2" width="1" height="1" fill="#f0c070" opacity="0.86"/><rect x="124.2" y="72.9" width="1" height="1" fill="#ffd890" opacity="0.51"/><rect x="481.6" y="1.5" width="1" height="1" fill="#f0c070" opacity="0.54"/><rect x="445.5" y="5.9" width="1" height="1" fill="#f0c070" opacity="0.59"/><rect x="347.5" y="4.6" width="1" height="1" fill="#e8a850" opacity="0.57"/><rect x="368.3" y="14.6" width="1" height="1" fill="#f0c070" opacity="0.86"/><rect x="318.0" y="112.5" width="1" height="1" fill="#f0c070" opacity="0.83"/><rect x="522.5" y="62.1" width="1" height="1" fill="#f0c070" opacity="0.89"/><rect x="407.3" y="48.8" width="1" height="1" fill="#e8a850" opacity="0.70"/><rect x="479.2" y="33.6" width="1" height="1" fill="#ffd890" opacity="0.67"/><rect x="405.2" y="79.7" width="1" height="1" fill="#f0c070" opacity="0.69"/><rect x="342.4" y="43.0" width="1" height="1" fill="#f0c070" opacity="0.85"/><rect x="280.6" y="53.6" width="1" height="1" fill="#f0c070" opacity="0.85"/><rect x="381.4" y="6.7" width="1" height="1" fill="#f0c070" opacity="0.78"/><rect x="498.3" y="86.8" width="1" height="1" fill="#ffd890" opacity="0.86"/><rect x="420.0" y="57.9" width="1" height="1" fill="#f0c070" opacity="0.71"/><rect x="343.4" y="100.5" width="1" height="1" fill="#ffd890" opacity="0.96"/><rect x="484.3" y="27.1" width="1" height="1" fill="#ffd890" opacity="0.55"/><rect x="334.5" y="52.5" width="1" height="1" fill="#ffd890" opacity="0.97"/><rect x="475.8" y="2.8" width="1" height="1" fill="#ffd890" opacity="0.70"/><rect x="299.1" y="103.3" width="1" height="1" fill="#e8a850" opacity="0.69"/><rect x="442.9" y="24.4" width="1" height="1" fill="#f0c070" opacity="0.60"/><rect x="298.0" y="72.1" width="1" height="1" fill="#e8a850" opacity="0.58"/><rect x="493.6" y="34.0" width="1" height="1" fill="#e8a850" opacity="0.97"/><rect x="512.8" y="71.9" width="1" height="1" fill="#e8a850" opacity="0.77"/><rect x="475.5" y="69.7" width="1" height="1" fill="#ffd890" opacity="0.92"/><rect x="422.4" y="4.9" width="1" height="1" fill="#ffd890" opacity="0.57"/><rect x="176.3" y="90.1" width="1" height="1" fill="#f0c070" opacity="0.65"/><rect x="172.9" y="70.0" width="1" height="1" fill="#ffd890" opacity="0.73"/><rect x="367.6" y="47.4" width="1" height="1" fill="#ffd890" opacity="0.58"/><rect x="404.0" y="37.5" width="1" height="1" fill="#e8a850" opacity="0.79"/><rect x="228.3" y="70.4" width="1" height="1" fill="#f0c070" opacity="0.73"/><rect x="262.0" y="92.8" width="1" height="1" fill="#f0c070" opacity="0.61"/><rect x="374.8" y="33.8" width="1" height="1" fill="#e8a850" opacity="0.94"/><rect x="487.0" y="59.3" width="1" height="1" fill="#e8a850" opacity="0.74"/><rect x="463.7" y="14.6" width="1" height="1" fill="#e8a850" opacity="0.62"/><rect x="284.2" y="96.0" width="1" height="1" fill="#e8a850" opacity="0.74"/><rect x="283.8" y="109.7" width="1" height="1" fill="#e8a850" opacity="0.60"/><rect x="106.5" y="94.3" width="1" height="1" fill="#ffd890" opacity="0.90"/><rect x="311.6" y="82.4" width="1" height="1" fill="#f0c070" opacity="0.83"/><rect x="124.4" y="73.3" width="1" height="1" fill="#f0c070" opacity="0.74"/><rect x="266.9" y="72.8" width="1" height="1" fill="#f0c070" opacity="0.80"/><rect x="515.9" y="58.1" width="1" height="1" fill="#e8a850" opacity="0.56"/><rect x="373.2" y="56.9" width="1" height="1" fill="#f0c070" opacity="0.63"/><rect x="294.9" y="89.2" width="1" height="1" fill="#e8a850" opacity="0.57"/><rect x="242.9" y="70.1" width="1" height="1" fill="#f0c070" opacity="1.00"/><rect x="450.5" y="21.6" width="1" height="1" fill="#ffd890" opacity="0.65"/><rect x="498.9" y="17.9" width="1" height="1" fill="#e8a850" opacity="0.69"/><rect x="182.4" y="75.4" width="1" height="1" fill="#f0c070" opacity="0.84"/><rect x="370.1" y="108.2" width="1" height="1" fill="#e8a850" opacity="0.63"/><rect x="398.1" y="81.5" width="1" height="1" fill="#f0c070" opacity="0.81"/><rect x="307.0" y="102.4" width="1" height="1" fill="#e8a850" opacity="0.51"/><rect x="189.7" y="69.5" width="1" height="1" fill="#ffd890" opacity="0.98"/><rect x="160.1" y="95.8" width="1" height="1" fill="#f0c070" opacity="0.81"/><rect x="292.9" y="5.2" width="1" height="1" fill="#e8a850" opacity="0.58"/><rect x="303.3" y="16.0" width="1" height="1" fill="#f0c070" opacity="0.79"/><rect x="449.0" y="67.7" width="1" height="1" fill="#f0c070" opacity="0.90"/><rect x="146.3" y="60.9" width="1" height="1" fill="#e8a850" opacity="0.58"/><rect x="177.9" y="111.5" width="1" height="1" fill="#ffd890" opacity="0.92"/><rect x="108.3" y="94.5" width="1" height="1" fill="#ffd890" opacity="0.94"/><rect x="210.6" y="111.5" width="1" height="1" fill="#e8a850" opacity="0.95"/><rect x="431.2" y="77.6" width="1" height="1" fill="#e8a850" opacity="0.97"/><rect x="477.8" y="34.0" width="1" height="1" fill="#f0c070" opacity="0.63"/><rect x="396.6" y="101.1" width="1" height="1" fill="#f0c070" opacity="0.96"/><rect x="425.6" y="87.8" width="1" height="1" fill="#e8a850" opacity="0.92"/><rect x="245.7" y="81.6" width="1" height="1" fill="#f0c070" opacity="0.64"/><rect x="137.2" y="110.6" width="1" height="1" fill="#ffd890" opacity="0.89"/><rect x="278.4" y="79.9" width="1" height="1" fill="#ffd890" opacity="0.88"/><rect x="413.1" y="90.3" width="1" height="1" fill="#ffd890" opacity="0.63"/><rect x="390.4" y="103.5" width="1" height="1" fill="#ffd890" opacity="0.94"/><rect x="98.3" y="101.8" width="1" height="1" fill="#f0c070" opacity="0.63"/><rect x="336.0" y="85.2" width="1" height="1" fill="#e8a850" opacity="0.64"/><rect x="243.5" y="73.0" width="1" height="1" fill="#ffd890" opacity="0.58"/><rect x="261.0" y="65.5" width="1" height="1" fill="#f0c070" opacity="0.60"/><rect x="428.3" y="50.0" width="1" height="1" fill="#e8a850" opacity="0.78"/><rect x="267.3" y="37.7" width="1" height="1" fill="#e8a850" opacity="0.83"/><rect x="273.2" y="74.7" width="1" height="1" fill="#ffd890" opacity="0.74"/><rect x="472.1" y="60.4" width="1" height="1" fill="#ffd890" opacity="0.73"/><rect x="331.4" y="24.8" width="1" height="1" fill="#ffd890" opacity="0.54"/><rect x="310.5" y="44.7" width="1" height="1" fill="#e8a850" opacity="0.54"/><rect x="418.9" y="62.6" width="1" height="1" fill="#ffd890" opacity="0.61"/><rect x="441.2" y="18.8" width="1" height="1" fill="#f0c070" opacity="0.83"/><rect x="448.2" y="64.6" width="1" height="1" fill="#f0c070" opacity="0.58"/><rect x="189.9" y="56.6" width="1" height="1" fill="#e8a850" opacity="0.89"/><rect x="93.8" y="86.6" width="1" height="1" fill="#ffd890" opacity="0.94"/><rect x="369.4" y="70.6" width="1" height="1" fill="#f0c070" opacity="0.95"/><rect x="288.6" y="42.2" width="1" height="1" fill="#f0c070" opacity="0.97"/><rect x="485.3" y="96.0" width="1" height="1" fill="#e8a850" opacity="0.97"/><rect x="254.9" y="106.7" width="1" height="1" fill="#f0c070" opacity="0.56"/><rect x="458.4" y="27.3" width="1" height="1" fill="#ffd890" opacity="0.51"/><rect x="370.0" y="67.1" width="1" height="1" fill="#ffd890" opacity="0.77"/><rect x="89.5" y="100.6" width="1" height="1" fill="#f0c070" opacity="0.55"/><rect x="505.7" y="65.2" width="1" height="1" fill="#ffd890" opacity="0.94"/><rect x="206.5" y="35.9" width="1" height="1" fill="#ffd890" opacity="0.82"/><rect x="433.3" y="52.6" width="1" height="1" fill="#ffd890" opacity="0.65"/><rect x="230.0" y="98.1" width="1" height="1" fill="#ffd890" opacity="0.84"/><rect x="353.4" y="97.2" width="1" height="1" fill="#ffd890" opacity="0.78"/><rect x="502.2" y="53.8" width="1" height="1" fill="#ffd890" opacity="0.58"/><rect x="500.3" y="83.6" width="1" height="1" fill="#ffd890" opacity="0.56"/><rect x="384.9" y="6.2" width="1" height="1" fill="#e8a850" opacity="0.62"/><rect x="369.9" y="58.1" width="1" height="1" fill="#e8a850" opacity="0.85"/><rect x="506.3" y="10.5" width="1" height="1" fill="#ffd890" opacity="0.54"/><rect x="263.0" y="61.9" width="1" height="1" fill="#ffd890" opacity="0.61"/><rect x="431.8" y="55.1" width="1" height="1" fill="#e8a850" opacity="0.84"/><rect x="375.7" y="33.6" width="1" height="1" fill="#e8a850" opacity="0.66"/><rect x="407.4" y="10.4" width="1" height="1" fill="#ffd890" opacity="0.64"/><rect x="479.4" y="58.4" width="1" height="1" fill="#ffd890" opacity="0.80"/><rect x="348.7" y="21.2" width="1" height="1" fill="#f0c070" opacity="0.74"/><rect x="377.1" y="45.6" width="1" height="1" fill="#ffd890" opacity="0.85"/><rect x="362.4" y="93.2" width="1" height="1" fill="#ffd890" opacity="0.87"/><rect x="363.7" y="53.5" width="1" height="1" fill="#f0c070" opacity="0.51"/><rect x="273.8" y="93.9" width="1" height="1" fill="#e8a850" opacity="0.68"/><rect x="306.7" y="44.9" width="1" height="1" fill="#f0c070" opacity="0.95"/><rect x="279.9" y="20.7" width="1" height="1" fill="#ffd890" opacity="0.60"/><rect x="203.6" y="63.0" width="1" height="1" fill="#ffd890" opacity="0.55"/><rect x="111.9" y="95.9" width="1" height="1" fill="#e8a850" opacity="0.51"/><rect x="431.1" y="42.6" width="1" height="1" fill="#e8a850" opacity="0.83"/><rect x="344.3" y="67.6" width="1" height="1" fill="#e8a850" opacity="0.66"/><rect x="311.8" y="37.1" width="1" height="1" fill="#f0c070" opacity="0.77"/><rect x="405.0" y="21.6" width="1" height="1" fill="#ffd890" opacity="0.65"/><rect x="273.2" y="77.9" width="1" height="1" fill="#e8a850" opacity="0.62"/><rect x="236.2" y="97.1" width="1" height="1" fill="#ffd890" opacity="0.62"/><rect x="456.3" y="42.3" width="1" height="1" fill="#e8a850" opacity="0.86"/><rect x="375.8" y="104.0" width="1" height="1" fill="#ffd890" opacity="0.98"/><rect x="218.5" y="90.6" width="1" height="1" fill="#e8a850" opacity="0.61"/><rect x="390.0" y="110.9" width="1" height="1" fill="#e8a850" opacity="0.76"/><rect x="339.9" y="89.7" width="1" height="1" fill="#ffd890" opacity="0.72"/><rect x="258.0" y="6.9" width="1" height="1" fill="#f0c070" opacity="0.79"/><rect x="20.9" y="64.7" width="1" height="1" fill="#f0c070" opacity=".9"/><rect x="15.6" y="111.4" width="1" height="1" fill="#f0c070" opacity=".9"/><rect x="41.3" y="57.0" width="1" height="1" fill="#f0c070" opacity=".9"/><rect x="13.1" y="89.2" width="1" height="1" fill="#f0c070" opacity=".9"/><rect x="35.8" y="112.4" width="1" height="1" fill="#f0c070" opacity=".9"/><rect x="63.2" y="60.1" width="1" height="1" fill="#f0c070" opacity=".9"/><rect x="26.7" y="91.9" width="1" height="1" fill="#f0c070" opacity=".9"/><rect x="47.9" y="101.4" width="1" height="1" fill="#f0c070" opacity=".9"/><rect x="23.6" y="101.3" width="1" height="1" fill="#f0c070" opacity=".9"/><rect x="41.8" y="110.8" width="1" height="1" fill="#f0c070" opacity=".9"/><rect x="22.7" y="91.3" width="1" height="1" fill="#f0c070" opacity=".9"/><rect x="48.8" y="64.3" width="1" height="1" fill="#f0c070" opacity=".9"/><rect x="10.9" y="74.1" width="1" height="1" fill="#f0c070" opacity=".9"/><rect x="45.6" y="57.9" width="1" height="1" fill="#f0c070" opacity=".9"/><rect x="46.2" y="62.8" width="1" height="1" fill="#f0c070" opacity=".9"/><rect x="13.5" y="71.8" width="1" height="1" fill="#f0c070" opacity=".9"/><rect x="38.4" y="96.9" width="1" height="1" fill="#f0c070" opacity=".9"/><rect x="66.3" y="69.0" width="1" height="1" fill="#f0c070" opacity=".9"/><rect x="6.0" y="104.9" width="1" height="1" fill="#f0c070" opacity=".9"/><rect x="41.3" y="108.4" width="1" height="1" fill="#f0c070" opacity=".9"/><rect x="50.1" y="63.4" width="1" height="1" fill="#f0c070" opacity=".9"/><rect x="25.3" y="68.5" width="1" height="1" fill="#f0c070" opacity=".9"/><rect x="31.5" y="72.3" width="1" height="1" fill="#f0c070" opacity=".9"/><rect x="13.2" y="113.0" width="1" height="1" fill="#f0c070" opacity=".9"/></g></symbol><symbol id="ph4">
<defs><linearGradient id="bsky" x1="0" y1="0" x2="1" y2="1"><stop offset="0" stop-color="#bcd4ec"/><stop offset="0.5" stop-color="#8eb2dc"/><stop offset="1" stop-color="#4f82c4"/></linearGradient></defs>
<rect width="100" height="50" fill="url(#bsky)"/>
<ellipse cx="15" cy="20" rx="15" ry="8" fill="#e0eaf4" opacity=".6"/><ellipse cx="85" cy="25" rx="15" ry="10" fill="#dce6f2" opacity=".5"/>
<path d="M12 50 L46 2 L48 2 L48 50z" fill="#6e7886"/><path d="M52 50 L52 2 L54 2 L88 50z" fill="#8a94a2"/>
<path d="M48 2 L52 2 L52 50 L48 50z" fill="#3a5a8a"/>
<path d="M30 50 L47 10 L47 50z" fill="#9aa2ae" opacity=".5"/><path d="M53 10 L70 50 L53 50z" fill="#a8b0bc" opacity=".5"/>
</symbol></defs></svg>
<div class="a" style="left:74px;top:54px;width:310px;height:1px;background:#ececec"></div>
<div class="a" id="lp"></div>
<div class="a" style="left:89px;top:70px;width:168px;height:34px;background:#fff;border:1px solid #dcdcdc;border-radius:6px"></div>
<svg class="a" style="left:125px;top:82px" width="11" height="11" viewBox="0 0 11 11"><path d="M5.5 0.5 V10.5 M0.5 5.5 H10.5" stroke="#222" stroke-width="2.1"/></svg>
<div class="a" style="left:144px;top:78px;font-size:13px;line-height:18px;color:#333">新建空白页面</div>
<div class="a" style="left:268px;top:70px;width:101px;height:34px;background:#fff;border:1px solid #dcdcdc;border-radius:6px"></div>
<svg class="a" style="left:283px;top:80px" width="15" height="15" viewBox="0 0 15 15"><path d="M4 4.5 V3 a2 2 0 0 1 2-2 h6.2 a2 2 0 0 1 2 2 v9 a2 2 0 0 1-2 2 H6 a2 2 0 0 1-2-2 V10.5" fill="none" stroke="#222" stroke-width="1.6"/><path d="M0.5 7.5 H9.5 M6.5 4.5 L9.5 7.5 L6.5 10.5" fill="none" stroke="#222" stroke-width="1.6"/></svg>
<div class="a" style="left:302px;top:78px;font-size:13px;line-height:18px;color:#333">插入文档</div>
<div class="a" style="left:376px;top:120px;width:6px;height:508px;border-radius:3px;background:#e6e6e6"></div>
<div class="a card" style="top:121px;background:#eceef0"><div class="a" style="left:79px;top:10px;width:110px;height:152px"><div class="a" style="left:0;top:0;width:110px;height:152px;overflow:hidden;background:#f6f7f9"><div class="pg thumbp" style="left:0;top:0;transform:scale(0.18613,0.18765);transform-origin:0 0"><div class="a" style="left:284px;top:0;width:293px;height:631px;background:#f1f2f4"></div>
<div class="a" style="left:262px;top:396px;width:82px;height:18.7px;background:#e8e8e9"></div>
<div class="a" style="left:61.2px;top:71.0px;width:29px;height:25px;overflow:hidden"><div style="width:29px;height:29px;border-radius:50%;background:#ac2a2a"></div><div class="a" style="left:0;top:9px;width:29px;text-align:center;color:#fff;font-size:16px;line-height:18px;letter-spacing:-0.6px">01</div></div><div class="a" style="left:98.0px;top:72.5px;font-size:19px;letter-spacing:0.45px;line-height:22px;color:#ac2a2a;-webkit-text-stroke:0.45px #ac2a2a;white-space:nowrap">万彩公司内刊</div>
<div class="a" style="left:311px;top:72px;width:228px;height:152px;overflow:hidden"><svg width="228" height="152" viewBox="0 0 228 152" preserveAspectRatio="none" style="display:block"><use href="#ph1"/></svg></div>
<div class="tl" style="left:48.0px;top:134.5px;letter-spacing:-0.196px">云展网创致力于为上传者提供文档转换存储服务-上传PDF转换</div>
<div class="tl" style="left:35.0px;top:150.2px;letter-spacing:0.035px">为3D翻页电子书，自动生成链接和二维码，用于微信/网站/电脑/</div>
<div class="tl" style="left:35.0px;top:166.0px;letter-spacing:-0.082px">手机/平板阅读分享。目前已有上百万上传者在云展网上传画册/杂</div>
<div class="tl" style="left:35.0px;top:181.7px;letter-spacing:0.121px">志/内刊/文档等。云展网创立于2014年，致力于为上传者提供文</div>
<div class="tl" style="left:35.0px;top:197.5px;letter-spacing:-0.093px">档转换存储服务-上传PDF转换为3D翻页电子书，自动生成链接和</div>
<div class="tl" style="left:35.0px;top:213.2px;letter-spacing:0.036px">二维码，用于微信/网站/电脑/手机/平板阅读分享。目前已有上百</div>
<div class="tl" style="left:35.0px;top:228.9px;letter-spacing:0.036px">万上传者（包括政府/学校/知名企业等）在云展网上传画册/杂志/</div>
<div class="tl" style="left:35.0px;top:244.7px;letter-spacing:-0.096px">内刊/文档等。云展网致力于为上传者提供文档转换存储服务-上传</div>
<div class="tl" style="left:35.0px;top:260.4px;letter-spacing:-0.079px">PDF转换为3D翻页电子书，自动生成链接和二维码，用于微信/网</div>
<div class="tl" style="left:35.0px;top:276.2px;letter-spacing:0.111px">站/电脑/手机/平板阅读分享。目前已有上百万上传者在云展网上</div>
<div class="tl" style="left:35.0px;top:291.9px;letter-spacing:-0.216px">传画册/杂志/内刊/文档等。</div>
<div class="a" style="left:322.5px;top:260.8px;width:29px;height:25px;overflow:hidden"><div style="width:29px;height:29px;border-radius:50%;background:#ac2a2a"></div><div class="a" style="left:0;top:9px;width:29px;text-align:center;color:#fff;font-size:16px;line-height:18px;letter-spacing:-0.6px">02</div></div><div class="a" style="left:360.0px;top:261.5px;font-size:19px;letter-spacing:0.45px;line-height:22px;color:#ac2a2a;-webkit-text-stroke:0.45px #ac2a2a;white-space:nowrap">万彩公司简介</div>
<div class="tl" style="left:319.4px;top:316.0px;letter-spacing:-0.196px">云展网创致力于为上传者提供文档转换存储服务-上传PDF转换</div>
<div class="tl" style="left:306.4px;top:331.7px;letter-spacing:0.035px">为3D翻页电子书，自动生成链接和二维码，用于微信/网站/电脑/</div>
<div class="tl" style="left:306.4px;top:347.5px;letter-spacing:-0.082px">手机/平板阅读分享。目前已有上百万上传者在云展网上传画册/杂</div>
<div class="tl" style="left:306.4px;top:363.2px;letter-spacing:0.121px">志/内刊/文档等。云展网创立于2014年，致力于为上传者提供文</div>
<div class="tl" style="left:306.4px;top:379.0px;letter-spacing:-0.093px">档转换存储服务-上传PDF转换为3D翻页电子书，自动生成链接和</div>
<div class="tl" style="left:306.4px;top:394.7px;letter-spacing:-0.226px">二维码，用于微信/网站/电脑/手机/平板阅读分享。</div>
<div class="a" style="left:33.6px;top:335.3px;width:228px;height:151.3px;overflow:hidden"><svg width="228" height="151" viewBox="0 0 228 151" preserveAspectRatio="none" style="display:block"><use href="#ph2"/></svg></div>
<div class="tl" style="left:319.4px;top:435.7px;letter-spacing:-0.196px">云展网创致力于为上传者提供文档转换存储服务-上传PDF转换</div>
<div class="tl" style="left:306.4px;top:451.4px;letter-spacing:0.035px">为3D翻页电子书，自动生成链接和二维码，用于微信/网站/电脑/</div>
<div class="tl" style="left:306.4px;top:467.2px;letter-spacing:-0.082px">手机/平板阅读分享。目前已有上百万上传者在云展网上传画册/杂</div>
<div class="tl" style="left:306.4px;top:482.9px;letter-spacing:0.121px">志/内刊/文档等。云展网创立于2014年，致力于为上传者提供文</div>
<div class="tl" style="left:306.4px;top:498.7px;letter-spacing:-0.093px">档转换存储服务-上传PDF转换为3D翻页电子书，自动生成链接和</div>
<div class="tl" style="left:306.4px;top:514.4px;letter-spacing:0.036px">二维码，用于微信/网站/电脑/手机/平板阅读分享。目前已有上百</div>
<div class="tl" style="left:306.4px;top:530.1px;letter-spacing:0.036px">万上传者（包括政府/学校/知名企业等）在云展网上传画册/杂志/</div>
<div class="tl" style="left:306.4px;top:545.9px;letter-spacing:-0.096px">内刊/文档等。云展网致力于为上传者提供文档转换存储服务-上传</div>
<div class="tl" style="left:306.4px;top:561.6px;letter-spacing:-0.079px">PDF转换为3D翻页电子书，自动生成链接和二维码，用于微信/网</div>
<div class="tl" style="left:306.4px;top:577.4px;letter-spacing:0.111px">站/电脑/手机/平板阅读分享。目前已有上百万上传者在云展网上</div>
<div class="tl" style="left:306.4px;top:593.1px;letter-spacing:-0.216px">传画册/杂志/内刊/文档等。</div>
<div class="tl" style="left:48.0px;top:518.9px;letter-spacing:-0.196px">云展网创致力于为上传者提供文档转换存储服务-上传PDF转换</div>
<div class="tl" style="left:35.0px;top:534.6px;letter-spacing:0.035px">为3D翻页电子书，自动生成链接和二维码，用于微信/网站/电脑/</div>
<div class="tl" style="left:35.0px;top:550.4px;letter-spacing:-0.082px">手机/平板阅读分享。目前已有上百万上传者在云展网上传画册/杂</div>
<div class="tl" style="left:35.0px;top:566.1px;letter-spacing:0.121px">志/内刊/文档等。云展网创立于2014年，致力于为上传者提供文</div>
<div class="tl" style="left:35.0px;top:581.9px;letter-spacing:-0.093px">档转换存储服务-上传PDF转换为3D翻页电子书，自动生成链接和</div>
<div class="tl" style="left:35.0px;top:597.6px;letter-spacing:-0.226px">二维码，用于微信/网站/电脑/手机/平板阅读分享。</div>
<div class="a" style="left:22.7px;top:631px;width:523.2px;height:113px;overflow:hidden"><svg width="523" height="113" viewBox="0 0 523 113" preserveAspectRatio="none" style="display:block"><use href="#ph3"/></svg></div>
<div class="a" style="left:23px;top:778.5px;font-size:8px;line-height:12px;color:#444;white-space:nowrap"><span style="font-size:7px">&#9654;</span> <b style="letter-spacing:0.3px">01|</b><span style="-webkit-text-stroke:0.3px #555;color:#555">领导寄语</span></div>
<div class="cap" style="left:33.6px;top:464.5px;width:228px;text-align:center">*图片源于网络，禁止商业用途</div>
<div class="cap" style="left:311px;top:202.5px;width:228px;text-align:center">*图片源于网络，禁止商业用途</div>
<div class="cap" style="left:35px;top:644px">*图片源于网络，禁止商业用途</div></div></div></div><div class="a badge" style="background:#a9aaab">01</div></div>
<div class="a card" style="top:312px;background:#c6e3f6"><div class="a" style="left:79px;top:10px;width:110px;height:152px"><div class="a" style="left:0;top:0;width:110px;height:152px;overflow:hidden;background:#f6f7f9"><div class="pg thumbp" style="left:0;top:0;transform:scale(0.18613,0.18765);transform-origin:0 0"><div class="a" style="left:284px;top:0;width:293px;height:631px;background:#f1f2f4"></div>
<div class="a" style="left:262px;top:396px;width:82px;height:18.7px;background:#e8e8e9"></div>
<div class="a" style="left:61.2px;top:71.0px;width:29px;height:25px;overflow:hidden"><div style="width:29px;height:29px;border-radius:50%;background:#ac2a2a"></div><div class="a" style="left:0;top:9px;width:29px;text-align:center;color:#fff;font-size:16px;line-height:18px;letter-spacing:-0.6px">01</div></div><div class="a" style="left:98.0px;top:72.5px;font-size:19px;letter-spacing:0.45px;line-height:22px;color:#ac2a2a;-webkit-text-stroke:0.45px #ac2a2a;white-space:nowrap">万彩公司内刊</div>
<div class="a" style="left:311px;top:72px;width:228px;height:152px;overflow:hidden"><svg width="228" height="152" viewBox="0 0 228 152" preserveAspectRatio="none" style="display:block"><use href="#ph1"/></svg></div>
<div class="tl" style="left:48.0px;top:134.5px;letter-spacing:-0.196px">云展网创致力于为上传者提供文档转换存储服务-上传PDF转换</div>
<div class="tl" style="left:35.0px;top:150.2px;letter-spacing:0.035px">为3D翻页电子书，自动生成链接和二维码，用于微信/网站/电脑/</div>
<div class="tl" style="left:35.0px;top:166.0px;letter-spacing:-0.082px">手机/平板阅读分享。目前已有上百万上传者在云展网上传画册/杂</div>
<div class="tl" style="left:35.0px;top:181.7px;letter-spacing:0.121px">志/内刊/文档等。云展网创立于2014年，致力于为上传者提供文</div>
<div class="tl" style="left:35.0px;top:197.5px;letter-spacing:-0.093px">档转换存储服务-上传PDF转换为3D翻页电子书，自动生成链接和</div>
<div class="tl" style="left:35.0px;top:213.2px;letter-spacing:0.036px">二维码，用于微信/网站/电脑/手机/平板阅读分享。目前已有上百</div>
<div class="tl" style="left:35.0px;top:228.9px;letter-spacing:0.036px">万上传者（包括政府/学校/知名企业等）在云展网上传画册/杂志/</div>
<div class="tl" style="left:35.0px;top:244.7px;letter-spacing:-0.096px">内刊/文档等。云展网致力于为上传者提供文档转换存储服务-上传</div>
<div class="tl" style="left:35.0px;top:260.4px;letter-spacing:-0.079px">PDF转换为3D翻页电子书，自动生成链接和二维码，用于微信/网</div>
<div class="tl" style="left:35.0px;top:276.2px;letter-spacing:0.111px">站/电脑/手机/平板阅读分享。目前已有上百万上传者在云展网上</div>
<div class="tl" style="left:35.0px;top:291.9px;letter-spacing:-0.216px">传画册/杂志/内刊/文档等。</div>
<div class="a" style="left:322.5px;top:260.8px;width:29px;height:25px;overflow:hidden"><div style="width:29px;height:29px;border-radius:50%;background:#ac2a2a"></div><div class="a" style="left:0;top:9px;width:29px;text-align:center;color:#fff;font-size:16px;line-height:18px;letter-spacing:-0.6px">02</div></div><div class="a" style="left:360.0px;top:261.5px;font-size:19px;letter-spacing:0.45px;line-height:22px;color:#ac2a2a;-webkit-text-stroke:0.45px #ac2a2a;white-space:nowrap">万彩公司简介</div>
<div class="tl" style="left:319.4px;top:316.0px;letter-spacing:-0.196px">云展网创致力于为上传者提供文档转换存储服务-上传PDF转换</div>
<div class="tl" style="left:306.4px;top:331.7px;letter-spacing:0.035px">为3D翻页电子书，自动生成链接和二维码，用于微信/网站/电脑/</div>
<div class="tl" style="left:306.4px;top:347.5px;letter-spacing:-0.082px">手机/平板阅读分享。目前已有上百万上传者在云展网上传画册/杂</div>
<div class="tl" style="left:306.4px;top:363.2px;letter-spacing:-0.229px">志/内刊/文档等。云展网创立于2014年，致力于为上传者提供文</div>
<div class="a" style="left:33.6px;top:335.3px;width:228px;height:151.3px;overflow:hidden"><svg width="228" height="151" viewBox="0 0 228 151" preserveAspectRatio="none" style="display:block"><use href="#ph2"/></svg></div>
<div class="a" style="left:307.5px;top:380px;width:235px;height:106px;overflow:hidden"><svg width="235" height="106" viewBox="0 0 100 50" preserveAspectRatio="none" style="display:block"><use href="#ph4"/></svg></div>
<div class="tl" style="left:319.4px;top:498.0px;letter-spacing:-0.513px">档转换存储服务-上传PDF转换为3D翻页电子书，自动生成链接和</div>
<div class="tl" style="left:306.4px;top:513.7px;letter-spacing:0.036px">二维码，用于微信/网站/电脑/手机/平板阅读分享。目前已有上百</div>
<div class="tl" style="left:306.4px;top:529.5px;letter-spacing:0.036px">万上传者（包括政府/学校/知名企业等）在云展网上传画册/杂志/</div>
<div class="tl" style="left:306.4px;top:545.2px;letter-spacing:-0.096px">内刊/文档等。云展网致力于为上传者提供文档转换存储服务-上传</div>
<div class="tl" style="left:306.4px;top:561.0px;letter-spacing:-0.079px">PDF转换为3D翻页电子书，自动生成链接和二维码，用于微信/网</div>
<div class="tl" style="left:306.4px;top:576.7px;letter-spacing:0.111px">站/电脑/手机/平板阅读分享。目前已有上百万上传者在云展网上</div>
<div class="tl" style="left:306.4px;top:592.4px;letter-spacing:-0.216px">传画册/杂志/内刊/文档等。</div>
<div class="tl" style="left:48.0px;top:518.9px;letter-spacing:-0.196px">云展网创致力于为上传者提供文档转换存储服务-上传PDF转换</div>
<div class="tl" style="left:35.0px;top:534.6px;letter-spacing:0.035px">为3D翻页电子书，自动生成链接和二维码，用于微信/网站/电脑/</div>
<div class="tl" style="left:35.0px;top:550.4px;letter-spacing:-0.082px">手机/平板阅读分享。目前已有上百万上传者在云展网上传画册/杂</div>
<div class="tl" style="left:35.0px;top:566.1px;letter-spacing:0.121px">志/内刊/文档等。云展网创立于2014年，致力于为上传者提供文</div>
<div class="tl" style="left:35.0px;top:581.9px;letter-spacing:-0.093px">档转换存储服务-上传PDF转换为3D翻页电子书，自动生成链接和</div>
<div class="tl" style="left:35.0px;top:597.6px;letter-spacing:-0.226px">二维码，用于微信/网站/电脑/手机/平板阅读分享。</div>
<div class="a" style="left:22.7px;top:631px;width:523.2px;height:113px;overflow:hidden"><svg width="523" height="113" viewBox="0 0 523 113" preserveAspectRatio="none" style="display:block"><use href="#ph3"/></svg></div>
<div class="a" style="left:23px;top:778.5px;font-size:8px;line-height:12px;color:#444;white-space:nowrap"><span style="font-size:7px">&#9654;</span> <b style="letter-spacing:0.3px">01|</b><span style="-webkit-text-stroke:0.3px #555;color:#555">领导寄语</span></div>
<div class="cap" style="left:33.6px;top:464.5px;width:228px;text-align:center">*图片源于网络，禁止商业用途</div>
<div class="cap" style="left:311px;top:202.5px;width:228px;text-align:center">*图片源于网络，禁止商业用途</div>
<div class="cap" style="left:35px;top:644px">*图片源于网络，禁止商业用途</div></div></div></div><div class="a badge" style="background:#8fa6b6">02</div></div>
<div class="a card" style="top:503px;background:#eceef0"><div class="a" style="left:79px;top:10px;width:110px;height:152px;background:#fff">
<svg class="a" style="left:17px;top:10px" width="42" height="43" viewBox="0 0 42 43"><rect width="42" height="43" fill="#fff"/>
<g fill="#111"><rect x="0.00" y="0.00" width="1.19" height="1.19"/><rect x="0.00" y="2.32" width="1.19" height="1.19"/><rect x="0.00" y="5.81" width="1.19" height="1.19"/><rect x="0.00" y="6.97" width="1.19" height="1.19"/><rect x="0.00" y="9.30" width="1.19" height="1.19"/><rect x="0.00" y="10.46" width="1.19" height="1.19"/><rect x="0.00" y="12.78" width="1.19" height="1.19"/><rect x="0.00" y="15.11" width="1.19" height="1.19"/><rect x="0.00" y="17.43" width="1.19" height="1.19"/><rect x="0.00" y="24.41" width="1.19" height="1.19"/><rect x="0.00" y="27.89" width="1.19" height="1.19"/><rect x="0.00" y="29.05" width="1.19" height="1.19"/><rect x="0.00" y="31.38" width="1.19" height="1.19"/><rect x="0.00" y="37.19" width="1.19" height="1.19"/><rect x="0.00" y="39.51" width="1.19" height="1.19"/><rect x="1.14" y="0.00" width="1.19" height="1.19"/><rect x="1.14" y="1.16" width="1.19" height="1.19"/><rect x="1.14" y="2.32" width="1.19" height="1.19"/><rect x="1.14" y="4.65" width="1.19" height="1.19"/><rect x="1.14" y="6.97" width="1.19" height="1.19"/><rect x="1.14" y="9.30" width="1.19" height="1.19"/><rect x="1.14" y="10.46" width="1.19" height="1.19"/><rect x="1.14" y="20.92" width="1.19" height="1.19"/><rect x="1.14" y="27.89" width="1.19" height="1.19"/><rect x="1.14" y="31.38" width="1.19" height="1.19"/><rect x="1.14" y="32.54" width="1.19" height="1.19"/><rect x="1.14" y="36.03" width="1.19" height="1.19"/><rect x="1.14" y="38.35" width="1.19" height="1.19"/><rect x="1.14" y="39.51" width="1.19" height="1.19"/><rect x="1.14" y="40.68" width="1.19" height="1.19"/><rect x="2.27" y="1.16" width="1.19" height="1.19"/><rect x="2.27" y="3.49" width="1.19" height="1.19"/><rect x="2.27" y="5.81" width="1.19" height="1.19"/><rect x="2.27" y="11.62" width="1.19" height="1.19"/><rect x="2.27" y="12.78" width="1.19" height="1.19"/><rect x="2.27" y="15.11" width="1.19" height="1.19"/><rect x="2.27" y="16.27" width="1.19" height="1.19"/><rect x="2.27" y="17.43" width="1.19" height="1.19"/><rect x="2.27" y="19.76" width="1.19" height="1.19"/><rect x="2.27" y="20.92" width="1.19" height="1.19"/><rect x="2.27" y="23.24" width="1.19" height="1.19"/><rect x="2.27" y="26.73" width="1.19" height="1.19"/><rect x="2.27" y="27.89" width="1.19" height="1.19"/><rect x="2.27" y="37.19" width="1.19" height="1.19"/><rect x="2.27" y="39.51" width="1.19" height="1.19"/><rect x="2.27" y="40.68" width="1.19" height="1.19"/><rect x="3.41" y="2.32" width="1.19" height="1.19"/><rect x="3.41" y="3.49" width="1.19" height="1.19"/><rect x="3.41" y="5.81" width="1.19" height="1.19"/><rect x="3.41" y="9.30" width="1.19" height="1.19"/><rect x="3.41" y="11.62" width="1.19" height="1.19"/><rect x="3.41" y="13.95" width="1.19" height="1.19"/><rect x="3.41" y="17.43" width="1.19" height="1.19"/><rect x="3.41" y="18.59" width="1.19" height="1.19"/><rect x="3.41" y="22.08" width="1.19" height="1.19"/><rect x="3.41" y="23.24" width="1.19" height="1.19"/><rect x="3.41" y="25.57" width="1.19" height="1.19"/><rect x="3.41" y="26.73" width="1.19" height="1.19"/><rect x="3.41" y="27.89" width="1.19" height="1.19"/><rect x="3.41" y="29.05" width="1.19" height="1.19"/><rect x="3.41" y="31.38" width="1.19" height="1.19"/><rect x="3.41" y="32.54" width="1.19" height="1.19"/><rect x="3.41" y="34.86" width="1.19" height="1.19"/><rect x="3.41" y="38.35" width="1.19" height="1.19"/><rect x="3.41" y="39.51" width="1.19" height="1.19"/><rect x="3.41" y="41.84" width="1.19" height="1.19"/><rect x="4.54" y="0.00" width="1.19" height="1.19"/><rect x="4.54" y="1.16" width="1.19" height="1.19"/><rect x="4.54" y="3.49" width="1.19" height="1.19"/><rect x="4.54" y="4.65" width="1.19" height="1.19"/><rect x="4.54" y="5.81" width="1.19" height="1.19"/><rect x="4.54" y="8.14" width="1.19" height="1.19"/><rect x="4.54" y="10.46" width="1.19" height="1.19"/><rect x="4.54" y="11.62" width="1.19" height="1.19"/><rect x="4.54" y="15.11" width="1.19" height="1.19"/><rect x="4.54" y="16.27" width="1.19" height="1.19"/><rect x="4.54" y="17.43" width="1.19" height="1.19"/><rect x="4.54" y="19.76" width="1.19" height="1.19"/><rect x="4.54" y="23.24" width="1.19" height="1.19"/><rect x="4.54" y="24.41" width="1.19" height="1.19"/><rect x="4.54" y="29.05" width="1.19" height="1.19"/><rect x="4.54" y="30.22" width="1.19" height="1.19"/><rect x="4.54" y="31.38" width="1.19" height="1.19"/><rect x="4.54" y="33.70" width="1.19" height="1.19"/><rect x="4.54" y="34.86" width="1.19" height="1.19"/><rect x="4.54" y="36.03" width="1.19" height="1.19"/><rect x="4.54" y="37.19" width="1.19" height="1.19"/><rect x="4.54" y="38.35" width="1.19" height="1.19"/><rect x="4.54" y="40.68" width="1.19" height="1.19"/><rect x="4.54" y="41.84" width="1.19" height="1.19"/><rect x="5.68" y="3.49" width="1.19" height="1.19"/><rect x="5.68" y="6.97" width="1.19" height="1.19"/><rect x="5.68" y="12.78" width="1.19" height="1.19"/><rect x="5.68" y="13.95" width="1.19" height="1.19"/><rect x="5.68" y="15.11" width="1.19" height="1.19"/><rect x="5.68" y="16.27" width="1.19" height="1.19"/><rect x="5.68" y="18.59" width="1.19" height="1.19"/><rect x="5.68" y="20.92" width="1.19" height="1.19"/><rect x="5.68" y="29.05" width="1.19" height="1.19"/><rect x="5.68" y="31.38" width="1.19" height="1.19"/><rect x="5.68" y="32.54" width="1.19" height="1.19"/><rect x="5.68" y="36.03" width="1.19" height="1.19"/><rect x="5.68" y="39.51" width="1.19" height="1.19"/><rect x="5.68" y="40.68" width="1.19" height="1.19"/><rect x="6.81" y="0.00" width="1.19" height="1.19"/><rect x="6.81" y="2.32" width="1.19" height="1.19"/><rect x="6.81" y="3.49" width="1.19" height="1.19"/><rect x="6.81" y="6.97" width="1.19" height="1.19"/><rect x="6.81" y="12.78" width="1.19" height="1.19"/><rect x="6.81" y="16.27" width="1.19" height="1.19"/><rect x="6.81" y="17.43" width="1.19" height="1.19"/><rect x="6.81" y="18.59" width="1.19" height="1.19"/><rect x="6.81" y="20.92" width="1.19" height="1.19"/><rect x="6.81" y="22.08" width="1.19" height="1.19"/><rect x="6.81" y="24.41" width="1.19" height="1.19"/><rect x="6.81" y="25.57" width="1.19" height="1.19"/><rect x="6.81" y="26.73" width="1.19" height="1.19"/><rect x="6.81" y="27.89" width="1.19" height="1.19"/><rect x="6.81" y="29.05" width="1.19" height="1.19"/><rect x="6.81" y="32.54" width="1.19" height="1.19"/><rect x="6.81" y="34.86" width="1.19" height="1.19"/><rect x="6.81" y="36.03" width="1.19" height="1.19"/><rect x="6.81" y="37.19" width="1.19" height="1.19"/><rect x="6.81" y="40.68" width="1.19" height="1.19"/><rect x="6.81" y="41.84" width="1.19" height="1.19"/><rect x="7.95" y="0.00" width="1.19" height="1.19"/><rect x="7.95" y="1.16" width="1.19" height="1.19"/><rect x="7.95" y="4.65" width="1.19" height="1.19"/><rect x="7.95" y="5.81" width="1.19" height="1.19"/><rect x="7.95" y="6.97" width="1.19" height="1.19"/><rect x="7.95" y="8.14" width="1.19" height="1.19"/><rect x="7.95" y="11.62" width="1.19" height="1.19"/><rect x="7.95" y="15.11" width="1.19" height="1.19"/><rect x="7.95" y="16.27" width="1.19" height="1.19"/><rect x="7.95" y="17.43" width="1.19" height="1.19"/><rect x="7.95" y="19.76" width="1.19" height="1.19"/><rect x="7.95" y="22.08" width="1.19" height="1.19"/><rect x="7.95" y="23.24" width="1.19" height="1.19"/><rect x="7.95" y="26.73" width="1.19" height="1.19"/><rect x="7.95" y="27.89" width="1.19" height="1.19"/><rect x="7.95" y="29.05" width="1.19" height="1.19"/><rect x="7.95" y="32.54" width="1.19" height="1.19"/><rect x="7.95" y="36.03" width="1.19" height="1.19"/><rect x="7.95" y="37.19" width="1.19" height="1.19"/><rect x="7.95" y="38.35" width="1.19" height="1.19"/><rect x="9.08" y="4.65" width="1.19" height="1.19"/><rect x="9.08" y="6.97" width="1.19" height="1.19"/><rect x="9.08" y="8.14" width="1.19" height="1.19"/><rect x="9.08" y="10.46" width="1.19" height="1.19"/><rect x="9.08" y="11.62" width="1.19" height="1.19"/><rect x="9.08" y="12.78" width="1.19" height="1.19"/><rect x="9.08" y="15.11" width="1.19" height="1.19"/><rect x="9.08" y="16.27" width="1.19" height="1.19"/><rect x="9.08" y="18.59" width="1.19" height="1.19"/><rect x="9.08" y="26.73" width="1.19" height="1.19"/><rect x="9.08" y="31.38" width="1.19" height="1.19"/><rect x="9.08" y="34.86" width="1.19" height="1.19"/><rect x="9.08" y="36.03" width="1.19" height="1.19"/><rect x="9.08" y="39.51" width="1.19" height="1.19"/><rect x="9.08" y="40.68" width="1.19" height="1.19"/><rect x="9.08" y="41.84" width="1.19" height="1.19"/><rect x="10.22" y="2.32" width="1.19" height="1.19"/><rect x="10.22" y="3.49" width="1.19" height="1.19"/><rect x="10.22" y="4.65" width="1.19" height="1.19"/><rect x="10.22" y="5.81" width="1.19" height="1.19"/><rect x="10.22" y="6.97" width="1.19" height="1.19"/><rect x="10.22" y="8.14" width="1.19" height="1.19"/><rect x="10.22" y="11.62" width="1.19" height="1.19"/><rect x="10.22" y="13.95" width="1.19" height="1.19"/><rect x="10.22" y="19.76" width="1.19" height="1.19"/><rect x="10.22" y="23.24" width="1.19" height="1.19"/><rect x="10.22" y="24.41" width="1.19" height="1.19"/><rect x="10.22" y="29.05" width="1.19" height="1.19"/><rect x="10.22" y="31.38" width="1.19" height="1.19"/><rect x="10.22" y="32.54" width="1.19" height="1.19"/><rect x="10.22" y="33.70" width="1.19" height="1.19"/><rect x="10.22" y="36.03" width="1.19" height="1.19"/><rect x="10.22" y="37.19" width="1.19" height="1.19"/><rect x="10.22" y="40.68" width="1.19" height="1.19"/><rect x="11.35" y="0.00" width="1.19" height="1.19"/><rect x="11.35" y="3.49" width="1.19" height="1.19"/><rect x="11.35" y="4.65" width="1.19" height="1.19"/><rect x="11.35" y="5.81" width="1.19" height="1.19"/><rect x="11.35" y="6.97" width="1.19" height="1.19"/><rect x="11.35" y="8.14" width="1.19" height="1.19"/><rect x="11.35" y="9.30" width="1.19" height="1.19"/><rect x="11.35" y="10.46" width="1.19" height="1.19"/><rect x="11.35" y="11.62" width="1.19" height="1.19"/><rect x="11.35" y="13.95" width="1.19" height="1.19"/><rect x="11.35" y="16.27" width="1.19" height="1.19"/><rect x="11.35" y="18.59" width="1.19" height="1.19"/><rect x="11.35" y="23.24" width="1.19" height="1.19"/><rect x="11.35" y="26.73" width="1.19" height="1.19"/><rect x="11.35" y="30.22" width="1.19" height="1.19"/><rect x="11.35" y="31.38" width="1.19" height="1.19"/><rect x="11.35" y="32.54" width="1.19" height="1.19"/><rect x="11.35" y="38.35" width="1.19" height="1.19"/><rect x="11.35" y="39.51" width="1.19" height="1.19"/><rect x="11.35" y="40.68" width="1.19" height="1.19"/><rect x="11.35" y="41.84" width="1.19" height="1.19"/><rect x="12.49" y="3.49" width="1.19" height="1.19"/><rect x="12.49" y="5.81" width="1.19" height="1.19"/><rect x="12.49" y="6.97" width="1.19" height="1.19"/><rect x="12.49" y="9.30" width="1.19" height="1.19"/><rect x="12.49" y="10.46" width="1.19" height="1.19"/><rect x="12.49" y="12.78" width="1.19" height="1.19"/><rect x="12.49" y="13.95" width="1.19" height="1.19"/><rect x="12.49" y="17.43" width="1.19" height="1.19"/><rect x="12.49" y="18.59" width="1.19" height="1.19"/><rect x="12.49" y="19.76" width="1.19" height="1.19"/><rect x="12.49" y="20.92" width="1.19" height="1.19"/><rect x="12.49" y="22.08" width="1.19" height="1.19"/><rect x="12.49" y="25.57" width="1.19" height="1.19"/><rect x="12.49" y="27.89" width="1.19" height="1.19"/><rect x="12.49" y="29.05" width="1.19" height="1.19"/><rect x="12.49" y="31.38" width="1.19" height="1.19"/><rect x="12.49" y="34.86" width="1.19" height="1.19"/><rect x="12.49" y="37.19" width="1.19" height="1.19"/><rect x="12.49" y="40.68" width="1.19" height="1.19"/><rect x="13.62" y="2.32" width="1.19" height="1.19"/><rect x="13.62" y="8.14" width="1.19" height="1.19"/><rect x="13.62" y="9.30" width="1.19" height="1.19"/><rect x="13.62" y="10.46" width="1.19" height="1.19"/><rect x="13.62" y="15.11" width="1.19" height="1.19"/><rect x="13.62" y="18.59" width="1.19" height="1.19"/><rect x="13.62" y="22.08" width="1.19" height="1.19"/><rect x="13.62" y="24.41" width="1.19" height="1.19"/><rect x="13.62" y="25.57" width="1.19" height="1.19"/><rect x="13.62" y="31.38" width="1.19" height="1.19"/><rect x="13.62" y="32.54" width="1.19" height="1.19"/><rect x="13.62" y="33.70" width="1.19" height="1.19"/><rect x="13.62" y="34.86" width="1.19" height="1.19"/><rect x="13.62" y="40.68" width="1.19" height="1.19"/><rect x="13.62" y="41.84" width="1.19" height="1.19"/><rect x="14.76" y="0.00" width="1.19" height="1.19"/><rect x="14.76" y="2.32" width="1.19" height="1.19"/><rect x="14.76" y="4.65" width="1.19" height="1.19"/><rect x="14.76" y="6.97" width="1.19" height="1.19"/><rect x="14.76" y="8.14" width="1.19" height="1.19"/><rect x="14.76" y="9.30" width="1.19" height="1.19"/><rect x="14.76" y="12.78" width="1.19" height="1.19"/><rect x="14.76" y="15.11" width="1.19" height="1.19"/><rect x="14.76" y="16.27" width="1.19" height="1.19"/><rect x="14.76" y="17.43" width="1.19" height="1.19"/><rect x="14.76" y="18.59" width="1.19" height="1.19"/><rect x="14.76" y="22.08" width="1.19" height="1.19"/><rect x="14.76" y="23.24" width="1.19" height="1.19"/><rect x="14.76" y="24.41" width="1.19" height="1.19"/><rect x="14.76" y="30.22" width="1.19" height="1.19"/><rect x="14.76" y="31.38" width="1.19" height="1.19"/><rect x="14.76" y="32.54" width="1.19" height="1.19"/><rect x="14.76" y="36.03" width="1.19" height="1.19"/><rect x="14.76" y="37.19" width="1.19" height="1.19"/><rect x="14.76" y="39.51" width="1.19" height="1.19"/><rect x="15.89" y="1.16" width="1.19" height="1.19"/><rect x="15.89" y="8.14" width="1.19" height="1.19"/><rect x="15.89" y="10.46" width="1.19" height="1.19"/><rect x="15.89" y="13.95" width="1.19" height="1.19"/><rect x="15.89" y="17.43" width="1.19" height="1.19"/><rect x="15.89" y="19.76" width="1.19" height="1.19"/><rect x="15.89" y="20.92" width="1.19" height="1.19"/><rect x="15.89" y="23.24" width="1.19" height="1.19"/><rect x="15.89" y="26.73" width="1.19" height="1.19"/><rect x="15.89" y="31.38" width="1.19" height="1.19"/><rect x="15.89" y="34.86" width="1.19" height="1.19"/><rect x="15.89" y="36.03" width="1.19" height="1.19"/><rect x="15.89" y="37.19" width="1.19" height="1.19"/><rect x="15.89" y="38.35" width="1.19" height="1.19"/><rect x="15.89" y="41.84" width="1.19" height="1.19"/><rect x="17.03" y="2.32" width="1.19" height="1.19"/><rect x="17.03" y="9.30" width="1.19" height="1.19"/><rect x="17.03" y="13.95" width="1.19" height="1.19"/><rect x="17.03" y="16.27" width="1.19" height="1.19"/><rect x="17.03" y="17.43" width="1.19" height="1.19"/><rect x="17.03" y="18.59" width="1.19" height="1.19"/><rect x="17.03" y="19.76" width="1.19" height="1.19"/><rect x="17.03" y="20.92" width="1.19" height="1.19"/><rect x="17.03" y="22.08" width="1.19" height="1.19"/><rect x="17.03" y="23.24" width="1.19" height="1.19"/><rect x="17.03" y="26.73" width="1.19" height="1.19"/><rect x="17.03" y="29.05" width="1.19" height="1.19"/><rect x="17.03" y="30.22" width="1.19" height="1.19"/><rect x="17.03" y="32.54" width="1.19" height="1.19"/><rect x="17.03" y="33.70" width="1.19" height="1.19"/><rect x="17.03" y="37.19" width="1.19" height="1.19"/><rect x="17.03" y="38.35" width="1.19" height="1.19"/><rect x="17.03" y="41.84" width="1.19" height="1.19"/><rect x="18.16" y="0.00" width="1.19" height="1.19"/><rect x="18.16" y="1.16" width="1.19" height="1.19"/><rect x="18.16" y="3.49" width="1.19" height="1.19"/><rect x="18.16" y="4.65" width="1.19" height="1.19"/><rect x="18.16" y="5.81" width="1.19" height="1.19"/><rect x="18.16" y="6.97" width="1.19" height="1.19"/><rect x="18.16" y="8.14" width="1.19" height="1.19"/><rect x="18.16" y="9.30" width="1.19" height="1.19"/><rect x="18.16" y="10.46" width="1.19" height="1.19"/><rect x="18.16" y="11.62" width="1.19" height="1.19"/><rect x="18.16" y="12.78" width="1.19" height="1.19"/><rect x="18.16" y="13.95" width="1.19" height="1.19"/><rect x="18.16" y="15.11" width="1.19" height="1.19"/><rect x="18.16" y="16.27" width="1.19" height="1.19"/><rect x="18.16" y="17.43" width="1.19" height="1.19"/><rect x="18.16" y="18.59" width="1.19" height="1.19"/><rect x="18.16" y="19.76" width="1.19" height="1.19"/><rect x="18.16" y="22.08" width="1.19" height="1.19"/><rect x="18.16" y="23.24" width="1.19" height="1.19"/><rect x="18.16" y="24.41" width="1.19" height="1.19"/><rect x="18.16" y="25.57" width="1.19" height="1.19"/><rect x="18.16" y="27.89" width="1.19" height="1.19"/><rect x="18.16" y="29.05" width="1.19" height="1.19"/><rect x="18.16" y="30.22" width="1.19" height="1.19"/><rect x="18.16" y="31.38" width="1.19" height="1.19"/><rect x="18.16" y="33.70" width="1.19" height="1.19"/><rect x="18.16" y="34.86" width="1.19" height="1.19"/><rect x="18.16" y="36.03" width="1.19" height="1.19"/><rect x="18.16" y="38.35" width="1.19" height="1.19"/><rect x="18.16" y="40.68" width="1.19" height="1.19"/><rect x="19.30" y="0.00" width="1.19" height="1.19"/><rect x="19.30" y="1.16" width="1.19" height="1.19"/><rect x="19.30" y="2.32" width="1.19" height="1.19"/><rect x="19.30" y="5.81" width="1.19" height="1.19"/><rect x="19.30" y="6.97" width="1.19" height="1.19"/><rect x="19.30" y="11.62" width="1.19" height="1.19"/><rect x="19.30" y="12.78" width="1.19" height="1.19"/><rect x="19.30" y="13.95" width="1.19" height="1.19"/><rect x="19.30" y="15.11" width="1.19" height="1.19"/><rect x="19.30" y="16.27" width="1.19" height="1.19"/><rect x="19.30" y="17.43" width="1.19" height="1.19"/><rect x="19.30" y="20.92" width="1.19" height="1.19"/><rect x="19.30" y="23.24" width="1.19" height="1.19"/><rect x="19.30" y="27.89" width="1.19" height="1.19"/><rect x="19.30" y="29.05" width="1.19" height="1.19"/><rect x="19.30" y="32.54" width="1.19" height="1.19"/><rect x="19.30" y="33.70" width="1.19" height="1.19"/><rect x="19.30" y="36.03" width="1.19" height="1.19"/><rect x="19.30" y="37.19" width="1.19" height="1.19"/><rect x="19.30" y="38.35" width="1.19" height="1.19"/><rect x="19.30" y="41.84" width="1.19" height="1.19"/><rect x="20.43" y="5.81" width="1.19" height="1.19"/><rect x="20.43" y="6.97" width="1.19" height="1.19"/><rect x="20.43" y="8.14" width="1.19" height="1.19"/><rect x="20.43" y="10.46" width="1.19" height="1.19"/><rect x="20.43" y="11.62" width="1.19" height="1.19"/><rect x="20.43" y="12.78" width="1.19" height="1.19"/><rect x="20.43" y="17.43" width="1.19" height="1.19"/><rect x="20.43" y="18.59" width="1.19" height="1.19"/><rect x="20.43" y="19.76" width="1.19" height="1.19"/><rect x="20.43" y="22.08" width="1.19" height="1.19"/><rect x="20.43" y="23.24" width="1.19" height="1.19"/><rect x="20.43" y="26.73" width="1.19" height="1.19"/><rect x="20.43" y="27.89" width="1.19" height="1.19"/><rect x="20.43" y="33.70" width="1.19" height="1.19"/><rect x="20.43" y="37.19" width="1.19" height="1.19"/><rect x="20.43" y="38.35" width="1.19" height="1.19"/><rect x="20.43" y="39.51" width="1.19" height="1.19"/><rect x="20.43" y="40.68" width="1.19" height="1.19"/><rect x="21.57" y="0.00" width="1.19" height="1.19"/><rect x="21.57" y="2.32" width="1.19" height="1.19"/><rect x="21.57" y="3.49" width="1.19" height="1.19"/><rect x="21.57" y="5.81" width="1.19" height="1.19"/><rect x="21.57" y="6.97" width="1.19" height="1.19"/><rect x="21.57" y="8.14" width="1.19" height="1.19"/><rect x="21.57" y="11.62" width="1.19" height="1.19"/><rect x="21.57" y="12.78" width="1.19" height="1.19"/><rect x="21.57" y="15.11" width="1.19" height="1.19"/><rect x="21.57" y="17.43" width="1.19" height="1.19"/><rect x="21.57" y="23.24" width="1.19" height="1.19"/><rect x="21.57" y="24.41" width="1.19" height="1.19"/><rect x="21.57" y="25.57" width="1.19" height="1.19"/><rect x="21.57" y="27.89" width="1.19" height="1.19"/><rect x="21.57" y="29.05" width="1.19" height="1.19"/><rect x="21.57" y="31.38" width="1.19" height="1.19"/><rect x="21.57" y="33.70" width="1.19" height="1.19"/><rect x="21.57" y="34.86" width="1.19" height="1.19"/><rect x="21.57" y="36.03" width="1.19" height="1.19"/><rect x="22.70" y="0.00" width="1.19" height="1.19"/><rect x="22.70" y="2.32" width="1.19" height="1.19"/><rect x="22.70" y="3.49" width="1.19" height="1.19"/><rect x="22.70" y="8.14" width="1.19" height="1.19"/><rect x="22.70" y="10.46" width="1.19" height="1.19"/><rect x="22.70" y="12.78" width="1.19" height="1.19"/><rect x="22.70" y="13.95" width="1.19" height="1.19"/><rect x="22.70" y="15.11" width="1.19" height="1.19"/><rect x="22.70" y="16.27" width="1.19" height="1.19"/><rect x="22.70" y="19.76" width="1.19" height="1.19"/><rect x="22.70" y="23.24" width="1.19" height="1.19"/><rect x="22.70" y="24.41" width="1.19" height="1.19"/><rect x="22.70" y="26.73" width="1.19" height="1.19"/><rect x="22.70" y="27.89" width="1.19" height="1.19"/><rect x="22.70" y="29.05" width="1.19" height="1.19"/><rect x="22.70" y="30.22" width="1.19" height="1.19"/><rect x="22.70" y="31.38" width="1.19" height="1.19"/><rect x="22.70" y="40.68" width="1.19" height="1.19"/><rect x="23.84" y="2.32" width="1.19" height="1.19"/><rect x="23.84" y="4.65" width="1.19" height="1.19"/><rect x="23.84" y="8.14" width="1.19" height="1.19"/><rect x="23.84" y="10.46" width="1.19" height="1.19"/><rect x="23.84" y="11.62" width="1.19" height="1.19"/><rect x="23.84" y="13.95" width="1.19" height="1.19"/><rect x="23.84" y="17.43" width="1.19" height="1.19"/><rect x="23.84" y="19.76" width="1.19" height="1.19"/><rect x="23.84" y="20.92" width="1.19" height="1.19"/><rect x="23.84" y="22.08" width="1.19" height="1.19"/><rect x="23.84" y="25.57" width="1.19" height="1.19"/><rect x="23.84" y="26.73" width="1.19" height="1.19"/><rect x="23.84" y="27.89" width="1.19" height="1.19"/><rect x="23.84" y="29.05" width="1.19" height="1.19"/><rect x="23.84" y="30.22" width="1.19" height="1.19"/><rect x="23.84" y="31.38" width="1.19" height="1.19"/><rect x="23.84" y="38.35" width="1.19" height="1.19"/><rect x="23.84" y="39.51" width="1.19" height="1.19"/><rect x="23.84" y="40.68" width="1.19" height="1.19"/><rect x="23.84" y="41.84" width="1.19" height="1.19"/><rect x="24.97" y="2.32" width="1.19" height="1.19"/><rect x="24.97" y="4.65" width="1.19" height="1.19"/><rect x="24.97" y="5.81" width="1.19" height="1.19"/><rect x="24.97" y="9.30" width="1.19" height="1.19"/><rect x="24.97" y="10.46" width="1.19" height="1.19"/><rect x="24.97" y="12.78" width="1.19" height="1.19"/><rect x="24.97" y="13.95" width="1.19" height="1.19"/><rect x="24.97" y="17.43" width="1.19" height="1.19"/><rect x="24.97" y="18.59" width="1.19" height="1.19"/><rect x="24.97" y="19.76" width="1.19" height="1.19"/><rect x="24.97" y="22.08" width="1.19" height="1.19"/><rect x="24.97" y="26.73" width="1.19" height="1.19"/><rect x="24.97" y="27.89" width="1.19" height="1.19"/><rect x="24.97" y="29.05" width="1.19" height="1.19"/><rect x="24.97" y="30.22" width="1.19" height="1.19"/><rect x="24.97" y="31.38" width="1.19" height="1.19"/><rect x="24.97" y="32.54" width="1.19" height="1.19"/><rect x="24.97" y="34.86" width="1.19" height="1.19"/><rect x="24.97" y="36.03" width="1.19" height="1.19"/><rect x="24.97" y="37.19" width="1.19" height="1.19"/><rect x="24.97" y="39.51" width="1.19" height="1.19"/><rect x="24.97" y="40.68" width="1.19" height="1.19"/><rect x="24.97" y="41.84" width="1.19" height="1.19"/><rect x="26.11" y="0.00" width="1.19" height="1.19"/><rect x="26.11" y="5.81" width="1.19" height="1.19"/><rect x="26.11" y="6.97" width="1.19" height="1.19"/><rect x="26.11" y="13.95" width="1.19" height="1.19"/><rect x="26.11" y="15.11" width="1.19" height="1.19"/><rect x="26.11" y="16.27" width="1.19" height="1.19"/><rect x="26.11" y="20.92" width="1.19" height="1.19"/><rect x="26.11" y="26.73" width="1.19" height="1.19"/><rect x="26.11" y="29.05" width="1.19" height="1.19"/><rect x="26.11" y="30.22" width="1.19" height="1.19"/><rect x="26.11" y="34.86" width="1.19" height="1.19"/><rect x="26.11" y="36.03" width="1.19" height="1.19"/><rect x="26.11" y="37.19" width="1.19" height="1.19"/><rect x="26.11" y="39.51" width="1.19" height="1.19"/><rect x="26.11" y="41.84" width="1.19" height="1.19"/><rect x="27.24" y="0.00" width="1.19" height="1.19"/><rect x="27.24" y="2.32" width="1.19" height="1.19"/><rect x="27.24" y="8.14" width="1.19" height="1.19"/><rect x="27.24" y="11.62" width="1.19" height="1.19"/><rect x="27.24" y="12.78" width="1.19" height="1.19"/><rect x="27.24" y="16.27" width="1.19" height="1.19"/><rect x="27.24" y="18.59" width="1.19" height="1.19"/><rect x="27.24" y="24.41" width="1.19" height="1.19"/><rect x="27.24" y="26.73" width="1.19" height="1.19"/><rect x="27.24" y="27.89" width="1.19" height="1.19"/><rect x="27.24" y="30.22" width="1.19" height="1.19"/><rect x="27.24" y="31.38" width="1.19" height="1.19"/><rect x="27.24" y="34.86" width="1.19" height="1.19"/><rect x="27.24" y="36.03" width="1.19" height="1.19"/><rect x="27.24" y="37.19" width="1.19" height="1.19"/><rect x="27.24" y="38.35" width="1.19" height="1.19"/><rect x="27.24" y="39.51" width="1.19" height="1.19"/><rect x="27.24" y="41.84" width="1.19" height="1.19"/><rect x="28.38" y="0.00" width="1.19" height="1.19"/><rect x="28.38" y="1.16" width="1.19" height="1.19"/><rect x="28.38" y="2.32" width="1.19" height="1.19"/><rect x="28.38" y="9.30" width="1.19" height="1.19"/><rect x="28.38" y="10.46" width="1.19" height="1.19"/><rect x="28.38" y="12.78" width="1.19" height="1.19"/><rect x="28.38" y="13.95" width="1.19" height="1.19"/><rect x="28.38" y="15.11" width="1.19" height="1.19"/><rect x="28.38" y="16.27" width="1.19" height="1.19"/><rect x="28.38" y="18.59" width="1.19" height="1.19"/><rect x="28.38" y="19.76" width="1.19" height="1.19"/><rect x="28.38" y="22.08" width="1.19" height="1.19"/><rect x="28.38" y="24.41" width="1.19" height="1.19"/><rect x="28.38" y="29.05" width="1.19" height="1.19"/><rect x="28.38" y="30.22" width="1.19" height="1.19"/><rect x="28.38" y="32.54" width="1.19" height="1.19"/><rect x="28.38" y="33.70" width="1.19" height="1.19"/><rect x="28.38" y="37.19" width="1.19" height="1.19"/><rect x="28.38" y="40.68" width="1.19" height="1.19"/><rect x="28.38" y="41.84" width="1.19" height="1.19"/><rect x="29.51" y="0.00" width="1.19" height="1.19"/><rect x="29.51" y="2.32" width="1.19" height="1.19"/><rect x="29.51" y="3.49" width="1.19" height="1.19"/><rect x="29.51" y="4.65" width="1.19" height="1.19"/><rect x="29.51" y="5.81" width="1.19" height="1.19"/><rect x="29.51" y="6.97" width="1.19" height="1.19"/><rect x="29.51" y="9.30" width="1.19" height="1.19"/><rect x="29.51" y="10.46" width="1.19" height="1.19"/><rect x="29.51" y="15.11" width="1.19" height="1.19"/><rect x="29.51" y="16.27" width="1.19" height="1.19"/><rect x="29.51" y="18.59" width="1.19" height="1.19"/><rect x="29.51" y="20.92" width="1.19" height="1.19"/><rect x="29.51" y="22.08" width="1.19" height="1.19"/><rect x="29.51" y="23.24" width="1.19" height="1.19"/><rect x="29.51" y="27.89" width="1.19" height="1.19"/><rect x="29.51" y="30.22" width="1.19" height="1.19"/><rect x="29.51" y="33.70" width="1.19" height="1.19"/><rect x="29.51" y="38.35" width="1.19" height="1.19"/><rect x="29.51" y="41.84" width="1.19" height="1.19"/><rect x="30.65" y="0.00" width="1.19" height="1.19"/><rect x="30.65" y="1.16" width="1.19" height="1.19"/><rect x="30.65" y="2.32" width="1.19" height="1.19"/><rect x="30.65" y="4.65" width="1.19" height="1.19"/><rect x="30.65" y="6.97" width="1.19" height="1.19"/><rect x="30.65" y="8.14" width="1.19" height="1.19"/><rect x="30.65" y="16.27" width="1.19" height="1.19"/><rect x="30.65" y="18.59" width="1.19" height="1.19"/><rect x="30.65" y="19.76" width="1.19" height="1.19"/><rect x="30.65" y="22.08" width="1.19" height="1.19"/><rect x="30.65" y="24.41" width="1.19" height="1.19"/><rect x="30.65" y="25.57" width="1.19" height="1.19"/><rect x="30.65" y="26.73" width="1.19" height="1.19"/><rect x="30.65" y="33.70" width="1.19" height="1.19"/><rect x="30.65" y="36.03" width="1.19" height="1.19"/><rect x="30.65" y="37.19" width="1.19" height="1.19"/><rect x="30.65" y="40.68" width="1.19" height="1.19"/><rect x="31.78" y="0.00" width="1.19" height="1.19"/><rect x="31.78" y="2.32" width="1.19" height="1.19"/><rect x="31.78" y="3.49" width="1.19" height="1.19"/><rect x="31.78" y="9.30" width="1.19" height="1.19"/><rect x="31.78" y="11.62" width="1.19" height="1.19"/><rect x="31.78" y="12.78" width="1.19" height="1.19"/><rect x="31.78" y="16.27" width="1.19" height="1.19"/><rect x="31.78" y="18.59" width="1.19" height="1.19"/><rect x="31.78" y="20.92" width="1.19" height="1.19"/><rect x="31.78" y="22.08" width="1.19" height="1.19"/><rect x="31.78" y="25.57" width="1.19" height="1.19"/><rect x="31.78" y="29.05" width="1.19" height="1.19"/><rect x="31.78" y="30.22" width="1.19" height="1.19"/><rect x="31.78" y="32.54" width="1.19" height="1.19"/><rect x="31.78" y="33.70" width="1.19" height="1.19"/><rect x="31.78" y="38.35" width="1.19" height="1.19"/><rect x="31.78" y="39.51" width="1.19" height="1.19"/><rect x="31.78" y="40.68" width="1.19" height="1.19"/><rect x="32.92" y="0.00" width="1.19" height="1.19"/><rect x="32.92" y="1.16" width="1.19" height="1.19"/><rect x="32.92" y="2.32" width="1.19" height="1.19"/><rect x="32.92" y="3.49" width="1.19" height="1.19"/><rect x="32.92" y="4.65" width="1.19" height="1.19"/><rect x="32.92" y="13.95" width="1.19" height="1.19"/><rect x="32.92" y="16.27" width="1.19" height="1.19"/><rect x="32.92" y="18.59" width="1.19" height="1.19"/><rect x="32.92" y="19.76" width="1.19" height="1.19"/><rect x="32.92" y="22.08" width="1.19" height="1.19"/><rect x="32.92" y="23.24" width="1.19" height="1.19"/><rect x="32.92" y="26.73" width="1.19" height="1.19"/><rect x="32.92" y="27.89" width="1.19" height="1.19"/><rect x="32.92" y="29.05" width="1.19" height="1.19"/><rect x="32.92" y="30.22" width="1.19" height="1.19"/><rect x="32.92" y="32.54" width="1.19" height="1.19"/><rect x="32.92" y="33.70" width="1.19" height="1.19"/><rect x="32.92" y="34.86" width="1.19" height="1.19"/><rect x="32.92" y="37.19" width="1.19" height="1.19"/><rect x="32.92" y="40.68" width="1.19" height="1.19"/><rect x="32.92" y="41.84" width="1.19" height="1.19"/><rect x="34.05" y="2.32" width="1.19" height="1.19"/><rect x="34.05" y="3.49" width="1.19" height="1.19"/><rect x="34.05" y="6.97" width="1.19" height="1.19"/><rect x="34.05" y="8.14" width="1.19" height="1.19"/><rect x="34.05" y="9.30" width="1.19" height="1.19"/><rect x="34.05" y="10.46" width="1.19" height="1.19"/><rect x="34.05" y="13.95" width="1.19" height="1.19"/><rect x="34.05" y="15.11" width="1.19" height="1.19"/><rect x="34.05" y="18.59" width="1.19" height="1.19"/><rect x="34.05" y="19.76" width="1.19" height="1.19"/><rect x="34.05" y="20.92" width="1.19" height="1.19"/><rect x="34.05" y="23.24" width="1.19" height="1.19"/><rect x="34.05" y="27.89" width="1.19" height="1.19"/><rect x="34.05" y="29.05" width="1.19" height="1.19"/><rect x="34.05" y="30.22" width="1.19" height="1.19"/><rect x="34.05" y="33.70" width="1.19" height="1.19"/><rect x="34.05" y="38.35" width="1.19" height="1.19"/><rect x="34.05" y="39.51" width="1.19" height="1.19"/><rect x="34.05" y="41.84" width="1.19" height="1.19"/><rect x="35.19" y="2.32" width="1.19" height="1.19"/><rect x="35.19" y="8.14" width="1.19" height="1.19"/><rect x="35.19" y="9.30" width="1.19" height="1.19"/><rect x="35.19" y="10.46" width="1.19" height="1.19"/><rect x="35.19" y="11.62" width="1.19" height="1.19"/><rect x="35.19" y="12.78" width="1.19" height="1.19"/><rect x="35.19" y="15.11" width="1.19" height="1.19"/><rect x="35.19" y="18.59" width="1.19" height="1.19"/><rect x="35.19" y="20.92" width="1.19" height="1.19"/><rect x="35.19" y="22.08" width="1.19" height="1.19"/><rect x="35.19" y="23.24" width="1.19" height="1.19"/><rect x="35.19" y="24.41" width="1.19" height="1.19"/><rect x="35.19" y="25.57" width="1.19" height="1.19"/><rect x="35.19" y="26.73" width="1.19" height="1.19"/><rect x="35.19" y="30.22" width="1.19" height="1.19"/><rect x="35.19" y="31.38" width="1.19" height="1.19"/><rect x="35.19" y="32.54" width="1.19" height="1.19"/><rect x="35.19" y="33.70" width="1.19" height="1.19"/><rect x="35.19" y="34.86" width="1.19" height="1.19"/><rect x="35.19" y="36.03" width="1.19" height="1.19"/><rect x="35.19" y="38.35" width="1.19" height="1.19"/><rect x="35.19" y="39.51" width="1.19" height="1.19"/><rect x="35.19" y="40.68" width="1.19" height="1.19"/><rect x="35.19" y="41.84" width="1.19" height="1.19"/><rect x="36.32" y="1.16" width="1.19" height="1.19"/><rect x="36.32" y="3.49" width="1.19" height="1.19"/><rect x="36.32" y="6.97" width="1.19" height="1.19"/><rect x="36.32" y="9.30" width="1.19" height="1.19"/><rect x="36.32" y="13.95" width="1.19" height="1.19"/><rect x="36.32" y="15.11" width="1.19" height="1.19"/><rect x="36.32" y="18.59" width="1.19" height="1.19"/><rect x="36.32" y="20.92" width="1.19" height="1.19"/><rect x="36.32" y="24.41" width="1.19" height="1.19"/><rect x="36.32" y="27.89" width="1.19" height="1.19"/><rect x="36.32" y="30.22" width="1.19" height="1.19"/><rect x="36.32" y="31.38" width="1.19" height="1.19"/><rect x="36.32" y="33.70" width="1.19" height="1.19"/><rect x="36.32" y="37.19" width="1.19" height="1.19"/><rect x="36.32" y="40.68" width="1.19" height="1.19"/><rect x="37.46" y="1.16" width="1.19" height="1.19"/><rect x="37.46" y="2.32" width="1.19" height="1.19"/><rect x="37.46" y="5.81" width="1.19" height="1.19"/><rect x="37.46" y="6.97" width="1.19" height="1.19"/><rect x="37.46" y="10.46" width="1.19" height="1.19"/><rect x="37.46" y="18.59" width="1.19" height="1.19"/><rect x="37.46" y="19.76" width="1.19" height="1.19"/><rect x="37.46" y="23.24" width="1.19" height="1.19"/><rect x="37.46" y="24.41" width="1.19" height="1.19"/><rect x="37.46" y="26.73" width="1.19" height="1.19"/><rect x="37.46" y="30.22" width="1.19" height="1.19"/><rect x="37.46" y="31.38" width="1.19" height="1.19"/><rect x="37.46" y="33.70" width="1.19" height="1.19"/><rect x="37.46" y="36.03" width="1.19" height="1.19"/><rect x="37.46" y="37.19" width="1.19" height="1.19"/><rect x="37.46" y="38.35" width="1.19" height="1.19"/><rect x="37.46" y="39.51" width="1.19" height="1.19"/><rect x="37.46" y="41.84" width="1.19" height="1.19"/><rect x="38.59" y="0.00" width="1.19" height="1.19"/><rect x="38.59" y="1.16" width="1.19" height="1.19"/><rect x="38.59" y="2.32" width="1.19" height="1.19"/><rect x="38.59" y="4.65" width="1.19" height="1.19"/><rect x="38.59" y="5.81" width="1.19" height="1.19"/><rect x="38.59" y="11.62" width="1.19" height="1.19"/><rect x="38.59" y="12.78" width="1.19" height="1.19"/><rect x="38.59" y="13.95" width="1.19" height="1.19"/><rect x="38.59" y="15.11" width="1.19" height="1.19"/><rect x="38.59" y="17.43" width="1.19" height="1.19"/><rect x="38.59" y="19.76" width="1.19" height="1.19"/><rect x="38.59" y="20.92" width="1.19" height="1.19"/><rect x="38.59" y="22.08" width="1.19" height="1.19"/><rect x="38.59" y="24.41" width="1.19" height="1.19"/><rect x="38.59" y="27.89" width="1.19" height="1.19"/><rect x="38.59" y="29.05" width="1.19" height="1.19"/><rect x="38.59" y="34.86" width="1.19" height="1.19"/><rect x="38.59" y="38.35" width="1.19" height="1.19"/><rect x="38.59" y="39.51" width="1.19" height="1.19"/><rect x="38.59" y="41.84" width="1.19" height="1.19"/><rect x="39.73" y="1.16" width="1.19" height="1.19"/><rect x="39.73" y="3.49" width="1.19" height="1.19"/><rect x="39.73" y="5.81" width="1.19" height="1.19"/><rect x="39.73" y="11.62" width="1.19" height="1.19"/><rect x="39.73" y="13.95" width="1.19" height="1.19"/><rect x="39.73" y="17.43" width="1.19" height="1.19"/><rect x="39.73" y="18.59" width="1.19" height="1.19"/><rect x="39.73" y="19.76" width="1.19" height="1.19"/><rect x="39.73" y="22.08" width="1.19" height="1.19"/><rect x="39.73" y="29.05" width="1.19" height="1.19"/><rect x="39.73" y="30.22" width="1.19" height="1.19"/><rect x="39.73" y="34.86" width="1.19" height="1.19"/><rect x="39.73" y="36.03" width="1.19" height="1.19"/><rect x="39.73" y="39.51" width="1.19" height="1.19"/><rect x="39.73" y="41.84" width="1.19" height="1.19"/><rect x="40.86" y="3.49" width="1.19" height="1.19"/><rect x="40.86" y="4.65" width="1.19" height="1.19"/><rect x="40.86" y="8.14" width="1.19" height="1.19"/><rect x="40.86" y="9.30" width="1.19" height="1.19"/><rect x="40.86" y="10.46" width="1.19" height="1.19"/><rect x="40.86" y="12.78" width="1.19" height="1.19"/><rect x="40.86" y="13.95" width="1.19" height="1.19"/><rect x="40.86" y="17.43" width="1.19" height="1.19"/><rect x="40.86" y="19.76" width="1.19" height="1.19"/><rect x="40.86" y="20.92" width="1.19" height="1.19"/><rect x="40.86" y="23.24" width="1.19" height="1.19"/><rect x="40.86" y="24.41" width="1.19" height="1.19"/><rect x="40.86" y="26.73" width="1.19" height="1.19"/><rect x="40.86" y="29.05" width="1.19" height="1.19"/><rect x="40.86" y="31.38" width="1.19" height="1.19"/><rect x="40.86" y="33.70" width="1.19" height="1.19"/><rect x="40.86" y="36.03" width="1.19" height="1.19"/><rect x="40.86" y="37.19" width="1.19" height="1.19"/><rect x="40.86" y="38.35" width="1.19" height="1.19"/><rect x="40.86" y="40.68" width="1.19" height="1.19"/><rect x="40.86" y="41.84" width="1.19" height="1.19"/><rect x="0.00" y="0.00" width="7.95" height="7.95" fill="#111"/><rect x="1.14" y="1.14" width="5.68" height="5.68" fill="#fff"/><rect x="2.27" y="2.27" width="3.41" height="3.41" fill="#111"/><rect x="34.05" y="0.00" width="7.95" height="7.95" fill="#111"/><rect x="35.19" y="1.14" width="5.68" height="5.68" fill="#fff"/><rect x="36.32" y="2.27" width="3.41" height="3.41" fill="#111"/><rect x="0.00" y="35.05" width="7.95" height="7.95" fill="#111"/><rect x="1.14" y="36.19" width="5.68" height="5.68" fill="#fff"/><rect x="2.27" y="37.32" width="3.41" height="3.41" fill="#111"/></g></svg>
<div class="a" style="left:62px;top:10px;width:44px;height:44px;background:#7b8591"></div>
<div class="a" style="left:48px;top:67px;width:17px;height:17px;border-radius:50%;background:#1ba8f5;color:#fff;font-size:12px;line-height:17px;text-align:center">i</div>
<div class="a" style="left:0;top:90px;width:110px;text-align:center;font-size:4.5px;line-height:6px;color:#333">Oops! Something went wrong!</div>
<div class="a" style="left:33px;top:130px;width:17px;height:17px;border-radius:50%;background:#a8b2c0;border:1px solid #7d8794"></div>
</div><div class="a badge" style="background:#a9aaab">03</div></div>
<div class="a card" style="top:694px;background:#eceef0"><div class="a" style="left:79px;top:10px;width:111px;height:152px;background:#fff"></div><div class="a badge" style="background:#a9aaab">04</div></div>
<div class="a" style="left:96px;top:315px;width:26px;height:26px;border-radius:5px;background:#282d32"><svg class="a" style="left:5px;top:5px" width="16" height="16" viewBox="0 0 16 16"><path d="M1 5.2 h3.4 l1.6-2.6 h4.1 l1.6 2.6 h3.3 v8.8 H1z" fill="none" stroke="#fff" stroke-width="1.8" stroke-linejoin="round"/><circle cx="8" cy="9.2" r="2.3" fill="none" stroke="#fff" stroke-width="1.6"/></svg></div>
<div class="a" style="left:266px;top:315px;width:26px;height:26px;border-radius:5px;background:#282d32"><svg class="a" style="left:5px;top:5px" width="16" height="16" viewBox="0 0 16 16"><path d="M3.5 11 V3.5 a1.5 1.5 0 0 1 1.5-1.5 H10" fill="none" stroke="#fff" stroke-width="1.5"/><rect x="6" y="5" width="7" height="9" rx="1.5" fill="none" stroke="#fff" stroke-width="1.5"/></svg></div>
<div class="a" style="left:297px;top:315px;width:26px;height:26px;border-radius:5px;background:#282d32"><svg class="a" style="left:5px;top:5px" width="16" height="16" viewBox="0 0 16 16"><path d="M6.5 4 V2.5 h3 V4 M4.5 4.5 h7 l1.5 8 H3z M2 13.5 h12 M5 9 h6" fill="none" stroke="#fff" stroke-width="1.4"/></svg></div>
<div class="a" style="left:328px;top:315px;width:26px;height:26px;border-radius:5px;background:#282d32"><svg class="a" style="left:5px;top:5px" width="16" height="16" viewBox="0 0 16 16"><path d="M2.8 4.8 h10.4 M6.6 4.6 V3 h2.8 v1.6 M4.3 4.8 v6.2 a2.6 2.6 0 0 0 2.6 2.6 h2.2 a2.6 2.6 0 0 0 2.6-2.6 V4.8" fill="none" stroke="#fff" stroke-width="1.4"/></svg></div>
<div class="a" style="left:264px;top:59px;width:111px;height:54px;border:3px solid #fa2015;border-radius:3px"></div>
<div class="a" style="left:80px;top:306px;width:281px;height:180px;border:3px solid #fa2015;border-radius:3px"></div>
<svg class="a" style="left:230px;top:140px" width="80" height="180" viewBox="0 0 80 180"><path d="M7.6 174.5 L64.3 17 L60.7 16.4 L70.6 8.2 L72.9 21 L69.9 18.3 L8.4 174.5z" fill="#fa2015"/></svg>
<div class="a" style="left:307px;top:131px;font-size:22px;line-height:22px;color:#fa2015;-webkit-text-stroke:0">2</div>
<div class="a" style="left:266px;top:283px;font-size:21px;line-height:21px;color:#fa2015;-webkit-text-stroke:0">1</div>
<div class="a" style="left:74px;top:881px;width:310px;height:31px;background:#fff"></div>
<svg class="a" style="left:152px;top:895px" width="12" height="12" viewBox="0 0 12 12"><path d="M2 1 V11" stroke="#222" stroke-width="1.6"/><path d="M9.5 1.5 L5 6 L9.5 10.5" fill="none" stroke="#222" stroke-width="1.6"/></svg>
<svg class="a" style="left:176px;top:895px" width="12" height="12" viewBox="0 0 12 12"><path d="M8 1.5 L3.5 6 L8 10.5" fill="none" stroke="#222" stroke-width="1.6"/></svg>
<div class="a" style="left:199px;top:890px;width:59px;height:24px;border-radius:6px;background:#ededed;text-align:center;font-size:13px;line-height:24px;color:#333">2<span style="color:#999">/6</span></div>
<svg class="a" style="left:270px;top:895px" width="12" height="12" viewBox="0 0 12 12"><path d="M4 1.5 L8.5 6 L4 10.5" fill="none" stroke="#222" stroke-width="1.6"/></svg>
<svg class="a" style="left:294px;top:895px" width="12" height="12" viewBox="0 0 12 12"><path d="M10 1 V11" stroke="#222" stroke-width="1.6"/><path d="M2.5 1.5 L7 6 L2.5 10.5" fill="none" stroke="#222" stroke-width="1.6"/></svg>
<svg class="a" style="left:353px;top:895px" width="14" height="14" viewBox="0 0 14 14"><g fill="none" stroke="#222" stroke-width="1.8"><rect x="1" y="1" width="4.5" height="4.5" rx="1"/><rect x="8.5" y="1" width="4.5" height="4.5" rx="1"/><rect x="1" y="8.5" width="4.5" height="4.5" rx="1"/><rect x="8.5" y="8.5" width="4.5" height="4.5" rx="1"/></g></svg>
<div class="a" id="canvas"></div>
<div class="a rul" style="left:384px;top:55px;width:1264px;height:20px"></div>
<div class="a rul" style="left:384px;top:75px;width:20px;height:837px"></div>
<div class="rnum" style="left:431.6px;top:63px;line-height:12px">-300</div>
<div class="rnum" style="left:529.5px;top:63px;line-height:12px">-200</div>
<div class="rnum" style="left:627.4px;top:63px;line-height:12px">-100</div>
<div class="rnum" style="left:725.3px;top:63px;line-height:12px">0</div>
<div class="rnum" style="left:823.2px;top:63px;line-height:12px">100</div>
<div class="rnum" style="left:921.1px;top:63px;line-height:12px">200</div>
<div class="rnum" style="left:1019.0px;top:63px;line-height:12px">300</div>
<div class="rnum" style="left:1116.9px;top:63px;line-height:12px">400</div>
<div class="rnum" style="left:1214.8px;top:63px;line-height:12px">500</div>
<div class="rnum" style="left:1312.7px;top:63px;line-height:12px">600</div>
<div class="rnum" style="left:1410.6px;top:63px;line-height:12px">700</div>
<div class="rnum" style="left:1508.5px;top:63px;line-height:12px">800</div>
<div class="rnum" style="left:1606.4px;top:63px;line-height:12px">900</div>
<svg class="a" style="left:404px;top:55px" width="1244" height="20"><g fill="#c4c4c4"><rect x="4.52" y="0" width="1" height="4"/><rect x="14.31" y="0" width="1" height="4"/><rect x="24.10" y="0" width="1" height="10"/><rect x="33.89" y="0" width="1" height="4"/><rect x="43.68" y="0" width="1" height="4"/><rect x="53.47" y="0" width="1" height="4"/><rect x="63.26" y="0" width="1" height="4"/><rect x="73.05" y="0" width="1" height="4"/><rect x="82.84" y="0" width="1" height="4"/><rect x="92.63" y="0" width="1" height="4"/><rect x="102.42" y="0" width="1" height="4"/><rect x="112.21" y="0" width="1" height="4"/><rect x="122.00" y="0" width="1" height="10"/><rect x="131.79" y="0" width="1" height="4"/><rect x="141.58" y="0" width="1" height="4"/><rect x="151.37" y="0" width="1" height="4"/><rect x="161.16" y="0" width="1" height="4"/><rect x="170.95" y="0" width="1" height="4"/><rect x="180.74" y="0" width="1" height="4"/><rect x="190.53" y="0" width="1" height="4"/><rect x="200.32" y="0" width="1" height="4"/><rect x="210.11" y="0" width="1" height="4"/><rect x="219.90" y="0" width="1" height="10"/><rect x="229.69" y="0" width="1" height="4"/><rect x="239.48" y="0" width="1" height="4"/><rect x="249.27" y="0" width="1" height="4"/><rect x="259.06" y="0" width="1" height="4"/><rect x="268.85" y="0" width="1" height="4"/><rect x="278.64" y="0" width="1" height="4"/><rect x="288.43" y="0" width="1" height="4"/><rect x="298.22" y="0" width="1" height="4"/><rect x="308.01" y="0" width="1" height="4"/><rect x="317.80" y="0" width="1" height="10"/><rect x="327.59" y="0" width="1" height="4"/><rect x="337.38" y="0" width="1" height="4"/><rect x="347.17" y="0" width="1" height="4"/><rect x="356.96" y="0" width="1" height="4"/><rect x="366.75" y="0" width="1" height="4"/><rect x="376.54" y="0" width="1" height="4"/><rect x="386.33" y="0" width="1" height="4"/><rect x="396.12" y="0" width="1" height="4"/><rect x="405.91" y="0" width="1" height="4"/><rect x="415.70" y="0" width="1" height="10"/><rect x="425.49" y="0" width="1" height="4"/><rect x="435.28" y="0" width="1" height="4"/><rect x="445.07" y="0" width="1" height="4"/><rect x="454.86" y="0" width="1" height="4"/><rect x="464.65" y="0" width="1" height="4"/><rect x="474.44" y="0" width="1" height="4"/><rect x="484.23" y="0" width="1" height="4"/><rect x="494.02" y="0" width="1" height="4"/><rect x="503.81" y="0" width="1" height="4"/><rect x="513.60" y="0" width="1" height="10"/><rect x="523.39" y="0" width="1" height="4"/><rect x="533.18" y="0" width="1" height="4"/><rect x="542.97" y="0" width="1" height="4"/><rect x="552.76" y="0" width="1" height="4"/><rect x="562.55" y="0" width="1" height="4"/><rect x="572.34" y="0" width="1" height="4"/><rect x="582.13" y="0" width="1" height="4"/><rect x="591.92" y="0" width="1" height="4"/><rect x="601.71" y="0" width="1" height="4"/><rect x="611.50" y="0" width="1" height="10"/><rect x="621.29" y="0" width="1" height="4"/><rect x="631.08" y="0" width="1" height="4"/><rect x="640.87" y="0" width="1" height="4"/><rect x="650.66" y="0" width="1" height="4"/><rect x="660.45" y="0" width="1" height="4"/><rect x="670.24" y="0" width="1" height="4"/><rect x="680.03" y="0" width="1" height="4"/><rect x="689.82" y="0" width="1" height="4"/><rect x="699.61" y="0" width="1" height="4"/><rect x="709.40" y="0" width="1" height="10"/><rect x="719.19" y="0" width="1" height="4"/><rect x="728.98" y="0" width="1" height="4"/><rect x="738.77" y="0" width="1" height="4"/><rect x="748.56" y="0" width="1" height="4"/><rect x="758.35" y="0" width="1" height="4"/><rect x="768.14" y="0" width="1" height="4"/><rect x="777.93" y="0" width="1" height="4"/><rect x="787.72" y="0" width="1" height="4"/><rect x="797.51" y="0" width="1" height="4"/><rect x="807.30" y="0" width="1" height="10"/><rect x="817.09" y="0" width="1" height="4"/><rect x="826.88" y="0" width="1" height="4"/><rect x="836.67" y="0" width="1" height="4"/><rect x="846.46" y="0" width="1" height="4"/><rect x="856.25" y="0" width="1" height="4"/><rect x="866.04" y="0" width="1" height="4"/><rect x="875.83" y="0" width="1" height="4"/><rect x="885.62" y="0" width="1" height="4"/><rect x="895.41" y="0" width="1" height="4"/><rect x="905.20" y="0" width="1" height="10"/><rect x="914.99" y="0" width="1" height="4"/><rect x="924.78" y="0" width="1" height="4"/><rect x="934.57" y="0" width="1" height="4"/><rect x="944.36" y="0" width="1" height="4"/><rect x="954.15" y="0" width="1" height="4"/><rect x="963.94" y="0" width="1" height="4"/><rect x="973.73" y="0" width="1" height="4"/><rect x="983.52" y="0" width="1" height="4"/><rect x="993.31" y="0" width="1" height="4"/><rect x="1003.10" y="0" width="1" height="10"/><rect x="1012.89" y="0" width="1" height="4"/><rect x="1022.68" y="0" width="1" height="4"/><rect x="1032.47" y="0" width="1" height="4"/><rect x="1042.26" y="0" width="1" height="4"/><rect x="1052.05" y="0" width="1" height="4"/><rect x="1061.84" y="0" width="1" height="4"/><rect x="1071.63" y="0" width="1" height="4"/><rect x="1081.42" y="0" width="1" height="4"/><rect x="1091.21" y="0" width="1" height="4"/><rect x="1101.00" y="0" width="1" height="10"/><rect x="1110.79" y="0" width="1" height="4"/><rect x="1120.58" y="0" width="1" height="4"/><rect x="1130.37" y="0" width="1" height="4"/><rect x="1140.16" y="0" width="1" height="4"/><rect x="1149.95" y="0" width="1" height="4"/><rect x="1159.74" y="0" width="1" height="4"/><rect x="1169.53" y="0" width="1" height="4"/><rect x="1179.32" y="0" width="1" height="4"/><rect x="1189.11" y="0" width="1" height="4"/><rect x="1198.90" y="0" width="1" height="10"/><rect x="1208.69" y="0" width="1" height="4"/><rect x="1218.48" y="0" width="1" height="4"/><rect x="1228.27" y="0" width="1" height="4"/><rect x="1238.06" y="0" width="1" height="4"/></g></svg>
<div class="rnum" style="left:392px;top:83.6px;transform:rotate(-90deg);transform-origin:0 0;line-height:12px">0</div>
<div class="rnum" style="left:392px;top:181.6px;transform:rotate(-90deg);transform-origin:0 0;line-height:12px">100</div>
<div class="rnum" style="left:392px;top:279.7px;transform:rotate(-90deg);transform-origin:0 0;line-height:12px">200</div>
<div class="rnum" style="left:392px;top:377.7px;transform:rotate(-90deg);transform-origin:0 0;line-height:12px">300</div>
<div class="rnum" style="left:392px;top:475.7px;transform:rotate(-90deg);transform-origin:0 0;line-height:12px">400</div>
<div class="rnum" style="left:392px;top:573.8px;transform:rotate(-90deg);transform-origin:0 0;line-height:12px">500</div>
<div class="rnum" style="left:392px;top:671.8px;transform:rotate(-90deg);transform-origin:0 0;line-height:12px">600</div>
<div class="rnum" style="left:392px;top:769.8px;transform:rotate(-90deg);transform-origin:0 0;line-height:12px">700</div>
<div class="rnum" style="left:392px;top:867.8px;transform:rotate(-90deg);transform-origin:0 0;line-height:12px">800</div>
<svg class="a" style="left:384px;top:75px" width="20" height="837"><g fill="#c4c4c4"><rect x="0" y="0.80" width="5" height="1"/><rect x="0" y="10.60" width="11" height="1"/><rect x="0" y="20.40" width="5" height="1"/><rect x="0" y="30.21" width="5" height="1"/><rect x="0" y="40.01" width="5" height="1"/><rect x="0" y="49.81" width="5" height="1"/><rect x="0" y="59.62" width="5" height="1"/><rect x="0" y="69.42" width="5" height="1"/><rect x="0" y="79.22" width="5" height="1"/><rect x="0" y="89.02" width="5" height="1"/><rect x="0" y="98.83" width="5" height="1"/><rect x="0" y="108.63" width="11" height="1"/><rect x="0" y="118.43" width="5" height="1"/><rect x="0" y="128.24" width="5" height="1"/><rect x="0" y="138.04" width="5" height="1"/><rect x="0" y="147.84" width="5" height="1"/><rect x="0" y="157.64" width="5" height="1"/><rect x="0" y="167.45" width="5" height="1"/><rect x="0" y="177.25" width="5" height="1"/><rect x="0" y="187.05" width="5" height="1"/><rect x="0" y="196.86" width="5" height="1"/><rect x="0" y="206.66" width="11" height="1"/><rect x="0" y="216.46" width="5" height="1"/><rect x="0" y="226.27" width="5" height="1"/><rect x="0" y="236.07" width="5" height="1"/><rect x="0" y="245.87" width="5" height="1"/><rect x="0" y="255.67" width="5" height="1"/><rect x="0" y="265.48" width="5" height="1"/><rect x="0" y="275.28" width="5" height="1"/><rect x="0" y="285.08" width="5" height="1"/><rect x="0" y="294.89" width="5" height="1"/><rect x="0" y="304.69" width="11" height="1"/><rect x="0" y="314.49" width="5" height="1"/><rect x="0" y="324.30" width="5" height="1"/><rect x="0" y="334.10" width="5" height="1"/><rect x="0" y="343.90" width="5" height="1"/><rect x="0" y="353.70" width="5" height="1"/><rect x="0" y="363.51" width="5" height="1"/><rect x="0" y="373.31" width="5" height="1"/><rect x="0" y="383.11" width="5" height="1"/><rect x="0" y="392.92" width="5" height="1"/><rect x="0" y="402.72" width="11" height="1"/><rect x="0" y="412.52" width="5" height="1"/><rect x="0" y="422.33" width="5" height="1"/><rect x="0" y="432.13" width="5" height="1"/><rect x="0" y="441.93" width="5" height="1"/><rect x="0" y="451.74" width="5" height="1"/><rect x="0" y="461.54" width="5" height="1"/><rect x="0" y="471.34" width="5" height="1"/><rect x="0" y="481.14" width="5" height="1"/><rect x="0" y="490.95" width="5" height="1"/><rect x="0" y="500.75" width="11" height="1"/><rect x="0" y="510.55" width="5" height="1"/><rect x="0" y="520.36" width="5" height="1"/><rect x="0" y="530.16" width="5" height="1"/><rect x="0" y="539.96" width="5" height="1"/><rect x="0" y="549.76" width="5" height="1"/><rect x="0" y="559.57" width="5" height="1"/><rect x="0" y="569.37" width="5" height="1"/><rect x="0" y="579.17" width="5" height="1"/><rect x="0" y="588.98" width="5" height="1"/><rect x="0" y="598.78" width="11" height="1"/><rect x="0" y="608.58" width="5" height="1"/><rect x="0" y="618.39" width="5" height="1"/><rect x="0" y="628.19" width="5" height="1"/><rect x="0" y="637.99" width="5" height="1"/><rect x="0" y="647.79" width="5" height="1"/><rect x="0" y="657.60" width="5" height="1"/><rect x="0" y="667.40" width="5" height="1"/><rect x="0" y="677.20" width="5" height="1"/><rect x="0" y="687.01" width="5" height="1"/><rect x="0" y="696.81" width="11" height="1"/><rect x="0" y="706.61" width="5" height="1"/><rect x="0" y="716.42" width="5" height="1"/><rect x="0" y="726.22" width="5" height="1"/><rect x="0" y="736.02" width="5" height="1"/><rect x="0" y="745.82" width="5" height="1"/><rect x="0" y="755.63" width="5" height="1"/><rect x="0" y="765.43" width="5" height="1"/><rect x="0" y="775.23" width="5" height="1"/><rect x="0" y="785.04" width="5" height="1"/><rect x="0" y="794.84" width="11" height="1"/><rect x="0" y="804.64" width="5" height="1"/><rect x="0" y="814.45" width="5" height="1"/><rect x="0" y="824.25" width="5" height="1"/><rect x="0" y="834.05" width="5" height="1"/></g></svg>
<div class="a" style="left:384px;top:54px;width:1516px;height:1px;background:#ececec"></div>
<div class="a" style="left:394px;top:436px;width:42px;height:105px;border-radius:9px;background:rgba(0,0,0,.105);overflow:hidden"><div class="a" style="left:0;top:72px;width:42px;height:1.5px;background:rgba(255,255,255,.45)"></div></div>
<div class="a" style="left:1596px;top:436px;width:42px;height:105px;border-radius:9px;background:rgba(0,0,0,.105);overflow:hidden"><div class="a" style="left:0;top:72px;width:42px;height:1.5px;background:rgba(255,255,255,.45)"></div></div>
<svg class="a" style="left:394px;top:436px" width="42" height="105"><g transform="translate(-394,-436)" fill="none" stroke="#222" stroke-width="1.7"><path d="M419 464 L411 472.6 L419 481.4"/><path d="M412 519.8 V531.4"/><path d="M420 521.6 L415 525.6 L420 529.6" stroke-width="1.8"/></g></svg>
<svg class="a" style="left:1596px;top:436px" width="42" height="105"><g transform="translate(-1596,-436)" fill="none" stroke="#222" stroke-width="1.7"><path d="M1613 464 L1621.2 472.6 L1613 481.4"/><path d="M1621 519.8 V531.4"/><path d="M1612.5 521.6 L1617.5 525.6 L1612.5 529.6" stroke-width="1.8"/></g></svg>
<div class="a" style="left:404px;top:893px;width:1244px;height:1px;background:rgba(255,255,255,.45)"></div>
<div class="pg" style="left:721px;top:84px"><div class="a" style="left:284px;top:0;width:293px;height:631px;background:#f1f2f4"></div>
<div class="a" style="left:262px;top:396px;width:82px;height:18.7px;background:#e8e8e9"></div>
<div class="a" style="left:61.2px;top:71.0px;width:29px;height:25px;overflow:hidden"><div style="width:29px;height:29px;border-radius:50%;background:#ac2a2a"></div><div class="a" style="left:0;top:9px;width:29px;text-align:center;color:#fff;font-size:16px;line-height:18px;letter-spacing:-0.6px">01</div></div><div class="a" style="left:98.0px;top:72.5px;font-size:19px;letter-spacing:0.45px;line-height:22px;color:#ac2a2a;-webkit-text-stroke:0.45px #ac2a2a;white-space:nowrap">万彩公司内刊</div>
<div class="a" style="left:311px;top:72px;width:228px;height:152px;overflow:hidden"><svg width="228" height="152" viewBox="0 0 228 152" preserveAspectRatio="none" style="display:block"><use href="#ph1"/></svg></div>
<div class="tl" style="left:48.0px;top:134.5px;letter-spacing:-0.196px">云展网创致力于为上传者提供文档转换存储服务-上传PDF转换</div>
<div class="tl" style="left:35.0px;top:150.2px;letter-spacing:0.035px">为3D翻页电子书，自动生成链接和二维码，用于微信/网站/电脑/</div>
<div class="tl" style="left:35.0px;top:166.0px;letter-spacing:-0.082px">手机/平板阅读分享。目前已有上百万上传者在云展网上传画册/杂</div>
<div class="tl" style="left:35.0px;top:181.7px;letter-spacing:0.121px">志/内刊/文档等。云展网创立于2014年，致力于为上传者提供文</div>
<div class="tl" style="left:35.0px;top:197.5px;letter-spacing:-0.093px">档转换存储服务-上传PDF转换为3D翻页电子书，自动生成链接和</div>
<div class="tl" style="left:35.0px;top:213.2px;letter-spacing:0.036px">二维码，用于微信/网站/电脑/手机/平板阅读分享。目前已有上百</div>
<div class="tl" style="left:35.0px;top:228.9px;letter-spacing:0.036px">万上传者（包括政府/学校/知名企业等）在云展网上传画册/杂志/</div>
<div class="tl" style="left:35.0px;top:244.7px;letter-spacing:-0.096px">内刊/文档等。云展网致力于为上传者提供文档转换存储服务-上传</div>
<div class="tl" style="left:35.0px;top:260.4px;letter-spacing:-0.079px">PDF转换为3D翻页电子书，自动生成链接和二维码，用于微信/网</div>
<div class="tl" style="left:35.0px;top:276.2px;letter-spacing:0.111px">站/电脑/手机/平板阅读分享。目前已有上百万上传者在云展网上</div>
<div class="tl" style="left:35.0px;top:291.9px;letter-spacing:-0.216px">传画册/杂志/内刊/文档等。</div>
<div class="a" style="left:322.5px;top:260.8px;width:29px;height:25px;overflow:hidden"><div style="width:29px;height:29px;border-radius:50%;background:#ac2a2a"></div><div class="a" style="left:0;top:9px;width:29px;text-align:center;color:#fff;font-size:16px;line-height:18px;letter-spacing:-0.6px">02</div></div><div class="a" style="left:360.0px;top:261.5px;font-size:19px;letter-spacing:0.45px;line-height:22px;color:#ac2a2a;-webkit-text-stroke:0.45px #ac2a2a;white-space:nowrap">万彩公司简介</div>
<div class="tl" style="left:319.4px;top:316.0px;letter-spacing:-0.196px">云展网创致力于为上传者提供文档转换存储服务-上传PDF转换</div>
<div class="tl" style="left:306.4px;top:331.7px;letter-spacing:0.035px">为3D翻页电子书，自动生成链接和二维码，用于微信/网站/电脑/</div>
<div class="tl" style="left:306.4px;top:347.5px;letter-spacing:-0.082px">手机/平板阅读分享。目前已有上百万上传者在云展网上传画册/杂</div>
<div class="tl" style="left:306.4px;top:363.2px;letter-spacing:0.121px">志/内刊/文档等。云展网创立于2014年，致力于为上传者提供文</div>
<div class="tl" style="left:306.4px;top:379.0px;letter-spacing:-0.093px">档转换存储服务-上传PDF转换为3D翻页电子书，自动生成链接和</div>
<div class="tl" style="left:306.4px;top:394.7px;letter-spacing:-0.226px">二维码，用于微信/网站/电脑/手机/平板阅读分享。</div>
<div class="a" style="left:33.6px;top:335.3px;width:228px;height:151.3px;overflow:hidden"><svg width="228" height="151" viewBox="0 0 228 151" preserveAspectRatio="none" style="display:block"><use href="#ph2"/></svg></div>
<div class="tl" style="left:319.4px;top:435.7px;letter-spacing:-0.196px">云展网创致力于为上传者提供文档转换存储服务-上传PDF转换</div>
<div class="tl" style="left:306.4px;top:451.4px;letter-spacing:0.035px">为3D翻页电子书，自动生成链接和二维码，用于微信/网站/电脑/</div>
<div class="tl" style="left:306.4px;top:467.2px;letter-spacing:-0.082px">手机/平板阅读分享。目前已有上百万上传者在云展网上传画册/杂</div>
<div class="tl" style="left:306.4px;top:482.9px;letter-spacing:0.121px">志/内刊/文档等。云展网创立于2014年，致力于为上传者提供文</div>
<div class="tl" style="left:306.4px;top:498.7px;letter-spacing:-0.093px">档转换存储服务-上传PDF转换为3D翻页电子书，自动生成链接和</div>
<div class="tl" style="left:306.4px;top:514.4px;letter-spacing:0.036px">二维码，用于微信/网站/电脑/手机/平板阅读分享。目前已有上百</div>
<div class="tl" style="left:306.4px;top:530.1px;letter-spacing:0.036px">万上传者（包括政府/学校/知名企业等）在云展网上传画册/杂志/</div>
<div class="tl" style="left:306.4px;top:545.9px;letter-spacing:-0.096px">内刊/文档等。云展网致力于为上传者提供文档转换存储服务-上传</div>
<div class="tl" style="left:306.4px;top:561.6px;letter-spacing:-0.079px">PDF转换为3D翻页电子书，自动生成链接和二维码，用于微信/网</div>
<div class="tl" style="left:306.4px;top:577.4px;letter-spacing:0.111px">站/电脑/手机/平板阅读分享。目前已有上百万上传者在云展网上</div>
<div class="tl" style="left:306.4px;top:593.1px;letter-spacing:-0.216px">传画册/杂志/内刊/文档等。</div>
<div class="tl" style="left:48.0px;top:518.9px;letter-spacing:-0.196px">云展网创致力于为上传者提供文档转换存储服务-上传PDF转换</div>
<div class="tl" style="left:35.0px;top:534.6px;letter-spacing:0.035px">为3D翻页电子书，自动生成链接和二维码，用于微信/网站/电脑/</div>
<div class="tl" style="left:35.0px;top:550.4px;letter-spacing:-0.082px">手机/平板阅读分享。目前已有上百万上传者在云展网上传画册/杂</div>
<div class="tl" style="left:35.0px;top:566.1px;letter-spacing:0.121px">志/内刊/文档等。云展网创立于2014年，致力于为上传者提供文</div>
<div class="tl" style="left:35.0px;top:581.9px;letter-spacing:-0.093px">档转换存储服务-上传PDF转换为3D翻页电子书，自动生成链接和</div>
<div class="tl" style="left:35.0px;top:597.6px;letter-spacing:-0.226px">二维码，用于微信/网站/电脑/手机/平板阅读分享。</div>
<div class="a" style="left:22.7px;top:631px;width:523.2px;height:113px;overflow:hidden"><svg width="523" height="113" viewBox="0 0 523 113" preserveAspectRatio="none" style="display:block"><use href="#ph3"/></svg></div>
<div class="a" style="left:23px;top:778.5px;font-size:8px;line-height:12px;color:#444;white-space:nowrap"><span style="font-size:7px">&#9654;</span> <b style="letter-spacing:0.3px">01|</b><span style="-webkit-text-stroke:0.3px #555;color:#555">领导寄语</span></div>
<div class="cap" style="left:33.6px;top:464.5px;width:228px;text-align:center">*图片源于网络，禁止商业用途</div>
<div class="cap" style="left:311px;top:202.5px;width:228px;text-align:center">*图片源于网络，禁止商业用途</div>
<div class="cap" style="left:35px;top:644px">*图片源于网络，禁止商业用途</div><svg class="a" style="left:0;top:0" width="591" height="810"><g stroke="#dcd6cf" stroke-width="1" stroke-dasharray="3 2"><line x1="45.5" y1="0" x2="45.5" y2="810"/><line x1="90.5" y1="0" x2="90.5" y2="810"/><line x1="135.5" y1="0" x2="135.5" y2="810"/><line x1="181.5" y1="0" x2="181.5" y2="810"/><line x1="226.5" y1="0" x2="226.5" y2="810"/><line x1="271.5" y1="0" x2="271.5" y2="810"/><line x1="316.5" y1="0" x2="316.5" y2="810"/><line x1="361.5" y1="0" x2="361.5" y2="810"/><line x1="406.5" y1="0" x2="406.5" y2="810"/><line x1="451.5" y1="0" x2="451.5" y2="810"/><line x1="496.5" y1="0" x2="496.5" y2="810"/><line x1="541.5" y1="0" x2="541.5" y2="810"/><line x1="586.5" y1="0" x2="586.5" y2="810"/><line x1="0" y1="45.5" x2="591" y2="45.5"/><line x1="0" y1="90.5" x2="591" y2="90.5"/><line x1="0" y1="136.5" x2="591" y2="136.5"/><line x1="0" y1="181.5" x2="591" y2="181.5"/><line x1="0" y1="226.5" x2="591" y2="226.5"/><line x1="0" y1="271.5" x2="591" y2="271.5"/><line x1="0" y1="316.5" x2="591" y2="316.5"/><line x1="0" y1="361.5" x2="591" y2="361.5"/><line x1="0" y1="406.5" x2="591" y2="406.5"/><line x1="0" y1="451.5" x2="591" y2="451.5"/><line x1="0" y1="496.5" x2="591" y2="496.5"/><line x1="0" y1="541.5" x2="591" y2="541.5"/><line x1="0" y1="586.5" x2="591" y2="586.5"/><line x1="0" y1="631.5" x2="591" y2="631.5"/><line x1="0" y1="676.5" x2="591" y2="676.5"/><line x1="0" y1="721.5" x2="591" y2="721.5"/><line x1="0" y1="766.5" x2="591" y2="766.5"/></g></svg>
<svg class="a" style="left:311px;top:72px" width="228" height="152"><g stroke="#fff" stroke-opacity=".85" stroke-width="1" stroke-dasharray="3 2"><line x1="5.5" y1="0" x2="5.5" y2="152"/><line x1="50.5" y1="0" x2="50.5" y2="152"/><line x1="95.5" y1="0" x2="95.5" y2="152"/><line x1="140.5" y1="0" x2="140.5" y2="152"/><line x1="185.5" y1="0" x2="185.5" y2="152"/><line x1="0" y1="18.5" x2="228" y2="18.5"/><line x1="0" y1="64.5" x2="228" y2="64.5"/><line x1="0" y1="109.5" x2="228" y2="109.5"/></g></svg>
<svg class="a" style="left:33.6px;top:335.3px" width="228" height="151.3"><g stroke="#fff" stroke-opacity=".85" stroke-width="1" stroke-dasharray="3 2"><line x1="11.899999999999999" y1="0" x2="11.899999999999999" y2="151.3"/><line x1="56.9" y1="0" x2="56.9" y2="151.3"/><line x1="101.9" y1="0" x2="101.9" y2="151.3"/><line x1="147.9" y1="0" x2="147.9" y2="151.3"/><line x1="192.9" y1="0" x2="192.9" y2="151.3"/><line x1="0" y1="26.19999999999999" x2="228" y2="26.19999999999999"/><line x1="0" y1="71.19999999999999" x2="228" y2="71.19999999999999"/><line x1="0" y1="116.19999999999999" x2="228" y2="116.19999999999999"/></g></svg>
<svg class="a" style="left:22.7px;top:631px" width="523.2" height="113"><g stroke="#fff" stroke-opacity=".85" stroke-width="1" stroke-dasharray="3 2"><line x1="22.8" y1="0" x2="22.8" y2="113"/><line x1="67.8" y1="0" x2="67.8" y2="113"/><line x1="112.8" y1="0" x2="112.8" y2="113"/><line x1="158.8" y1="0" x2="158.8" y2="113"/><line x1="203.8" y1="0" x2="203.8" y2="113"/><line x1="248.8" y1="0" x2="248.8" y2="113"/><line x1="293.8" y1="0" x2="293.8" y2="113"/><line x1="338.8" y1="0" x2="338.8" y2="113"/><line x1="383.8" y1="0" x2="383.8" y2="113"/><line x1="428.8" y1="0" x2="428.8" y2="113"/><line x1="473.8" y1="0" x2="473.8" y2="113"/><line x1="518.8" y1="0" x2="518.8" y2="113"/><line x1="0" y1="0.5" x2="523.2" y2="0.5"/><line x1="0" y1="45.5" x2="523.2" y2="45.5"/><line x1="0" y1="90.5" x2="523.2" y2="90.5"/></g></svg>
<div class="gn" style="left:4px;top:3px">1</div>
<div class="gn" style="left:49px;top:3px">2</div>
<div class="gn" style="left:94px;top:3px">3</div>
<div class="gn" style="left:139px;top:3px">4</div>
<div class="gn" style="left:184px;top:3px">5</div>
<div class="gn" style="left:229px;top:3px">6</div>
<div class="gn" style="left:274px;top:3px">7</div>
<div class="gn" style="left:319px;top:3px">8</div>
<div class="gn" style="left:364px;top:3px">9</div>
<div class="gn" style="left:409px;top:3px">10</div>
<div class="gn" style="left:454px;top:3px">11</div>
<div class="gn" style="left:499px;top:3px">12</div>
<div class="gn" style="left:544px;top:3px">13</div>
<div class="gn" style="left:4px;top:48px">2</div>
<div class="gn" style="left:4px;top:93px">3</div>
<div class="gn" style="left:4px;top:138px">4</div>
<div class="gn" style="left:4px;top:183px">5</div>
<div class="gn" style="left:4px;top:228px">6</div>
<div class="gn" style="left:4px;top:273px">7</div>
<div class="gn" style="left:4px;top:318px">8</div>
<div class="gn" style="left:4px;top:363px">9</div>
<div class="gn" style="left:4px;top:408px">10</div>
<div class="gn" style="left:4px;top:453px">11</div>
<div class="gn" style="left:4px;top:498px">12</div>
<div class="gn" style="left:4px;top:543px">13</div>
<div class="gn" style="left:4px;top:588px">14</div>
<div class="gn" style="left:4px;top:633px">15</div>
<div class="gn" style="left:4px;top:678px">16</div>
<div class="gn" style="left:4px;top:723px">17</div>
<div class="gn" style="left:4px;top:768px">18</div><svg class="a" style="left:0;top:0" width="591" height="810"><rect x="0.75" y="0.75" width="589.5" height="808.5" fill="none" stroke="#6a6a6a" stroke-width="1.3" stroke-dasharray="3.5 1.5"/></svg></div>
<div class="a" style="left:1509px;top:881px;width:131px;height:40px;border-radius:7px;background:#fff;box-shadow:0 0 8px rgba(0,0,0,.08)"></div>
<svg class="a" style="left:1522px;top:890px" width="15" height="15" viewBox="0 0 15 15"><path d="M4 4.5 H2.5 a1.5 1.5 0 0 0-1.5 1.5 v3.5 a1.5 1.5 0 0 0 1.5 1.5 H4 M11 4.5 h1.5 a1.5 1.5 0 0 1 1.5 1.5 v3.5 a1.5 1.5 0 0 1-1.5 1.5 H11 M4.5 1.8 h6 M7.5 1.8 V14" fill="none" stroke="#222" stroke-width="1.8"/></svg>
<div class="a" style="left:1542px;top:888px;font-size:13px;line-height:18px;color:#333">图层/时间轴</div>
<svg class="a" style="left:1614px;top:890px" width="12" height="14" viewBox="0 0 12 14"><path d="M1.5 7 L6 2.5 L10.5 7 M1.5 12 L6 7.5 L10.5 12" fill="none" stroke="#222" stroke-width="1.5"/></svg>
<div class="a" id="rp"></div>
<div class="a" style="left:1661px;top:71px;font-size:13px;line-height:16px;font-weight:bold;color:#333">页面尺寸</div>
<div class="a" style="left:1716px;top:73px;width:12px;height:12px;border-radius:50%;background:#c0c0c0;color:#fff;font-size:9px;line-height:12px;text-align:center;font-weight:bold;font-family:'Liberation Serif',serif">i</div>
<div class="a" style="left:1661px;top:97px;width:118px;height:34px;border:1px solid #dcdde0;border-radius:5px;background:#f3f4f8"></div>
<div class="a" style="left:1672px;top:105px;font-size:13px;line-height:18px;color:#333">450.96</div>
<div class="a" style="left:1760px;top:105px;font-size:13px;line-height:18px;color:#bbb">宽</div>
<div class="a" style="left:1789px;top:97px;width:130px;height:34px;border:1px solid #dcdde0;border-radius:5px;background:#f3f4f8"></div>
<div class="a" style="left:1799px;top:105px;font-size:13px;line-height:18px;color:#333">618.96</div>
<div class="a" style="left:1888px;top:105px;font-size:13px;line-height:18px;color:#bbb">高</div>
<div class="a" style="left:1661px;top:146px;width:239px;height:1px;background:#e2e2e2"></div>
<div class="a" style="left:1661px;top:163px;font-size:13px;line-height:16px;font-weight:bold;color:#333">背景</div>
<div class="a" style="left:1661px;top:194px;width:250px;height:34px;border-radius:6px;background:#e9e9ea"></div>
<div class="a" style="left:1663px;top:196px;width:121px;height:30px;border-radius:5px;background:#fff"></div>
<div class="a" style="left:1710px;top:202px;font-size:13px;line-height:18px;color:#1a90f0">图片</div>
<div class="a" style="left:1830px;top:202px;font-size:13px;line-height:18px;color:#333">颜色</div>
<div class="a" style="left:1661px;top:238px;width:250px;height:123px;border-radius:6px;background:#e6e7e8;border:1px solid #e0e0e0"></div>
<div class="a" style="left:1740px;top:239px;width:89px;height:121px"><div class="a" style="left:0;top:0;width:89px;height:121px;overflow:hidden;background:#f6f7f9"><div class="pg thumbp" style="left:0;top:0;transform:scale(0.15059,0.14938);transform-origin:0 0"><div class="a" style="left:284px;top:0;width:293px;height:631px;background:#f1f2f4"></div>
<div class="a" style="left:262px;top:396px;width:82px;height:18.7px;background:#e8e8e9"></div>
<div class="a" style="left:61.2px;top:71.0px;width:29px;height:25px;overflow:hidden"><div style="width:29px;height:29px;border-radius:50%;background:#ac2a2a"></div><div class="a" style="left:0;top:9px;width:29px;text-align:center;color:#fff;font-size:16px;line-height:18px;letter-spacing:-0.6px">01</div></div><div class="a" style="left:98.0px;top:72.5px;font-size:19px;letter-spacing:0.45px;line-height:22px;color:#ac2a2a;-webkit-text-stroke:0.45px #ac2a2a;white-space:nowrap">万彩公司内刊</div>
<div class="a" style="left:311px;top:72px;width:228px;height:152px;overflow:hidden"><svg width="228" height="152" viewBox="0 0 228 152" preserveAspectRatio="none" style="display:block"><use href="#ph1"/></svg></div>
<div class="tl" style="left:48.0px;top:134.5px;letter-spacing:-0.196px">云展网创致力于为上传者提供文档转换存储服务-上传PDF转换</div>
<div class="tl" style="left:35.0px;top:150.2px;letter-spacing:0.035px">为3D翻页电子书，自动生成链接和二维码，用于微信/网站/电脑/</div>
<div class="tl" style="left:35.0px;top:166.0px;letter-spacing:-0.082px">手机/平板阅读分享。目前已有上百万上传者在云展网上传画册/杂</div>
<div class="tl" style="left:35.0px;top:181.7px;letter-spacing:0.121px">志/内刊/文档等。云展网创立于2014年，致力于为上传者提供文</div>
<div class="tl" style="left:35.0px;top:197.5px;letter-spacing:-0.093px">档转换存储服务-上传PDF转换为3D翻页电子书，自动生成链接和</div>
<div class="tl" style="left:35.0px;top:213.2px;letter-spacing:0.036px">二维码，用于微信/网站/电脑/手机/平板阅读分享。目前已有上百</div>
<div class="tl" style="left:35.0px;top:228.9px;letter-spacing:0.036px">万上传者（包括政府/学校/知名企业等）在云展网上传画册/杂志/</div>
<div class="tl" style="left:35.0px;top:244.7px;letter-spacing:-0.096px">内刊/文档等。云展网致力于为上传者提供文档转换存储服务-上传</div>
<div class="tl" style="left:35.0px;top:260.4px;letter-spacing:-0.079px">PDF转换为3D翻页电子书，自动生成链接和二维码，用于微信/网</div>
<div class="tl" style="left:35.0px;top:276.2px;letter-spacing:0.111px">站/电脑/手机/平板阅读分享。目前已有上百万上传者在云展网上</div>
<div class="tl" style="left:35.0px;top:291.9px;letter-spacing:-0.216px">传画册/杂志/内刊/文档等。</div>
<div class="a" style="left:322.5px;top:260.8px;width:29px;height:25px;overflow:hidden"><div style="width:29px;height:29px;border-radius:50%;background:#ac2a2a"></div><div class="a" style="left:0;top:9px;width:29px;text-align:center;color:#fff;font-size:16px;line-height:18px;letter-spacing:-0.6px">02</div></div><div class="a" style="left:360.0px;top:261.5px;font-size:19px;letter-spacing:0.45px;line-height:22px;color:#ac2a2a;-webkit-text-stroke:0.45px #ac2a2a;white-space:nowrap">万彩公司简介</div>
<div class="tl" style="left:319.4px;top:316.0px;letter-spacing:-0.196px">云展网创致力于为上传者提供文档转换存储服务-上传PDF转换</div>
<div class="tl" style="left:306.4px;top:331.7px;letter-spacing:0.035px">为3D翻页电子书，自动生成链接和二维码，用于微信/网站/电脑/</div>
<div class="tl" style="left:306.4px;top:347.5px;letter-spacing:-0.082px">手机/平板阅读分享。目前已有上百万上传者在云展网上传画册/杂</div>
<div class="tl" style="left:306.4px;top:363.2px;letter-spacing:0.121px">志/内刊/文档等。云展网创立于2014年，致力于为上传者提供文</div>
<div class="tl" style="left:306.4px;top:379.0px;letter-spacing:-0.093px">档转换存储服务-上传PDF转换为3D翻页电子书，自动生成链接和</div>
<div class="tl" style="left:306.4px;top:394.7px;letter-spacing:-0.226px">二维码，用于微信/网站/电脑/手机/平板阅读分享。</div>
<div class="a" style="left:33.6px;top:335.3px;width:228px;height:151.3px;overflow:hidden"><svg width="228" height="151" viewBox="0 0 228 151" preserveAspectRatio="none" style="display:block"><use href="#ph2"/></svg></div>
<div class="tl" style="left:319.4px;top:435.7px;letter-spacing:-0.196px">云展网创致力于为上传者提供文档转换存储服务-上传PDF转换</div>
<div class="tl" style="left:306.4px;top:451.4px;letter-spacing:0.035px">为3D翻页电子书，自动生成链接和二维码，用于微信/网站/电脑/</div>
<div class="tl" style="left:306.4px;top:467.2px;letter-spacing:-0.082px">手机/平板阅读分享。目前已有上百万上传者在云展网上传画册/杂</div>
<div class="tl" style="left:306.4px;top:482.9px;letter-spacing:0.121px">志/内刊/文档等。云展网创立于2014年，致力于为上传者提供文</div>
<div class="tl" style="left:306.4px;top:498.7px;letter-spacing:-0.093px">档转换存储服务-上传PDF转换为3D翻页电子书，自动生成链接和</div>
<div class="tl" style="left:306.4px;top:514.4px;letter-spacing:0.036px">二维码，用于微信/网站/电脑/手机/平板阅读分享。目前已有上百</div>
<div class="tl" style="left:306.4px;top:530.1px;letter-spacing:0.036px">万上传者（包括政府/学校/知名企业等）在云展网上传画册/杂志/</div>
<div class="tl" style="left:306.4px;top:545.9px;letter-spacing:-0.096px">内刊/文档等。云展网致力于为上传者提供文档转换存储服务-上传</div>
<div class="tl" style="left:306.4px;top:561.6px;letter-spacing:-0.079px">PDF转换为3D翻页电子书，自动生成链接和二维码，用于微信/网</div>
<div class="tl" style="left:306.4px;top:577.4px;letter-spacing:0.111px">站/电脑/手机/平板阅读分享。目前已有上百万上传者在云展网上</div>
<div class="tl" style="left:306.4px;top:593.1px;letter-spacing:-0.216px">传画册/杂志/内刊/文档等。</div>
<div class="tl" style="left:48.0px;top:518.9px;letter-spacing:-0.196px">云展网创致力于为上传者提供文档转换存储服务-上传PDF转换</div>
<div class="tl" style="left:35.0px;top:534.6px;letter-spacing:0.035px">为3D翻页电子书，自动生成链接和二维码，用于微信/网站/电脑/</div>
<div class="tl" style="left:35.0px;top:550.4px;letter-spacing:-0.082px">手机/平板阅读分享。目前已有上百万上传者在云展网上传画册/杂</div>
<div class="tl" style="left:35.0px;top:566.1px;letter-spacing:0.121px">志/内刊/文档等。云展网创立于2014年，致力于为上传者提供文</div>
<div class="tl" style="left:35.0px;top:581.9px;letter-spacing:-0.093px">档转换存储服务-上传PDF转换为3D翻页电子书，自动生成链接和</div>
<div class="tl" style="left:35.0px;top:597.6px;letter-spacing:-0.226px">二维码，用于微信/网站/电脑/手机/平板阅读分享。</div>
<div class="a" style="left:22.7px;top:631px;width:523.2px;height:113px;overflow:hidden"><svg width="523" height="113" viewBox="0 0 523 113" preserveAspectRatio="none" style="display:block"><use href="#ph3"/></svg></div>
<div class="a" style="left:23px;top:778.5px;font-size:8px;line-height:12px;color:#444;white-space:nowrap"><span style="font-size:7px">&#9654;</span> <b style="letter-spacing:0.3px">01|</b><span style="-webkit-text-stroke:0.3px #555;color:#555">领导寄语</span></div>
<div class="cap" style="left:33.6px;top:464.5px;width:228px;text-align:center">*图片源于网络，禁止商业用途</div>
<div class="cap" style="left:311px;top:202.5px;width:228px;text-align:center">*图片源于网络，禁止商业用途</div>
<div class="cap" style="left:35px;top:644px">*图片源于网络，禁止商业用途</div></div></div></div>
<div class="a" style="left:1880px;top:334px;width:26px;height:20px;border-radius:5px;background:#2a2d30"></div>
<svg class="a" style="left:1884px;top:337px" width="14" height="14" viewBox="0 0 16 16"><path d="M2.5 4.5 h11 M6 4.5 V2.8 h4 v1.7 M4 4.5 l.8 9 h6.4 l.8-9 M6.8 7 v4.5 M9.2 7 v4.5" fill="none" stroke="#fff" stroke-width="1.4"/></svg>
<div class="a" style="left:1661px;top:372px;width:250px;height:34px;border-radius:6px;background:#fff;border:1px solid #dcdcdc"></div>
<div class="a" style="left:1744px;top:380px;font-size:13px;line-height:18px;color:#333">点击上传图片</div>
<div class="a" style="left:1661px;top:417px;font-size:12.5px;line-height:16px;color:#999;white-space:nowrap;letter-spacing:0.22px">推荐尺寸：450.96x618.96px</div>
<div class="a" style="left:1829px;top:419px;width:12px;height:12px;border-radius:50%;background:#c0c0c0;color:#fff;font-size:9px;line-height:12px;text-align:center;font-weight:bold;font-family:'Liberation Serif',serif">i</div>
<div class="a" style="left:1661px;top:448px;width:239px;height:1px;background:#e2e2e2"></div>
<div class="a" style="left:1661px;top:466px;font-size:13px;line-height:16px;font-weight:bold;color:#333">显示打印出血位</div>
<div class="a" style="left:1866px;top:464px;width:44px;height:20px;border-radius:10px;background:#dcdcdc"></div>
<div class="a" style="left:1868px;top:466px;width:16px;height:16px;border-radius:50%;background:#fff"></div>
<div class="a" style="left:1661px;top:499px;width:239px;height:1px;background:#e2e2e2"></div>
</body></html>
